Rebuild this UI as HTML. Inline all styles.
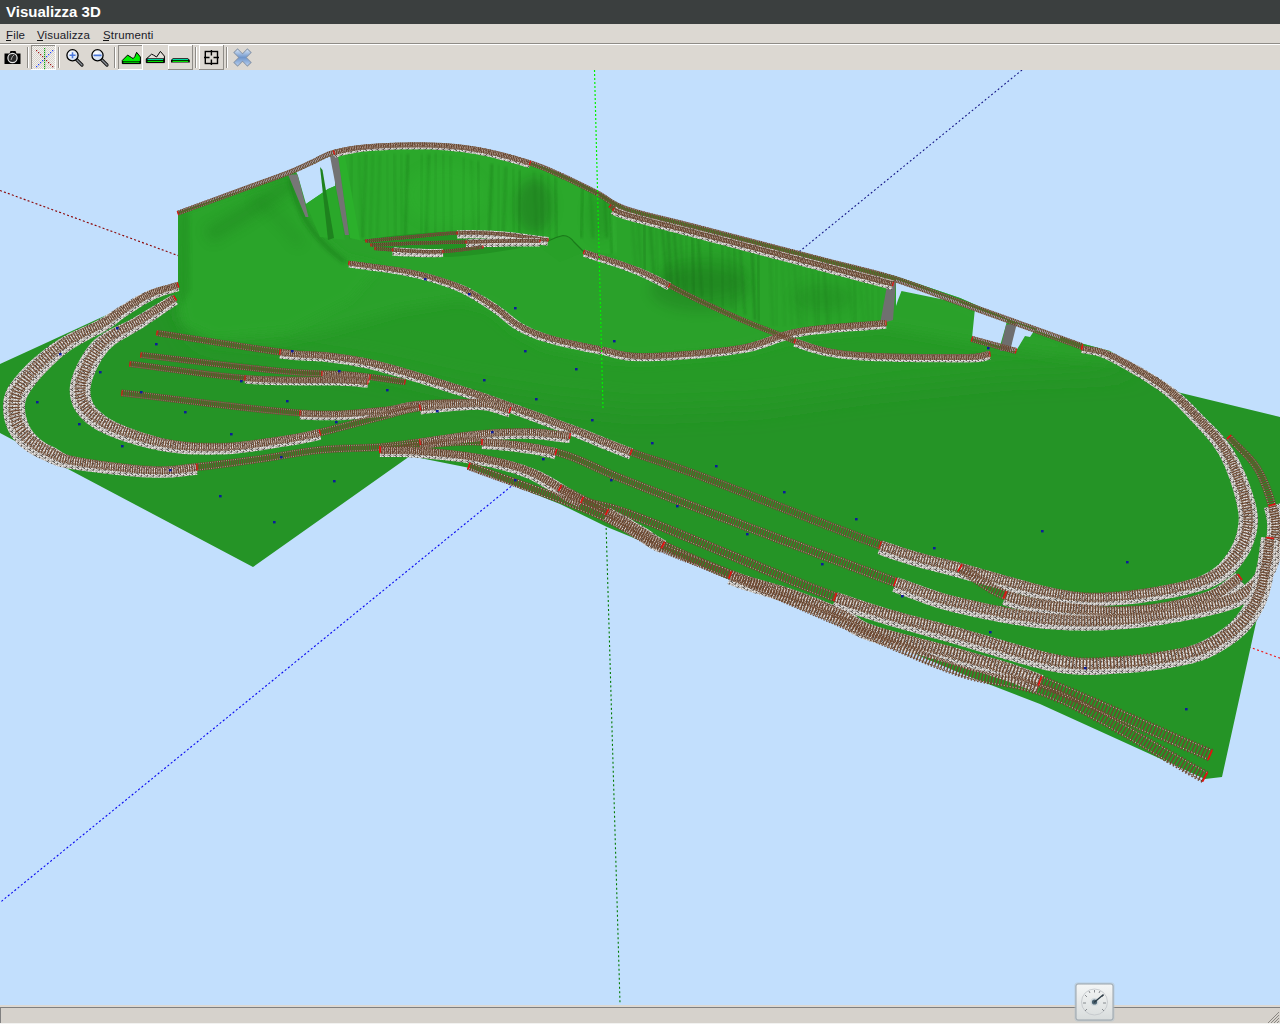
<!DOCTYPE html>
<html><head><meta charset="utf-8">
<style>
html,body{margin:0;padding:0;width:1280px;height:1024px;overflow:hidden;background:#c2dffd;font-family:"Liberation Sans",sans-serif}
#title{position:absolute;left:0;top:0;width:1280px;height:24px;background:#3b3f3f}
#title span{position:absolute;left:6px;top:3px;font:bold 15px "Liberation Sans",sans-serif;color:#fff}
#menu{position:absolute;left:0;top:24px;width:1280px;height:19px;background:#dcd8d2}
#menu span{position:absolute;top:3px;font-size:12px;color:#1a1a1a;line-height:14px}
#menu span u{text-decoration:none;border-bottom:1px solid #1a1a1a}
#scene{position:absolute;left:0;top:70px}
</style></head><body>
<div id="title"><span>Visualizza 3D</span></div>
<div id="menu"><svg width="200" height="19" style="position:absolute;left:0;top:0"><g font-family="Liberation Sans" font-size="11.5" fill="#1a1a28" letter-spacing="0.15"><text x="6" y="15">File</text><text x="37" y="15">Visualizza</text><text x="103" y="15">Strumenti</text></g><g fill="#111"><rect x="6" y="16" width="5" height="1"/><rect x="37" y="16" width="6" height="1"/><rect x="103" y="16" width="6" height="1"/></g></svg></div>
<svg width="1280" height="27" viewBox="0 43 1280 27" style="position:absolute;left:0;top:43px">
<defs>
<pattern id="chk" width="2" height="2" patternUnits="userSpaceOnUse"><rect width="2" height="2" fill="#f4f2ee"/><rect width="1" height="1" fill="#d6d2cc"/><rect x="1" y="1" width="1" height="1" fill="#d6d2cc"/></pattern>
<linearGradient id="xg" x1="0" y1="0" x2="0" y2="1"><stop offset="0" stop-color="#d8e6f8"/><stop offset="0.5" stop-color="#7fa2d0"/><stop offset="1" stop-color="#a9c2e6"/></linearGradient>
<linearGradient id="xg2" gradientUnits="userSpaceOnUse" x1="0" y1="49" x2="0" y2="66"><stop offset="0" stop-color="#dbe8f8"/><stop offset="0.5" stop-color="#6f96cc"/><stop offset="1" stop-color="#b8cfee"/></linearGradient>
<radialGradient id="lens" cx="0.4" cy="0.35" r="0.7"><stop offset="0" stop-color="#ffffff"/><stop offset="1" stop-color="#c8d8f0"/></radialGradient>
</defs>
<rect x="0" y="43" width="1280" height="1" fill="#8f8c87"/>
<rect x="0" y="44" width="1280" height="1" fill="#ffffff"/>
<rect x="0" y="45" width="1280" height="25" fill="#dcd8d2"/>
<!-- camera -->
<path d="M4.5 53.5 H9.5 L10.5 51 H15.5 L16.5 53.5 H20.5 V64 H4.5 Z" fill="#000"/>
<circle cx="12.5" cy="58" r="4.6" fill="#2a2a2a" stroke="#e8e8e8" stroke-width="1.2"/>
<path d="M11 60 Q12 56 14 55" stroke="#aaa" stroke-width="1" fill="none"/>
<!-- separators -->
<g fill="#8f8c87"><rect x="27" y="47" width="1" height="21"/><rect x="58" y="47" width="1" height="21"/><rect x="114" y="47" width="1" height="21"/><rect x="195" y="47" width="1" height="21"/><rect x="226" y="47" width="1" height="21"/></g>
<g fill="#ffffff"><rect x="28" y="47" width="1" height="21"/><rect x="59" y="47" width="1" height="21"/><rect x="115" y="47" width="1" height="21"/><rect x="196" y="47" width="1" height="21"/><rect x="227" y="47" width="1" height="21"/></g>
<!-- toggle axis button -->
<rect x="31" y="45" width="25" height="25" fill="#ffffff"/>
<rect x="31" y="45" width="24" height="24" fill="#8f8c87"/>
<rect x="32" y="46" width="23" height="23" fill="url(#chk)"/>
<g fill="#a01818"><rect x="36" y="50" width="1.2" height="1.2"/><rect x="38" y="52" width="1.2" height="1.2"/><rect x="40" y="54" width="1.2" height="1.2"/><rect x="42" y="56" width="1.2" height="1.2"/><rect x="46" y="60" width="1.2" height="1.2"/><rect x="48" y="62" width="1.2" height="1.2"/><rect x="50" y="64" width="1.2" height="1.2"/><rect x="52" y="66" width="1.2" height="1.2"/></g>
<g fill="#2040ff"><rect x="52" y="50" width="1.2" height="1.2"/><rect x="50" y="52" width="1.2" height="1.2"/><rect x="48" y="54" width="1.2" height="1.2"/><rect x="46" y="56" width="1.2" height="1.2"/><rect x="42" y="60" width="1.2" height="1.2"/><rect x="40" y="62" width="1.2" height="1.2"/><rect x="38" y="64" width="1.2" height="1.2"/><rect x="36" y="66" width="1.2" height="1.2"/></g>
<g fill="#10a010"><rect x="44" y="48" width="1.2" height="1.2"/><rect x="44" y="50" width="1.2" height="1.2"/><rect x="44" y="52" width="1.2" height="1.2"/><rect x="44" y="54" width="1.2" height="1.2"/><rect x="44" y="56" width="1.2" height="1.2"/><rect x="44" y="60" width="1.2" height="1.2"/><rect x="44" y="62" width="1.2" height="1.2"/><rect x="44" y="64" width="1.2" height="1.2"/><rect x="44" y="66" width="1.2" height="1.2"/><rect x="44" y="68" width="1.2" height="1.2"/></g>
<rect x="44" y="58" width="1.2" height="1.2" fill="#111"/>
<!-- zoom icons -->
<g>
<path d="M76.5 59.5 L82 65" stroke="#111" stroke-width="3.2" stroke-linecap="round"/>
<path d="M76.5 59.5 L82 65" stroke="#8a9098" stroke-width="1.4" stroke-linecap="round"/>
<circle cx="72.5" cy="55.3" r="5.6" fill="url(#lens)" stroke="#000" stroke-width="1.3"/>
<path d="M69.5 55.3 H75.5 M72.5 52.3 V58.3" stroke="#4a78dc" stroke-width="1.6"/>
<path d="M101.5 59.5 L107 65" stroke="#111" stroke-width="3.2" stroke-linecap="round"/>
<path d="M101.5 59.5 L107 65" stroke="#8a9098" stroke-width="1.4" stroke-linecap="round"/>
<circle cx="97.5" cy="55.3" r="5.6" fill="url(#lens)" stroke="#000" stroke-width="1.3"/>
<path d="M94.3 55.3 H100.7" stroke="#4a78dc" stroke-width="1.8" stroke-linecap="round"/>
</g>
<!-- terrain buttons -->
<rect x="118" y="45" width="25" height="25" fill="#ffffff"/>
<rect x="118" y="45" width="24" height="24" fill="#8f8c87"/>
<rect x="119" y="46" width="23" height="23" fill="#dcd8d2"/>
<path d="M122.3 60.4 L127.6 55.1 L131.6 57.6 L133.2 58.6 L134.8 56.7 L136.6 52.3 L140.4 57 V63.6 H122.3 Z" fill="#00f000" stroke="#000" stroke-width="1"/>
<rect x="122.3" y="61" width="18.1" height="2.6" fill="#000"/><rect x="123.3" y="61.6" width="16.1" height="1.2" fill="#00e000"/>
<path d="M146.3 58.9 L151.6 54.2 L153.5 55.1 L156.6 57 L160.4 51.4 L164.4 56.1 V62.6 H146.3 Z" fill="#e4e0da" stroke="#000" stroke-width="1"/>
<rect x="146.3" y="58.3" width="18.1" height="4.3" fill="#000"/><rect x="147.5" y="59" width="15.7" height="1" fill="#00d8a0"/><rect x="147.5" y="60.8" width="15.7" height="1.2" fill="#00e000"/>
<rect x="168" y="45" width="25" height="25" fill="#8f8c87"/>
<rect x="168" y="45" width="24" height="24" fill="#ffffff"/>
<rect x="169" y="46" width="23" height="23" fill="#dcd8d2"/>
<path d="M171 60.1 L172.9 58.3 H187.9 L189.8 60.1 V62.6 H171 Z" fill="#000"/>
<rect x="172.5" y="59" width="15.7" height="1" fill="#00d8a0"/><rect x="172.5" y="60.8" width="15.7" height="1.2" fill="#00e000"/>
<!-- crosshair button -->
<rect x="199" y="45" width="25" height="25" fill="#8f8c87"/>
<rect x="199" y="45" width="24" height="24" fill="#ffffff"/>
<rect x="200" y="46" width="23" height="23" fill="#dcd8d2"/>
<rect x="205.3" y="51.5" width="12.2" height="12" fill="none" stroke="#000" stroke-width="1.4"/>
<path d="M211.4 50 V55.5 M211.4 59.5 V65 M204 57.5 H209.5 M213.5 57.5 H219" stroke="#000" stroke-width="1.4"/>
<!-- blue X -->
<path d="M237.6 52.6 L247.4 62.4 M247.4 52.6 L237.6 62.4" stroke="#8896aa" stroke-width="6.2" stroke-linecap="square"/>
<path d="M237.6 52.6 L247.4 62.4 M247.4 52.6 L237.6 62.4" stroke="url(#xg2)" stroke-width="4.4" stroke-linecap="square"/>
</svg>
<svg id="scene" width="1280" height="935" viewBox="0 70 1280 935">
<defs>
<filter id="blur1" x="-50%" y="-50%" width="200%" height="200%"><feGaussianBlur stdDeviation="1"/></filter>
<filter id="blur2" x="-20%" y="-20%" width="140%" height="140%"><feGaussianBlur stdDeviation="2"/></filter>
<filter id="blur4" x="-20%" y="-20%" width="140%" height="140%"><feGaussianBlur stdDeviation="4"/></filter>
<filter id="blur6" x="-50%" y="-50%" width="200%" height="200%"><feGaussianBlur stdDeviation="6"/></filter>
<filter id="blur12" x="-20%" y="-20%" width="140%" height="140%"><feGaussianBlur stdDeviation="12"/></filter>
<pattern id="bal" width="6" height="6" patternUnits="userSpaceOnUse">
<rect x="0" y="0" width="1" height="1" fill="#5a5654"/><rect x="1" y="0" width="1" height="1" fill="#e8e6e4"/><rect x="2" y="0" width="1" height="1" fill="#e8e6e4"/><rect x="3" y="0" width="1" height="1" fill="#b4b0ac"/><rect x="4" y="0" width="1" height="1" fill="#e8e6e4"/><rect x="5" y="0" width="1" height="1" fill="#b4b0ac"/><rect x="0" y="1" width="1" height="1" fill="#d8d4d0"/><rect x="1" y="1" width="1" height="1" fill="#a8a4a0"/><rect x="2" y="1" width="1" height="1" fill="#b4b0ac"/><rect x="3" y="1" width="1" height="1" fill="#5a5654"/><rect x="4" y="1" width="1" height="1" fill="#b4b0ac"/><rect x="5" y="1" width="1" height="1" fill="#d8d4d0"/><rect x="0" y="2" width="1" height="1" fill="#a8a4a0"/><rect x="1" y="2" width="1" height="1" fill="#c4c0bc"/><rect x="2" y="2" width="1" height="1" fill="#8c8884"/><rect x="3" y="2" width="1" height="1" fill="#8c8884"/><rect x="4" y="2" width="1" height="1" fill="#d8d4d0"/><rect x="5" y="2" width="1" height="1" fill="#c4c0bc"/><rect x="0" y="3" width="1" height="1" fill="#c4c0bc"/><rect x="1" y="3" width="1" height="1" fill="#b4b0ac"/><rect x="2" y="3" width="1" height="1" fill="#e8e6e4"/><rect x="3" y="3" width="1" height="1" fill="#c4c0bc"/><rect x="4" y="3" width="1" height="1" fill="#e8e6e4"/><rect x="5" y="3" width="1" height="1" fill="#c4c0bc"/><rect x="0" y="4" width="1" height="1" fill="#5a5654"/><rect x="1" y="4" width="1" height="1" fill="#d8d4d0"/><rect x="2" y="4" width="1" height="1" fill="#d8d4d0"/><rect x="3" y="4" width="1" height="1" fill="#b4b0ac"/><rect x="4" y="4" width="1" height="1" fill="#c4c0bc"/><rect x="5" y="4" width="1" height="1" fill="#c4c0bc"/><rect x="0" y="5" width="1" height="1" fill="#b4b0ac"/><rect x="1" y="5" width="1" height="1" fill="#b4b0ac"/><rect x="2" y="5" width="1" height="1" fill="#c4c0bc"/><rect x="3" y="5" width="1" height="1" fill="#b4b0ac"/><rect x="4" y="5" width="1" height="1" fill="#8c8884"/><rect x="5" y="5" width="1" height="1" fill="#5a5654"/>
</pattern>
</defs>
<line x1="0" y1="190.5" x2="640" y2="424.4" stroke="#8c0808" stroke-width="1.15" stroke-dasharray="2 2.2"/><line x1="640" y1="424.4" x2="1280" y2="658.2" stroke="#f01818" stroke-width="1.15" stroke-dasharray="2 2.5"/>
<line x1="1022" y1="70" x2="700" y2="332.6" stroke="#0c0c80" stroke-width="1.05" stroke-dasharray="1.8 2.4"/>
<line x1="700" y1="332.6" x2="0" y2="902.5" stroke="#0808f0" stroke-width="1.1" stroke-dasharray="2 2.2"/>
<line x1="603" y1="420" x2="620" y2="1003" stroke="#007a00" stroke-width="1.1" stroke-dasharray="2 2.5"/>
<polygon points="0,364 48,342 100,318 140,300 178,282 178,212 289,174.5 334,153.5 370,146 430,144 480,149 530,162 560,173 595,190 626,208 895,276 960,298 1010,320 1080,343 1110,351 1177,392 1280,417 1280,514 1222,777 1205,779 1040,704 960,673 860,631 730,580 663,550 607,527 560,504 470,468 410,456 253,567 0,433" fill="#259426"/>
<clipPath id="bclip"><polygon points="0,364 48,342 100,318 140,300 178,282 178,212 289,174.5 334,153.5 370,146 430,144 480,149 530,162 560,173 595,190 626,208 895,276 960,298 1010,320 1080,343 1110,351 1177,392 1280,417 1280,514 1222,777 1205,779 1040,704 960,673 860,631 730,580 663,550 607,527 560,504 470,468 410,456 253,567 0,433"/></clipPath>
<g clip-path="url(#bclip)">
<polygon points="178,212 293,174 335,152 430,144 530,162 626,208 895,276 1080,343 1140,368 1100,372 1000,376 880,388 760,405 640,410 560,402 460,386 380,368 280,352 200,342 178,300" fill="#279a27" filter="url(#blur12)"/>
<polygon points="178,212 293,174 335,152 370,146 430,144 480,149 530,162 560,173 595,190 626,208 895,276 960,298 1010,320 1080,343 1110,351 1130,362 1060,356 972,343 880,327 800,335 740,352 640,360 600,357 545,346 515,330 490,308 460,300 400,310 330,330 270,342 210,340 180,320" fill="#29a129" filter="url(#blur6)"/>
<polygon points="178,212 293,175 305,218 320,237 345,258 380,266 350,300 290,330 215,338 185,325 178,290" fill="#2aa42a" filter="url(#blur4)"/>
<path d="M180 214 L189 212 L190 290 L182 305 L178 290Z" fill="#1d851d" opacity="0.35" filter="url(#blur2)"/>
<path d="M208 236 Q250 212 292 182" stroke="#1a7a1a" stroke-width="16" fill="none" opacity="0.3" filter="url(#blur6)"/>
<path d="M255 200 Q280 215 300 245" stroke="#1a7a1a" stroke-width="8" fill="none" opacity="0.2" filter="url(#blur6)"/>
<path d="M290 178 Q300 230 345 262" stroke="#176f17" stroke-width="4" fill="none" opacity="0.5" filter="url(#blur2)"/>
<polygon points="338,156 370,148 430,146 480,151 530,164 560,176 595,193 612,204 612,254 584,252 574,242 563,235.5 555,237 548,241 482,236 420,240 366,242 350,238" fill="#2ba82b"/>
<line x1="352" y1="154" x2="350" y2="238" stroke="#176f17" stroke-width="2.3" opacity="0.19" filter="url(#blur1)"/>
<line x1="359" y1="154" x2="362" y2="238" stroke="#176f17" stroke-width="2.6" opacity="0.13" filter="url(#blur1)"/>
<line x1="366" y1="154" x2="363" y2="238" stroke="#176f17" stroke-width="3.3" opacity="0.20" filter="url(#blur1)"/>
<line x1="373" y1="154" x2="370" y2="238" stroke="#176f17" stroke-width="2.4" opacity="0.17" filter="url(#blur1)"/>
<line x1="380" y1="154" x2="377" y2="238" stroke="#176f17" stroke-width="2.6" opacity="0.14" filter="url(#blur1)"/>
<line x1="387" y1="154" x2="388" y2="238" stroke="#176f17" stroke-width="1.7" opacity="0.13" filter="url(#blur1)"/>
<line x1="394" y1="154" x2="396" y2="238" stroke="#176f17" stroke-width="2.7" opacity="0.17" filter="url(#blur1)"/>
<line x1="401" y1="154" x2="402" y2="238" stroke="#176f17" stroke-width="2.3" opacity="0.13" filter="url(#blur1)"/>
<line x1="408" y1="154" x2="405" y2="238" stroke="#176f17" stroke-width="2.6" opacity="0.34" filter="url(#blur1)"/>
<line x1="415" y1="154" x2="415" y2="238" stroke="#176f17" stroke-width="1.8" opacity="0.15" filter="url(#blur1)"/>
<line x1="422" y1="154" x2="421" y2="238" stroke="#176f17" stroke-width="2.6" opacity="0.15" filter="url(#blur1)"/>
<line x1="429" y1="154" x2="426" y2="238" stroke="#176f17" stroke-width="2.7" opacity="0.28" filter="url(#blur1)"/>
<line x1="436" y1="153" x2="435" y2="238" stroke="#176f17" stroke-width="1.7" opacity="0.27" filter="url(#blur1)"/>
<line x1="443" y1="154" x2="444" y2="238" stroke="#176f17" stroke-width="1.6" opacity="0.28" filter="url(#blur1)"/>
<line x1="450" y1="156" x2="452" y2="238" stroke="#176f17" stroke-width="2.6" opacity="0.17" filter="url(#blur1)"/>
<line x1="457" y1="157" x2="457" y2="238" stroke="#176f17" stroke-width="2.7" opacity="0.30" filter="url(#blur1)"/>
<line x1="464" y1="158" x2="463" y2="238" stroke="#176f17" stroke-width="2.0" opacity="0.22" filter="url(#blur1)"/>
<line x1="471" y1="160" x2="474" y2="238" stroke="#176f17" stroke-width="2.0" opacity="0.16" filter="url(#blur1)"/>
<line x1="478" y1="161" x2="479" y2="238" stroke="#176f17" stroke-width="2.5" opacity="0.25" filter="url(#blur1)"/>
<line x1="485" y1="163" x2="485" y2="238" stroke="#176f17" stroke-width="2.1" opacity="0.20" filter="url(#blur1)"/>
<line x1="492" y1="164" x2="489" y2="238" stroke="#176f17" stroke-width="2.5" opacity="0.35" filter="url(#blur1)"/>
<line x1="499" y1="165" x2="498" y2="238" stroke="#176f17" stroke-width="1.8" opacity="0.16" filter="url(#blur1)"/>
<line x1="506" y1="167" x2="503" y2="238" stroke="#176f17" stroke-width="3.4" opacity="0.23" filter="url(#blur1)"/>
<line x1="513" y1="168" x2="514" y2="238" stroke="#176f17" stroke-width="2.6" opacity="0.14" filter="url(#blur1)"/>
<line x1="520" y1="170" x2="519" y2="238" stroke="#176f17" stroke-width="2.2" opacity="0.32" filter="url(#blur1)"/>
<line x1="527" y1="171" x2="527" y2="238" stroke="#176f17" stroke-width="2.7" opacity="0.20" filter="url(#blur1)"/>
<line x1="534" y1="172" x2="537" y2="238" stroke="#176f17" stroke-width="1.7" opacity="0.22" filter="url(#blur1)"/>
<line x1="541" y1="174" x2="543" y2="238" stroke="#176f17" stroke-width="2.8" opacity="0.18" filter="url(#blur1)"/>
<line x1="548" y1="175" x2="550" y2="238" stroke="#176f17" stroke-width="2.1" opacity="0.13" filter="url(#blur1)"/>
<line x1="555" y1="177" x2="557" y2="238" stroke="#176f17" stroke-width="3.1" opacity="0.25" filter="url(#blur1)"/>
<line x1="562" y1="178" x2="562" y2="238" stroke="#176f17" stroke-width="3.3" opacity="0.19" filter="url(#blur1)"/>
<line x1="569" y1="179" x2="569" y2="238" stroke="#176f17" stroke-width="2.2" opacity="0.20" filter="url(#blur1)"/>
<line x1="576" y1="181" x2="576" y2="238" stroke="#176f17" stroke-width="1.6" opacity="0.26" filter="url(#blur1)"/>
<line x1="583" y1="182" x2="581" y2="238" stroke="#176f17" stroke-width="3.0" opacity="0.30" filter="url(#blur1)"/>
<line x1="590" y1="184" x2="593" y2="238" stroke="#176f17" stroke-width="2.5" opacity="0.21" filter="url(#blur1)"/>
<line x1="597" y1="185" x2="597" y2="238" stroke="#176f17" stroke-width="2.6" opacity="0.16" filter="url(#blur1)"/>
<line x1="604" y1="186" x2="607" y2="238" stroke="#176f17" stroke-width="2.4" opacity="0.32" filter="url(#blur1)"/>
<ellipse cx="534" cy="206" rx="18" ry="28" fill="#125812" opacity="0.34" filter="url(#blur6)"/>
<ellipse cx="445" cy="195" rx="40" ry="30" fill="#35c035" opacity="0.18" filter="url(#blur6)"/>
<ellipse cx="600" cy="215" rx="12" ry="25" fill="#1a7a1a" opacity="0.25" filter="url(#blur6)"/>
<path d="M362 240 Q460 224 552 238 Q520 252 450 257 Q400 257 362 240 Z" fill="#239223"/>
<path d="M538 246 L548 241 Q556 237 563 235.5 Q570 236 574 242 L584 252 L560 262 Z" fill="#28a028"/>
<path d="M548 241 Q556 237 563 235.5 Q570 236 574 242 L584 252" stroke="#176f17" stroke-width="1.2" fill="none" opacity="0.8"/>
<polygon points="610,208 626,208 895,277 893,322 880,323 788,331 767,329 700,300 640,272 610,254" fill="#2aa42a"/>
<line x1="632" y1="218" x2="636" y2="269" stroke="#145f14" stroke-width="3.2" opacity="0.10" filter="url(#blur1)"/>
<line x1="638" y1="219" x2="641" y2="272" stroke="#145f14" stroke-width="2.5" opacity="0.14" filter="url(#blur1)"/>
<line x1="644" y1="221" x2="645" y2="274" stroke="#145f14" stroke-width="3.1" opacity="0.26" filter="url(#blur1)"/>
<line x1="650" y1="222" x2="654" y2="277" stroke="#145f14" stroke-width="3.1" opacity="0.23" filter="url(#blur1)"/>
<line x1="656" y1="224" x2="658" y2="279" stroke="#145f14" stroke-width="1.8" opacity="0.13" filter="url(#blur1)"/>
<line x1="662" y1="225" x2="667" y2="282" stroke="#145f14" stroke-width="2.8" opacity="0.25" filter="url(#blur1)"/>
<line x1="668" y1="227" x2="671" y2="284" stroke="#145f14" stroke-width="3.4" opacity="0.27" filter="url(#blur1)"/>
<line x1="674" y1="229" x2="678" y2="287" stroke="#145f14" stroke-width="2.8" opacity="0.28" filter="url(#blur1)"/>
<line x1="680" y1="230" x2="684" y2="289" stroke="#145f14" stroke-width="1.6" opacity="0.27" filter="url(#blur1)"/>
<line x1="686" y1="232" x2="687" y2="292" stroke="#145f14" stroke-width="2.7" opacity="0.11" filter="url(#blur1)"/>
<line x1="692" y1="233" x2="694" y2="294" stroke="#145f14" stroke-width="2.4" opacity="0.32" filter="url(#blur1)"/>
<line x1="698" y1="235" x2="702" y2="297" stroke="#145f14" stroke-width="2.0" opacity="0.34" filter="url(#blur1)"/>
<line x1="704" y1="236" x2="704" y2="299" stroke="#145f14" stroke-width="2.8" opacity="0.18" filter="url(#blur1)"/>
<line x1="710" y1="238" x2="712" y2="302" stroke="#145f14" stroke-width="2.3" opacity="0.23" filter="url(#blur1)"/>
<line x1="716" y1="240" x2="716" y2="304" stroke="#145f14" stroke-width="2.9" opacity="0.25" filter="url(#blur1)"/>
<line x1="722" y1="241" x2="723" y2="307" stroke="#145f14" stroke-width="2.5" opacity="0.19" filter="url(#blur1)"/>
<line x1="728" y1="243" x2="732" y2="309" stroke="#145f14" stroke-width="3.0" opacity="0.11" filter="url(#blur1)"/>
<line x1="734" y1="244" x2="736" y2="312" stroke="#145f14" stroke-width="2.3" opacity="0.21" filter="url(#blur1)"/>
<line x1="740" y1="246" x2="745" y2="315" stroke="#145f14" stroke-width="1.5" opacity="0.37" filter="url(#blur1)"/>
<line x1="746" y1="247" x2="746" y2="317" stroke="#145f14" stroke-width="2.4" opacity="0.16" filter="url(#blur1)"/>
<line x1="752" y1="249" x2="755" y2="320" stroke="#145f14" stroke-width="2.3" opacity="0.37" filter="url(#blur1)"/>
<line x1="758" y1="251" x2="759" y2="322" stroke="#145f14" stroke-width="3.1" opacity="0.26" filter="url(#blur1)"/>
<line x1="764" y1="252" x2="764" y2="325" stroke="#145f14" stroke-width="2.1" opacity="0.18" filter="url(#blur1)"/>
<line x1="770" y1="254" x2="773" y2="326" stroke="#145f14" stroke-width="3.0" opacity="0.10" filter="url(#blur1)"/>
<line x1="776" y1="255" x2="777" y2="326" stroke="#145f14" stroke-width="2.9" opacity="0.06" filter="url(#blur1)"/>
<line x1="782" y1="257" x2="785" y2="326" stroke="#145f14" stroke-width="3.1" opacity="0.05" filter="url(#blur1)"/>
<line x1="788" y1="258" x2="792" y2="326" stroke="#145f14" stroke-width="1.9" opacity="0.07" filter="url(#blur1)"/>
<line x1="794" y1="260" x2="799" y2="326" stroke="#145f14" stroke-width="3.0" opacity="0.11" filter="url(#blur1)"/>
<line x1="800" y1="262" x2="803" y2="326" stroke="#145f14" stroke-width="1.7" opacity="0.10" filter="url(#blur1)"/>
<line x1="806" y1="263" x2="807" y2="326" stroke="#145f14" stroke-width="1.5" opacity="0.10" filter="url(#blur1)"/>
<line x1="812" y1="265" x2="816" y2="326" stroke="#145f14" stroke-width="2.1" opacity="0.15" filter="url(#blur1)"/>
<line x1="818" y1="266" x2="819" y2="326" stroke="#145f14" stroke-width="1.9" opacity="0.16" filter="url(#blur1)"/>
<line x1="824" y1="268" x2="828" y2="326" stroke="#145f14" stroke-width="2.8" opacity="0.17" filter="url(#blur1)"/>
<line x1="830" y1="269" x2="831" y2="326" stroke="#145f14" stroke-width="1.9" opacity="0.06" filter="url(#blur1)"/>
<line x1="836" y1="271" x2="840" y2="326" stroke="#145f14" stroke-width="2.2" opacity="0.08" filter="url(#blur1)"/>
<line x1="842" y1="273" x2="842" y2="326" stroke="#145f14" stroke-width="1.6" opacity="0.08" filter="url(#blur1)"/>
<line x1="848" y1="274" x2="853" y2="326" stroke="#145f14" stroke-width="2.0" opacity="0.07" filter="url(#blur1)"/>
<line x1="854" y1="276" x2="856" y2="326" stroke="#145f14" stroke-width="2.7" opacity="0.12" filter="url(#blur1)"/>
<line x1="860" y1="277" x2="864" y2="326" stroke="#145f14" stroke-width="2.5" opacity="0.06" filter="url(#blur1)"/>
<line x1="866" y1="279" x2="869" y2="326" stroke="#145f14" stroke-width="1.9" opacity="0.12" filter="url(#blur1)"/>
<line x1="872" y1="280" x2="873" y2="326" stroke="#145f14" stroke-width="3.1" opacity="0.06" filter="url(#blur1)"/>
<line x1="878" y1="282" x2="879" y2="326" stroke="#145f14" stroke-width="1.8" opacity="0.08" filter="url(#blur1)"/>
<ellipse cx="705" cy="275" rx="45" ry="20" fill="#176f17" opacity="0.25" filter="url(#blur6)"/>
<ellipse cx="700" cy="290" rx="50" ry="22" fill="#145f14" opacity="0.22" filter="url(#blur6)"/>
<ellipse cx="823" cy="298" rx="30" ry="14" fill="#176f17" opacity="0.2" filter="url(#blur6)"/>
<path d="M612 212 L616 254" stroke="#3cc03c" stroke-width="5" opacity="0.3" filter="url(#blur2)"/>
<path d="M610 210 L612 254" stroke="#1a7a1a" stroke-width="2" opacity="0.35" filter="url(#blur1)"/>
</g>
<polygon points="296,171.5 334,154 335,155 335,186 328,189 306,204 298,176" fill="#c2dffd"/>
<polygon points="896,279.5 960,302 960,303 901.5,291 898,300 896,306" fill="#c2dffd"/>
<polygon points="940,295.5 1007,320 1006,325 1000,346 972,338 974.7,311 940,298" fill="#c2dffd"/>
<polygon points="1015,323 1060,339 1060,334 1040,327 1034,331 1030,337 1025,336 1016,351 1010,351" fill="#c2dffd"/>
<polygon points="306,204 328,189 335,186 345,240 320,237" fill="#2aa82a"/>
<polygon points="320,167 322.5,170 334,238 328,240" fill="#1e821e"/>
<polygon points="338,156 345,156 360,240 350,238" fill="#2bb02b"/>
<polygon points="288,174.5 297.5,174.5 308.5,217 305.5,217" fill="#777777"/>
<polygon points="330,156 338,156 349,235 345,235" fill="#737373"/>
<polygon points="888,280 896,280 893,320 880,324" fill="#707070"/>
<polygon points="1006,325 1017,323 1010,351 1000,351" fill="#6e6e6e"/>
<path d="M457.1 238.6 L461.5 238.5 L465.8 238.4 L470 238.3 L474.2 238.4 L478.3 238.5 L482.5 238.6 L486.7 238.8 L490.9 239 L495.2 239.3 L499.7 239.7 L503.4 240 L507.3 240.4 L511.2 240.9 L515.1 241.4 L519.1 241.9 L523.1 242.4 L527.1 243 L531.2 243.6 L535.3 244.1 L539.4 244.7 L543.4 245.2 L547.4 245.7 L548.6 237.1 L544.5 236.6 L540.5 236.1 L536.5 235.5 L532.4 234.9 L528.3 234.4 L524.3 233.8 L520.2 233.3 L516.2 232.8 L512.1 232.3 L508.2 231.9 L504.2 231.5 L500.3 231.2 L495.8 230.9 L491.4 230.6 L487.1 230.4 L482.8 230.3 L478.5 230.2 L474.3 230.1 L470 230.1 L465.7 230.1 L461.3 230.2 L456.9 230.3 Z" fill="url(#bal)"/>
<path d="M366.2 242.7L365.8 239.3M367.8 242.5L367.5 239.2M369.5 242.4L369.2 239M371.2 242.2L370.9 238.9M372.9 242.1L372.6 238.7M374.6 241.9L374.3 238.6M376.3 241.7L376 238.4M378 241.6L377.7 238.2M379.7 241.4L379.4 238.1M381.4 241.3L381.1 237.9M383.1 241.1L382.8 237.8M384.8 241L384.5 237.6M386.5 240.8L386.2 237.5M388.2 240.7L387.9 237.3M389.9 240.5L389.5 237.2M391.5 240.3L391.2 237M393.2 240.2L392.9 236.8M394.9 240L394.6 236.7M396.6 239.9L396.3 236.5M398.3 239.7L398 236.4M400 239.6L399.7 236.2M401.7 239.4L401.4 236.1M403.4 239.3L403.1 235.9M405.1 239.1L404.8 235.8M406.8 239L406.5 235.6M408.5 238.8L408.2 235.5M410.2 238.7L409.9 235.3M411.9 238.5L411.6 235.2M413.6 238.4L413.2 235M415.3 238.2L414.9 234.9M417 238L416.6 234.7M418.6 237.9L418.3 234.5M420.3 237.7L420 234.4M422 237.5L421.7 234.2M423.7 237.4L423.4 234M425.4 237.2L425.1 233.8M427.1 237L426.8 233.7M428.8 236.8L428.5 233.5M430.5 236.7L430.2 233.3M432.2 236.5L431.9 233.2M433.9 236.3L433.5 233M435.6 236.2L435.2 232.8M437.2 236L436.9 232.7M438.9 235.9L438.6 232.5M440.6 235.7L440.3 232.4M442.3 235.6L442 232.2M444 235.4L443.7 232.1M445.7 235.3L445.5 232M447.4 235.2L447.1 231.8M449 235.1L448.9 231.7M450.7 235L450.6 231.6M452.4 234.9L452.3 231.5M454.1 234.8L454 231.4M455.8 234.7L455.7 231.4M457.5 234.7L457.4 231.3M459.2 234.6L459.1 231.3M460.9 234.6L460.8 231.2M462.6 234.5L462.5 231.2M464.3 234.5L464.2 231.1M465.9 234.5L465.9 231.1M467.6 234.5L467.6 231.1M469.3 234.5L469.3 231.1M471 234.5L471.1 231.1M472.7 234.5L472.8 231.1M474.4 234.5L474.5 231.1M476.1 234.5L476.2 231.2M477.8 234.5L477.9 231.2M479.5 234.6L479.6 231.2M481.2 234.6L481.3 231.3M482.9 234.7L483 231.3M484.6 234.8L484.7 231.4M486.3 234.8L486.4 231.5M487.9 234.9L488.1 231.6M489.6 235L489.8 231.6M491.3 235.1L491.5 231.7M493 235.2L493.2 231.8M494.7 235.3L494.9 232M496.4 235.4L496.6 232.1M498.1 235.5L498.3 232.2M499.8 235.7L500 232.3M501.4 235.8L501.8 232.5M503.1 236L503.4 232.6M504.8 236.1L505.2 232.8M506.5 236.3L506.9 232.9M508.2 236.5L508.6 233.1M509.9 236.6L510.3 233.3M511.5 236.8L512 233.5M513.2 237L513.6 233.7M514.9 237.2L515.3 233.9M516.6 237.4L517 234.1M518.3 237.7L518.7 234.3M520 237.9L520.4 234.6M521.6 238.1L522.1 234.8M523.3 238.3L523.8 235M525 238.6L525.5 235.2M526.7 238.8L527.2 235.5M528.4 239L528.8 235.7M530.1 239.3L530.5 235.9M531.7 239.5L532.2 236.2M533.4 239.7L533.9 236.4M535.1 240L535.6 236.6M536.8 240.2L537.2 236.9M538.5 240.4L538.9 237.1M540.2 240.7L540.6 237.3M541.9 240.9L542.3 237.6M543.5 241.1L544 237.8M545.2 241.3L545.7 238M546.9 241.6L547.3 238.2" stroke="#6e4830" stroke-width="1.2" fill="none"/>
<path d="M366.1 242.2 L370.1 241.8 L374.1 241.5 L378 241.1 L382 240.7 L385.9 240.4 L389.9 240 L393.9 239.6 L397.9 239.3 L401.9 238.9 L406 238.6 L410.1 238.2 L414.3 237.8 L418.5 237.4 L422.8 237 L427.2 236.5 L431.5 236.1 L435.8 235.7 L440.2 235.3 L444.5 234.9 L448.7 234.6 L452.9 234.4 L457 234.2 L461.5 234.1 L465.8 234 L470 234 L474.2 234 L478.4 234.1 L482.6 234.2 L486.8 234.4 L491.1 234.6 L495.4 234.9 L499.9 235.2 L503.7 235.5 L507.6 235.9 L511.5 236.3 L515.5 236.8 L519.5 237.3 L523.5 237.9 L527.6 238.4 L531.6 239 L535.7 239.6 L539.8 240.1 L543.8 240.7 L547.8 241.2M365.9 239.8 L369.9 239.4 L373.8 239.1 L377.8 238.7 L381.8 238.4 L385.7 238 L389.7 237.6 L393.7 237.3 L397.7 236.9 L401.7 236.5 L405.8 236.2 L409.9 235.8 L414.1 235.4 L418.3 235 L422.6 234.6 L426.9 234.1 L431.3 233.7 L435.6 233.3 L440 232.9 L444.3 232.5 L448.6 232.2 L452.8 232 L457 231.8 L461.4 231.7 L465.8 231.6 L470 231.6 L474.3 231.6 L478.5 231.7 L482.7 231.8 L486.9 232 L491.2 232.2 L495.6 232.5 L500.1 232.8 L503.9 233.1 L507.8 233.5 L511.8 234 L515.8 234.4 L519.8 235 L523.8 235.5 L527.9 236.1 L532 236.6 L536 237.2 L540.1 237.8 L544.1 238.3 L548.2 238.8" stroke="#5e3e28" stroke-width="0.9" fill="none"/>
<path d="M366.1 242.2 L370.1 241.8 L374.1 241.5 L378 241.1 L382 240.7 L385.9 240.4 L389.9 240 L393.9 239.6 L397.9 239.3 L401.9 238.9 L406 238.6 L410.1 238.2 L414.3 237.8 L418.5 237.4 L422.8 237 L427.2 236.5 L431.5 236.1 L435.8 235.7 L440.2 235.3 L444.5 234.9 L448.7 234.6 L452.9 234.4 L457 234.2 L461.5 234.1 L465.8 234 L470 234 L474.2 234 L478.4 234.1 L482.6 234.2 L486.8 234.4 L491.1 234.6 L495.4 234.9 L499.9 235.2 L503.7 235.5 L507.6 235.9 L511.5 236.3 L515.5 236.8 L519.5 237.3 L523.5 237.9 L527.6 238.4 L531.6 239 L535.7 239.6 L539.8 240.1 L543.8 240.7 L547.8 241.2" stroke="#f2ece6" stroke-width="0.7" fill="none" stroke-dasharray="0.8 1.2" opacity="0.35"/>
<path d="M365.9 239.8 L369.9 239.4 L373.8 239.1 L377.8 238.7 L381.8 238.4 L385.7 238 L389.7 237.6 L393.7 237.3 L397.7 236.9 L401.7 236.5 L405.8 236.2 L409.9 235.8 L414.1 235.4 L418.3 235 L422.6 234.6 L426.9 234.1 L431.3 233.7 L435.6 233.3 L440 232.9 L444.3 232.5 L448.6 232.2 L452.8 232 L457 231.8 L461.4 231.7 L465.8 231.6 L470 231.6 L474.3 231.6 L478.5 231.7 L482.7 231.8 L486.9 232 L491.2 232.2 L495.6 232.5 L500.1 232.8 L503.9 233.1 L507.8 233.5 L511.8 234 L515.8 234.4 L519.8 235 L523.8 235.5 L527.9 236.1 L532 236.6 L536 237.2 L540.1 237.8 L544.1 238.3 L548.2 238.8" stroke="#f2ece6" stroke-width="0.7" fill="none" stroke-dasharray="0.8 1.2" opacity="0.35"/>
<path d="M466.1 247.6 L470.2 247.5 L474.4 247.4 L478.6 247.3 L482.8 247.2 L487 247.1 L491.2 247 L495.2 246.9 L499.2 246.8 L503 246.7 L506.6 246.6 L510.1 246.6 L515.1 246.5 L519.6 246.5 L523.8 246.5 L527.9 246.5 L531.8 246.5 L535.8 246.5 L540 246.5 L540 238.3 L535.9 238.3 L531.9 238.3 L527.9 238.3 L523.8 238.3 L519.6 238.3 L515 238.3 L509.9 238.3 L506.5 238.4 L502.8 238.4 L499 238.5 L495 238.6 L491 238.7 L486.8 238.8 L482.6 238.9 L478.4 239 L474.2 239.1 L470 239.2 L465.9 239.3 Z" fill="url(#bal)"/>
<path d="M371.1 246.7L370.9 243.3M372.8 246.6L372.6 243.3M374.5 246.5L374.3 243.2M376.2 246.5L376 243.1M377.9 246.4L377.7 243M379.6 246.3L379.4 243M381.3 246.2L381.1 242.9M383 246.2L382.8 242.8M384.7 246.1L384.5 242.7M386.4 246L386.2 242.7M388.1 246L387.9 242.6M389.8 245.9L389.6 242.5M391.5 245.8L391.3 242.4M393.2 245.7L393 242.4M394.9 245.7L394.7 242.3M396.5 245.6L396.4 242.2M398.2 245.5L398.1 242.2M399.9 245.4L399.8 242.1M401.6 245.4L401.5 242M403.3 245.3L403.2 241.9M405 245.2L404.9 241.9M406.7 245.2L406.6 241.8M408.4 245.1L408.3 241.7M410.1 245L410 241.7M411.8 245L411.7 241.6M413.5 244.9L413.4 241.5M415.2 244.8L415.1 241.5M416.9 244.8L416.8 241.4M418.6 244.7L418.5 241.4M420.3 244.7L420.2 241.3M422 244.6L421.9 241.3M423.7 244.6L423.6 241.2M425.4 244.5L425.3 241.2M427.1 244.5L427 241.1M428.8 244.4L428.7 241.1M430.5 244.4L430.4 241M432.2 244.4L432.1 241M433.9 244.3L433.8 241M435.6 244.3L435.5 240.9M437.3 244.2L437.2 240.9M439 244.2L438.9 240.8M440.7 244.2L440.6 240.8M442.4 244.1L442.3 240.8M444.1 244.1L444 240.7M445.8 244.1L445.7 240.7M447.5 244L447.4 240.7M449.2 244L449.1 240.6M450.9 244L450.8 240.6M452.6 243.9L452.5 240.6M454.3 243.9L454.2 240.6M456 243.9L455.9 240.5M457.7 243.9L457.6 240.5M459.4 243.8L459.3 240.5M461.1 243.8L461 240.4M462.8 243.7L462.7 240.4M464.5 243.7L464.4 240.4M466.2 243.7L466.1 240.3M467.9 243.6L467.8 240.3M469.6 243.6L469.5 240.2M471.3 243.6L471.2 240.2M473 243.5L472.9 240.2M474.7 243.5L474.6 240.1M476.4 243.4L476.3 240.1M478.1 243.4L478 240M479.8 243.3L479.7 240M481.5 243.3L481.4 239.9M483.2 243.3L483.1 239.9M484.9 243.2L484.8 239.9M486.6 243.2L486.5 239.8M488.3 243.1L488.2 239.8M490 243.1L489.9 239.7M491.7 243.1L491.6 239.7M493.4 243L493.3 239.7M495.1 243L495 239.6M496.8 242.9L496.7 239.6M498.5 242.9L498.4 239.5M500.2 242.9L500.1 239.5M501.9 242.8L501.8 239.5M503.6 242.8L503.5 239.4M505.3 242.8L505.2 239.4M507 242.7L506.9 239.4M508.7 242.7L508.6 239.3M510.3 242.7L510.3 239.3M512 242.7L512 239.3M513.7 242.6L513.7 239.3M515.4 242.6L515.4 239.3M517.1 242.6L517.1 239.3M518.8 242.6L518.8 239.3M520.5 242.6L520.5 239.2M522.2 242.6L522.2 239.2M523.9 242.6L523.9 239.3M525.6 242.6L525.6 239.3M527.3 242.6L527.3 239.3M529 242.6L529 239.3M530.7 242.6L530.7 239.3M532.4 242.7L532.4 239.3M534.1 242.7L534.1 239.3M535.8 242.7L535.8 239.3M537.5 242.7L537.5 239.3M539.2 242.7L539.2 239.3" stroke="#6e4830" stroke-width="1.2" fill="none"/>
<path d="M371 246.2 L375.1 246 L379.3 245.9 L383.4 245.7 L387.5 245.5 L391.6 245.3 L395.7 245.1 L399.8 245 L403.9 244.8 L408 244.6 L412.1 244.5 L416.1 244.3 L420 244.2 L424.3 244.1 L428.6 244 L432.8 243.9 L437.1 243.8 L441.2 243.7 L445.4 243.6 L449.6 243.5 L453.7 243.4 L457.8 243.4 L461.9 243.3 L466 243.2 L470.2 243.1 L474.3 243 L478.6 242.9 L482.8 242.8 L487 242.7 L491.1 242.6 L495.1 242.5 L499.1 242.4 L502.9 242.3 L506.6 242.3 L510 242.2 L515 242.1 L519.6 242.1 L523.8 242.1 L527.9 242.1 L531.8 242.2 L535.8 242.2 L540 242.2M371 243.8 L375 243.6 L379.1 243.5 L383.3 243.3 L387.4 243.1 L391.5 242.9 L395.6 242.7 L399.7 242.6 L403.8 242.4 L407.9 242.2 L412 242.1 L416 241.9 L420 241.8 L424.3 241.7 L428.5 241.6 L432.8 241.5 L437 241.4 L441.2 241.3 L445.4 241.2 L449.5 241.1 L453.7 241 L457.8 241 L461.9 240.9 L466 240.8 L470.1 240.7 L474.3 240.6 L478.5 240.5 L482.7 240.4 L486.9 240.3 L491 240.2 L495.1 240.1 L499 240 L502.9 239.9 L506.5 239.9 L510 239.8 L515 239.7 L519.6 239.7 L523.8 239.7 L527.9 239.7 L531.8 239.8 L535.8 239.8 L540 239.8" stroke="#5e3e28" stroke-width="0.9" fill="none"/>
<path d="M371 246.2 L375.1 246 L379.3 245.9 L383.4 245.7 L387.5 245.5 L391.6 245.3 L395.7 245.1 L399.8 245 L403.9 244.8 L408 244.6 L412.1 244.5 L416.1 244.3 L420 244.2 L424.3 244.1 L428.6 244 L432.8 243.9 L437.1 243.8 L441.2 243.7 L445.4 243.6 L449.6 243.5 L453.7 243.4 L457.8 243.4 L461.9 243.3 L466 243.2 L470.2 243.1 L474.3 243 L478.6 242.9 L482.8 242.8 L487 242.7 L491.1 242.6 L495.1 242.5 L499.1 242.4 L502.9 242.3 L506.6 242.3 L510 242.2 L515 242.1 L519.6 242.1 L523.8 242.1 L527.9 242.1 L531.8 242.2 L535.8 242.2 L540 242.2" stroke="#f2ece6" stroke-width="0.7" fill="none" stroke-dasharray="0.8 1.2" opacity="0.35"/>
<path d="M371 243.8 L375 243.6 L379.1 243.5 L383.3 243.3 L387.4 243.1 L391.5 242.9 L395.6 242.7 L399.7 242.6 L403.8 242.4 L407.9 242.2 L412 242.1 L416 241.9 L420 241.8 L424.3 241.7 L428.5 241.6 L432.8 241.5 L437 241.4 L441.2 241.3 L445.4 241.2 L449.5 241.1 L453.7 241 L457.8 241 L461.9 240.9 L466 240.8 L470.1 240.7 L474.3 240.6 L478.5 240.5 L482.7 240.4 L486.9 240.3 L491 240.2 L495.1 240.1 L499 240 L502.9 239.9 L506.5 239.9 L510 239.8 L515 239.7 L519.6 239.7 L523.8 239.7 L527.9 239.7 L531.8 239.8 L535.8 239.8 L540 239.8" stroke="#f2ece6" stroke-width="0.7" fill="none" stroke-dasharray="0.8 1.2" opacity="0.35"/>
<path d="M392.3 255.5 L396.7 255.9 L401.1 256.2 L405.5 256.4 L409.8 256.6 L414 256.8 L418 257 L422.1 257.2 L426.1 257.3 L430.2 257.3 L434.3 257.3 L438.7 257.3 L443.2 257.1 L442.8 248.7 L438.4 249 L434.3 249.1 L430.2 249.1 L426.3 249 L422.4 248.8 L418.4 248.6 L414.4 248.4 L410.2 248.3 L406 248 L401.7 247.7 L397.3 247.4 L393 247.1 Z" fill="url(#bal)"/>
<path d="M374.9 250.2L375.1 246.8M376.6 250.3L376.8 247M378.3 250.4L378.5 247.1M380 250.6L380.2 247.2M381.6 250.7L381.9 247.3M383.3 250.8L383.6 247.5M385 251L385.3 247.6M386.7 251.1L387 247.7M388.4 251.2L388.7 247.9M390.1 251.4L390.4 248M391.8 251.5L392.1 248.1M393.5 251.6L393.8 248.3M395.2 251.8L395.5 248.4M396.9 251.9L397.1 248.5M398.6 252L398.8 248.7M400.3 252.1L400.5 248.8M402 252.2L402.2 248.9M403.7 252.3L403.9 249M405.4 252.4L405.6 249.1M407.1 252.5L407.3 249.2M408.8 252.6L409 249.3M410.5 252.7L410.7 249.3M412.2 252.8L412.4 249.4M413.9 252.9L414.1 249.5M415.6 252.9L415.8 249.6M417.3 253L417.5 249.7M419 253.1L419.2 249.7M420.7 253.2L420.9 249.8M422.5 253.2L422.5 249.9M424.2 253.3L424.2 249.9M425.8 253.4L425.9 250M427.6 253.4L427.6 250M429.3 253.4L429.3 250.1M431 253.4L431 250.1M432.7 253.5L432.7 250.1M434.4 253.5L434.3 250.1M436.1 253.4L436 250.1M437.8 253.4L437.7 250M439.6 253.3L439.4 250M441.3 253.3L441.1 249.9M443 253.2L442.8 249.8M444.7 253.1L444.5 249.7M446.4 253L446.2 249.6M448.1 252.8L447.8 249.5M449.8 252.7L449.5 249.3M451.5 252.5L451.2 249.2M453.2 252.3L452.9 249M454.9 252.2L454.5 248.8M456.6 252L456.2 248.6M458.3 251.8L457.9 248.4M460 251.6L459.6 248.2M461.7 251.4L461.3 248M463.4 251.1L463 247.8M465.1 250.9L464.7 247.6M466.8 250.7L466.3 247.4M468.5 250.5L468 247.2M470.1 250.3L469.7 247M471.8 250.1L471.4 246.7M473.5 249.9L473.1 246.5M475.2 249.6L474.8 246.3M476.9 249.4L476.5 246.1M478.6 249.2L478.2 245.9M480.2 249L479.9 245.7M481.9 248.8L481.5 245.5" stroke="#6e4830" stroke-width="1.2" fill="none"/>
<path d="M374.9 249.7 L379.3 250 L383.7 250.4 L388.1 250.7 L392.5 251.1 L396.9 251.4 L401.3 251.7 L405.7 252 L409.9 252.2 L414.1 252.4 L418.2 252.6 L422.2 252.8 L426.2 252.9 L430.2 253 L434.3 253 L438.6 252.9 L443.1 252.7 L446.8 252.4 L450.7 252.1 L454.6 251.7 L458.6 251.3 L462.7 250.8 L466.8 250.2 L470.9 249.7 L475 249.2 L479.1 248.7 L483.1 248.2M375.1 247.3 L379.5 247.6 L383.9 248 L388.3 248.3 L392.7 248.7 L397.1 249 L401.5 249.3 L405.8 249.6 L410.1 249.8 L414.2 250 L418.3 250.2 L422.3 250.4 L426.2 250.5 L430.2 250.6 L434.3 250.6 L438.5 250.5 L442.9 250.3 L446.6 250.1 L450.4 249.7 L454.4 249.3 L458.4 248.9 L462.4 248.4 L466.5 247.8 L470.6 247.3 L474.7 246.8 L478.8 246.3 L482.9 245.8" stroke="#5e3e28" stroke-width="0.9" fill="none"/>
<path d="M374.9 249.7 L379.3 250 L383.7 250.4 L388.1 250.7 L392.5 251.1 L396.9 251.4 L401.3 251.7 L405.7 252 L409.9 252.2 L414.1 252.4 L418.2 252.6 L422.2 252.8 L426.2 252.9 L430.2 253 L434.3 253 L438.6 252.9 L443.1 252.7 L446.8 252.4 L450.7 252.1 L454.6 251.7 L458.6 251.3 L462.7 250.8 L466.8 250.2 L470.9 249.7 L475 249.2 L479.1 248.7 L483.1 248.2" stroke="#f2ece6" stroke-width="0.7" fill="none" stroke-dasharray="0.8 1.2" opacity="0.35"/>
<path d="M375.1 247.3 L379.5 247.6 L383.9 248 L388.3 248.3 L392.7 248.7 L397.1 249 L401.5 249.3 L405.8 249.6 L410.1 249.8 L414.2 250 L418.3 250.2 L422.3 250.4 L426.2 250.5 L430.2 250.6 L434.3 250.6 L438.5 250.5 L442.9 250.3 L446.6 250.1 L450.4 249.7 L454.4 249.3 L458.4 248.9 L462.4 248.4 L466.5 247.8 L470.6 247.3 L474.7 246.8 L478.8 246.3 L482.9 245.8" stroke="#f2ece6" stroke-width="0.7" fill="none" stroke-dasharray="0.8 1.2" opacity="0.35"/>
<path d="M335.1 157.6 L338.2 156.7 L341.5 155.8 L344.9 155 L348.4 154.2 L352.2 153.4 L356.2 152.8 L360.5 152.1 L365.2 151.6 L370.3 151.1 L373.6 150.8 L377.1 150.6 L380.8 150.4 L384.7 150.2 L388.7 150 L392.9 149.8 L397.1 149.7 L401.3 149.6 L405.6 149.5 L409.9 149.4 L414.1 149.4 L418.2 149.4 L422.3 149.4 L426.2 149.5 L429.9 149.6 L434.4 149.8 L438.7 150 L443 150.3 L447.2 150.6 L451.2 151 L455.3 151.4 L459.3 151.8 L463.3 152.3 L467.2 152.9 L471.2 153.5 L475.3 154.1 L479.3 154.9 L483.5 155.7 L487.8 156.6 L492.1 157.6 L496.5 158.7 L500.9 159.9 L505.3 161 L509.6 162.2 L513.8 163.4 L517.8 164.6 L521.7 165.8 L525.4 167 L528.8 168 L531.2 160.5 L527.7 159.5 L523.9 158.4 L520 157.2 L515.9 156 L511.6 154.8 L507.2 153.7 L502.8 152.5 L498.3 151.4 L493.8 150.4 L489.4 149.4 L485 148.5 L480.7 147.7 L476.5 147 L472.3 146.4 L468.2 145.8 L464.1 145.3 L460.1 144.8 L456 144.4 L451.8 144.1 L447.7 143.8 L443.4 143.5 L439.1 143.3 L434.7 143.1 L430.1 142.9 L426.3 142.9 L422.4 142.8 L418.3 142.8 L414.1 142.8 L409.8 142.8 L405.5 142.9 L401.2 143 L396.9 143.1 L392.6 143.2 L388.5 143.4 L384.4 143.6 L380.4 143.8 L376.7 144 L373.1 144.2 L369.7 144.4 L364.5 144.8 L359.7 145.3 L355.2 145.8 L351 146.4 L347.1 147 L343.3 147.7 L339.8 148.4 L336.3 149.2 L332.9 150 Z" fill="url(#bal)"/>
<path d="M178.8 215.2L177.2 210.8M180.4 214.7L178.8 210.2M182 214.1L180.4 209.6M183.6 213.5L182 209M185.2 212.9L183.6 208.4M186.8 212.3L185.2 207.8M188.4 211.8L186.8 207.3M190 211.2L188.4 206.7M191.6 210.6L190 206.1M193.2 210L191.5 205.5M194.8 209.4L193.1 204.9M196.4 208.9L194.7 204.3M198 208.3L196.3 203.7M199.6 207.7L197.9 203.2M201.2 207.1L199.5 202.6M202.8 206.5L201.1 202M204.4 206L202.7 201.4M206 205.4L204.3 200.8M207.6 204.8L205.9 200.2M209.2 204.2L207.5 199.6M210.8 203.6L209.1 199.1M212.4 203.1L210.7 198.5M214 202.5L212.3 197.9M215.6 201.9L213.9 197.3M217.2 201.3L215.5 196.7M218.8 200.7L217.1 196.1M220.4 200.2L218.7 195.5M222 199.6L220.3 195M223.6 199L221.9 194.4M225.2 198.4L223.5 193.8M226.8 197.8L225.1 193.2M228.4 197.3L226.7 192.6M230 196.7L228.3 192M231.5 196.1L229.9 191.4M233.1 195.5L231.4 190.9M234.7 194.9L233 190.3M236.3 194.4L234.6 189.7M237.9 193.8L236.2 189.1M239.5 193.2L237.8 188.5M241.1 192.6L239.4 187.9M242.7 192L241 187.3M244.3 191.5L242.6 186.8M245.9 190.9L244.2 186.2M247.5 190.3L245.8 185.6M249.1 189.7L247.4 185M250.7 189.1L249 184.4M252.3 188.6L250.6 183.8M253.9 188L252.2 183.3M255.5 187.4L253.8 182.7M257.1 186.8L255.4 182.1M258.7 186.3L257 181.5M260.3 185.7L258.6 180.9M261.9 185.1L260.2 180.4M263.5 184.5L261.8 179.8M265.1 184L263.4 179.2M266.7 183.4L265 178.6M268.3 182.8L266.6 178.1M269.9 182.3L268.2 177.5M271.5 181.7L269.8 176.9M273.1 181.1L271.4 176.3M274.7 180.5L273 175.8M276.3 180L274.6 175.2M277.9 179.4L276.2 174.6M279.5 178.8L277.8 174M281.1 178.2L279.4 173.4M282.8 177.6L280.9 172.8M284.4 177L282.5 172.2M285.9 176.4L284.1 171.6M287.6 175.8L285.7 171M289.2 175.2L287.2 170.4M290.8 174.6L288.8 169.8M292.4 173.9L290.4 169.2M293.9 173.3L291.9 168.5M295.5 172.6L293.4 167.9M297.1 171.9L295 167.2M298.7 171.3L296.5 166.5M300.3 170.6L298.1 165.8M301.8 169.9L299.6 165.1M303.4 169.1L301.1 164.4M304.9 168.4L302.7 163.7M306.4 167.7L304.2 162.9M308 167L305.8 162.2M309.5 166.3L307.3 161.5M311.1 165.6L308.9 160.8M312.7 164.9L310.3 160.1M314.2 164.1L311.9 159.4M315.8 163.4L313.4 158.7M317.3 162.6L314.9 157.9M318.8 161.8L316.4 157.1M320.3 161.1L317.9 156.3M321.8 160.3L319.4 155.5M323.2 159.6L321.1 154.7M324.8 158.9L322.6 153.9M326.3 158.1L324.1 153.2M327.7 157.6L325.9 152.5M329.3 156.9L327.4 151.8M330.7 156.4L329.2 151.2M332.3 155.9L330.8 150.7M333.9 155.4L332.4 150.2M335.5 154.9L334.1 149.7M337.1 154.5L335.8 149.2M338.7 154L337.5 148.8M340.4 153.6L339.2 148.4M342 153.2L340.9 148M343.6 152.9L342.5 147.7M345.2 152.5L344.3 147.3M346.9 152.2L345.9 147M348.5 151.8L347.7 146.7M350.2 151.5L349.3 146.4M351.8 151.2L351 146.1M353.5 151L352.7 145.9M355.1 150.7L354.4 145.6M356.8 150.5L356.2 145.4M358.4 150.2L357.9 145.2M360.1 150L359.5 145M361.8 149.8L361.3 144.8M363.5 149.6L363 144.6M365.1 149.5L364.7 144.4M366.8 149.3L366.4 144.3M368.5 149.1L368.1 144.2M370.2 149L369.8 144M371.9 148.9L371.5 143.9M373.5 148.7L373.2 143.8M375.2 148.6L374.9 143.6M376.9 148.5L376.6 143.5M378.6 148.4L378.3 143.4M380.3 148.3L380 143.3M382 148.3L381.7 143.2M383.7 148.2L383.4 143.1M385.4 148.1L385.2 143.1M387.1 148L386.9 143M388.7 147.9L388.6 142.9M390.4 147.9L390.3 142.8M392.1 147.8L392 142.8M393.8 147.8L393.7 142.7M395.5 147.7L395.4 142.6M397.2 147.6L397.1 142.6M398.9 147.6L398.8 142.5M400.6 147.6L400.5 142.5M402.3 147.5L402.2 142.5M404 147.5L403.9 142.4M405.7 147.5L405.6 142.4M407.4 147.4L407.3 142.4M409.1 147.4L409 142.3M410.8 147.4L410.7 142.3M412.5 147.4L412.4 142.3M414.1 147.4L414.2 142.3M415.8 147.4L415.9 142.3M417.5 147.4L417.6 142.3M419.2 147.4L419.3 142.3M420.9 147.4L421 142.3M422.6 147.4L422.7 142.3M424.3 147.4L424.4 142.3M426 147.5L426.1 142.3M427.7 147.5L427.8 142.4M429.4 147.5L429.5 142.4M431 147.6L431.2 142.5M432.7 147.7L432.9 142.5M434.4 147.7L434.7 142.6M436.1 147.8L436.4 142.7M437.8 147.9L438.1 142.7M439.5 148L439.8 142.8M441.2 148.1L441.5 142.9M442.9 148.2L443.2 143M444.5 148.3L444.9 143.1M446.2 148.4L446.6 143.2M447.9 148.5L448.3 143.4M449.6 148.7L450 143.5M451.3 148.8L451.7 143.6M452.9 149L453.5 143.8M454.6 149.1L455.1 143.9M456.3 149.3L456.9 144.1M458 149.5L458.6 144.3M459.6 149.6L460.3 144.5M461.3 149.8L462 144.7M463 150L463.7 144.9M464.7 150.3L465.4 145.1M466.4 150.5L467.1 145.3M468 150.7L468.8 145.5M469.7 151L470.5 145.8M471.4 151.2L472.2 146M473 151.5L473.9 146.3M474.7 151.8L475.6 146.6M476.3 152L477.3 146.9M478 152.3L478.9 147.1M479.6 152.6L480.7 147.4M481.3 152.9L482.3 147.8M483 153.2L484 148.1M484.6 153.6L485.7 148.4M486.3 153.9L487.4 148.8M487.9 154.3L489 149.1M489.5 154.6L490.7 149.5M491.2 155L492.4 149.9M492.8 155.4L494.1 150.3M494.5 155.8L495.7 150.7M496.1 156.2L497.4 151M497.7 156.6L499.1 151.5M499.4 157L500.7 151.9M501 157.4L502.4 152.3M502.7 157.9L504 152.7M504.3 158.3L505.7 153.2M505.9 158.7L507.3 153.6M507.6 159.2L509 154M509.2 159.6L510.6 154.5M510.8 160.1L512.3 155M512.5 160.6L513.9 155.4M514.1 161L515.6 155.9M515.7 161.5L517.2 156.4M517.3 162L518.8 156.8M518.9 162.4L520.5 157.3M520.6 162.9L522.1 157.8M522.2 163.4L523.8 158.3M523.8 163.9L525.4 158.8M525.4 164.4L527 159.3M527 164.9L528.7 159.8M528.7 165.4L530.3 160.3M530.2 165.9L532 160.8M531.9 166.4L533.6 161.3M533.5 167L535.2 161.8M535 167.5L536.9 162.4M536.6 168.1L538.5 163M538.2 168.6L540.1 163.6M539.8 169.2L541.7 164.1M541.3 169.8L543.3 164.7M542.9 170.4L545 165.4M544.4 171.1L546.5 166M546 171.7L548.1 166.7M547.5 172.4L549.7 167.4M549 173.1L551.3 168.1M550.6 173.8L552.8 168.8M552.1 174.5L554.4 169.5M553.7 175.2L556 170.2M555.2 175.9L557.5 170.9M556.8 176.6L559.1 171.5M558.3 177.3L560.6 172.2M559.9 178L562.2 172.9M561.4 178.7L563.7 173.6M562.9 179.4L565.3 174.4M564.5 180.1L566.8 175.1M566 180.8L568.4 175.8M567.5 181.5L569.9 176.5M569.1 182.3L571.5 177.2M570.6 183L573 178M572.1 183.7L574.5 178.7M573.6 184.5L576.1 179.4M575.2 185.2L577.6 180.2M576.7 186L579.2 180.9M578.2 186.7L580.7 181.7M579.7 187.4L582.2 182.4M581.3 188.2L583.8 183.2M582.8 189L585.3 183.9M584.3 189.7L586.8 184.7M585.8 190.5L588.3 185.5M587.3 191.2L589.9 186.2M588.8 192L591.4 187M590.3 192.8L592.9 187.7M591.9 193.5L594.4 188.5M593.3 194.3L596 189.3M594.8 195.1L597.5 190.1M596.2 195.8L599.1 190.9M597.7 196.6L600.6 191.8M599.2 197.5L602.1 192.6M600.5 198.3L603.6 193.6M601.9 199.2L605.1 194.5M603.3 200.1L606.5 195.4M604.7 201.1L607.9 196.4M606.1 202.1L609.3 197.3M607.5 203.1L610.7 198.3M609.1 204.1L612 199.1M610.5 205L613.4 200.1M612.2 206L614.7 200.8M613.6 206.8L616.2 201.6M615.3 207.7L617.5 202.4M616.9 208.4L619.1 203.1M618.4 209.1L620.6 203.8M620.1 209.8L622.1 204.4M621.7 210.4L623.7 205M623.3 211.1L625.2 205.6M624.8 211.7L626.8 206.2M626.6 212.2L628.3 206.7M628.2 212.8L629.9 207.2M629.8 213.3L631.5 207.8M631.5 213.8L633.1 208.2M633.1 214.3L634.7 208.7M634.8 214.8L636.3 209.2M636.4 215.3L638 209.7M638.1 215.7L639.6 210.1M639.7 216.2L641.2 210.5M641.4 216.6L642.9 211M643 217.1L644.5 211.4M644.7 217.5L646.1 211.8M646.3 217.9L647.8 212.3M648 218.4L649.4 212.7M649.6 218.8L651.1 213.1M651.3 219.2L652.7 213.5M652.9 219.6L654.4 213.9M654.6 220L656 214.3M656.3 220.4L657.6 214.7M657.9 220.8L659.3 215.1M659.6 221.2L660.9 215.5M661.2 221.6L662.6 215.9M662.9 222L664.2 216.3M664.5 222.4L665.9 216.7M666.2 222.8L667.6 217.1M667.8 223.2L669.2 217.5M669.5 223.6L670.9 217.9M671.1 224L672.5 218.3M672.8 224.4L674.2 218.7M674.4 224.8L675.8 219.1M676.1 225.2L677.5 219.5M677.7 225.7L679.1 219.9M679.4 226.1L680.8 220.3M681 226.5L682.4 220.7M682.7 226.9L684.1 221.1M684.3 227.3L685.8 221.6M686 227.7L687.4 222M687.6 228.1L689.1 222.4M689.2 228.5L690.7 222.8M690.9 229L692.4 223.2M692.5 229.4L694 223.6M694.2 229.8L695.7 224.1M695.8 230.2L697.3 224.5M697.5 230.7L699 224.9M699.1 231.1L700.6 225.3M700.7 231.5L702.2 225.8M702.4 232L703.9 226.2M704 232.4L705.5 226.6M705.7 232.8L707.2 227.1M707.3 233.2L708.8 227.5M709 233.7L710.5 227.9M710.6 234.1L712.1 228.3M712.3 234.5L713.8 228.8M713.9 235L715.4 229.2M715.5 235.4L717.1 229.6M717.2 235.8L718.7 230M718.8 236.3L720.3 230.5M720.5 236.7L722 230.9M722.1 237.1L723.6 231.3M723.8 237.5L725.3 231.7M725.4 238L726.9 232.2M727.1 238.4L728.6 232.6M728.7 238.8L730.2 233M730.4 239.3L731.9 233.5M732 239.7L733.5 233.9M733.6 240.1L735.2 234.3M735.3 240.6L736.8 234.7M736.9 241L738.4 235.2M738.6 241.4L740.1 235.6M740.2 241.8L741.7 236M741.9 242.3L743.4 236.4M743.5 242.7L745 236.9M745.2 243.1L746.7 237.3M746.8 243.6L748.3 237.7M748.4 244L750 238.1M750.1 244.4L751.6 238.6M751.7 244.9L753.3 239M753.4 245.3L754.9 239.4M755 245.7L756.5 239.9M756.7 246.1L758.2 240.3M758.3 246.6L759.8 240.7M760 247L761.5 241.1M761.6 247.4L763.1 241.6M763.2 247.9L764.8 242M764.9 248.3L766.4 242.4M766.5 248.7L768.1 242.8M768.2 249.1L769.7 243.3M769.8 249.6L771.4 243.7M771.5 250L773 244.1M773.1 250.4L774.6 244.5M774.8 250.9L776.3 245M776.4 251.3L777.9 245.4M778 251.7L779.6 245.8M779.7 252.2L781.2 246.3M781.3 252.6L782.9 246.7M783 253L784.5 247.1M784.6 253.4L786.2 247.5M786.3 253.9L787.8 248M787.9 254.3L789.5 248.4M789.6 254.7L791.1 248.8M791.2 255.2L792.7 249.2M792.9 255.6L794.4 249.7M794.5 256L796 250.1M796.1 256.5L797.7 250.5M797.8 256.9L799.3 250.9M799.4 257.3L801 251.4M801.1 257.7L802.6 251.8M802.7 258.2L804.3 252.2M804.4 258.6L805.9 252.7M806 259L807.6 253.1M807.7 259.5L809.2 253.5M809.3 259.9L810.9 253.9M810.9 260.3L812.5 254.4M812.6 260.8L814.1 254.8M814.2 261.2L815.8 255.2M815.9 261.6L817.4 255.6M817.5 262L819.1 256.1M819.2 262.5L820.7 256.5M820.8 262.9L822.4 256.9M822.5 263.3L824 257.3M824.1 263.8L825.7 257.8M825.8 264.2L827.3 258.2M827.4 264.6L828.9 258.6M829.1 265L830.6 259M830.7 265.5L832.2 259.5M832.4 265.9L833.9 259.9M834 266.3L835.5 260.3M835.7 266.7L837.2 260.7M837.3 267.1L838.8 261.1M839 267.5L840.5 261.5M840.6 268L842.1 261.9M842.3 268.4L843.8 262.3M843.9 268.8L845.4 262.7M845.6 269.2L847.1 263.1M847.2 269.6L848.7 263.5M848.9 270L850.4 263.9M850.5 270.4L852 264.3M852.2 270.8L853.7 264.7M853.8 271.2L855.3 265.1M855.5 271.6L857 265.5M857.1 272L858.6 266M858.8 272.4L860.3 266.4M860.4 272.8L861.9 266.8M862.1 273.3L863.6 267.2M863.7 273.7L865.2 267.6M865.3 274.1L866.9 268M867 274.5L868.6 268.4M868.6 274.9L870.2 268.9M870.3 275.4L871.9 269.3M871.9 275.8L873.5 269.7M873.5 276.2L875.2 270.2M875.2 276.7L876.8 270.6M876.8 277.1L878.5 271M878.5 277.6L880.1 271.5M880.1 278L881.8 271.9M881.7 278.5L883.5 272.4M883.4 278.9L885.1 272.9M885 279.4L886.8 273.4M886.6 279.9L888.4 273.8M888.2 280.4L890.1 274.3M889.9 280.9L891.7 274.8M891.5 281.4L893.4 275.3M893.1 281.9L895.1 275.8M894.8 282.4L896.7 276.3M896.4 282.9L898.4 276.9M898 283.4L900 277.4M899.6 284L901.6 277.9M901.2 284.5L903.3 278.5M902.9 285L904.9 279M904.5 285.6L906.6 279.6M906.1 286.2L908.2 280.2M907.7 286.7L909.8 280.7M909.3 287.3L911.5 281.3M911 287.9L913.1 281.9M912.6 288.4L914.8 282.5M914.2 289L916.4 283M915.8 289.6L918 283.6M917.4 290.2L919.6 284.2M919.1 290.8L921.3 284.8M920.7 291.4L922.9 285.4M922.3 292L924.5 286M923.9 292.6L926.2 286.6M925.5 293.2L927.8 287.2M927.2 293.8L929.4 287.8M928.8 294.4L931 288.5M930.4 295.1L932.7 289.1M932 295.7L934.3 289.7M933.7 296.3L935.9 290.3M935.3 296.9L937.6 290.9M936.9 297.5L939.2 291.5M938.6 298.1L940.8 292.1M940.2 298.8L942.4 292.7M941.8 299.4L944.1 293.3M943.5 300L945.7 294M945.1 300.6L947.3 294.6M946.7 301.2L949 295.2M948.4 301.8L950.6 295.8M950 302.4L952.2 296.4M951.7 303L953.9 297M953.3 303.6L955.5 297.6M955 304.2L957.2 298.2M956.6 304.8L958.8 298.7M958.3 305.4L960.5 299.3M959.9 306L962.1 299.9M961.6 306.6L963.8 300.5M963.2 307.2L965.4 301.1M964.9 307.8L967.1 301.7M966.5 308.4L968.7 302.3M968.2 309L970.4 302.9M969.8 309.6L972 303.5M971.5 310.2L973.7 304.1M973.1 310.8L975.3 304.7M974.8 311.4L977 305.3M976.5 312L978.7 305.9M978.1 312.6L980.3 306.5M979.8 313.2L982 307.1M981.4 313.8L983.7 307.7M983.1 314.4L985.3 308.3M984.8 315L987 308.8M986.4 315.6L988.6 309.4M988.1 316.2L990.3 310M989.8 316.8L992 310.6M991.4 317.4L993.6 311.2M993.1 318L995.3 311.8M994.8 318.6L997 312.4M996.4 319.2L998.7 313M998.1 319.8L1000.3 313.6M999.8 320.4L1002 314.2M1001.5 321L1003.7 314.8M1003.1 321.6L1005.3 315.4M1004.8 322.2L1007 316M1006.5 322.8L1008.7 316.6M1008.1 323.4L1010.4 317.2M1009.8 324L1012.1 317.8M1011.5 324.6L1013.7 318.4M1013.2 325.2L1015.4 319M1014.9 325.8L1017.1 319.6M1016.5 326.4L1018.8 320.3M1018.2 327.1L1020.5 320.9M1019.9 327.7L1022.1 321.5M1021.6 328.3L1023.8 322.1M1023.3 328.9L1025.5 322.7M1025 329.5L1027.2 323.3M1026.6 330.1L1028.9 323.9M1028.3 330.7L1030.6 324.5M1030 331.3L1032.3 325.1M1031.7 331.9L1033.9 325.7M1033.4 332.5L1035.6 326.3M1035.1 333.1L1037.3 326.9M1036.8 333.7L1039 327.5M1038.5 334.4L1040.7 328.1M1040.2 335L1042.4 328.7M1041.9 335.6L1044.1 329.3M1043.5 336.2L1045.8 329.9M1045.2 336.8L1047.5 330.6M1046.9 337.4L1049.2 331.2M1048.6 338L1050.9 331.8M1050.3 338.6L1052.6 332.4M1052 339.3L1054.3 333M1053.7 339.9L1056 333.6M1055.4 340.5L1057.7 334.2M1057.1 341.1L1059.4 334.8M1058.8 341.7L1061.1 335.4M1060.5 342.3L1062.8 336M1062.2 342.9L1064.5 336.7M1064 343.6L1066.2 337.3M1065.7 344.2L1067.9 337.9M1067.4 344.8L1069.6 338.5M1069.1 345.4L1071.3 339.1M1070.8 346L1073.1 339.7M1072.5 346.6L1074.8 340.3M1074.2 347.3L1076.5 341M1075.9 347.9L1078.2 341.6M1077.6 348.5L1079.9 342.2M1079.3 349.1L1081.6 342.8" stroke="#6e4830" stroke-width="1.2" fill="none"/>
<path d="M178.6 214.6 L182.7 213.1 L186.8 211.6 L190.9 210.1 L195 208.6 L199.1 207.1 L203.3 205.6 L207.4 204.1 L211.5 202.6 L215.6 201.1 L219.7 199.6 L223.8 198.2 L227.9 196.7 L232.1 195.2 L236.2 193.7 L240.3 192.2 L244.4 190.7 L248.5 189.2 L252.6 187.7 L256.8 186.2 L261.1 184.6 L265.5 183.1 L269.9 181.5 L274.2 180 L278.4 178.5 L282.4 177 L286.2 175.6 L289.7 174.2 L294.3 172.3 L298.3 170.6 L301.9 169 L305.3 167.4 L308.7 165.8 L312.3 164.2 L315.9 162.5 L319.4 160.7 L322.8 159 L326.3 157.3 L330.1 155.8 L334.5 154.4 L337.7 153.5 L341.1 152.7 L344.5 151.9 L348.1 151.1 L351.9 150.5 L356 149.8 L360.3 149.3 L365 148.7 L370.1 148.3 L373.4 148 L377 147.8 L380.7 147.6 L384.6 147.4 L388.7 147.2 L392.8 147.1 L397 146.9 L401.3 146.8 L405.6 146.7 L409.9 146.7 L414.1 146.6 L418.3 146.6 L422.3 146.7 L426.2 146.7 L429.9 146.8 L434.4 147 L438.8 147.2 L443.1 147.4 L447.3 147.7 L451.4 148.1 L455.4 148.4 L459.5 148.9 L463.5 149.3 L467.5 149.9 L471.5 150.5 L475.6 151.1 L479.7 151.8 L483.9 152.7 L488.2 153.6 L492.5 154.6 L497 155.6 L501.4 156.7 L505.8 157.9 L510.1 159.1 L514.3 160.3 L518.4 161.5 L522.3 162.6 L526 163.8 L529.4 164.8 L534 166.3 L538.1 167.8 L541.7 169.1 L545.1 170.5 L548.3 171.9 L551.7 173.4 L555.2 175 L559.2 176.8 L562.6 178.4 L566.2 180 L570 181.8 L573.8 183.7 L577.7 185.5 L581.6 187.5 L585.4 189.4 L589.1 191.2 L592.7 193.1 L596 194.8 L599.7 196.8 L602.8 198.8 L605.6 200.8 L608.5 202.7 L611.7 204.8 L615.4 206.8 L619.8 208.9 L625.3 210.9 L628.3 212 L631.5 213 L634.9 214 L638.6 215 L642.3 216 L646.2 217 L650.3 218.1 L654.4 219.1 L658.6 220.2 L662.9 221.2 L667.2 222.2 L671.5 223.3 L675.7 224.3 L680 225.3 L684.2 226.4 L688.2 227.4 L692.2 228.4 L696.1 229.4 L700.1 230.5 L704 231.5 L707.9 232.5 L711.8 233.5 L715.8 234.6 L719.7 235.6 L723.6 236.6 L727.5 237.6 L731.5 238.7 L735.4 239.7 L739.3 240.7 L743.3 241.7 L747.2 242.8 L751.1 243.8 L755 244.8 L759 245.8 L762.9 246.9 L766.8 247.9 L770.7 248.9 L774.7 249.9 L778.6 251 L782.5 252 L786.4 253 L790.4 254 L794.3 255.1 L798.2 256.1 L802.1 257.1 L806.1 258.1 L810 259.2 L813.9 260.2 L817.8 261.2 L821.8 262.2 L825.7 263.3 L829.6 264.3 L833.6 265.3 L837.5 266.3 L841.5 267.3 L845.5 268.2 L849.4 269.2 L853.4 270.2 L857.3 271.2 L861.3 272.1 L865.2 273.1 L869.2 274.1 L873.1 275.2 L877 276.2 L880.8 277.3 L884.7 278.4 L888.5 279.5 L892.3 280.7 L896.4 281.9 L900.3 283.2 L904.3 284.6 L908.3 285.9 L912.2 287.3 L916.1 288.8 L920 290.2 L923.9 291.6 L927.8 293.1 L931.7 294.6 L935.6 296 L939.5 297.5 L943.4 299 L947.4 300.5 L951.3 301.9 L955.2 303.3 L959.2 304.8 L963.1 306.2 L967 307.6 L971 309 L974.9 310.4 L978.8 311.9 L982.8 313.3 L986.7 314.7 L990.6 316.1 L994.6 317.5 L998.5 318.9 L1002.5 320.4 L1006.4 321.8 L1010.3 323.2 L1014.3 324.6 L1018.2 326 L1022.1 327.5 L1026.1 328.9 L1030 330.3 L1033.9 331.7 L1037.9 333.1 L1041.8 334.6 L1045.8 336 L1049.7 337.4 L1053.6 338.8 L1057.6 340.2 L1061.5 341.7 L1065.4 343.1 L1069.4 344.5 L1073.3 345.9 L1077.3 347.3 L1081.2 348.8M177.4 211.4 L181.5 209.9 L185.6 208.4 L189.7 206.9 L193.9 205.4 L198 203.9 L202.1 202.4 L206.2 200.9 L210.3 199.4 L214.4 197.9 L218.5 196.4 L222.6 194.8 L226.7 193.3 L230.8 191.8 L234.9 190.3 L239.1 188.8 L243.2 187.3 L247.3 185.8 L251.4 184.3 L255.6 182.8 L259.9 181.2 L264.3 179.7 L268.6 178.1 L272.9 176.5 L277.1 175 L281.1 173.5 L284.9 172.1 L288.3 170.8 L292.9 168.9 L296.8 167.2 L300.4 165.6 L303.7 164 L307.1 162.4 L310.7 160.8 L314.2 159.1 L317.6 157.3 L321.1 155.5 L324.7 153.8 L328.8 152.1 L333.5 150.6 L336.8 149.8 L340.2 149 L343.7 148.2 L347.4 147.5 L351.3 146.8 L355.5 146.2 L359.9 145.6 L364.7 145.2 L369.9 144.7 L373.2 144.5 L376.8 144.2 L380.5 144 L384.5 143.8 L388.5 143.6 L392.7 143.5 L396.9 143.3 L401.2 143.2 L405.5 143.1 L409.8 143 L414.1 143 L418.3 143 L422.3 143 L426.3 143.1 L430.1 143.2 L434.6 143.3 L439 143.5 L443.3 143.8 L447.5 144 L451.7 144.4 L455.8 144.7 L459.9 145.2 L463.9 145.7 L468 146.2 L472.1 146.8 L476.2 147.4 L480.3 148.2 L484.6 149 L489 149.9 L493.4 150.9 L497.9 151.9 L502.3 153.1 L506.7 154.2 L511.1 155.4 L515.3 156.6 L519.4 157.8 L523.4 159 L527.1 160.1 L530.6 161.2 L535.3 162.7 L539.4 164.1 L543.1 165.5 L546.6 166.9 L549.9 168.3 L553.3 169.8 L556.9 171.4 L560.8 173.2 L564.3 174.8 L567.9 176.5 L571.7 178.2 L575.5 180.1 L579.4 182 L583.3 183.9 L587.2 185.8 L590.9 187.6 L594.5 189.5 L598 191.2 L601.8 193.3 L605 195.4 L608 197.4 L610.8 199.3 L613.8 201.2 L617.2 203.1 L621.4 205 L626.7 207.1 L629.6 208 L632.7 209 L636.1 210 L639.7 211 L643.4 212 L647.3 213 L651.3 214 L655.4 215.1 L659.6 216.1 L663.9 217.1 L668.2 218.1 L672.5 219.2 L676.7 220.2 L681 221.2 L685.2 222.3 L689.3 223.3 L693.3 224.3 L697.2 225.3 L701.1 226.4 L705.1 227.4 L709 228.4 L712.9 229.4 L716.8 230.4 L720.8 231.5 L724.7 232.5 L728.6 233.5 L732.6 234.5 L736.5 235.5 L740.4 236.6 L744.3 237.6 L748.3 238.6 L752.2 239.6 L756.1 240.6 L760 241.7 L764 242.7 L767.9 243.7 L771.8 244.7 L775.8 245.7 L779.7 246.8 L783.6 247.8 L787.5 248.8 L791.5 249.8 L795.4 250.8 L799.3 251.9 L803.2 252.9 L807.2 253.9 L811.1 254.9 L815 255.9 L819 256.9 L822.9 258 L826.8 259 L830.7 260 L834.7 261 L838.6 262 L842.6 262.9 L846.5 263.9 L850.5 264.9 L854.5 265.8 L858.4 266.8 L862.4 267.8 L866.3 268.8 L870.3 269.8 L874.2 270.8 L878.1 271.9 L882 273 L885.9 274 L889.8 275.2 L893.7 276.3 L897.7 277.6 L901.8 278.9 L905.8 280.3 L909.8 281.7 L913.7 283.1 L917.7 284.5 L921.6 285.9 L925.5 287.4 L929.4 288.8 L933.3 290.3 L937.2 291.8 L941.1 293.2 L945 294.7 L948.9 296.1 L952.9 297.6 L956.8 299 L960.7 300.4 L964.7 301.8 L968.6 303.2 L972.5 304.7 L976.5 306.1 L980.4 307.5 L984.3 308.9 L988.3 310.3 L992.2 311.7 L996.2 313.1 L1000.1 314.6 L1004 316 L1008 317.4 L1011.9 318.8 L1015.9 320.2 L1019.8 321.6 L1023.7 323 L1027.7 324.4 L1031.6 325.9 L1035.6 327.3 L1039.5 328.7 L1043.4 330.1 L1047.4 331.5 L1051.3 332.9 L1055.2 334.3 L1059.2 335.8 L1063.1 337.2 L1067.1 338.6 L1071 340 L1074.9 341.4 L1078.9 342.8 L1082.8 344.2" stroke="#5e3e28" stroke-width="0.9" fill="none"/>
<path d="M178.6 214.6 L182.7 213.1 L186.8 211.6 L190.9 210.1 L195 208.6 L199.1 207.1 L203.3 205.6 L207.4 204.1 L211.5 202.6 L215.6 201.1 L219.7 199.6 L223.8 198.2 L227.9 196.7 L232.1 195.2 L236.2 193.7 L240.3 192.2 L244.4 190.7 L248.5 189.2 L252.6 187.7 L256.8 186.2 L261.1 184.6 L265.5 183.1 L269.9 181.5 L274.2 180 L278.4 178.5 L282.4 177 L286.2 175.6 L289.7 174.2 L294.3 172.3 L298.3 170.6 L301.9 169 L305.3 167.4 L308.7 165.8 L312.3 164.2 L315.9 162.5 L319.4 160.7 L322.8 159 L326.3 157.3 L330.1 155.8 L334.5 154.4 L337.7 153.5 L341.1 152.7 L344.5 151.9 L348.1 151.1 L351.9 150.5 L356 149.8 L360.3 149.3 L365 148.7 L370.1 148.3 L373.4 148 L377 147.8 L380.7 147.6 L384.6 147.4 L388.7 147.2 L392.8 147.1 L397 146.9 L401.3 146.8 L405.6 146.7 L409.9 146.7 L414.1 146.6 L418.3 146.6 L422.3 146.7 L426.2 146.7 L429.9 146.8 L434.4 147 L438.8 147.2 L443.1 147.4 L447.3 147.7 L451.4 148.1 L455.4 148.4 L459.5 148.9 L463.5 149.3 L467.5 149.9 L471.5 150.5 L475.6 151.1 L479.7 151.8 L483.9 152.7 L488.2 153.6 L492.5 154.6 L497 155.6 L501.4 156.7 L505.8 157.9 L510.1 159.1 L514.3 160.3 L518.4 161.5 L522.3 162.6 L526 163.8 L529.4 164.8 L534 166.3 L538.1 167.8 L541.7 169.1 L545.1 170.5 L548.3 171.9 L551.7 173.4 L555.2 175 L559.2 176.8 L562.6 178.4 L566.2 180 L570 181.8 L573.8 183.7 L577.7 185.5 L581.6 187.5 L585.4 189.4 L589.1 191.2 L592.7 193.1 L596 194.8 L599.7 196.8 L602.8 198.8 L605.6 200.8 L608.5 202.7 L611.7 204.8 L615.4 206.8 L619.8 208.9 L625.3 210.9 L628.3 212 L631.5 213 L634.9 214 L638.6 215 L642.3 216 L646.2 217 L650.3 218.1 L654.4 219.1 L658.6 220.2 L662.9 221.2 L667.2 222.2 L671.5 223.3 L675.7 224.3 L680 225.3 L684.2 226.4 L688.2 227.4 L692.2 228.4 L696.1 229.4 L700.1 230.5 L704 231.5 L707.9 232.5 L711.8 233.5 L715.8 234.6 L719.7 235.6 L723.6 236.6 L727.5 237.6 L731.5 238.7 L735.4 239.7 L739.3 240.7 L743.3 241.7 L747.2 242.8 L751.1 243.8 L755 244.8 L759 245.8 L762.9 246.9 L766.8 247.9 L770.7 248.9 L774.7 249.9 L778.6 251 L782.5 252 L786.4 253 L790.4 254 L794.3 255.1 L798.2 256.1 L802.1 257.1 L806.1 258.1 L810 259.2 L813.9 260.2 L817.8 261.2 L821.8 262.2 L825.7 263.3 L829.6 264.3 L833.6 265.3 L837.5 266.3 L841.5 267.3 L845.5 268.2 L849.4 269.2 L853.4 270.2 L857.3 271.2 L861.3 272.1 L865.2 273.1 L869.2 274.1 L873.1 275.2 L877 276.2 L880.8 277.3 L884.7 278.4 L888.5 279.5 L892.3 280.7 L896.4 281.9 L900.3 283.2 L904.3 284.6 L908.3 285.9 L912.2 287.3 L916.1 288.8 L920 290.2 L923.9 291.6 L927.8 293.1 L931.7 294.6 L935.6 296 L939.5 297.5 L943.4 299 L947.4 300.5 L951.3 301.9 L955.2 303.3 L959.2 304.8 L963.1 306.2 L967 307.6 L971 309 L974.9 310.4 L978.8 311.9 L982.8 313.3 L986.7 314.7 L990.6 316.1 L994.6 317.5 L998.5 318.9 L1002.5 320.4 L1006.4 321.8 L1010.3 323.2 L1014.3 324.6 L1018.2 326 L1022.1 327.5 L1026.1 328.9 L1030 330.3 L1033.9 331.7 L1037.9 333.1 L1041.8 334.6 L1045.8 336 L1049.7 337.4 L1053.6 338.8 L1057.6 340.2 L1061.5 341.7 L1065.4 343.1 L1069.4 344.5 L1073.3 345.9 L1077.3 347.3 L1081.2 348.8" stroke="#f2ece6" stroke-width="0.7" fill="none" stroke-dasharray="0.8 1.2" opacity="0.7"/>
<path d="M177.4 211.4 L181.5 209.9 L185.6 208.4 L189.7 206.9 L193.9 205.4 L198 203.9 L202.1 202.4 L206.2 200.9 L210.3 199.4 L214.4 197.9 L218.5 196.4 L222.6 194.8 L226.7 193.3 L230.8 191.8 L234.9 190.3 L239.1 188.8 L243.2 187.3 L247.3 185.8 L251.4 184.3 L255.6 182.8 L259.9 181.2 L264.3 179.7 L268.6 178.1 L272.9 176.5 L277.1 175 L281.1 173.5 L284.9 172.1 L288.3 170.8 L292.9 168.9 L296.8 167.2 L300.4 165.6 L303.7 164 L307.1 162.4 L310.7 160.8 L314.2 159.1 L317.6 157.3 L321.1 155.5 L324.7 153.8 L328.8 152.1 L333.5 150.6 L336.8 149.8 L340.2 149 L343.7 148.2 L347.4 147.5 L351.3 146.8 L355.5 146.2 L359.9 145.6 L364.7 145.2 L369.9 144.7 L373.2 144.5 L376.8 144.2 L380.5 144 L384.5 143.8 L388.5 143.6 L392.7 143.5 L396.9 143.3 L401.2 143.2 L405.5 143.1 L409.8 143 L414.1 143 L418.3 143 L422.3 143 L426.3 143.1 L430.1 143.2 L434.6 143.3 L439 143.5 L443.3 143.8 L447.5 144 L451.7 144.4 L455.8 144.7 L459.9 145.2 L463.9 145.7 L468 146.2 L472.1 146.8 L476.2 147.4 L480.3 148.2 L484.6 149 L489 149.9 L493.4 150.9 L497.9 151.9 L502.3 153.1 L506.7 154.2 L511.1 155.4 L515.3 156.6 L519.4 157.8 L523.4 159 L527.1 160.1 L530.6 161.2 L535.3 162.7 L539.4 164.1 L543.1 165.5 L546.6 166.9 L549.9 168.3 L553.3 169.8 L556.9 171.4 L560.8 173.2 L564.3 174.8 L567.9 176.5 L571.7 178.2 L575.5 180.1 L579.4 182 L583.3 183.9 L587.2 185.8 L590.9 187.6 L594.5 189.5 L598 191.2 L601.8 193.3 L605 195.4 L608 197.4 L610.8 199.3 L613.8 201.2 L617.2 203.1 L621.4 205 L626.7 207.1 L629.6 208 L632.7 209 L636.1 210 L639.7 211 L643.4 212 L647.3 213 L651.3 214 L655.4 215.1 L659.6 216.1 L663.9 217.1 L668.2 218.1 L672.5 219.2 L676.7 220.2 L681 221.2 L685.2 222.3 L689.3 223.3 L693.3 224.3 L697.2 225.3 L701.1 226.4 L705.1 227.4 L709 228.4 L712.9 229.4 L716.8 230.4 L720.8 231.5 L724.7 232.5 L728.6 233.5 L732.6 234.5 L736.5 235.5 L740.4 236.6 L744.3 237.6 L748.3 238.6 L752.2 239.6 L756.1 240.6 L760 241.7 L764 242.7 L767.9 243.7 L771.8 244.7 L775.8 245.7 L779.7 246.8 L783.6 247.8 L787.5 248.8 L791.5 249.8 L795.4 250.8 L799.3 251.9 L803.2 252.9 L807.2 253.9 L811.1 254.9 L815 255.9 L819 256.9 L822.9 258 L826.8 259 L830.7 260 L834.7 261 L838.6 262 L842.6 262.9 L846.5 263.9 L850.5 264.9 L854.5 265.8 L858.4 266.8 L862.4 267.8 L866.3 268.8 L870.3 269.8 L874.2 270.8 L878.1 271.9 L882 273 L885.9 274 L889.8 275.2 L893.7 276.3 L897.7 277.6 L901.8 278.9 L905.8 280.3 L909.8 281.7 L913.7 283.1 L917.7 284.5 L921.6 285.9 L925.5 287.4 L929.4 288.8 L933.3 290.3 L937.2 291.8 L941.1 293.2 L945 294.7 L948.9 296.1 L952.9 297.6 L956.8 299 L960.7 300.4 L964.7 301.8 L968.6 303.2 L972.5 304.7 L976.5 306.1 L980.4 307.5 L984.3 308.9 L988.3 310.3 L992.2 311.7 L996.2 313.1 L1000.1 314.6 L1004 316 L1008 317.4 L1011.9 318.8 L1015.9 320.2 L1019.8 321.6 L1023.7 323 L1027.7 324.4 L1031.6 325.9 L1035.6 327.3 L1039.5 328.7 L1043.4 330.1 L1047.4 331.5 L1051.3 332.9 L1055.2 334.3 L1059.2 335.8 L1063.1 337.2 L1067.1 338.6 L1071 340 L1074.9 341.4 L1078.9 342.8 L1082.8 344.2" stroke="#f2ece6" stroke-width="0.7" fill="none" stroke-dasharray="0.8 1.2" opacity="0.7"/>
<path d="M610.7 213.7 L615.3 216.2 L624.7 219.5 L627.4 220.2 L630.2 221 L633.3 221.9 L636.7 222.8 L640.2 223.8 L644 224.8 L647.9 225.8 L652 226.9 L656.2 228 L660.5 229.1 L664.9 230.3 L669.4 231.4 L674 232.6 L678.5 233.8 L683.1 235 L687.7 236.1 L692.3 237.3 L696.8 238.5 L701.2 239.6 L705.6 240.7 L709.8 241.9 L713.9 242.9 L718 244 L722 245.1 L726.1 246.1 L730.1 247.2 L734.1 248.3 L738.2 249.3 L742.2 250.4 L746.3 251.5 L750.3 252.5 L754.4 253.6 L758.4 254.7 L762.4 255.7 L766.5 256.8 L770.5 257.9 L774.6 258.9 L778.6 260 L782.7 261.1 L786.7 262.1 L790.7 263.2 L794.8 264.3 L798.8 265.3 L802.9 266.4 L806.9 267.5 L811 268.5 L815 269.6 L819 270.7 L823.1 271.7 L827.1 272.8 L831.2 273.9 L835.2 274.9 L839.2 276 L843.3 277.1 L847.3 278.1 L851.4 279.2 L855.4 280.3 L859.5 281.4 L863.5 282.4 L867.5 283.5 L871.6 284.6 L875.6 285.6 L879.7 286.7 L883.7 287.8 L887.8 288.8 L891.8 289.9 L894.2 280.7 L890.1 279.6 L886.1 278.6 L882.1 277.6 L878 276.5 L874 275.5 L869.9 274.4 L865.9 273.4 L861.8 272.3 L857.8 271.3 L853.7 270.2 L849.7 269.2 L845.6 268.1 L841.6 267.1 L837.5 266.1 L833.5 265 L829.4 264 L825.4 262.9 L821.3 261.9 L817.3 260.8 L813.2 259.8 L809.2 258.7 L805.1 257.7 L801.1 256.6 L797 255.6 L793 254.6 L788.9 253.5 L784.9 252.5 L780.8 251.4 L776.8 250.4 L772.7 249.3 L768.7 248.3 L764.7 247.2 L760.6 246.2 L756.6 245.2 L752.5 244.1 L748.5 243.1 L744.4 242 L740.4 241 L736.3 239.9 L732.3 238.9 L728.2 237.8 L724.2 236.8 L720.1 235.7 L716.1 234.7 L711.9 233.6 L707.7 232.6 L703.3 231.5 L698.9 230.3 L694.3 229.2 L689.8 228 L685.2 226.9 L680.6 225.7 L676 224.6 L671.4 223.4 L667 222.3 L662.5 221.2 L658.2 220.1 L654 219 L650 217.9 L646 216.9 L642.3 215.9 L638.8 215 L635.5 214.1 L632.5 213.2 L629.7 212.4 L627.3 211.7 L618.4 208.5 L616.2 206.7 Z" fill="url(#bal)"/>
<path d="M608.5 207.5L611.5 204.5M609.9 208.6L612.8 205.5M611.3 209.9L613.9 206.5M612.8 211.5L614.5 207.5M614.3 212.4L616 208.3M615.8 213.2L617.4 209.2M617.5 213.9L618.9 209.7M619.1 214.5L620.5 210.3M620.7 215L622.1 210.8M622.3 215.6L623.7 211.4M623.9 216.1L625.3 211.9M625.6 216.7L626.8 212.4M627.2 217.2L628.5 212.9M628.9 217.7L630.1 213.4M630.5 218.2L631.7 213.8M632.2 218.6L633.4 214.3M633.8 219.1L635 214.7M635.4 219.5L636.6 215.2M637.1 220L638.3 215.6M638.7 220.4L639.9 216.1M640.4 220.9L641.5 216.5M642 221.3L643.2 216.9M643.7 221.8L644.8 217.4M645.3 222.2L646.5 217.8M647 222.6L648.1 218.2M648.6 223.1L649.7 218.6M650.2 223.5L651.4 219.1M651.9 223.9L653 219.5M653.5 224.4L654.7 219.9M655.2 224.8L656.3 220.3M656.8 225.2L658 220.8M658.5 225.6L659.6 221.2M660.1 226.1L661.3 221.6M661.8 226.5L662.9 222M663.4 226.9L664.6 222.4M665.1 227.3L666.2 222.9M666.7 227.8L667.9 223.3M668.4 228.2L669.5 223.7M670 228.6L671.1 224.1M671.7 229L672.8 224.5M673.3 229.4L674.4 224.9M675 229.9L676.1 225.3M676.6 230.3L677.7 225.8M678.2 230.7L679.4 226.2M679.9 231.1L681 226.6M681.5 231.5L682.7 227M683.2 232L684.3 227.4M684.8 232.4L686 227.8M686.5 232.8L687.6 228.3M688.1 233.2L689.3 228.7M689.8 233.6L690.9 229.1M691.4 234.1L692.6 229.5M693.1 234.5L694.2 229.9M694.7 234.9L695.9 230.3M696.4 235.3L697.5 230.8M698 235.7L699.2 231.2M699.7 236.2L700.8 231.6M701.3 236.6L702.5 232M702.9 237L704.1 232.4M704.6 237.4L705.8 232.8M706.2 237.8L707.4 233.3M707.9 238.3L709.1 233.7M709.5 238.7L710.7 234.1M711.2 239.1L712.4 234.5M712.8 239.6L714 235M714.5 240L715.7 235.4M716.1 240.4L717.3 235.8M717.7 240.8L718.9 236.2M719.4 241.3L720.6 236.7M721 241.7L722.2 237.1M722.7 242.1L723.9 237.5M724.3 242.6L725.5 237.9M726 243L727.2 238.4M727.6 243.4L728.8 238.8M729.3 243.9L730.5 239.2M730.9 244.3L732.1 239.6M732.5 244.7L733.8 240.1M734.2 245.2L735.4 240.5M735.8 245.6L737.1 240.9M737.5 246L738.7 241.3M739.1 246.4L740.3 241.8M740.8 246.9L742 242.2M742.4 247.3L743.6 242.6M744.1 247.7L745.3 243M745.7 248.2L746.9 243.5M747.3 248.6L748.6 243.9M749 249L750.2 244.3M750.6 249.5L751.9 244.7M752.3 249.9L753.5 245.2M753.9 250.3L755.2 245.6M755.6 250.8L756.8 246M757.2 251.2L758.4 246.4M758.9 251.6L760.1 246.9M760.5 252L761.7 247.3M762.2 252.5L763.4 247.7M763.8 252.9L765 248.2M765.4 253.3L766.7 248.6M767.1 253.8L768.3 249M768.7 254.2L770 249.4M770.4 254.6L771.6 249.9M772 255.1L773.3 250.3M773.7 255.5L774.9 250.7M775.3 255.9L776.6 251.1M777 256.4L778.2 251.6M778.6 256.8L779.8 252M780.2 257.2L781.5 252.4M781.9 257.6L783.1 252.8M783.5 258.1L784.8 253.3M785.2 258.5L786.4 253.7M786.8 258.9L788.1 254.1M788.5 259.4L789.7 254.5M790.1 259.8L791.4 255M791.8 260.2L793 255.4M793.4 260.7L794.7 255.8M795 261.1L796.3 256.2M796.7 261.5L797.9 256.7M798.3 262L799.6 257.1M800 262.4L801.2 257.5M801.6 262.8L802.9 257.9M803.3 263.2L804.5 258.4M804.9 263.7L806.2 258.8M806.6 264.1L807.8 259.2M808.2 264.5L809.5 259.6M809.8 265L811.1 260.1M811.5 265.4L812.8 260.5M813.1 265.8L814.4 260.9M814.8 266.3L816.1 261.3M816.4 266.7L817.7 261.8M818.1 267.1L819.3 262.2M819.7 267.6L821 262.6M821.4 268L822.6 263.1M823 268.4L824.3 263.5M824.6 268.8L825.9 263.9M826.3 269.3L827.6 264.3M827.9 269.7L829.2 264.8M829.6 270.1L830.9 265.2M831.2 270.6L832.5 265.6M832.9 271L834.2 266M834.5 271.4L835.8 266.5M836.2 271.9L837.4 266.9M837.8 272.3L839.1 267.3M839.4 272.7L840.7 267.7M841.1 273.2L842.4 268.2M842.7 273.6L844 268.6M844.4 274L845.7 269M846 274.4L847.3 269.4M847.7 274.9L849 269.9M849.3 275.3L850.6 270.3M851 275.7L852.3 270.7M852.6 276.2L853.9 271.1M854.2 276.6L855.6 271.6M855.9 277L857.2 272M857.5 277.5L858.8 272.4M859.2 277.9L860.5 272.8M860.8 278.3L862.1 273.3M862.5 278.8L863.8 273.7M864.1 279.2L865.4 274.1M865.8 279.6L867.1 274.5M867.4 280L868.7 275M869 280.5L870.4 275.4M870.7 280.9L872 275.8M872.3 281.3L873.7 276.2M874 281.8L875.3 276.7M875.6 282.2L876.9 277.1M877.3 282.6L878.6 277.5M878.9 283.1L880.2 278M880.6 283.5L881.9 278.4M882.2 283.9L883.5 278.8M883.8 284.4L885.2 279.2M885.5 284.8L886.8 279.7M887.1 285.2L888.5 280.1M888.8 285.6L890.1 280.5M890.4 286.1L891.8 280.9M892.1 286.5L893.4 281.4" stroke="#6e4830" stroke-width="1.2" fill="none"/>
<path d="M609.1 207.2 L611.2 208.9 L612.5 210.6 L616.3 212.8 L625.5 216 L628.1 216.8 L630.9 217.6 L634 218.5 L637.3 219.4 L640.9 220.3 L644.6 221.3 L648.5 222.4 L652.6 223.4 L656.8 224.5 L661.1 225.6 L665.5 226.8 L670 227.9 L674.6 229.1 L679.2 230.2 L683.8 231.4 L688.3 232.6 L692.9 233.7 L697.4 234.9 L701.9 236 L706.2 237.1 L710.5 238.2 L714.6 239.3 L718.6 240.4 L722.7 241.4 L726.7 242.5 L730.7 243.5 L734.8 244.6 L738.8 245.7 L742.9 246.7 L746.9 247.8 L751 248.8 L755 249.9 L759.1 250.9 L763.1 252 L767.1 253.1 L771.2 254.1 L775.2 255.2 L779.3 256.2 L783.3 257.3 L787.4 258.3 L791.4 259.4 L795.5 260.5 L799.5 261.5 L803.5 262.6 L807.6 263.6 L811.6 264.7 L815.7 265.7 L819.7 266.8 L823.8 267.9 L827.8 268.9 L831.9 270 L835.9 271 L839.9 272.1 L844 273.1 L848 274.2 L852.1 275.3 L856.1 276.3 L860.2 277.4 L864.2 278.4 L868.3 279.5 L872.3 280.6 L876.3 281.6 L880.4 282.7 L884.4 283.7 L888.5 284.8 L892.5 285.8M610.9 204.8 L613.4 206.7 L614.4 208.1 L617.5 209.9 L626.5 213 L629 213.7 L631.8 214.5 L634.9 215.4 L638.2 216.3 L641.7 217.2 L645.4 218.2 L649.3 219.2 L653.4 220.3 L657.6 221.3 L661.9 222.4 L666.3 223.6 L670.8 224.7 L675.4 225.9 L680 227 L684.6 228.2 L689.2 229.3 L693.7 230.5 L698.2 231.6 L702.7 232.8 L707.1 233.9 L711.3 235 L715.4 236 L719.5 237.1 L723.5 238.1 L727.6 239.2 L731.6 240.2 L735.7 241.3 L739.7 242.3 L743.8 243.4 L747.8 244.4 L751.8 245.5 L755.9 246.5 L759.9 247.6 L764 248.6 L768 249.7 L772.1 250.7 L776.1 251.8 L780.2 252.8 L784.2 253.8 L788.3 254.9 L792.3 255.9 L796.4 257 L800.4 258 L804.5 259.1 L808.5 260.1 L812.5 261.2 L816.6 262.2 L820.6 263.3 L824.7 264.3 L828.7 265.4 L832.8 266.4 L836.8 267.5 L840.9 268.5 L844.9 269.6 L849 270.6 L853 271.7 L857.1 272.7 L861.1 273.8 L865.2 274.8 L869.2 275.9 L873.2 276.9 L877.3 278 L881.3 279 L885.4 280.1 L889.4 281.1 L893.5 282.2" stroke="#5e3e28" stroke-width="0.9" fill="none"/>
<path d="M609.1 207.2 L611.2 208.9 L612.5 210.6 L616.3 212.8 L625.5 216 L628.1 216.8 L630.9 217.6 L634 218.5 L637.3 219.4 L640.9 220.3 L644.6 221.3 L648.5 222.4 L652.6 223.4 L656.8 224.5 L661.1 225.6 L665.5 226.8 L670 227.9 L674.6 229.1 L679.2 230.2 L683.8 231.4 L688.3 232.6 L692.9 233.7 L697.4 234.9 L701.9 236 L706.2 237.1 L710.5 238.2 L714.6 239.3 L718.6 240.4 L722.7 241.4 L726.7 242.5 L730.7 243.5 L734.8 244.6 L738.8 245.7 L742.9 246.7 L746.9 247.8 L751 248.8 L755 249.9 L759.1 250.9 L763.1 252 L767.1 253.1 L771.2 254.1 L775.2 255.2 L779.3 256.2 L783.3 257.3 L787.4 258.3 L791.4 259.4 L795.5 260.5 L799.5 261.5 L803.5 262.6 L807.6 263.6 L811.6 264.7 L815.7 265.7 L819.7 266.8 L823.8 267.9 L827.8 268.9 L831.9 270 L835.9 271 L839.9 272.1 L844 273.1 L848 274.2 L852.1 275.3 L856.1 276.3 L860.2 277.4 L864.2 278.4 L868.3 279.5 L872.3 280.6 L876.3 281.6 L880.4 282.7 L884.4 283.7 L888.5 284.8 L892.5 285.8" stroke="#f2ece6" stroke-width="0.7" fill="none" stroke-dasharray="0.8 1.2" opacity="0.35"/>
<path d="M610.9 204.8 L613.4 206.7 L614.4 208.1 L617.5 209.9 L626.5 213 L629 213.7 L631.8 214.5 L634.9 215.4 L638.2 216.3 L641.7 217.2 L645.4 218.2 L649.3 219.2 L653.4 220.3 L657.6 221.3 L661.9 222.4 L666.3 223.6 L670.8 224.7 L675.4 225.9 L680 227 L684.6 228.2 L689.2 229.3 L693.7 230.5 L698.2 231.6 L702.7 232.8 L707.1 233.9 L711.3 235 L715.4 236 L719.5 237.1 L723.5 238.1 L727.6 239.2 L731.6 240.2 L735.7 241.3 L739.7 242.3 L743.8 243.4 L747.8 244.4 L751.8 245.5 L755.9 246.5 L759.9 247.6 L764 248.6 L768 249.7 L772.1 250.7 L776.1 251.8 L780.2 252.8 L784.2 253.8 L788.3 254.9 L792.3 255.9 L796.4 257 L800.4 258 L804.5 259.1 L808.5 260.1 L812.5 261.2 L816.6 262.2 L820.6 263.3 L824.7 264.3 L828.7 265.4 L832.8 266.4 L836.8 267.5 L840.9 268.5 L844.9 269.6 L849 270.6 L853 271.7 L857.1 272.7 L861.1 273.8 L865.2 274.8 L869.2 275.9 L873.2 276.9 L877.3 278 L881.3 279 L885.4 280.1 L889.4 281.1 L893.5 282.2" stroke="#f2ece6" stroke-width="0.7" fill="none" stroke-dasharray="0.8 1.2" opacity="0.35"/>
<path d="M1081.2 353 L1085.1 353.8 L1088.7 354.3 L1092 354.8 L1095.3 355.5 L1098.9 356.5 L1103 358.1 L1108.2 360.4 L1110.9 361.8 L1114 363.5 L1117.4 365.3 L1121 367.2 L1124.8 369.3 L1128.6 371.6 L1132.6 373.9 L1136.6 376.2 L1140.6 378.6 L1144.5 381.1 L1148.3 383.5 L1152 385.9 L1155.5 388.3 L1158.8 390.6 L1161.8 392.8 L1165.3 395.5 L1168.6 398.2 L1171.7 400.9 L1174.7 403.7 L1177.6 406.5 L1180.4 409.4 L1183.1 412.2 L1185.7 414.9 L1188.2 417.7 L1190.7 420.4 L1193.2 423 L1195.6 425.6 L1198.9 429.2 L1202 432.5 L1204.8 435.6 L1207.4 438.6 L1209.8 441.5 L1212 444.3 L1214.1 447.2 L1216.1 450.2 L1218.3 453.7 L1220.2 457.2 L1222 460.8 L1223.7 464.4 L1225.3 468.1 L1226.8 472 L1228.4 476 L1229.7 479.6 L1231 483.4 L1232.2 487.3 L1233.4 491.2 L1234.5 495.1 L1235.5 498.9 L1236.3 502.4 L1236.9 505.6 L1237.9 510.3 L1238.5 514.1 L1238.7 517.2 L1238.7 520.4 L1238.3 524.2 L1237.8 527.6 L1237.1 531.2 L1236.2 534.9 L1235 538.5 L1233.6 542.1 L1231.9 545.7 L1230.2 548.8 L1228.3 552 L1226.3 555.1 L1224.1 558.1 L1221.7 561 L1219.2 563.8 L1216.2 566.4 L1213.5 568.5 L1210.6 570.5 L1207.7 572.3 L1204.5 574.1 L1201 575.7 L1196.8 577.4 L1192 579 L1186.3 580.6 L1183.3 581.4 L1180 582.2 L1176.6 583 L1172.9 583.7 L1169 584.5 L1165 585.3 L1160.9 586.1 L1156.7 586.9 L1152.4 587.6 L1148.2 588.3 L1143.9 589 L1139.6 589.6 L1135.4 590.2 L1131.2 590.7 L1127.2 591.2 L1123.3 591.6 L1119.5 592 L1115.4 592.3 L1111.5 592.5 L1107.7 592.8 L1104.1 593 L1100.7 593.2 L1097.2 593.4 L1093.8 593.5 L1090.3 593.4 L1086.8 593.2 L1083.1 592.9 L1079.3 592.5 L1075.2 592 L1070.9 591.4 L1066.2 590.6 L1061.2 589.7 L1058 589.1 L1054.7 588.4 L1051.2 587.6 L1047.6 586.8 L1043.8 585.9 L1040 584.9 L1036.1 583.9 L1032 582.9 L1027.9 581.8 L1023.8 580.6 L1019.6 579.5 L1015.3 578.3 L1011 577.1 L1006.7 575.9 L1002.5 574.7 L998.2 573.5 L993.9 572.3 L989.7 571.1 L985.5 569.9 L981.4 568.7 L977.3 567.5 L973.3 566.4 L969.5 565.3 L965.7 564.3 L962 563.3 L957.6 562.1 L953.5 561.1 L949.7 560.2 L946.1 559.3 L942.7 558.5 L939.4 557.7 L936.2 557 L933.1 556.2 L930 555.4 L926.8 554.6 L923.6 553.8 L920.2 552.8 L916.6 551.8 L912.8 550.6 L908.7 549.4 L904.3 548 L899.5 546.4 L894.3 544.6 L888.6 542.7 L882.4 540.5 L877.6 554.1 L883.9 556.4 L889.6 558.4 L894.9 560.2 L899.9 561.8 L904.4 563.2 L908.6 564.5 L912.6 565.7 L916.3 566.8 L919.8 567.8 L923.2 568.7 L926.4 569.5 L929.6 570.3 L932.8 571.1 L936 571.9 L939.2 572.8 L942.6 573.6 L946.1 574.5 L949.8 575.5 L953.7 576.6 L958 577.8 L961.7 578.8 L965.4 579.8 L969.3 580.9 L973.3 582 L977.3 583.1 L981.5 584.2 L985.7 585.4 L989.9 586.5 L994.2 587.7 L998.5 588.9 L1002.8 590.1 L1007.2 591.2 L1011.5 592.4 L1015.8 593.5 L1020.1 594.6 L1024.3 595.7 L1028.5 596.7 L1032.6 597.7 L1036.7 598.7 L1040.6 599.6 L1044.5 600.4 L1048.3 601.2 L1051.9 601.9 L1055.4 602.5 L1058.8 603.1 L1064.1 603.9 L1069 604.6 L1073.7 605.2 L1078 605.6 L1082.2 605.9 L1086.2 606 L1090 606.1 L1093.8 606.1 L1097.5 606.1 L1101.1 606 L1104.8 605.9 L1108.5 605.7 L1112.3 605.5 L1116.3 605.2 L1120.5 604.9 L1124.4 604.7 L1128.5 604.3 L1132.7 603.9 L1137 603.4 L1141.4 602.9 L1145.8 602.3 L1150.2 601.6 L1154.6 600.9 L1159 600.2 L1163.3 599.5 L1167.5 598.7 L1171.6 598 L1175.6 597.2 L1179.4 596.4 L1183.1 595.6 L1186.5 594.9 L1189.7 594.1 L1195.8 592.6 L1201.3 591.1 L1206.2 589.5 L1210.6 587.9 L1214.7 586.1 L1218.5 584.1 L1222.1 582 L1225.8 579.7 L1229.9 576.7 L1233.8 573.3 L1237.3 569.7 L1240.5 566.1 L1243.3 562.3 L1245.8 558.7 L1248.1 554.9 L1250.6 550.4 L1252.7 545.6 L1254.5 540.8 L1255.8 536 L1256.9 531.2 L1257.7 526.5 L1258 521.1 L1257.9 516.1 L1257.2 511.4 L1256.3 506.6 L1255.1 501.5 L1254 497.9 L1252.8 494 L1251.5 490 L1250.1 485.9 L1248.6 481.7 L1247 477.6 L1245.3 473.6 L1243.6 469.7 L1241.7 465.6 L1239.8 461.6 L1237.7 457.6 L1235.5 453.7 L1233.2 449.8 L1230.6 445.9 L1227.9 442.1 L1225.3 438.9 L1222.7 435.7 L1220 432.7 L1217.2 429.8 L1214.3 426.8 L1211.2 423.7 L1207.9 420.4 L1204.4 417 L1202 414.5 L1199.6 412 L1197 409.3 L1194.4 406.6 L1191.6 403.8 L1188.7 401 L1185.7 398.1 L1182.5 395.2 L1179.2 392.4 L1175.7 389.5 L1172 386.7 L1168.2 384 L1164.9 381.7 L1161.4 379.5 L1157.7 377.1 L1153.8 374.7 L1149.8 372.4 L1145.7 370 L1141.6 367.6 L1137.5 365.3 L1133.4 363.1 L1129.4 360.9 L1125.5 358.9 L1121.8 357 L1118.2 355.2 L1114.9 353.6 L1111.8 352.3 L1106.1 350 L1101.2 348.6 L1096.9 347.8 L1093.1 347.3 L1089.7 346.9 L1086.4 346.4 L1082.8 345.7 Z" fill="url(#bal)"/>
<path d="M633 448.4 L629 447 L625 445.5 L621.2 444 L617.3 442.5 L613.5 441 L609.7 439.5 L606 438 L602.2 436.5 L598.5 435 L594.8 433.5 L591 432 L587.3 430.5 L583.5 429 L579.7 427.6 L575.8 426.1 L571.9 424.6 L568 423.2 L564 421.7 L560 420.2 L555.9 418.7 L551.8 417.2 L547.7 415.7 L543.5 414.2 L539.4 412.7 L535.4 411.2 L531.3 409.8 L527.3 408.4 L523.4 407 L519.6 405.6 L515.9 404.3 L512.2 403 L508.7 401.8 L504.4 400.2 L500.4 398.8 L496.6 397.5 L493.1 396.2 L489.7 395 L486.2 393.8 L482.8 392.7 L479.1 391.5 L475.3 390.2 L471.1 388.8 L466.6 387.4 L461.5 385.8 L458.2 384.8 L454.7 383.7 L451 382.5 L447.2 381.3 L443.1 380 L439 378.7 L434.8 377.4 L430.4 376.1 L426.1 374.7 L421.7 373.4 L417.3 372 L412.9 370.7 L408.5 369.4 L404.3 368.2 L400.1 367 L396 365.8 L392 364.7 L388.3 363.7 L384.6 362.7 L381.2 361.9 L375.9 360.6 L371 359.5 L366.4 358.5 L362.1 357.6 L357.9 356.9 L353.9 356.2 L350.1 355.6 L346.2 355.1 L342.4 354.6 L338.6 354.1 L334.7 353.5 L330.6 353 L326.6 352.6 L322.9 352.3 L319.5 352.1 L316.2 352 L313 351.9 L309.7 351.8 L306.2 351.6 L302.4 351.4 L298 351 L293 350.5 L287.3 349.9 L280.6 349 L279.4 358.5 L286.2 359.3 L292.1 359.9 L297.3 360.3 L301.8 360.6 L305.8 360.8 L309.4 360.9 L312.7 361.1 L315.8 361.2 L319 361.4 L322.1 361.6 L325.6 362 L329.4 362.4 L333.5 363 L337.4 363.5 L341.1 364 L344.9 364.5 L348.6 365.1 L352.3 365.7 L356.2 366.4 L360.2 367.2 L364.4 368.1 L368.8 369.1 L373.6 370.2 L378.8 371.5 L382.1 372.4 L385.6 373.4 L389.3 374.4 L393.2 375.5 L397.3 376.7 L401.4 377.9 L405.7 379.1 L410 380.4 L414.3 381.8 L418.7 383.1 L423.1 384.4 L427.4 385.8 L431.7 387.1 L436 388.5 L440.1 389.7 L444.1 391 L448 392.2 L451.7 393.4 L455.2 394.5 L458.5 395.5 L463.5 397.1 L468 398.6 L472.1 399.9 L475.9 401.2 L479.5 402.4 L482.9 403.6 L486.2 404.8 L489.6 406 L493.2 407.2 L496.9 408.5 L500.9 410 L505.3 411.5 L508.8 412.8 L512.4 414.1 L516.1 415.4 L519.9 416.8 L523.8 418.2 L527.8 419.7 L531.8 421.2 L535.8 422.6 L539.9 424.2 L544 425.7 L548.1 427.2 L552.2 428.7 L556.2 430.2 L560.2 431.8 L564.2 433.3 L568.1 434.8 L571.9 436.3 L575.7 437.8 L579.4 439.3 L583.2 440.8 L586.9 442.3 L590.6 443.8 L594.3 445.4 L598 446.9 L601.8 448.4 L605.5 450 L609.3 451.5 L613.2 453 L617 454.6 L621 456.1 L625 457.6 L629 459.2 Z" fill="url(#bal)"/>
<path d="M1081.5 350.6L1082.5 345.4M1083.2 351L1084.1 345.7M1084.9 351.3L1085.8 346M1086.6 351.6L1087.4 346.3M1088.3 351.9L1089.1 346.5M1090 352.1L1090.8 346.7M1091.7 352.4L1092.5 346.9M1093.2 352.6L1094.3 347.1M1094.9 352.9L1096 347.4M1096.3 353.2L1097.9 347.8M1098 353.6L1099.5 348.1M1099.4 354L1101.4 348.6M1101 354.5L1103 349.1M1102.6 355.1L1104.6 349.7M1104 355.6L1106.4 350.3M1105.6 356.3L1108 351M1107.1 357L1109.5 351.6M1108.7 357.6L1111.1 352.3M1110.1 358.3L1112.7 353M1111.6 359.1L1114.3 353.8M1113.1 359.8L1115.8 354.5M1114.7 360.6L1117.4 355.3M1116.1 361.4L1118.9 356.1M1117.6 362.2L1120.4 356.8M1119.1 363L1122 357.6M1120.6 363.8L1123.5 358.4M1122.1 364.6L1125 359.2M1123.6 365.4L1126.5 360M1125.1 366.2L1128 360.8M1126.5 367L1129.5 361.6M1128 367.8L1131 362.4M1129.5 368.7L1132.5 363.2M1130.9 369.5L1134 364.1M1132.4 370.3L1135.5 364.9M1133.9 371.2L1137 365.7M1135.3 372L1138.5 366.6M1136.8 372.9L1140 367.4M1138.3 373.7L1141.5 368.3M1139.7 374.6L1143 369.2M1141.2 375.5L1144.5 370M1142.7 376.4L1146 370.9M1144.2 377.3L1147.5 371.8M1145.6 378.2L1149 372.7M1147.1 379.1L1150.5 373.6M1148.6 380L1152 374.5M1150 381L1153.6 375.5M1151.5 381.9L1155.1 376.4M1153 382.9L1156.6 377.3M1154.5 383.8L1158.1 378.3M1156 384.8L1159.6 379.3M1157.4 385.8L1161.2 380.3M1158.9 386.8L1162.6 381.3M1160.3 387.8L1164.2 382.4M1161.8 388.8L1165.7 383.4M1163.2 389.8L1167.3 384.5M1164.6 390.9L1168.7 385.6M1166.1 392L1170.2 386.7M1167.4 393.1L1171.7 387.9M1168.9 394.3L1173.2 389M1170.2 395.4L1174.7 390.2M1171.6 396.6L1176.1 391.4M1173 397.8L1177.5 392.6M1174.3 399L1179 393.9M1175.7 400.2L1180.4 395.2M1177 401.5L1181.8 396.5M1178.4 402.8L1183.2 397.8M1179.7 404L1184.6 399.1M1181 405.4L1186 400.4M1182.3 406.7L1187.3 401.8M1183.7 408L1188.7 403.1M1185 409.4L1190.1 404.5M1186.3 410.8L1191.4 405.9M1187.6 412.1L1192.7 407.3M1188.9 413.5L1194.1 408.6M1190.2 414.9L1195.4 410M1191.6 416.4L1196.8 411.4M1192.9 417.8L1198.1 412.8M1194.2 419.2L1199.4 414.2M1195.6 420.7L1200.8 415.6M1197 422.1L1202.2 417M1198.3 423.5L1203.6 418.4M1199.7 424.9L1205 419.8M1201.1 426.4L1206.4 421.2M1202.4 427.8L1207.8 422.7M1203.8 429.3L1209.2 424.1M1205.2 430.7L1210.7 425.6M1206.6 432.2L1212.1 427.1M1207.9 433.7L1213.6 428.6M1209.3 435.3L1215 430.1M1210.6 436.8L1216.5 431.7M1211.9 438.3L1218 433.4M1213.2 439.9L1219.3 435M1214.4 441.5L1220.8 436.7M1215.7 443.2L1222.1 438.4M1216.9 444.8L1223.5 440.3M1218.2 446.6L1224.8 442M1219.3 448.3L1226.2 444M1220.5 450.2L1227.5 445.8M1221.6 451.9L1228.8 447.8M1222.7 453.9L1229.9 449.7M1223.7 455.8L1231.2 451.8M1224.8 457.8L1232.3 453.8M1225.7 459.7L1233.5 456M1226.7 461.8L1234.5 458M1227.7 463.9L1235.6 460.3M1228.6 466L1236.7 462.5M1229.5 468.2L1237.7 464.7M1230.4 470.3L1238.7 466.9M1231.3 472.6L1239.7 469.2M1232.2 474.8L1240.7 471.5M1233.1 477.1L1241.7 473.8M1233.9 479.4L1242.6 476.2M1234.7 481.7L1243.6 478.7M1235.5 484.1L1244.4 481M1236.3 486.4L1245.3 483.5M1237.1 488.9L1246.2 486M1237.8 491.3L1247 488.5M1238.5 493.7L1247.9 491.1M1239.2 496.3L1248.6 493.6M1239.8 498.7L1249.4 496.3M1240.4 501.2L1250.2 499M1241 503.9L1250.8 501.6M1241.6 506.4L1251.5 504.4M1242.1 508.8L1252.1 507.4M1242.5 511.6L1252.6 510.1M1242.9 513.9L1253.1 513.2M1243.1 516.7L1253.4 516M1243.2 519L1253.5 519.3M1243.1 521.3L1253.4 522.6M1242.8 524.2L1253.2 525.4M1242.4 526.6L1252.7 528.6M1242 529.1L1252.1 531.7M1241.4 531.6L1251.4 534.8M1240.6 534.3L1250.6 537.5M1239.9 536.7L1249.6 540.6M1239 539L1248.5 543.6M1237.9 541.6L1247.3 546.2M1236.8 543.9L1245.9 549M1235.4 546.4L1244.6 551.6M1234.1 548.6L1243 554.2M1232.7 550.8L1241.3 556.8M1231.3 553L1239.5 559.3M1229.7 555.3L1237.9 561.6M1228.2 557.2L1235.9 564M1226.6 559.1L1233.8 566.4M1224.7 561.1L1231.9 568.4M1223.1 562.8L1229.6 570.6M1221.3 564.4L1227.2 572.6M1219.1 566.1L1225 574.3M1217.1 567.5L1222.6 576M1215 568.9L1220.1 577.6M1212.7 570.4L1217.7 579M1210.6 571.6L1215.1 580.5M1208.5 572.7L1212.5 581.9M1206 573.9L1210 583M1203.8 574.9L1207.3 584.2M1201.5 575.8L1204.6 585.2M1199 576.7L1202 586.1M1196.6 577.5L1199.3 587M1194.1 578.3L1196.7 587.7M1191.6 579L1194 588.5M1189 579.7L1191.5 589.2M1186.5 580.3L1188.8 589.9M1184 580.9L1186.2 590.5M1181.4 581.5L1183.5 591.1M1178.9 582.1L1180.9 591.7M1176.3 582.6L1178.3 592.2M1173.7 583.2L1175.7 592.8M1171.1 583.7L1173 593.3M1168.6 584.2L1170.4 593.8M1165.9 584.7L1167.7 594.3M1163.4 585.2L1165.1 594.8M1160.8 585.6L1162.4 595.3M1158.2 586.1L1159.8 595.8M1155.6 586.5L1157.2 596.2M1153 587L1154.5 596.7M1150.4 587.4L1151.9 597.1M1147.8 587.8L1149.2 597.5M1145.2 588.2L1146.6 597.9M1142.6 588.6L1143.9 598.3M1139.9 588.9L1141.3 598.6M1137.4 589.3L1138.6 599M1134.8 589.6L1135.9 599.3M1132.1 589.9L1133.2 599.7M1129.5 590.2L1130.5 600M1127 590.5L1127.8 600.2M1124.3 590.7L1125.2 600.5M1121.7 590.9L1122.5 600.7M1119.1 591.2L1119.8 600.9M1116.4 591.3L1117.1 601.1M1113.8 591.5L1114.5 601.3M1111.2 591.7L1111.8 601.5M1108.5 591.9L1109.1 601.7M1105.9 592L1106.4 601.8M1103.3 592.2L1103.7 602M1100.8 592.3L1101 602.1M1098.1 592.4L1098.3 602.2M1095.5 592.4L1095.5 602.2M1093 592.4L1092.8 602.2M1090.3 592.4L1090.1 602.2M1087.8 592.3L1087.3 602.1M1085.3 592.2L1084.6 601.9M1082.7 592L1081.8 601.8M1080.1 591.8L1079.1 601.5M1077.5 591.5L1076.4 601.3M1075 591.3L1073.6 601M1072.3 590.9L1071 600.6M1069.8 590.6L1068.3 600.3M1067.2 590.2L1065.6 599.9M1064.6 589.8L1062.9 599.5M1062 589.4L1060.3 599M1059.4 588.9L1057.6 598.6M1056.9 588.4L1054.9 598.1M1054.3 587.9L1052.3 597.5M1051.7 587.3L1049.6 597M1049.1 586.8L1047 596.4M1046.6 586.2L1044.3 595.8M1043.9 585.6L1041.7 595.3M1041.4 585L1039 594.6M1038.8 584.3L1036.4 594M1036.1 583.7L1033.7 593.4M1033.5 583L1031.1 592.7M1030.9 582.3L1028.4 592M1028.3 581.7L1025.8 591.4M1025.7 581L1023.1 590.7M1023.1 580.3L1020.4 590M1020.4 579.6L1017.8 589.3M1017.8 578.8L1015.1 588.6M1015.1 578.1L1012.5 587.9M1012.5 577.4L1009.8 587.2M1009.8 576.7L1007.1 586.5M1007.2 575.9L1004.5 585.7M1004.5 575.2L1001.8 585M1001.9 574.4L999.1 584.3M999.2 573.7L996.4 583.5M996.5 572.9L993.8 582.8M993.9 572.1L991.1 582M991.2 571.4L988.4 581.3M988.5 570.6L985.7 580.5M985.8 569.8L983 579.8M983.1 569.1L980.3 579M980.4 568.3L977.6 578.3M977.7 567.5L974.9 577.5M975 566.8L972.2 576.8M972.3 566L969.5 576M969.5 565.2L966.7 575.3M966.8 564.4L964 574.5M964.1 563.7L961.3 573.8M961.3 562.9L958.6 573.1M958.5 562.2L955.8 572.3M955.7 561.5L953.1 571.6M953 560.7L950.4 570.8M950.2 560.1L947.7 570.1M947.4 559.4L945 569.5M944.7 558.7L942.2 568.8M942 558.1L939.5 568.1M939.2 557.4L936.8 567.4M936.5 556.8L934.1 566.7M933.8 556.1L931.4 566.1M931.1 555.5L928.7 565.4M928.5 554.8L925.9 564.7M925.9 554.2L923.2 564M923.2 553.5L920.6 563.2M920.6 552.8L917.9 562.5M918 552.1L915.2 561.7M915.4 551.3L912.5 561M912.8 550.6L909.9 560.2M910.2 549.8L907.3 559.4M907.7 549L904.6 558.5M905.1 548.2L902.1 557.7M902.6 547.4L899.4 556.9M900 546.6L896.9 556M897.5 545.8L894.3 555.2M894.9 544.9L891.8 554.3M892.4 544.1L889.2 553.4M889.9 543.2L886.7 552.5M887.4 542.4L884.1 551.6M884.9 541.5L881.6 550.8M882.3 540.6L879.1 549.9M879.8 539.8L876.6 549M877.4 538.9L874 548.1M874.9 538L871.5 547.1M872.4 537.1L869.1 546.2M869.9 536.2L866.6 545.3M867.5 535.3L864.1 544.4M865 534.4L861.6 543.5M862.6 533.5L859.2 542.5M860.1 532.6L856.7 541.6M857.7 531.7L854.3 540.7M855.2 530.8L851.9 539.8M852.8 529.9L849.4 538.8M850.4 529L847 537.9M848 528.1L844.6 537M845.6 527.2L842.2 536.1M843.2 526.3L839.8 535.1M840.8 525.4L837.4 534.2M838.4 524.5L835 533.3M836 523.6L832.6 532.4M833.6 522.7L830.2 531.4M831.2 521.8L827.8 530.5M828.8 520.9L825.5 529.6M826.5 519.9L823.1 528.7M824.1 519L820.7 527.7M821.7 518.1L818.4 526.8M819.4 517.2L816 525.9M817 516.3L813.7 525M814.7 515.4L811.3 524.1M812.3 514.5L809 523.2M810 513.6L806.6 522.2M807.6 512.7L804.3 521.3M805.3 511.8L802 520.4M803 510.9L799.6 519.5M800.6 510.1L797.3 518.6M798.3 509.2L795 517.7M796 508.3L792.7 516.8M793.7 507.4L790.4 515.9M791.4 506.5L788.1 515M789.1 505.6L785.8 514.1M786.8 504.7L783.5 513.2M784.5 503.8L781.2 512.3M782.2 502.9L778.9 511.4M779.9 502.1L776.6 510.5M777.6 501.2L774.3 509.6M775.3 500.3L772.1 508.7M773.1 499.4L769.8 507.8M770.8 498.5L767.5 506.9M768.5 497.7L765.3 506M766.3 496.8L763 505.1M764 495.9L760.8 504.2M761.7 495L758.5 503.3M759.5 494.2L756.3 502.4M757.2 493.3L754 501.6M755 492.4L751.8 500.7M752.7 491.6L749.5 499.8M750.5 490.7L747.3 498.9M748.3 489.8L745.1 498M746 489L742.9 497.2M743.8 488.1L740.6 496.3M741.6 487.3L738.4 495.4M739.4 486.4L736.2 494.6M737.2 485.6L734 493.7M734.9 484.7L731.8 492.8M732.7 483.9L729.6 492M730.5 483L727.4 491.1M728.3 482.2L725.2 490.3M726.1 481.3L723 489.4M723.9 480.5L720.9 488.5M721.8 479.7L718.7 487.7M719.6 478.8L716.5 486.9M717.4 478L714.3 486M715.2 477.2L712.2 485.2M713.1 476.4L710 484.3M710.9 475.6L707.9 483.5M708.7 474.8L705.7 482.7M706.6 473.9L703.6 481.9M704.4 473.1L701.4 481M702.2 472.4L699.3 480.2M700.1 471.6L697.2 479.4M698 470.8L695.1 478.6M695.8 470L692.9 477.8M693.7 469.2L690.8 477M691.5 468.4L688.7 476.3M689.4 467.7L686.6 475.5M687.3 466.9L684.5 474.7M685.1 466.1L682.3 473.9M683 465.4L680.2 473.2M680.9 464.6L678.1 472.4M678.8 463.9L676 471.6M676.6 463.1L673.9 470.9M674.5 462.4L671.8 470.2M672.4 461.7L669.7 469.4M670.3 461L667.6 468.7M668.2 460.3L665.6 468M666.1 459.6L663.5 467.3M663.9 458.9L661.4 466.6M661.8 458.2L659.3 465.9M659.8 457.5L657.2 465.2M657.7 456.8L655.2 464.5M655.6 456.2L653.1 463.8M653.5 455.5L651.1 463.1M651.5 454.9L649 462.4M649.4 454.2L646.9 461.7M647.4 453.6L644.9 461M645.4 452.9L642.8 460.3M643.4 452.2L640.8 459.6M641.4 451.6L638.8 458.9M639.4 450.9L636.8 458.2M637.4 450.2L634.8 457.5M635.4 449.5L632.8 456.8M633.5 448.8L630.8 456M631.5 448.1L628.8 455.3M629.6 447.4L626.8 454.6M627.6 446.6L624.9 453.8M625.7 445.9L622.9 453.1M623.7 445.2L621 452.3M621.8 444.4L619 451.6M619.9 443.7L617.1 450.8M618 443L615.2 450M616 442.2L613.2 449.3M614.1 441.5L611.3 448.5M612.2 440.7L609.4 447.7M610.3 440L607.5 447M608.4 439.2L605.6 446.2M606.5 438.5L603.7 445.4M604.6 437.7L601.8 444.7M602.7 436.9L599.9 443.9M600.8 436.2L598 443.1M599 435.4L596.2 442.4M597.1 434.7L594.3 441.6M595.2 433.9L592.4 440.8M593.3 433.2L590.5 440.1M591.4 432.4L588.7 439.3M589.6 431.7L586.8 438.6M587.7 430.9L584.9 437.8M585.8 430.2L583.1 437.1M583.9 429.5L581.2 436.3M582.1 428.7L579.4 435.6M580.2 428L577.5 434.8M578.3 427.3L575.7 434.1M576.5 426.6L573.8 433.4M574.6 425.9L572 432.7M572.8 425.2L570.2 432M570.9 424.4L568.3 431.3M569 423.8L566.5 430.6M567.2 423.1L564.6 429.9M565.3 422.4L562.8 429.2M563.5 421.7L561 428.5M561.6 421L559.1 427.8M559.8 420.3L557.3 427.1M558 419.6L555.5 426.4M556.1 418.9L553.6 425.7M554.3 418.3L551.8 425M552.4 417.6L550 424.4M550.6 416.9L548.1 423.7M548.8 416.3L546.3 423M546.9 415.6L544.5 422.3M545.1 414.9L542.6 421.6M543.3 414.3L540.8 421M541.4 413.6L539 420.3M539.6 412.9L537.2 419.6M537.8 412.3L535.4 419M536 411.6L533.5 418.3M534.1 410.9L531.7 417.6M532.3 410.3L529.9 417M530.5 409.6L528.1 416.3M528.7 409L526.3 415.7M526.9 408.3L524.5 415M525.1 407.7L522.7 414.4M523.3 407L520.9 413.7M521.4 406.4L519.1 413.1M519.6 405.8L517.3 412.4M517.8 405.1L515.5 411.8M516 404.5L513.7 411.1M514.2 403.8L511.9 410.5M512.4 403.2L510.1 409.8M510.6 402.6L508.3 409.2M508.8 401.9L506.5 408.5M507 401.3L504.7 407.9M505.2 400.7L502.9 407.3M503.5 400L501.1 406.6M501.7 399.4L499.3 406M499.9 398.8L497.5 405.3M498.1 398.1L495.7 404.7M496.3 397.5L494 404.1M494.5 396.8L492.2 403.4M492.7 396.2L490.4 402.8M490.9 395.6L488.6 402.2M489.1 394.9L486.8 401.5M487.3 394.3L485 400.9M485.5 393.7L483.2 400.3M483.7 393.1L481.4 399.7M481.9 392.4L479.7 399.1M480.1 391.8L477.9 398.5M478.3 391.2L476.1 397.9M476.5 390.6L474.3 397.3M474.6 390L472.5 396.7M472.8 389.4L470.7 396.1M471 388.8L468.9 395.5M469.2 388.3L467.1 394.9M467.4 387.7L465.3 394.3M465.6 387.1L463.5 393.8M463.8 386.5L461.7 393.2M462 385.9L459.9 392.6M460.1 385.4L458 392.1M458.3 384.8L456.2 391.5M456.5 384.2L454.4 390.9M454.7 383.7L452.6 390.3M452.9 383.1L450.8 389.8M451.1 382.5L449 389.2M449.3 381.9L447.2 388.6M447.5 381.4L445.4 388.1M445.6 380.8L443.5 387.5M443.8 380.2L441.7 386.9M442 379.7L439.9 386.3M440.2 379.1L438.1 385.8M438.4 378.5L436.3 385.2M436.6 378L434.5 384.6M434.8 377.4L432.7 384.1M432.9 376.8L430.9 383.5M431.1 376.3L429.1 383M429.3 375.7L427.2 382.4M427.5 375.1L425.4 381.8M425.7 374.6L423.6 381.3M423.9 374L421.8 380.7M422 373.5L420 380.2M420.2 372.9L418.2 379.6M418.4 372.4L416.4 379.1M416.6 371.8L414.6 378.5M414.7 371.3L412.7 378M412.9 370.7L410.9 377.4M411.1 370.2L409.1 376.9M409.3 369.6L407.3 376.3M407.4 369.1L405.5 375.8M405.6 368.5L403.7 375.2M403.8 368L401.8 374.7M402 367.4L400 374.2M400.1 366.9L398.2 373.6M398.3 366.4L396.4 373.1M396.5 365.9L394.6 372.6M394.6 365.3L392.7 372.1M392.8 364.8L390.9 371.6M390.9 364.3L389.1 371.1M389.1 363.8L387.3 370.6M387.3 363.3L385.5 370.1M385.4 362.8L383.6 369.6M383.5 362.3L381.8 369.1M381.7 361.8L380 368.6M379.8 361.4L378.2 368.2M378 360.9L376.3 367.7M376.1 360.4L374.5 367.2M374.2 360L372.7 366.8M372.4 359.6L370.9 366.4M370.5 359.1L369 366M368.6 358.7L367.2 365.6M366.8 358.3L365.3 365.1M364.9 357.9L363.5 364.8M363 357.5L361.7 364.4M361.1 357.1L359.9 364M359.2 356.8L358 363.7M357.3 356.4L356.2 363.3M355.5 356.1L354.3 363M353.5 355.8L352.5 362.7M351.7 355.5L350.6 362.4M349.7 355.2L348.7 362.1M347.9 354.9L346.9 361.8M346 354.6L345 361.5M344.1 354.3L343.1 361.3M342.2 354.1L341.3 361M340.3 353.8L339.4 360.8M338.4 353.6L337.5 360.5M336.5 353.3L335.6 360.3M334.6 353.1L333.7 360M332.7 352.8L331.9 359.8M330.9 352.6L330 359.5M328.9 352.3L328.2 359.3M327 352.1L326.3 359.1M325 351.9L324.5 358.9M323.1 351.8L322.6 358.7M321.2 351.6L320.8 358.6M319.2 351.5L318.9 358.5M317.3 351.4L317 358.4M315.4 351.3L315.2 358.3M313.5 351.3L313.3 358.3M311.6 351.2L311.3 358.2M309.7 351.1L309.4 358.1M307.9 351.1L307.5 358M306 351L305.6 358M304.1 350.9L303.7 357.9M302.3 350.8L301.7 357.7M300.4 350.6L299.8 357.6M298.5 350.5L297.9 357.5M296.7 350.3L296 357.3M294.8 350.2L294.1 357.1M292.9 350L292.1 356.9M291 349.8L290.2 356.7M289.2 349.6L288.3 356.5M287.3 349.4L286.4 356.3M285.4 349.2L284.5 356.1M283.5 348.9L282.6 355.9M281.6 348.7L280.8 355.6M279.8 348.4L278.8 355.4M277.9 348.2L277 355.1M276 347.9L275.1 354.8M274.2 347.7L273.2 354.6M272.3 347.4L271.3 354.3M270.5 347.2L269.5 354M268.6 346.9L267.6 353.8M266.7 346.7L265.7 353.5M264.9 346.4L263.9 353.2M263 346.1L262 352.9M261.2 345.9L260.2 352.6M259.4 345.6L258.3 352.4M257.5 345.3L256.5 352.1M255.7 345L254.7 351.8M253.9 344.8L252.8 351.5M252 344.5L251 351.2M250.2 344.2L249.2 350.9M248.4 344L247.3 350.7M246.6 343.7L245.5 350.4M244.7 343.4L243.7 350.1M242.9 343.1L241.9 349.8M241.1 342.9L240.1 349.5M239.3 342.6L238.3 349.2M237.5 342.3L236.5 348.9M235.7 342L234.7 348.7M233.9 341.7L232.9 348.4M232.1 341.5L231.1 348.1M230.3 341.2L229.3 347.8M228.5 340.9L227.5 347.5M226.7 340.6L225.7 347.2M224.9 340.4L223.9 346.9M223.1 340.1L222.1 346.7M221.4 339.8L220.3 346.4M219.6 339.5L218.5 346.1M217.8 339.3L216.8 345.8M216 339L215 345.5M214.3 338.7L213.2 345.2M212.5 338.4L211.5 344.9M210.7 338.1L209.7 344.6M209 337.9L207.9 344.4M207.2 337.6L206.2 344.1M205.4 337.3L204.4 343.8M203.7 337L202.6 343.5M201.9 336.8L200.9 343.2M200.2 336.5L199.1 342.9M198.4 336.2L197.4 342.7M196.7 336L195.6 342.4M194.9 335.7L193.9 342.1M193.2 335.4L192.2 341.8M191.4 335.1L190.4 341.5M189.7 334.9L188.7 341.3M188 334.6L186.9 341M186.2 334.3L185.2 340.7M184.5 334.1L183.5 340.4M182.8 333.8L181.8 340.1M181 333.5L180 339.9M179.3 333.2L178.3 339.6M177.6 333L176.6 339.3M175.9 332.7L174.9 339M174.2 332.4L173.2 338.8M172.4 332.2L171.4 338.5M170.7 331.9L169.7 338.2M169 331.7L168 337.9M167.3 331.4L166.3 337.7M165.6 331.1L164.6 337.4M163.9 330.9L162.9 337.1M162.2 330.6L161.2 336.9M160.5 330.3L159.5 336.6M158.8 330.1L157.8 336.3" stroke="#6e4830" stroke-width="1.2" fill="none"/>
<path d="M1081.6 349.9 L1085.4 350.7 L1089 351.2 L1092.3 351.7 L1095.7 352.2 L1099.5 353.1 L1103.8 354.6 L1109.1 356.9 L1112 358.3 L1115.2 359.9 L1118.6 361.7 L1122.2 363.6 L1126 365.7 L1129.9 367.9 L1133.9 370.2 L1138 372.5 L1142 374.9 L1146 377.3 L1149.8 379.7 L1153.6 382.1 L1157.2 384.5 L1160.5 386.7 L1163.6 388.9 L1167.2 391.7 L1170.6 394.4 L1173.8 397.2 L1177 400 L1179.9 402.9 L1182.8 405.7 L1185.5 408.5 L1188.2 411.3 L1190.8 414 L1193.3 416.7 L1195.7 419.3 L1198.1 421.8 L1201.5 425.3 L1204.7 428.6 L1207.6 431.7 L1210.3 434.7 L1212.8 437.6 L1215.2 440.6 L1217.4 443.5 L1219.6 446.6 L1222 450.3 L1224.1 453.9 L1226.1 457.6 L1227.9 461.4 L1229.7 465.2 L1231.3 469.2 L1233 473.2 L1234.4 476.9 L1235.8 480.8 L1237.2 484.8 L1238.5 488.9 L1239.7 492.9 L1240.8 496.7 L1241.7 500.4 L1242.5 503.8 L1243.5 508.7 L1244.2 512.9 L1244.6 516.7 L1244.7 520.5 L1244.3 524.6 L1243.7 528.2 L1242.8 532 L1241.7 535.8 L1240.4 539.7 L1238.7 543.5 L1236.7 547.1 L1234.8 550.3 L1232.7 553.6 L1230.4 556.7 L1227.9 559.8 L1225.2 562.8 L1222.2 565.5 L1218.9 568.1 L1215.8 570.1 L1212.8 572 L1209.6 573.8 L1206.1 575.4 L1202.3 577 L1198 578.5 L1192.9 580.1 L1187.1 581.6 L1184.1 582.3 L1180.8 583.1 L1177.3 583.9 L1173.5 584.6 L1169.6 585.4 L1165.6 586.2 L1161.5 586.9 L1157.2 587.7 L1153 588.4 L1148.6 589.1 L1144.3 589.7 L1140 590.3 L1135.8 590.9 L1131.6 591.4 L1127.5 591.8 L1123.5 592.2 L1119.7 592.5 L1115.6 592.8 L1111.7 593.1 L1107.9 593.3 L1104.3 593.5 L1100.8 593.7 L1097.3 593.8 L1093.8 593.8 L1090.3 593.8 L1086.7 593.7 L1082.9 593.4 L1079 593.1 L1074.8 592.7 L1070.4 592.1 L1065.7 591.4 L1060.6 590.6 L1057.4 590 L1054 589.3 L1050.5 588.5 L1046.8 587.7 L1043 586.8 L1039.2 585.9 L1035.2 584.9 L1031.1 583.9 L1027 582.8 L1022.8 581.7 L1018.6 580.6 L1014.3 579.4 L1010.1 578.2 L1005.8 577 L1001.5 575.8 L997.2 574.6 L992.9 573.4 L988.7 572.2 L984.5 571 L980.4 569.8 L976.3 568.7 L972.3 567.6 L968.4 566.5 L964.7 565.4 L961 564.4 L956.6 563.2 L952.6 562.2 L948.8 561.2 L945.2 560.4 L941.8 559.5 L938.5 558.8 L935.4 558 L932.2 557.2 L929.1 556.5 L925.9 555.7 L922.6 554.8 L919.2 553.9 L915.6 552.9 L911.8 551.8 L907.6 550.5 L903.2 549.1 L898.3 547.6 L893.1 545.8 L887.4 543.9 L881.2 541.7 L878.4 540.7 L875.5 539.7 L872.5 538.6 L869.3 537.5 L866.1 536.3 L862.7 535 L859.3 533.8 L855.7 532.4 L852.1 531.1 L848.3 529.7 L844.5 528.2 L840.6 526.8 L836.7 525.3 L832.7 523.8 L828.6 522.2 L824.5 520.6 L820.3 519 L816.1 517.4 L811.9 515.8 L807.7 514.2 L803.4 512.5 L799.1 510.9 L794.8 509.2 L790.5 507.5 L786.2 505.9 L781.9 504.2 L777.6 502.6 L773.4 500.9 L769.1 499.3 L764.9 497.6 L760.8 496 L756.6 494.4 L752.6 492.8 L748.5 491.3 L744.6 489.8 L740.7 488.3 L736.8 486.8 L733.1 485.3 L729.4 483.9 L725.8 482.6 L722.4 481.2 L719 479.9 L715.7 478.7 L712.5 477.5 L709.5 476.3 L706.5 475.2 L703.7 474.2 L701 473.2 L694.4 470.8 L688.4 468.6 L683 466.6 L678 464.9 L673.5 463.3 L669.4 461.9 L665.7 460.6 L662.2 459.5 L659 458.5 L655.9 457.5 L653 456.5 L650.2 455.6 L647.4 454.7 L644.6 453.8 L641.7 452.8 L638.6 451.8 L635.4 450.7 L632 449.4 L627.9 447.9 L624 446.4 L620.1 444.9 L616.2 443.5 L612.4 442 L608.6 440.5 L604.9 439 L601.1 437.5 L597.4 436 L593.7 434.5 L589.9 433 L586.2 431.5 L582.4 430 L578.6 428.5 L574.8 427 L570.9 425.6 L567 424.1 L563 422.6 L559 421.1 L554.9 419.6 L550.8 418.1 L546.7 416.6 L542.6 415.1 L538.5 413.6 L534.4 412.1 L530.4 410.7 L526.4 409.3 L522.5 407.9 L518.7 406.5 L515 405.2 L511.3 403.9 L507.8 402.6 L503.5 401.1 L499.5 399.7 L495.7 398.3 L492.2 397.1 L488.8 395.9 L485.4 394.7 L481.9 393.5 L478.3 392.3 L474.5 391 L470.3 389.7 L465.8 388.2 L460.8 386.6 L457.5 385.6 L454 384.5 L450.3 383.3 L446.4 382.1 L442.4 380.8 L438.2 379.5 L434 378.2 L429.7 376.9 L425.3 375.5 L420.9 374.2 L416.5 372.8 L412.1 371.5 L407.8 370.2 L403.5 369 L399.4 367.7 L395.3 366.6 L391.4 365.5 L387.6 364.4 L384 363.5 L380.6 362.6 L375.4 361.3 L370.5 360.1 L365.9 359.1 L361.6 358.3 L357.5 357.5 L353.5 356.8 L349.7 356.2 L345.9 355.6 L342.1 355.1 L338.3 354.6 L334.4 354 L330.3 353.5 L326.3 353.1 L322.7 352.7 L319.4 352.5 L316.1 352.4 L313 352.2 L309.7 352.1 L306.1 352 L302.2 351.8 L297.8 351.4 L292.8 351 L287 350.4 L280.3 349.5 L277.5 349.1 L274.5 348.7 L271.3 348.3 L268.1 347.8 L264.7 347.4 L261.1 346.8 L257.5 346.3 L253.8 345.8 L250 345.2 L246.1 344.6 L242.1 344 L238.1 343.4 L234 342.7 L229.8 342.1 L225.6 341.4 L221.3 340.8 L217 340.1 L212.7 339.4 L208.3 338.7 L204 338 L199.6 337.4 L195.3 336.7 L190.9 336 L186.6 335.3 L182.3 334.6 L178 334 L173.8 333.3 L169.6 332.7 L165.4 332 L161.4 331.4 L157.3 330.8M1082.4 346.1 L1086.1 346.9 L1089.5 347.3 L1092.9 347.7 L1096.5 348.3 L1100.6 349.2 L1105.3 350.8 L1110.9 353.1 L1113.9 354.5 L1117.1 356.1 L1120.6 357.9 L1124.3 359.8 L1128.1 361.8 L1132.1 364 L1136.1 366.3 L1140.2 368.6 L1144.3 371 L1148.3 373.4 L1152.3 375.8 L1156.1 378.2 L1159.8 380.5 L1163.2 382.8 L1166.4 385.1 L1170.1 387.8 L1173.7 390.7 L1177.1 393.5 L1180.3 396.4 L1183.4 399.3 L1186.3 402.2 L1189.2 405 L1191.9 407.8 L1194.5 410.5 L1197 413.2 L1199.5 415.7 L1201.9 418.2 L1205.3 421.7 L1208.5 424.9 L1211.5 428 L1214.4 431 L1217 434 L1219.6 437 L1222 440.1 L1224.4 443.4 L1227 447.1 L1229.3 451 L1231.5 454.8 L1233.5 458.7 L1235.4 462.6 L1237.2 466.6 L1239 470.8 L1240.6 474.6 L1242.1 478.5 L1243.6 482.6 L1245 486.8 L1246.3 490.9 L1247.5 494.8 L1248.6 498.6 L1249.5 502.2 L1250.6 507.2 L1251.5 511.8 L1252 516.3 L1252.1 520.7 L1251.7 525.4 L1251.1 529.6 L1250.1 533.9 L1248.9 538.2 L1247.3 542.5 L1245.5 546.7 L1243.3 550.9 L1241.1 554.3 L1238.8 557.8 L1236.3 561.2 L1233.5 564.7 L1230.3 568 L1226.9 571.1 L1223.1 573.9 L1219.7 576.2 L1216.3 578.2 L1212.8 580.1 L1209 581.9 L1204.8 583.6 L1200.1 585.3 L1194.8 586.8 L1188.9 588.4 L1185.7 589.2 L1182.3 589.9 L1178.7 590.7 L1174.9 591.5 L1171 592.3 L1166.9 593.1 L1162.7 593.8 L1158.4 594.6 L1154.1 595.3 L1149.7 596 L1145.3 596.7 L1141 597.3 L1136.6 597.8 L1132.4 598.4 L1128.2 598.8 L1124.2 599.2 L1120.3 599.5 L1116.1 599.8 L1112.1 600.1 L1108.3 600.3 L1104.6 600.5 L1101 600.7 L1097.4 600.8 L1093.8 600.8 L1090.1 600.8 L1086.3 600.6 L1082.4 600.4 L1078.3 600.1 L1074 599.6 L1069.5 599 L1064.6 598.3 L1059.4 597.4 L1056.1 596.8 L1052.6 596.2 L1049 595.4 L1045.3 594.6 L1041.4 593.7 L1037.5 592.8 L1033.5 591.8 L1029.4 590.8 L1025.2 589.8 L1021 588.7 L1016.7 587.5 L1012.4 586.4 L1008.1 585.2 L1003.8 584 L999.5 582.9 L995.2 581.7 L990.9 580.5 L986.7 579.3 L982.5 578.1 L978.4 577 L974.3 575.8 L970.3 574.7 L966.4 573.6 L962.7 572.6 L959 571.6 L954.7 570.4 L950.7 569.4 L947 568.4 L943.4 567.5 L940.1 566.7 L936.8 565.9 L933.6 565.1 L930.5 564.3 L927.3 563.5 L924.1 562.7 L920.8 561.8 L917.3 560.8 L913.6 559.8 L909.7 558.6 L905.5 557.3 L901 555.9 L896.1 554.3 L890.8 552.5 L885.1 550.5 L878.8 548.3 L876 547.3 L873.1 546.2 L870.1 545.1 L867 544 L863.7 542.8 L860.3 541.5 L856.9 540.2 L853.3 538.8 L849.7 537.5 L845.9 536 L842.1 534.6 L838.2 533.1 L834.3 531.6 L830.3 530 L826.2 528.4 L822.1 526.9 L817.9 525.2 L813.8 523.6 L809.5 522 L805.3 520.3 L801 518.6 L796.7 517 L792.4 515.3 L788.1 513.6 L783.8 511.9 L779.6 510.2 L775.3 508.5 L771 506.9 L766.8 505.2 L762.6 503.6 L758.4 501.9 L754.3 500.3 L750.3 498.7 L746.2 497.1 L742.3 495.6 L738.4 494.1 L734.6 492.6 L730.8 491.1 L727.2 489.7 L723.6 488.3 L720.1 487 L716.8 485.6 L713.5 484.4 L710.3 483.2 L707.3 482 L704.4 480.9 L701.6 479.8 L699 478.8 L692.4 476.4 L686.4 474.2 L681 472.2 L676.1 470.4 L671.6 468.8 L667.5 467.4 L663.8 466.2 L660.4 465 L657.2 463.9 L654.1 462.9 L651.2 462 L648.4 461 L645.6 460.1 L642.8 459.1 L639.8 458.1 L636.8 457 L633.5 455.9 L630 454.6 L626 453.1 L622 451.5 L618.1 450 L614.2 448.5 L610.4 447 L606.6 445.5 L602.9 443.9 L599.1 442.4 L595.4 440.9 L591.7 439.4 L588 437.9 L584.2 436.4 L580.5 434.9 L576.7 433.4 L572.9 431.9 L569.1 430.4 L565.2 428.9 L561.2 427.5 L557.2 425.9 L553.1 424.4 L549 422.9 L544.9 421.4 L540.8 419.9 L536.8 418.4 L532.7 416.9 L528.7 415.5 L524.7 414 L520.8 412.6 L517 411.2 L513.3 409.9 L509.7 408.6 L506.2 407.4 L501.8 405.8 L497.8 404.4 L494.1 403.1 L490.5 401.8 L487.1 400.6 L483.7 399.4 L480.3 398.2 L476.7 397 L472.9 395.8 L468.8 394.4 L464.3 393 L459.2 391.4 L456 390.3 L452.4 389.2 L448.8 388.1 L444.9 386.9 L440.9 385.6 L436.7 384.3 L432.5 383 L428.2 381.6 L423.8 380.3 L419.5 379 L415.1 377.6 L410.7 376.3 L406.4 375 L402.1 373.7 L398 372.5 L393.9 371.4 L390 370.3 L386.3 369.2 L382.7 368.3 L379.4 367.4 L374.2 366.1 L369.4 365 L364.9 364 L360.6 363.2 L356.6 362.4 L352.7 361.7 L348.9 361.1 L345.2 360.5 L341.5 360 L337.7 359.5 L333.7 359 L329.7 358.5 L325.8 358 L322.3 357.7 L319.1 357.5 L315.9 357.3 L312.8 357.2 L309.5 357.1 L305.9 357 L301.9 356.8 L297.4 356.4 L292.3 356 L286.4 355.3 L279.7 354.5 L276.8 354.1 L273.8 353.7 L270.6 353.2 L267.3 352.7 L263.9 352.2 L260.4 351.7 L256.8 351.1 L253.1 350.6 L249.3 350 L245.4 349.4 L241.4 348.7 L237.3 348.1 L233.2 347.5 L229 346.8 L224.8 346.1 L220.6 345.4 L216.3 344.8 L211.9 344.1 L207.6 343.4 L203.2 342.7 L198.9 342 L194.5 341.3 L190.2 340.6 L185.9 339.9 L181.5 339.2 L177.3 338.5 L173 337.8 L168.9 337.1 L164.7 336.5 L160.7 335.9 L156.7 335.2" stroke="#5e3e28" stroke-width="0.9" fill="none"/>
<path d="M1081.6 349.9 L1085.4 350.7 L1089 351.2 L1092.3 351.7 L1095.7 352.2 L1099.5 353.1 L1103.8 354.6 L1109.1 356.9 L1112 358.3 L1115.2 359.9 L1118.6 361.7 L1122.2 363.6 L1126 365.7 L1129.9 367.9 L1133.9 370.2 L1138 372.5 L1142 374.9 L1146 377.3 L1149.8 379.7 L1153.6 382.1 L1157.2 384.5 L1160.5 386.7 L1163.6 388.9 L1167.2 391.7 L1170.6 394.4 L1173.8 397.2 L1177 400 L1179.9 402.9 L1182.8 405.7 L1185.5 408.5 L1188.2 411.3 L1190.8 414 L1193.3 416.7 L1195.7 419.3 L1198.1 421.8 L1201.5 425.3 L1204.7 428.6 L1207.6 431.7 L1210.3 434.7 L1212.8 437.6 L1215.2 440.6 L1217.4 443.5 L1219.6 446.6 L1222 450.3 L1224.1 453.9 L1226.1 457.6 L1227.9 461.4 L1229.7 465.2 L1231.3 469.2 L1233 473.2 L1234.4 476.9 L1235.8 480.8 L1237.2 484.8 L1238.5 488.9 L1239.7 492.9 L1240.8 496.7 L1241.7 500.4 L1242.5 503.8 L1243.5 508.7 L1244.2 512.9 L1244.6 516.7 L1244.7 520.5 L1244.3 524.6 L1243.7 528.2 L1242.8 532 L1241.7 535.8 L1240.4 539.7 L1238.7 543.5 L1236.7 547.1 L1234.8 550.3 L1232.7 553.6 L1230.4 556.7 L1227.9 559.8 L1225.2 562.8 L1222.2 565.5 L1218.9 568.1 L1215.8 570.1 L1212.8 572 L1209.6 573.8 L1206.1 575.4 L1202.3 577 L1198 578.5 L1192.9 580.1 L1187.1 581.6 L1184.1 582.3 L1180.8 583.1 L1177.3 583.9 L1173.5 584.6 L1169.6 585.4 L1165.6 586.2 L1161.5 586.9 L1157.2 587.7 L1153 588.4 L1148.6 589.1 L1144.3 589.7 L1140 590.3 L1135.8 590.9 L1131.6 591.4 L1127.5 591.8 L1123.5 592.2 L1119.7 592.5 L1115.6 592.8 L1111.7 593.1 L1107.9 593.3 L1104.3 593.5 L1100.8 593.7 L1097.3 593.8 L1093.8 593.8 L1090.3 593.8 L1086.7 593.7 L1082.9 593.4 L1079 593.1 L1074.8 592.7 L1070.4 592.1 L1065.7 591.4 L1060.6 590.6 L1057.4 590 L1054 589.3 L1050.5 588.5 L1046.8 587.7 L1043 586.8 L1039.2 585.9 L1035.2 584.9 L1031.1 583.9 L1027 582.8 L1022.8 581.7 L1018.6 580.6 L1014.3 579.4 L1010.1 578.2 L1005.8 577 L1001.5 575.8 L997.2 574.6 L992.9 573.4 L988.7 572.2 L984.5 571 L980.4 569.8 L976.3 568.7 L972.3 567.6 L968.4 566.5 L964.7 565.4 L961 564.4 L956.6 563.2 L952.6 562.2 L948.8 561.2 L945.2 560.4 L941.8 559.5 L938.5 558.8 L935.4 558 L932.2 557.2 L929.1 556.5 L925.9 555.7 L922.6 554.8 L919.2 553.9 L915.6 552.9 L911.8 551.8 L907.6 550.5 L903.2 549.1 L898.3 547.6 L893.1 545.8 L887.4 543.9 L881.2 541.7 L878.4 540.7 L875.5 539.7 L872.5 538.6 L869.3 537.5 L866.1 536.3 L862.7 535 L859.3 533.8 L855.7 532.4 L852.1 531.1 L848.3 529.7 L844.5 528.2 L840.6 526.8 L836.7 525.3 L832.7 523.8 L828.6 522.2 L824.5 520.6 L820.3 519 L816.1 517.4 L811.9 515.8 L807.7 514.2 L803.4 512.5 L799.1 510.9 L794.8 509.2 L790.5 507.5 L786.2 505.9 L781.9 504.2 L777.6 502.6 L773.4 500.9 L769.1 499.3 L764.9 497.6 L760.8 496 L756.6 494.4 L752.6 492.8 L748.5 491.3 L744.6 489.8 L740.7 488.3 L736.8 486.8 L733.1 485.3 L729.4 483.9 L725.8 482.6 L722.4 481.2 L719 479.9 L715.7 478.7 L712.5 477.5 L709.5 476.3 L706.5 475.2 L703.7 474.2 L701 473.2 L694.4 470.8 L688.4 468.6 L683 466.6 L678 464.9 L673.5 463.3 L669.4 461.9 L665.7 460.6 L662.2 459.5 L659 458.5 L655.9 457.5 L653 456.5 L650.2 455.6 L647.4 454.7 L644.6 453.8 L641.7 452.8 L638.6 451.8 L635.4 450.7 L632 449.4 L627.9 447.9 L624 446.4 L620.1 444.9 L616.2 443.5 L612.4 442 L608.6 440.5 L604.9 439 L601.1 437.5 L597.4 436 L593.7 434.5 L589.9 433 L586.2 431.5 L582.4 430 L578.6 428.5 L574.8 427 L570.9 425.6 L567 424.1 L563 422.6 L559 421.1 L554.9 419.6 L550.8 418.1 L546.7 416.6 L542.6 415.1 L538.5 413.6 L534.4 412.1 L530.4 410.7 L526.4 409.3 L522.5 407.9 L518.7 406.5 L515 405.2 L511.3 403.9 L507.8 402.6 L503.5 401.1 L499.5 399.7 L495.7 398.3 L492.2 397.1 L488.8 395.9 L485.4 394.7 L481.9 393.5 L478.3 392.3 L474.5 391 L470.3 389.7 L465.8 388.2 L460.8 386.6 L457.5 385.6 L454 384.5 L450.3 383.3 L446.4 382.1 L442.4 380.8 L438.2 379.5 L434 378.2 L429.7 376.9 L425.3 375.5 L420.9 374.2 L416.5 372.8 L412.1 371.5 L407.8 370.2 L403.5 369 L399.4 367.7 L395.3 366.6 L391.4 365.5 L387.6 364.4 L384 363.5 L380.6 362.6 L375.4 361.3 L370.5 360.1 L365.9 359.1 L361.6 358.3 L357.5 357.5 L353.5 356.8 L349.7 356.2 L345.9 355.6 L342.1 355.1 L338.3 354.6 L334.4 354 L330.3 353.5 L326.3 353.1 L322.7 352.7 L319.4 352.5 L316.1 352.4 L313 352.2 L309.7 352.1 L306.1 352 L302.2 351.8 L297.8 351.4 L292.8 351 L287 350.4 L280.3 349.5 L277.5 349.1 L274.5 348.7 L271.3 348.3 L268.1 347.8 L264.7 347.4 L261.1 346.8 L257.5 346.3 L253.8 345.8 L250 345.2 L246.1 344.6 L242.1 344 L238.1 343.4 L234 342.7 L229.8 342.1 L225.6 341.4 L221.3 340.8 L217 340.1 L212.7 339.4 L208.3 338.7 L204 338 L199.6 337.4 L195.3 336.7 L190.9 336 L186.6 335.3 L182.3 334.6 L178 334 L173.8 333.3 L169.6 332.7 L165.4 332 L161.4 331.4 L157.3 330.8" stroke="#f2ece6" stroke-width="0.7" fill="none" stroke-dasharray="0.9 1.4" opacity="0.7"/>
<path d="M1082.4 346.1 L1086.1 346.9 L1089.5 347.3 L1092.9 347.7 L1096.5 348.3 L1100.6 349.2 L1105.3 350.8 L1110.9 353.1 L1113.9 354.5 L1117.1 356.1 L1120.6 357.9 L1124.3 359.8 L1128.1 361.8 L1132.1 364 L1136.1 366.3 L1140.2 368.6 L1144.3 371 L1148.3 373.4 L1152.3 375.8 L1156.1 378.2 L1159.8 380.5 L1163.2 382.8 L1166.4 385.1 L1170.1 387.8 L1173.7 390.7 L1177.1 393.5 L1180.3 396.4 L1183.4 399.3 L1186.3 402.2 L1189.2 405 L1191.9 407.8 L1194.5 410.5 L1197 413.2 L1199.5 415.7 L1201.9 418.2 L1205.3 421.7 L1208.5 424.9 L1211.5 428 L1214.4 431 L1217 434 L1219.6 437 L1222 440.1 L1224.4 443.4 L1227 447.1 L1229.3 451 L1231.5 454.8 L1233.5 458.7 L1235.4 462.6 L1237.2 466.6 L1239 470.8 L1240.6 474.6 L1242.1 478.5 L1243.6 482.6 L1245 486.8 L1246.3 490.9 L1247.5 494.8 L1248.6 498.6 L1249.5 502.2 L1250.6 507.2 L1251.5 511.8 L1252 516.3 L1252.1 520.7 L1251.7 525.4 L1251.1 529.6 L1250.1 533.9 L1248.9 538.2 L1247.3 542.5 L1245.5 546.7 L1243.3 550.9 L1241.1 554.3 L1238.8 557.8 L1236.3 561.2 L1233.5 564.7 L1230.3 568 L1226.9 571.1 L1223.1 573.9 L1219.7 576.2 L1216.3 578.2 L1212.8 580.1 L1209 581.9 L1204.8 583.6 L1200.1 585.3 L1194.8 586.8 L1188.9 588.4 L1185.7 589.2 L1182.3 589.9 L1178.7 590.7 L1174.9 591.5 L1171 592.3 L1166.9 593.1 L1162.7 593.8 L1158.4 594.6 L1154.1 595.3 L1149.7 596 L1145.3 596.7 L1141 597.3 L1136.6 597.8 L1132.4 598.4 L1128.2 598.8 L1124.2 599.2 L1120.3 599.5 L1116.1 599.8 L1112.1 600.1 L1108.3 600.3 L1104.6 600.5 L1101 600.7 L1097.4 600.8 L1093.8 600.8 L1090.1 600.8 L1086.3 600.6 L1082.4 600.4 L1078.3 600.1 L1074 599.6 L1069.5 599 L1064.6 598.3 L1059.4 597.4 L1056.1 596.8 L1052.6 596.2 L1049 595.4 L1045.3 594.6 L1041.4 593.7 L1037.5 592.8 L1033.5 591.8 L1029.4 590.8 L1025.2 589.8 L1021 588.7 L1016.7 587.5 L1012.4 586.4 L1008.1 585.2 L1003.8 584 L999.5 582.9 L995.2 581.7 L990.9 580.5 L986.7 579.3 L982.5 578.1 L978.4 577 L974.3 575.8 L970.3 574.7 L966.4 573.6 L962.7 572.6 L959 571.6 L954.7 570.4 L950.7 569.4 L947 568.4 L943.4 567.5 L940.1 566.7 L936.8 565.9 L933.6 565.1 L930.5 564.3 L927.3 563.5 L924.1 562.7 L920.8 561.8 L917.3 560.8 L913.6 559.8 L909.7 558.6 L905.5 557.3 L901 555.9 L896.1 554.3 L890.8 552.5 L885.1 550.5 L878.8 548.3 L876 547.3 L873.1 546.2 L870.1 545.1 L867 544 L863.7 542.8 L860.3 541.5 L856.9 540.2 L853.3 538.8 L849.7 537.5 L845.9 536 L842.1 534.6 L838.2 533.1 L834.3 531.6 L830.3 530 L826.2 528.4 L822.1 526.9 L817.9 525.2 L813.8 523.6 L809.5 522 L805.3 520.3 L801 518.6 L796.7 517 L792.4 515.3 L788.1 513.6 L783.8 511.9 L779.6 510.2 L775.3 508.5 L771 506.9 L766.8 505.2 L762.6 503.6 L758.4 501.9 L754.3 500.3 L750.3 498.7 L746.2 497.1 L742.3 495.6 L738.4 494.1 L734.6 492.6 L730.8 491.1 L727.2 489.7 L723.6 488.3 L720.1 487 L716.8 485.6 L713.5 484.4 L710.3 483.2 L707.3 482 L704.4 480.9 L701.6 479.8 L699 478.8 L692.4 476.4 L686.4 474.2 L681 472.2 L676.1 470.4 L671.6 468.8 L667.5 467.4 L663.8 466.2 L660.4 465 L657.2 463.9 L654.1 462.9 L651.2 462 L648.4 461 L645.6 460.1 L642.8 459.1 L639.8 458.1 L636.8 457 L633.5 455.9 L630 454.6 L626 453.1 L622 451.5 L618.1 450 L614.2 448.5 L610.4 447 L606.6 445.5 L602.9 443.9 L599.1 442.4 L595.4 440.9 L591.7 439.4 L588 437.9 L584.2 436.4 L580.5 434.9 L576.7 433.4 L572.9 431.9 L569.1 430.4 L565.2 428.9 L561.2 427.5 L557.2 425.9 L553.1 424.4 L549 422.9 L544.9 421.4 L540.8 419.9 L536.8 418.4 L532.7 416.9 L528.7 415.5 L524.7 414 L520.8 412.6 L517 411.2 L513.3 409.9 L509.7 408.6 L506.2 407.4 L501.8 405.8 L497.8 404.4 L494.1 403.1 L490.5 401.8 L487.1 400.6 L483.7 399.4 L480.3 398.2 L476.7 397 L472.9 395.8 L468.8 394.4 L464.3 393 L459.2 391.4 L456 390.3 L452.4 389.2 L448.8 388.1 L444.9 386.9 L440.9 385.6 L436.7 384.3 L432.5 383 L428.2 381.6 L423.8 380.3 L419.5 379 L415.1 377.6 L410.7 376.3 L406.4 375 L402.1 373.7 L398 372.5 L393.9 371.4 L390 370.3 L386.3 369.2 L382.7 368.3 L379.4 367.4 L374.2 366.1 L369.4 365 L364.9 364 L360.6 363.2 L356.6 362.4 L352.7 361.7 L348.9 361.1 L345.2 360.5 L341.5 360 L337.7 359.5 L333.7 359 L329.7 358.5 L325.8 358 L322.3 357.7 L319.1 357.5 L315.9 357.3 L312.8 357.2 L309.5 357.1 L305.9 357 L301.9 356.8 L297.4 356.4 L292.3 356 L286.4 355.3 L279.7 354.5 L276.8 354.1 L273.8 353.7 L270.6 353.2 L267.3 352.7 L263.9 352.2 L260.4 351.7 L256.8 351.1 L253.1 350.6 L249.3 350 L245.4 349.4 L241.4 348.7 L237.3 348.1 L233.2 347.5 L229 346.8 L224.8 346.1 L220.6 345.4 L216.3 344.8 L211.9 344.1 L207.6 343.4 L203.2 342.7 L198.9 342 L194.5 341.3 L190.2 340.6 L185.9 339.9 L181.5 339.2 L177.3 338.5 L173 337.8 L168.9 337.1 L164.7 336.5 L160.7 335.9 L156.7 335.2" stroke="#f2ece6" stroke-width="0.7" fill="none" stroke-dasharray="0.9 1.4" opacity="0.7"/>
<path d="M1002.1 604.7 L1006 606.1 L1010 607.4 L1013.9 608.5 L1017.9 609.6 L1022 610.5 L1026 611.4 L1030.1 612.2 L1034.2 613 L1038.3 613.7 L1042.5 614.3 L1046.6 614.9 L1050.8 615.5 L1054.9 616.1 L1059 616.7 L1063 617.2 L1067 617.6 L1071.1 618 L1075.2 618.3 L1079.4 618.6 L1083.6 618.9 L1087.8 619.2 L1092 619.4 L1096.1 619.6 L1100.3 619.7 L1104.4 619.8 L1108.4 619.8 L1112.4 619.9 L1116.3 619.8 L1120.1 619.8 L1124.7 619.7 L1129.2 619.6 L1133.7 619.4 L1138.1 619.2 L1142.4 618.9 L1146.6 618.5 L1150.8 618.1 L1155 617.6 L1159.1 617 L1163.1 616.4 L1167.2 615.8 L1171.2 615.1 L1175.6 614.3 L1180.1 613.4 L1184.7 612.5 L1189.2 611.5 L1193.6 610.4 L1198 609.3 L1202.3 608.2 L1206.4 607 L1210.4 605.7 L1214.2 604.4 L1218 603 L1223.1 600.6 L1227.7 598 L1231.7 595.2 L1235.2 592.4 L1238.3 589.8 L1241.2 587.3 L1244.3 584.8 L1235.7 572.9 L1232.1 575.3 L1228.6 577.9 L1225.5 580.4 L1222.5 582.8 L1219.5 585.1 L1216.1 587.3 L1212 589.4 L1209.1 590.8 L1205.8 592.1 L1202.2 593.3 L1198.3 594.6 L1194.3 595.8 L1190.2 596.9 L1186 598 L1181.7 599 L1177.4 600 L1173.1 600.9 L1168.8 601.7 L1164.9 602.4 L1161 603.1 L1157.1 603.7 L1153.2 604.3 L1149.2 604.9 L1145.2 605.4 L1141.2 605.8 L1137.1 606.2 L1132.9 606.5 L1128.7 606.8 L1124.4 607 L1119.9 607.1 L1116.3 607.1 L1112.6 607.1 L1108.7 606.9 L1104.8 606.8 L1100.8 606.6 L1096.8 606.3 L1092.8 606 L1088.7 605.7 L1084.7 605.4 L1080.6 605 L1076.6 604.6 L1072.6 604.1 L1068.7 603.6 L1064.8 603.1 L1061 602.5 L1056.9 601.9 L1052.8 601.3 L1048.8 600.7 L1044.8 600 L1040.8 599.4 L1036.9 598.6 L1033 597.8 L1029.2 597 L1025.4 596 L1021.7 595 L1018.1 593.9 L1014.6 592.8 L1011.2 591.5 L1007.9 590.1 Z" fill="url(#bal)"/>
<path d="M957.2 572.4L962.8 563.6M959.6 573.9L965.2 565.1M962 575.4L967.7 566.6M964.3 576.9L970.2 568.2M966.7 578.5L972.5 569.8M969 580.1L974.9 571.4M971.4 581.7L977.3 573M973.7 583.3L979.6 574.6M976.1 584.9L982 576.2M978.6 586.5L984.3 577.7M981 588.1L986.6 579.2M983.4 589.7L989 580.8M986 591.2L991.3 582.2M988.6 592.8L993.6 583.6M991 594.2L996.1 585M993.7 595.6L998.4 586.2M996.5 597L1000.7 587.4M999.1 598.2L1003.3 588.6M1001.9 599.4L1005.7 589.6M1004.7 600.5L1008.2 590.6M1007.6 601.5L1010.7 591.5M1010.3 602.4L1013.4 592.4M1013.1 603.3L1016 593.2M1016 604.1L1018.6 594M1018.8 604.9L1021.3 594.7M1021.6 605.6L1024 595.4M1024.5 606.3L1026.7 596M1027.4 606.9L1029.4 596.6M1030.1 607.5L1032.2 597.2M1033 608.1L1034.9 597.7M1035.9 608.6L1037.7 598.2M1038.7 609.1L1040.4 598.7M1041.6 609.6L1043.2 599.2M1044.4 610L1046 599.6M1047.3 610.5L1048.8 600.1M1050.1 610.9L1051.6 600.5M1052.9 611.3L1054.4 600.9M1055.8 611.7L1057.2 601.3M1058.6 612.1L1060 601.7M1061.5 612.5L1062.8 602.1M1064.3 612.8L1065.6 602.5M1067.2 613.2L1068.4 602.8M1070 613.5L1071.1 603.2M1072.9 613.8L1073.9 603.5M1075.7 614L1076.6 603.8M1078.5 614.3L1079.4 604M1081.3 614.5L1082.1 604.3M1084.1 614.7L1084.9 604.5M1086.9 614.9L1087.6 604.8M1089.7 615.1L1090.3 605M1092.5 615.3L1093 605.2M1095.2 615.4L1095.8 605.3M1098 615.5L1098.5 605.5M1100.8 615.7L1101.1 605.6M1103.5 615.7L1103.9 605.8M1106.3 615.8L1106.5 605.9M1109 615.9L1109.2 605.9M1111.7 615.9L1111.9 606M1114.5 615.9L1114.5 606.1M1117.2 615.9L1117.1 606.1M1119.9 615.9L1119.8 606.1M1122.6 615.9L1122.4 606.1M1125.4 615.8L1125 606M1128 615.7L1127.6 605.9M1130.8 615.6L1130.2 605.8M1133.4 615.4L1132.8 605.7M1136.2 615.3L1135.4 605.5M1138.9 615.1L1138 605.3M1141.5 614.8L1140.6 605.1M1144.3 614.6L1143.2 604.8M1147 614.3L1145.8 604.6M1149.6 614L1148.4 604.3M1152.3 613.7L1151 604M1155 613.3L1153.6 603.6M1157.7 613L1156.2 603.3M1160.3 612.6L1158.8 602.9M1163 612.2L1161.4 602.5M1165.6 611.7L1164 602.1M1168.3 611.3L1166.6 601.6M1171 610.8L1169.1 601.2M1173.6 610.3L1171.8 600.7M1176.3 609.8L1174.3 600.2M1178.9 609.3L1176.9 599.7M1181.6 608.7L1179.5 599.2M1184.2 608.2L1182.1 598.6M1186.8 607.6L1184.6 598M1189.5 606.9L1187.1 597.4M1192.1 606.3L1189.7 596.8M1194.7 605.6L1192.2 596.2M1197.3 605L1194.7 595.5M1200 604.2L1197.2 594.8M1202.6 603.5L1199.7 594.1M1205.2 602.7L1202.2 593.3M1207.8 601.8L1204.6 592.6M1210.5 600.9L1207 591.8M1213 600L1209.5 590.9M1215.7 599L1211.8 590M1218.4 597.8L1213.9 589.1M1220.8 596.6L1216.3 588M1223.5 595.2L1218.3 587M1225.8 593.8L1220.6 585.7M1228.2 592.1L1222.5 584.5M1230.4 590.5L1224.5 583.1M1232.4 588.9L1226.5 581.5M1234.4 587.3L1228.5 580M1236.3 585.7L1230.6 578.3M1238.2 584.1L1232.6 576.8M1240.1 582.6L1234.7 575.2M1242.1 581.1L1236.7 573.7" stroke="#6e4830" stroke-width="1.4" fill="none"/>
<path d="M958 571.2 L961.4 573.3 L964.8 575.4 L968.1 577.7 L971.4 579.9 L974.7 582.2 L978.1 584.4 L981.5 586.7 L985 588.9 L988.5 591 L992.1 593.1 L995.9 595 L999.7 596.8 L1003.6 598.5 L1007.4 599.9 L1011.1 601.1 L1015 602.3 L1018.9 603.4 L1022.8 604.4 L1026.8 605.3 L1030.8 606.1 L1034.9 606.9 L1038.9 607.6 L1043 608.3 L1047.1 608.9 L1051.3 609.5 L1055.4 610.1 L1059.5 610.7 L1063.4 611.2 L1067.4 611.7 L1071.4 612.1 L1075.5 612.5 L1079.7 612.9 L1083.8 613.2 L1088 613.5 L1092.1 613.8 L1096.3 614 L1100.4 614.2 L1104.5 614.4 L1108.5 614.5 L1112.4 614.5 L1116.3 614.5 L1120 614.5 L1124.6 614.4 L1129.1 614.3 L1133.5 614 L1137.9 613.7 L1142.1 613.4 L1146.3 613 L1150.4 612.5 L1154.5 612 L1158.6 611.4 L1162.6 610.8 L1166.6 610.1 L1170.6 609.4 L1175 608.6 L1179.5 607.7 L1183.9 606.8 L1188.4 605.8 L1192.8 604.7 L1197.1 603.6 L1201.3 602.4 L1205.4 601.2 L1209.2 599.9 L1212.9 598.6 L1216.4 597.2 L1221.2 594.9 L1225.4 592.4 L1229.1 589.8 L1232.4 587.2 L1235.5 584.6 L1238.6 582.1 L1241.9 579.6M962 564.8 L965.4 566.9 L968.9 569.2 L972.3 571.4 L975.6 573.7 L979 576 L982.3 578.2 L985.6 580.4 L988.9 582.5 L992.3 584.6 L995.7 586.5 L999.2 588.3 L1002.7 590 L1006.4 591.5 L1009.9 592.8 L1013.4 594 L1017.1 595.1 L1020.8 596.1 L1024.6 597.1 L1028.4 597.9 L1032.3 598.8 L1036.2 599.5 L1040.2 600.2 L1044.2 600.9 L1048.3 601.5 L1052.3 602.1 L1056.4 602.7 L1060.5 603.3 L1064.4 603.8 L1068.3 604.3 L1072.2 604.8 L1076.3 605.2 L1080.3 605.6 L1084.4 606 L1088.5 606.3 L1092.6 606.6 L1096.7 606.8 L1100.7 607 L1104.7 607.2 L1108.6 607.4 L1112.5 607.4 L1116.3 607.5 L1120 607.5 L1124.4 607.4 L1128.8 607.3 L1133.1 607.1 L1137.3 606.8 L1141.5 606.4 L1145.6 606 L1149.6 605.6 L1153.6 605 L1157.6 604.5 L1161.5 603.9 L1165.5 603.2 L1169.4 602.6 L1173.7 601.8 L1178 600.9 L1182.4 599.9 L1186.8 599 L1191.1 597.9 L1195.3 596.8 L1199.3 595.7 L1203.3 594.5 L1207 593.3 L1210.5 592 L1213.6 590.8 L1218 588.8 L1221.8 586.6 L1225.1 584.3 L1228.2 581.9 L1231.4 579.4 L1234.6 576.9 L1238.1 574.4" stroke="#5e3e28" stroke-width="0.9" fill="none"/>
<path d="M958 571.2 L961.4 573.3 L964.8 575.4 L968.1 577.7 L971.4 579.9 L974.7 582.2 L978.1 584.4 L981.5 586.7 L985 588.9 L988.5 591 L992.1 593.1 L995.9 595 L999.7 596.8 L1003.6 598.5 L1007.4 599.9 L1011.1 601.1 L1015 602.3 L1018.9 603.4 L1022.8 604.4 L1026.8 605.3 L1030.8 606.1 L1034.9 606.9 L1038.9 607.6 L1043 608.3 L1047.1 608.9 L1051.3 609.5 L1055.4 610.1 L1059.5 610.7 L1063.4 611.2 L1067.4 611.7 L1071.4 612.1 L1075.5 612.5 L1079.7 612.9 L1083.8 613.2 L1088 613.5 L1092.1 613.8 L1096.3 614 L1100.4 614.2 L1104.5 614.4 L1108.5 614.5 L1112.4 614.5 L1116.3 614.5 L1120 614.5 L1124.6 614.4 L1129.1 614.3 L1133.5 614 L1137.9 613.7 L1142.1 613.4 L1146.3 613 L1150.4 612.5 L1154.5 612 L1158.6 611.4 L1162.6 610.8 L1166.6 610.1 L1170.6 609.4 L1175 608.6 L1179.5 607.7 L1183.9 606.8 L1188.4 605.8 L1192.8 604.7 L1197.1 603.6 L1201.3 602.4 L1205.4 601.2 L1209.2 599.9 L1212.9 598.6 L1216.4 597.2 L1221.2 594.9 L1225.4 592.4 L1229.1 589.8 L1232.4 587.2 L1235.5 584.6 L1238.6 582.1 L1241.9 579.6" stroke="#f2ece6" stroke-width="0.7" fill="none" stroke-dasharray="1.1 1.6" opacity="0.9"/>
<path d="M962 564.8 L965.4 566.9 L968.9 569.2 L972.3 571.4 L975.6 573.7 L979 576 L982.3 578.2 L985.6 580.4 L988.9 582.5 L992.3 584.6 L995.7 586.5 L999.2 588.3 L1002.7 590 L1006.4 591.5 L1009.9 592.8 L1013.4 594 L1017.1 595.1 L1020.8 596.1 L1024.6 597.1 L1028.4 597.9 L1032.3 598.8 L1036.2 599.5 L1040.2 600.2 L1044.2 600.9 L1048.3 601.5 L1052.3 602.1 L1056.4 602.7 L1060.5 603.3 L1064.4 603.8 L1068.3 604.3 L1072.2 604.8 L1076.3 605.2 L1080.3 605.6 L1084.4 606 L1088.5 606.3 L1092.6 606.6 L1096.7 606.8 L1100.7 607 L1104.7 607.2 L1108.6 607.4 L1112.5 607.4 L1116.3 607.5 L1120 607.5 L1124.4 607.4 L1128.8 607.3 L1133.1 607.1 L1137.3 606.8 L1141.5 606.4 L1145.6 606 L1149.6 605.6 L1153.6 605 L1157.6 604.5 L1161.5 603.9 L1165.5 603.2 L1169.4 602.6 L1173.7 601.8 L1178 600.9 L1182.4 599.9 L1186.8 599 L1191.1 597.9 L1195.3 596.8 L1199.3 595.7 L1203.3 594.5 L1207 593.3 L1210.5 592 L1213.6 590.8 L1218 588.8 L1221.8 586.6 L1225.1 584.3 L1228.2 581.9 L1231.4 579.4 L1234.6 576.9 L1238.1 574.4" stroke="#f2ece6" stroke-width="0.7" fill="none" stroke-dasharray="1.1 1.6" opacity="0.9"/>
<path d="M321.9 379.1 L325.1 379.1 L328.1 379.2 L331.1 379.3 L334 379.4 L336.8 379.5 L339.7 379.7 L345.5 380.2 L350.2 380.6 L354.3 381 L357.9 381.4 L361.4 381.8 L365.2 382.3 L369.5 382.8 L370.5 374.3 L366.2 373.8 L362.5 373.3 L358.8 372.9 L355.1 372.5 L351 372.2 L346.1 371.8 L340.3 371.4 L337.2 371.3 L334.3 371.2 L331.3 371.1 L328.3 371 L325.2 371 L322 370.9 Z" fill="url(#bal)"/>
<path d="M140.6 358.1L141.4 351.9M142.3 358.3L143.1 352.1M144 358.5L144.8 352.3M145.7 358.7L146.5 352.5M147.4 358.9L148.2 352.7M149.1 359.1L149.9 352.9M150.8 359.3L151.6 353.1M152.5 359.5L153.3 353.3M154.2 359.7L155 353.5M155.9 359.9L156.7 353.7M157.6 360.1L158.4 353.9M159.3 360.3L160.1 354.1M161 360.5L161.8 354.3M162.7 360.7L163.5 354.5M164.4 360.9L165.1 354.7M166.1 361.1L166.8 354.9M167.8 361.3L168.5 355.1M169.5 361.5L170.2 355.3M171.2 361.7L171.9 355.5M172.9 361.9L173.6 355.7M174.6 362.1L175.3 355.9M176.3 362.3L177 356.1M178 362.5L178.7 356.3M179.7 362.7L180.4 356.5M181.4 362.9L182.1 356.7M183.1 363.1L183.8 356.9M184.8 363.3L185.5 357.1M186.5 363.5L187.2 357.3M188.2 363.7L188.9 357.5M189.9 363.9L190.6 357.7M191.6 364.1L192.3 357.9M193.3 364.3L194 358.1M195 364.5L195.7 358.3M196.7 364.8L197.4 358.5M198.4 365L199.1 358.7M200.1 365.2L200.8 358.9M201.8 365.4L202.5 359.1M203.5 365.6L204.2 359.3M205.2 365.8L205.9 359.5M206.9 366L207.6 359.7M208.6 366.2L209.3 359.9M210.3 366.4L211 360.1M212 366.6L212.7 360.3M213.6 366.8L214.4 360.5M215.3 367L216.1 360.7M217 367.2L217.8 360.9M218.7 367.4L219.5 361.1M220.4 367.6L221.2 361.3M222.1 367.8L222.9 361.5M223.8 368L224.6 361.7M225.5 368.2L226.3 361.9M227.2 368.4L228 362.1M228.9 368.6L229.7 362.3M230.6 368.8L231.4 362.5M232.3 369L233.1 362.7M234 369.2L234.8 362.9M235.7 369.4L236.5 363.1M237.4 369.6L238.2 363.3M239.1 369.8L239.9 363.5M240.8 370L241.6 363.7M242.5 370.1L243.3 363.9M244.2 370.3L244.9 364.1M245.9 370.5L246.6 364.3M247.6 370.7L248.3 364.5M249.3 370.9L250 364.7M251 371.1L251.7 364.8M252.7 371.3L253.4 365M254.4 371.5L255.1 365.2M256.1 371.7L256.8 365.4M257.8 371.9L258.5 365.6M259.5 372.1L260.2 365.8M261.3 372.2L261.9 366M263 372.4L263.6 366.2M264.7 372.6L265.3 366.3M266.4 372.8L267 366.5M268.1 373L268.7 366.7M269.8 373.1L270.4 366.9M271.5 373.3L272.1 367M273.2 373.5L273.8 367.2M274.9 373.7L275.5 367.4M276.6 373.8L277.2 367.6M278.3 374L278.9 367.7M280 374.2L280.6 367.9M281.7 374.3L282.3 368M283.4 374.5L284 368.2M285.1 374.6L285.7 368.4M286.9 374.8L287.4 368.5M288.6 374.9L289.1 368.6M290.3 375.1L290.8 368.8M292 375.2L292.4 368.9M293.7 375.3L294.1 369M295.4 375.4L295.8 369.2M297.1 375.6L297.6 369.3M298.9 375.7L299.2 369.4M300.6 375.8L300.9 369.5M302.3 375.9L302.6 369.6M304 376L304.3 369.7M305.7 376.1L306 369.8M307.5 376.1L307.7 369.8M309.2 376.2L309.4 369.9M310.9 376.3L311.1 370M312.6 376.3L312.8 370M314.3 376.4L314.5 370.1M316.1 376.4L316.2 370.1M317.8 376.5L317.9 370.2M319.5 376.5L319.6 370.2M321.2 376.6L321.3 370.3M322.9 376.6L323 370.3M324.6 376.6L324.7 370.3M326.3 376.7L326.5 370.4M328 376.7L328.2 370.4M329.7 376.7L329.9 370.4M331.4 376.8L331.6 370.5M333.1 376.8L333.3 370.5M334.8 376.9L335.1 370.6M336.5 377L336.8 370.7M338.1 377L338.6 370.8M339.8 377.1L340.3 370.9M341.5 377.3L342 371M343.2 377.4L343.7 371.1M344.9 377.5L345.4 371.2M346.6 377.6L347.2 371.4M348.3 377.8L348.9 371.5M350 377.9L350.6 371.6M351.7 378.1L352.3 371.8M353.4 378.2L354 372M355 378.4L355.7 372.1M356.7 378.6L357.4 372.3M358.4 378.8L359.2 372.5M360.1 379L360.9 372.7M361.8 379.2L362.6 372.9M363.5 379.4L364.3 373.1M365.2 379.6L366 373.3M366.9 379.8L367.7 373.5M368.6 380L369.4 373.7M370.3 380.2L371.1 374M372 380.4L372.8 374.2M373.7 380.6L374.5 374.4M375.3 380.9L376.2 374.6M377 381.1L377.9 374.9M378.7 381.3L379.6 375.1M380.4 381.6L381.3 375.3M382.1 381.8L383 375.6M383.8 382.1L384.7 375.8M385.5 382.3L386.4 376.1M387.2 382.6L388.1 376.3M388.8 382.8L389.8 376.6M390.5 383.1L391.5 376.8M392.2 383.3L393.1 377.1M393.9 383.6L394.8 377.3M395.6 383.8L396.5 377.6M397.3 384.1L398.2 377.8M399 384.3L399.9 378.1M400.7 384.6L401.6 378.3M402.4 384.8L403.3 378.6M404.1 385L405 378.8" stroke="#6e4830" stroke-width="1.2" fill="none"/>
<path d="M140.7 357.2 L144.9 357.7 L149 358.2 L153.3 358.7 L157.6 359.2 L161.9 359.7 L166.3 360.2 L170.7 360.7 L175.1 361.3 L179.6 361.8 L184 362.3 L188.5 362.9 L193 363.4 L197.4 363.9 L201.9 364.5 L206.4 365 L210.8 365.5 L215.2 366 L219.5 366.6 L223.9 367.1 L228.1 367.6 L232.4 368.1 L236.5 368.5 L240.6 369 L244.7 369.5 L248.6 369.9 L252.5 370.4 L256.3 370.8 L260 371.2 L263.5 371.6 L267 372 L270.4 372.3 L273.7 372.6 L276.8 372.9 L279.8 373.2 L286.2 373.8 L292 374.3 L297.4 374.7 L302.3 375 L306.9 375.2 L311 375.4 L314.9 375.5 L318.5 375.6 L321.9 375.7 L325.1 375.7 L328.2 375.8 L331.1 375.9 L334 375.9 L336.9 376.1 L339.9 376.2 L345.6 376.7 L350.4 377 L354.5 377.4 L358.1 377.8 L361.7 378.2 L365.4 378.7 L369.7 379.2 L373.8 379.8 L378.1 380.3 L382.4 381 L386.9 381.6 L391.3 382.3 L395.8 382.9 L400.3 383.6 L404.7 384.2M141.3 352.8 L145.4 353.2 L149.6 353.7 L153.8 354.2 L158.1 354.7 L162.4 355.2 L166.8 355.8 L171.2 356.3 L175.6 356.8 L180.1 357.3 L184.6 357.9 L189 358.4 L193.5 358.9 L198 359.5 L202.4 360 L206.9 360.5 L211.3 361.1 L215.7 361.6 L220.1 362.1 L224.4 362.6 L228.7 363.1 L232.9 363.6 L237 364.1 L241.1 364.6 L245.2 365 L249.1 365.5 L253 365.9 L256.8 366.3 L260.4 366.7 L264 367.1 L267.5 367.5 L270.9 367.8 L274.1 368.2 L277.2 368.5 L280.2 368.8 L286.5 369.3 L292.4 369.8 L297.7 370.2 L302.6 370.5 L307.1 370.7 L311.2 370.9 L315.1 371 L318.6 371.1 L322 371.2 L325.2 371.2 L328.3 371.3 L331.2 371.4 L334.2 371.5 L337.1 371.6 L340.1 371.8 L346 372.2 L350.8 372.6 L354.9 372.9 L358.6 373.3 L362.2 373.8 L366 374.2 L370.3 374.8 L374.4 375.3 L378.7 375.9 L383.1 376.5 L387.5 377.1 L392 377.8 L396.5 378.5 L400.9 379.1 L405.3 379.8" stroke="#5e3e28" stroke-width="0.9" fill="none"/>
<path d="M140.7 357.2 L144.9 357.7 L149 358.2 L153.3 358.7 L157.6 359.2 L161.9 359.7 L166.3 360.2 L170.7 360.7 L175.1 361.3 L179.6 361.8 L184 362.3 L188.5 362.9 L193 363.4 L197.4 363.9 L201.9 364.5 L206.4 365 L210.8 365.5 L215.2 366 L219.5 366.6 L223.9 367.1 L228.1 367.6 L232.4 368.1 L236.5 368.5 L240.6 369 L244.7 369.5 L248.6 369.9 L252.5 370.4 L256.3 370.8 L260 371.2 L263.5 371.6 L267 372 L270.4 372.3 L273.7 372.6 L276.8 372.9 L279.8 373.2 L286.2 373.8 L292 374.3 L297.4 374.7 L302.3 375 L306.9 375.2 L311 375.4 L314.9 375.5 L318.5 375.6 L321.9 375.7 L325.1 375.7 L328.2 375.8 L331.1 375.9 L334 375.9 L336.9 376.1 L339.9 376.2 L345.6 376.7 L350.4 377 L354.5 377.4 L358.1 377.8 L361.7 378.2 L365.4 378.7 L369.7 379.2 L373.8 379.8 L378.1 380.3 L382.4 381 L386.9 381.6 L391.3 382.3 L395.8 382.9 L400.3 383.6 L404.7 384.2" stroke="#f2ece6" stroke-width="0.7" fill="none" stroke-dasharray="0.8 1.2" opacity="0.7"/>
<path d="M141.3 352.8 L145.4 353.2 L149.6 353.7 L153.8 354.2 L158.1 354.7 L162.4 355.2 L166.8 355.8 L171.2 356.3 L175.6 356.8 L180.1 357.3 L184.6 357.9 L189 358.4 L193.5 358.9 L198 359.5 L202.4 360 L206.9 360.5 L211.3 361.1 L215.7 361.6 L220.1 362.1 L224.4 362.6 L228.7 363.1 L232.9 363.6 L237 364.1 L241.1 364.6 L245.2 365 L249.1 365.5 L253 365.9 L256.8 366.3 L260.4 366.7 L264 367.1 L267.5 367.5 L270.9 367.8 L274.1 368.2 L277.2 368.5 L280.2 368.8 L286.5 369.3 L292.4 369.8 L297.7 370.2 L302.6 370.5 L307.1 370.7 L311.2 370.9 L315.1 371 L318.6 371.1 L322 371.2 L325.2 371.2 L328.3 371.3 L331.2 371.4 L334.2 371.5 L337.1 371.6 L340.1 371.8 L346 372.2 L350.8 372.6 L354.9 372.9 L358.6 373.3 L362.2 373.8 L366 374.2 L370.3 374.8 L374.4 375.3 L378.7 375.9 L383.1 376.5 L387.5 377.1 L392 377.8 L396.5 378.5 L400.9 379.1 L405.3 379.8" stroke="#f2ece6" stroke-width="0.7" fill="none" stroke-dasharray="0.8 1.2" opacity="0.7"/>
<path d="M244.7 383.7 L249.3 384.1 L254 384.3 L258.7 384.6 L263.4 384.8 L268.1 384.9 L272.8 385 L277.5 385.2 L282.1 385.2 L286.7 385.3 L291.2 385.3 L295.7 385.4 L300.1 385.4 L304.4 385.4 L308.6 385.4 L312.7 385.4 L316.7 385.4 L320.5 385.4 L324.2 385.4 L327.7 385.4 L331 385.5 L334.2 385.5 L337.1 385.6 L339.9 385.7 L347.3 386 L352.6 386.3 L356.3 386.6 L359.1 386.9 L361.5 387.2 L364.2 387.5 L367.6 387.8 L368.4 379.4 L365 379.1 L362.4 378.8 L360 378.5 L357 378.2 L353.1 378 L347.7 377.7 L340.1 377.5 L337.3 377.4 L334.3 377.4 L331.1 377.3 L327.7 377.3 L324.2 377.3 L320.5 377.3 L316.7 377.3 L312.7 377.3 L308.6 377.3 L304.4 377.3 L300.1 377.3 L295.8 377.3 L291.3 377.2 L286.8 377.2 L282.2 377.1 L277.6 377 L273 376.9 L268.4 376.7 L263.7 376.5 L259.1 376.3 L254.5 376 L249.9 375.7 L245.3 375.4 Z" fill="url(#bal)"/>
<path d="M129.6 367.1L130.4 360.9M131.3 367.3L132.1 361.1M133 367.5L133.8 361.3M134.7 367.8L135.5 361.5M136.4 368L137.2 361.7M138.1 368.2L138.9 361.9M139.8 368.4L140.6 362.2M141.5 368.6L142.3 362.4M143.2 368.8L144 362.6M144.9 369.1L145.7 362.8M146.6 369.3L147.4 363M148.2 369.5L149.1 363.3M149.9 369.7L150.8 363.5M151.6 369.9L152.5 363.7M153.3 370.2L154.2 363.9M155 370.4L155.9 364.2M156.7 370.6L157.6 364.4M158.4 370.9L159.2 364.6M160.1 371.1L160.9 364.8M161.8 371.3L162.6 365.1M163.5 371.5L164.3 365.3M165.2 371.8L166 365.5M166.9 372L167.7 365.8M168.6 372.2L169.4 366M170.3 372.5L171.1 366.2M172 372.7L172.8 366.4M173.7 372.9L174.5 366.7M175.4 373.1L176.2 366.9M177.1 373.4L177.9 367.1M178.7 373.6L179.6 367.4M180.4 373.8L181.3 367.6M182.1 374L183 367.8M183.8 374.3L184.7 368M185.5 374.5L186.4 368.3M187.2 374.7L188.1 368.5M188.9 375L189.7 368.7M190.6 375.2L191.4 368.9M192.3 375.4L193.1 369.1M194 375.6L194.8 369.4M195.7 375.8L196.5 369.6M197.4 376.1L198.2 369.8M199.1 376.3L199.9 370M200.8 376.5L201.6 370.2M202.5 376.7L203.3 370.4M204.2 376.9L205 370.7M205.9 377.1L206.7 370.9M207.6 377.3L208.4 371.1M209.3 377.5L210.1 371.3M211 377.7L211.8 371.5M212.7 377.9L213.5 371.7M214.4 378.1L215.1 371.9M216.1 378.3L216.8 372.1M217.8 378.5L218.5 372.3M219.5 378.7L220.2 372.5M221.2 378.9L221.9 372.7M223 379.1L223.6 372.8M224.7 379.3L225.3 373M226.4 379.5L227 373.2M228.1 379.6L228.7 373.4M229.8 379.8L230.4 373.5M231.5 380L232.1 373.7M233.2 380.1L233.8 373.9M234.9 380.3L235.5 374M236.6 380.5L237.2 374.2M238.3 380.6L238.9 374.3M240 380.8L240.6 374.5M241.8 380.9L242.2 374.6M243.5 381L243.9 374.8M245.2 381.2L245.6 374.9M246.9 381.3L247.3 375M248.6 381.4L249 375.1M250.4 381.5L250.7 375.2M252.1 381.6L252.4 375.3M253.8 381.7L254.1 375.4M255.5 381.8L255.8 375.5M257.2 381.9L257.5 375.6M258.9 382L259.2 375.7M260.7 382.1L260.9 375.8M262.4 382.2L262.6 375.9M264.1 382.2L264.3 375.9M265.8 382.3L266 376M267.5 382.4L267.7 376.1M269.2 382.4L269.4 376.1M270.9 382.5L271.1 376.2M272.7 382.5L272.8 376.2M274.4 382.6L274.5 376.3M276.1 382.6L276.2 376.3M277.8 382.6L277.9 376.3M279.5 382.7L279.6 376.4M281.2 382.7L281.3 376.4M283 382.7L283 376.4M284.7 382.8L284.7 376.5M286.4 382.8L286.5 376.5M288.1 382.8L288.2 376.5M289.8 382.8L289.9 376.5M291.5 382.9L291.6 376.6M293.2 382.9L293.3 376.6M294.9 382.9L295 376.6M296.7 382.9L296.7 376.6M298.4 382.9L298.4 376.6M300.1 382.9L300.1 376.6M301.8 382.9L301.8 376.6M303.5 382.9L303.5 376.6M305.2 382.9L305.2 376.6M306.9 382.9L306.9 376.6M308.6 382.9L308.6 376.6M310.4 382.9L310.4 376.6M312.1 382.9L312.1 376.6M313.8 382.9L313.8 376.6M315.5 382.9L315.5 376.6M317.2 382.9L317.2 376.6M318.9 382.9L318.9 376.6M320.6 382.9L320.6 376.6M322.3 382.9L322.3 376.6M324 382.9L324 376.6M325.7 382.9L325.8 376.6M327.4 383L327.5 376.7M329.1 383L329.2 376.7M330.8 383L330.9 376.7M332.5 383L332.6 376.7M334.2 383L334.4 376.7M335.9 383.1L336.1 376.8M337.6 383.1L337.8 376.8M339.3 383.1L339.5 376.8M341 383.2L341.3 376.9M342.7 383.3L343 377M344.4 383.3L344.7 377M346.1 383.4L346.4 377.1M347.8 383.5L348.2 377.2M349.5 383.5L349.9 377.3M351.2 383.6L351.6 377.3M352.8 383.7L353.4 377.4M354.5 383.9L355.1 377.6M356.2 384L356.8 377.7M357.9 384.1L358.5 377.9M359.6 384.3L360.3 378.1M361.3 384.5L362 378.3M363 384.7L363.6 378.4M364.7 384.9L365.3 378.6M366.4 385L367 378.8" stroke="#6e4830" stroke-width="1.2" fill="none"/>
<path d="M129.7 366.2 L133.8 366.7 L138 367.3 L142.1 367.8 L146.3 368.3 L150.5 368.9 L154.7 369.4 L158.9 370 L163.1 370.6 L167.4 371.2 L171.6 371.7 L175.8 372.3 L180 372.9 L184.3 373.4 L188.5 374 L192.6 374.5 L196.8 375.1 L201 375.6 L205.1 376.1 L209.2 376.6 L213.3 377.1 L217.4 377.6 L221.4 378 L225.4 378.5 L229.4 378.9 L233.3 379.3 L237.2 379.6 L241 379.9 L244.8 380.2 L249.4 380.6 L254.1 380.9 L258.8 381.1 L263.5 381.3 L268.1 381.5 L272.8 381.6 L277.5 381.7 L282.1 381.8 L286.7 381.9 L291.3 382 L295.7 382 L300.1 382 L304.4 382 L308.6 382 L312.7 382 L316.7 382 L320.5 382 L324.2 382 L327.7 382.1 L331 382.1 L334.2 382.1 L337.2 382.2 L339.9 382.2 L347.4 382.5 L352.7 382.8 L356.5 383.1 L359.3 383.4 L361.7 383.7 L364.4 384 L367.8 384.2M130.3 361.8 L134.4 362.3 L138.5 362.8 L142.7 363.3 L146.9 363.9 L151.1 364.4 L155.3 365 L159.5 365.6 L163.7 366.1 L168 366.7 L172.2 367.3 L176.4 367.8 L180.6 368.4 L184.8 369 L189 369.5 L193.2 370.1 L197.4 370.6 L201.6 371.1 L205.7 371.7 L209.8 372.2 L213.9 372.6 L217.9 373.1 L221.9 373.6 L225.9 374 L229.8 374.4 L233.7 374.8 L237.6 375.1 L241.4 375.5 L245.2 375.8 L249.7 376.1 L254.3 376.4 L259 376.6 L263.6 376.8 L268.3 377 L273 377.1 L277.6 377.2 L282.2 377.3 L286.8 377.4 L291.3 377.5 L295.7 377.5 L300.1 377.5 L304.4 377.5 L308.6 377.5 L312.7 377.5 L316.7 377.5 L320.5 377.5 L324.2 377.5 L327.7 377.6 L331.1 377.6 L334.3 377.6 L337.3 377.7 L340.1 377.8 L347.6 378 L353 378.3 L356.9 378.6 L359.8 378.9 L362.2 379.2 L364.8 379.5 L368.2 379.8" stroke="#5e3e28" stroke-width="0.9" fill="none"/>
<path d="M129.7 366.2 L133.8 366.7 L138 367.3 L142.1 367.8 L146.3 368.3 L150.5 368.9 L154.7 369.4 L158.9 370 L163.1 370.6 L167.4 371.2 L171.6 371.7 L175.8 372.3 L180 372.9 L184.3 373.4 L188.5 374 L192.6 374.5 L196.8 375.1 L201 375.6 L205.1 376.1 L209.2 376.6 L213.3 377.1 L217.4 377.6 L221.4 378 L225.4 378.5 L229.4 378.9 L233.3 379.3 L237.2 379.6 L241 379.9 L244.8 380.2 L249.4 380.6 L254.1 380.9 L258.8 381.1 L263.5 381.3 L268.1 381.5 L272.8 381.6 L277.5 381.7 L282.1 381.8 L286.7 381.9 L291.3 382 L295.7 382 L300.1 382 L304.4 382 L308.6 382 L312.7 382 L316.7 382 L320.5 382 L324.2 382 L327.7 382.1 L331 382.1 L334.2 382.1 L337.2 382.2 L339.9 382.2 L347.4 382.5 L352.7 382.8 L356.5 383.1 L359.3 383.4 L361.7 383.7 L364.4 384 L367.8 384.2" stroke="#f2ece6" stroke-width="0.7" fill="none" stroke-dasharray="0.8 1.2" opacity="0.7"/>
<path d="M130.3 361.8 L134.4 362.3 L138.5 362.8 L142.7 363.3 L146.9 363.9 L151.1 364.4 L155.3 365 L159.5 365.6 L163.7 366.1 L168 366.7 L172.2 367.3 L176.4 367.8 L180.6 368.4 L184.8 369 L189 369.5 L193.2 370.1 L197.4 370.6 L201.6 371.1 L205.7 371.7 L209.8 372.2 L213.9 372.6 L217.9 373.1 L221.9 373.6 L225.9 374 L229.8 374.4 L233.7 374.8 L237.6 375.1 L241.4 375.5 L245.2 375.8 L249.7 376.1 L254.3 376.4 L259 376.6 L263.6 376.8 L268.3 377 L273 377.1 L277.6 377.2 L282.2 377.3 L286.8 377.4 L291.3 377.5 L295.7 377.5 L300.1 377.5 L304.4 377.5 L308.6 377.5 L312.7 377.5 L316.7 377.5 L320.5 377.5 L324.2 377.5 L327.7 377.6 L331.1 377.6 L334.3 377.6 L337.3 377.7 L340.1 377.8 L347.6 378 L353 378.3 L356.9 378.6 L359.8 378.9 L362.2 379.2 L364.8 379.5 L368.2 379.8" stroke="#f2ece6" stroke-width="0.7" fill="none" stroke-dasharray="0.8 1.2" opacity="0.7"/>
<path d="M299.7 419.4 L306 419.7 L311.9 420 L317.6 420.2 L322.8 420.3 L327.8 420.3 L332.5 420.3 L336.9 420.3 L341.1 420.2 L345.1 420 L348.9 419.8 L352.5 419.6 L356 419.3 L359.3 419.1 L362.5 418.8 L365.6 418.4 L368.6 418.1 L371.6 417.8 L374.5 417.5 L377.4 417.2 L380.4 417 L386.1 416.5 L391 415.9 L395.2 415.3 L399 414.5 L402.4 413.7 L405.6 413 L408.8 412.2 L412.1 411.5 L415.9 410.9 L420.4 410.4 L423.8 410.1 L427.5 409.9 L431.4 409.7 L435.5 409.5 L439.8 409.3 L444.1 409.1 L448.5 409 L452.9 408.9 L457.2 408.8 L461.5 408.8 L465.6 408.8 L469.5 408.9 L473.2 409 L476.6 409.2 L479.6 409.4 L485.2 410 L489.8 410.9 L493.6 412 L497.2 413.1 L500.7 414.3 L504.6 415.5 L508.7 416.5 L511.3 406.8 L507.4 405.8 L503.9 404.6 L500.3 403.4 L496.3 402.3 L491.7 401.3 L486.5 400.6 L480.4 400.1 L477 400 L473.5 399.9 L469.7 399.8 L465.7 399.8 L461.5 399.8 L457.2 399.8 L452.8 399.8 L448.3 399.9 L443.9 400 L439.5 400.1 L435.2 400.3 L431 400.5 L427 400.7 L423.2 400.9 L419.6 401.1 L414.8 401.5 L410.6 402 L406.8 402.6 L403.4 403.3 L400.1 404.1 L396.9 404.9 L393.4 405.7 L389.5 406.4 L385 407.1 L379.6 407.7 L376.6 407.9 L373.6 408.2 L370.6 408.5 L367.6 408.8 L364.6 409.1 L361.6 409.4 L358.4 409.7 L355.2 410 L351.8 410.3 L348.3 410.6 L344.7 410.8 L340.8 411 L336.7 411.2 L332.4 411.3 L327.8 411.3 L323 411.2 L317.8 411.1 L312.4 410.9 L306.5 410.5 L300.3 410.1 Z" fill="url(#bal)"/>
<path d="M121.6 396.5L122.4 389.5M123.5 396.7L124.3 389.7M125.4 396.9L126.2 389.9M127.3 397.1L128.1 390.2M129.2 397.3L130 390.4M131 397.6L131.8 390.6M132.9 397.8L133.7 390.8M134.8 398L135.6 391M136.7 398.2L137.5 391.3M138.6 398.4L139.4 391.5M140.5 398.7L141.3 391.7M142.4 398.9L143.2 391.9M144.2 399.1L145.1 392.1M146.1 399.3L146.9 392.4M148 399.5L148.8 392.6M149.9 399.8L150.7 392.8M151.8 400L152.6 393M153.7 400.2L154.5 393.3M155.5 400.4L156.4 393.5M157.4 400.7L158.3 393.7M159.3 400.9L160.2 394M161.2 401.1L162 394.2M163.1 401.4L163.9 394.4M165 401.6L165.8 394.6M166.9 401.8L167.7 394.9M168.7 402L169.6 395.1M170.6 402.3L171.5 395.3M172.5 402.5L173.4 395.6M174.4 402.7L175.3 395.8M176.3 403L177.1 396M178.2 403.2L179 396.2M180.1 403.4L180.9 396.5M182 403.7L182.8 396.7M183.8 403.9L184.7 396.9M185.7 404.1L186.6 397.2M187.6 404.3L188.5 397.4M189.5 404.6L190.3 397.6M191.4 404.8L192.2 397.9M193.3 405L194.1 398.1M195.2 405.3L196 398.3M197 405.5L197.9 398.5M198.9 405.7L199.8 398.8M200.8 406L201.7 399M202.7 406.2L203.5 399.2M204.6 406.4L205.4 399.5M206.5 406.6L207.3 399.7M208.4 406.9L209.2 399.9M210.2 407.1L211.1 400.1M212.1 407.3L213 400.4M214 407.6L214.9 400.6M215.9 407.8L216.7 400.8M217.8 408L218.6 401.1M219.7 408.2L220.5 401.3M221.6 408.5L222.4 401.5M223.5 408.7L224.3 401.7M225.3 408.9L226.2 402M227.2 409.1L228.1 402.2M229.1 409.3L229.9 402.4M231 409.6L231.8 402.6M232.9 409.8L233.7 402.8M234.8 410L235.6 403.1M236.7 410.2L237.5 403.3M238.6 410.4L239.4 403.5M240.5 410.7L241.3 403.7M242.4 410.9L243.1 403.9M244.2 411.1L245 404.1M246.1 411.3L246.9 404.4M248 411.5L248.8 404.6M249.9 411.7L250.7 404.8M251.8 411.9L252.6 405M253.7 412.2L254.5 405.2M255.6 412.4L256.3 405.4M257.5 412.6L258.2 405.6M259.4 412.8L260.1 405.8M261.3 413L262 406M263.2 413.2L263.9 406.2M265 413.4L265.8 406.4M266.9 413.6L267.7 406.6M268.8 413.8L269.5 406.8M270.7 414L271.4 407M272.6 414.1L273.3 407.2M274.5 414.3L275.2 407.4M276.4 414.5L277.1 407.6M278.3 414.7L279 407.7M280.2 414.9L280.9 407.9M282.1 415.1L282.7 408.1M284 415.2L284.6 408.3M285.9 415.4L286.5 408.4M287.8 415.6L288.4 408.6M289.7 415.7L290.3 408.7M291.6 415.9L292.2 408.9M293.5 416L294.1 409.1M295.4 416.2L295.9 409.2M297.3 416.3L297.8 409.3M299.2 416.5L299.7 409.5M301.2 416.6L301.6 409.6M303.1 416.7L303.5 409.7M305 416.8L305.4 409.8M306.9 416.9L307.2 409.9M308.8 417L309.1 410M310.7 417.1L311 410.1M312.6 417.2L312.9 410.2M314.5 417.3L314.8 410.3M316.4 417.3L316.7 410.4M318.4 417.4L318.5 410.4M320.3 417.5L320.4 410.5M322.2 417.5L322.3 410.5M324.1 417.5L324.2 410.5M326 417.6L326.1 410.6M328 417.6L327.9 410.6M329.9 417.6L329.8 410.6M331.8 417.6L331.7 410.6M333.7 417.5L333.6 410.5M335.6 417.5L335.5 410.5M337.6 417.5L337.3 410.5M339.5 417.4L339.2 410.4M341.4 417.3L341.1 410.3M343.3 417.3L343 410.3M345.3 417.2L344.8 410.2M347.2 417.1L346.7 410.1M349.1 416.9L348.6 410M351 416.8L350.5 409.8M352.9 416.7L352.3 409.7M354.8 416.5L354.2 409.5M356.7 416.3L356.1 409.4M358.6 416.2L358 409.2M360.5 416L359.8 409M362.4 415.8L361.7 408.8M364.3 415.6L363.6 408.7M366.2 415.4L365.5 408.5M368.1 415.2L367.4 408.3M370 415L369.3 408.1M371.9 414.8L371.2 407.9M373.8 414.7L373.1 407.7M375.6 414.5L375 407.5M377.5 414.3L376.9 407.3M379.4 414.2L378.8 407.2M381.4 414L380.6 407M383.3 413.8L382.5 406.9M385.2 413.6L384.4 406.7M387.2 413.4L386.1 406.5M389.1 413.1L388 406.2M391.1 412.9L389.8 406M393 412.5L391.6 405.7M394.8 412.2L393.5 405.3M396.8 411.8L395.3 405M398.6 411.4L397.1 404.6M400.5 411L398.9 404.2M402.4 410.5L400.8 403.7M404.2 410.1L402.7 403.3M406 409.7L404.6 402.8M407.8 409.3L406.4 402.4M409.6 408.9L408.4 402M411.4 408.6L410.3 401.7M413.2 408.3L412.3 401.4M415 408L414.2 401.1M416.8 407.8L416.2 400.9M418.7 407.6L418.1 400.7M420.5 407.5L420.1 400.5M422.4 407.3L422 400.4M424.3 407.2L423.9 400.2M426.2 407.1L425.8 400.1M428.1 407L427.7 400M430 406.9L429.6 399.9M431.8 406.8L431.5 399.8M433.7 406.7L433.4 399.7M435.6 406.6L435.4 399.6M437.5 406.5L437.2 399.5M439.4 406.5L439.1 399.5M441.3 406.4L441.1 399.4M443.2 406.3L443 399.3M445.1 406.3L444.9 399.3M446.9 406.2L446.8 399.2M448.8 406.2L448.7 399.2M450.7 406.2L450.6 399.2M452.6 406.1L452.5 399.1M454.5 406.1L454.4 399.1M456.4 406.1L456.3 399.1M458.3 406L458.3 399M460.2 406L460.2 399M462 406L462.1 399M463.9 406L464 399M465.8 406L465.9 399.1M467.7 406.1L467.8 399.1M469.6 406.1L469.8 399.1M471.5 406.1L471.7 399.1M473.3 406.2L473.6 399.2M475.2 406.3L475.5 399.3M477 406.3L477.6 399.4M478.9 406.4L479.5 399.5M480.6 406.6L481.5 399.6M482.5 406.8L483.4 399.8M484.4 406.9L485.3 400M486 407.2L487.4 400.3M487.9 407.5L489.3 400.6M489.8 407.8L491.2 400.9M491.4 408.2L493.2 401.4M493.2 408.6L495.1 401.9M494.9 409.1L497 402.4M496.8 409.6L498.9 403M498.5 410.2L500.7 403.5M500.3 410.8L502.5 404.1M502.3 411.4L504.2 404.7M504.1 412L506 405.3M506 412.5L507.8 405.8M507.8 413L509.6 406.3" stroke="#6e4830" stroke-width="1.2" fill="none"/>
<path d="M121.7 395.5 L125.8 395.9 L129.9 396.4 L134.1 396.9 L138.3 397.4 L142.5 397.9 L146.8 398.4 L151.1 398.9 L155.4 399.4 L159.7 399.9 L164.1 400.5 L168.5 401 L172.9 401.5 L177.3 402.1 L181.7 402.6 L186.1 403.2 L190.5 403.7 L195 404.2 L199.4 404.8 L203.8 405.3 L208.1 405.8 L212.5 406.4 L216.8 406.9 L221.1 407.4 L225.4 407.9 L229.7 408.4 L233.9 408.9 L238.1 409.4 L242.2 409.9 L246.3 410.3 L250.3 410.8 L254.3 411.2 L258.3 411.6 L262.1 412.1 L265.9 412.5 L269.7 412.8 L273.4 413.2 L277 413.6 L280.5 413.9 L283.9 414.2 L287.3 414.5 L290.6 414.8 L293.7 415 L296.8 415.3 L299.8 415.5 L306.1 415.9 L312 416.2 L317.6 416.4 L322.9 416.5 L327.8 416.6 L332.5 416.6 L336.9 416.5 L341.1 416.4 L345 416.2 L348.8 416 L352.4 415.7 L355.8 415.4 L359.1 415.1 L362.3 414.8 L365.4 414.5 L368.4 414.2 L371.4 413.9 L374.3 413.6 L377.2 413.3 L380.2 413.1 L385.8 412.6 L390.6 411.9 L394.8 411.2 L398.5 410.4 L401.8 409.6 L405 408.9 L408.3 408.1 L411.8 407.5 L415.7 406.9 L420.2 406.5 L423.6 406.2 L427.4 406 L431.3 405.8 L435.5 405.6 L439.7 405.5 L444.1 405.3 L448.5 405.2 L452.9 405.1 L457.2 405.1 L461.5 405 L465.6 405 L469.6 405.1 L473.3 405.2 L476.7 405.3 L479.8 405.5 L485.5 406.1 L490.3 406.9 L494.3 407.9 L498 409 L501.5 410.1 L505.3 411.3 L509.4 412.4M122.3 390.5 L126.4 391 L130.5 391.4 L134.6 391.9 L138.8 392.4 L143.1 392.9 L147.4 393.4 L151.7 393.9 L156 394.5 L160.3 395 L164.7 395.5 L169.1 396 L173.5 396.6 L177.9 397.1 L182.3 397.7 L186.7 398.2 L191.2 398.7 L195.6 399.3 L200 399.8 L204.4 400.3 L208.7 400.9 L213.1 401.4 L217.4 401.9 L221.7 402.4 L226 402.9 L230.3 403.4 L234.5 403.9 L238.6 404.4 L242.8 404.9 L246.9 405.4 L250.9 405.8 L254.9 406.2 L258.8 406.7 L262.7 407.1 L266.5 407.5 L270.2 407.9 L273.8 408.2 L277.4 408.6 L280.9 408.9 L284.4 409.2 L287.7 409.5 L291 409.8 L294.1 410.1 L297.2 410.3 L300.2 410.5 L306.4 410.9 L312.3 411.2 L317.8 411.4 L323 411.5 L327.8 411.6 L332.4 411.6 L336.8 411.5 L340.9 411.4 L344.8 411.2 L348.5 411 L352 410.7 L355.4 410.4 L358.6 410.2 L361.8 409.8 L364.9 409.5 L367.9 409.2 L370.9 408.9 L373.8 408.6 L376.8 408.4 L379.8 408.1 L385.3 407.6 L389.9 407 L393.8 406.3 L397.4 405.6 L400.7 404.8 L403.9 404 L407.3 403.3 L411 402.6 L415.1 402 L419.8 401.5 L423.3 401.3 L427.1 401 L431.1 400.8 L435.2 400.6 L439.5 400.5 L443.9 400.3 L448.4 400.2 L452.8 400.1 L457.2 400.1 L461.5 400 L465.6 400 L469.6 400.1 L473.4 400.2 L476.9 400.3 L480.2 400.5 L486.2 401.1 L491.3 402 L495.6 403 L499.5 404.2 L503.1 405.4 L506.7 406.5 L510.6 407.6" stroke="#5e3e28" stroke-width="0.9" fill="none"/>
<path d="M121.7 395.5 L125.8 395.9 L129.9 396.4 L134.1 396.9 L138.3 397.4 L142.5 397.9 L146.8 398.4 L151.1 398.9 L155.4 399.4 L159.7 399.9 L164.1 400.5 L168.5 401 L172.9 401.5 L177.3 402.1 L181.7 402.6 L186.1 403.2 L190.5 403.7 L195 404.2 L199.4 404.8 L203.8 405.3 L208.1 405.8 L212.5 406.4 L216.8 406.9 L221.1 407.4 L225.4 407.9 L229.7 408.4 L233.9 408.9 L238.1 409.4 L242.2 409.9 L246.3 410.3 L250.3 410.8 L254.3 411.2 L258.3 411.6 L262.1 412.1 L265.9 412.5 L269.7 412.8 L273.4 413.2 L277 413.6 L280.5 413.9 L283.9 414.2 L287.3 414.5 L290.6 414.8 L293.7 415 L296.8 415.3 L299.8 415.5 L306.1 415.9 L312 416.2 L317.6 416.4 L322.9 416.5 L327.8 416.6 L332.5 416.6 L336.9 416.5 L341.1 416.4 L345 416.2 L348.8 416 L352.4 415.7 L355.8 415.4 L359.1 415.1 L362.3 414.8 L365.4 414.5 L368.4 414.2 L371.4 413.9 L374.3 413.6 L377.2 413.3 L380.2 413.1 L385.8 412.6 L390.6 411.9 L394.8 411.2 L398.5 410.4 L401.8 409.6 L405 408.9 L408.3 408.1 L411.8 407.5 L415.7 406.9 L420.2 406.5 L423.6 406.2 L427.4 406 L431.3 405.8 L435.5 405.6 L439.7 405.5 L444.1 405.3 L448.5 405.2 L452.9 405.1 L457.2 405.1 L461.5 405 L465.6 405 L469.6 405.1 L473.3 405.2 L476.7 405.3 L479.8 405.5 L485.5 406.1 L490.3 406.9 L494.3 407.9 L498 409 L501.5 410.1 L505.3 411.3 L509.4 412.4" stroke="#f2ece6" stroke-width="0.7" fill="none" stroke-dasharray="0.8 1.2" opacity="0.7"/>
<path d="M122.3 390.5 L126.4 391 L130.5 391.4 L134.6 391.9 L138.8 392.4 L143.1 392.9 L147.4 393.4 L151.7 393.9 L156 394.5 L160.3 395 L164.7 395.5 L169.1 396 L173.5 396.6 L177.9 397.1 L182.3 397.7 L186.7 398.2 L191.2 398.7 L195.6 399.3 L200 399.8 L204.4 400.3 L208.7 400.9 L213.1 401.4 L217.4 401.9 L221.7 402.4 L226 402.9 L230.3 403.4 L234.5 403.9 L238.6 404.4 L242.8 404.9 L246.9 405.4 L250.9 405.8 L254.9 406.2 L258.8 406.7 L262.7 407.1 L266.5 407.5 L270.2 407.9 L273.8 408.2 L277.4 408.6 L280.9 408.9 L284.4 409.2 L287.7 409.5 L291 409.8 L294.1 410.1 L297.2 410.3 L300.2 410.5 L306.4 410.9 L312.3 411.2 L317.8 411.4 L323 411.5 L327.8 411.6 L332.4 411.6 L336.8 411.5 L340.9 411.4 L344.8 411.2 L348.5 411 L352 410.7 L355.4 410.4 L358.6 410.2 L361.8 409.8 L364.9 409.5 L367.9 409.2 L370.9 408.9 L373.8 408.6 L376.8 408.4 L379.8 408.1 L385.3 407.6 L389.9 407 L393.8 406.3 L397.4 405.6 L400.7 404.8 L403.9 404 L407.3 403.3 L411 402.6 L415.1 402 L419.8 401.5 L423.3 401.3 L427.1 401 L431.1 400.8 L435.2 400.6 L439.5 400.5 L443.9 400.3 L448.4 400.2 L452.8 400.1 L457.2 400.1 L461.5 400 L465.6 400 L469.6 400.1 L473.4 400.2 L476.9 400.3 L480.2 400.5 L486.2 401.1 L491.3 402 L495.6 403 L499.5 404.2 L503.1 405.4 L506.7 406.5 L510.6 407.6" stroke="#f2ece6" stroke-width="0.7" fill="none" stroke-dasharray="0.8 1.2" opacity="0.7"/>
<path d="M348.5 267.5 L352.6 268.1 L356.8 268.7 L361 269.3 L365.2 269.8 L369.5 270.4 L373.7 271 L377.9 271.5 L382.1 272.1 L386.3 272.7 L390.4 273.3 L394.4 273.9 L398.3 274.6 L402.1 275.3 L405.7 275.9 L409.3 276.7 L414 277.7 L418.6 278.8 L423 280 L427.3 281.1 L431.5 282.3 L435.6 283.6 L439.5 284.8 L443.3 286.1 L446.9 287.3 L450.4 288.6 L453.6 289.8 L458.3 291.7 L462.6 293.7 L466.4 295.8 L470 297.8 L473.4 299.8 L476.7 301.8 L479.9 303.7 L483.9 306.2 L487.4 308.5 L490.6 310.7 L493.9 313.1 L497.4 315.6 L500.3 317.9 L503.3 320.4 L506.4 323 L509.8 325.8 L513.7 328.5 L517.9 331 L521.2 332.7 L524.5 334.3 L527.9 335.9 L531.5 337.4 L535.4 338.9 L539.5 340.4 L544 341.8 L548.9 343.3 L552.4 344.3 L556.2 345.2 L560.3 346.2 L564.5 347.2 L568.8 348.2 L573.2 349.1 L577.7 350.1 L582.2 351 L586.6 351.9 L591 352.8 L595.2 353.6 L599.2 354.4 L603.2 355.3 L606.8 356.1 L610.2 357 L613.6 357.9 L617 358.8 L620.6 359.5 L624.5 360.2 L628.8 360.7 L633.6 361.1 L638.9 361.3 L645 361.3 L648.2 361.3 L651.7 361.2 L655.3 361.1 L659.2 361 L663.2 360.8 L667.3 360.6 L671.6 360.4 L676 360.1 L680.5 359.8 L685 359.5 L689.6 359.1 L694.2 358.8 L698.8 358.4 L703.4 358 L708 357.5 L712.5 357.1 L716.9 356.6 L721.2 356.2 L725.4 355.7 L729.5 355.2 L733.4 354.6 L737.1 354.1 L740.7 353.6 L745.8 352.7 L750.5 351.8 L755 350.7 L759.1 349.6 L763 348.3 L766.8 347.1 L770.4 345.8 L773.9 344.5 L777.3 343.3 L780.8 342 L784.4 340.9 L788.1 339.7 L792 338.6 L796.2 337.6 L800.8 336.7 L804.2 336.1 L807.8 335.6 L811.5 335.1 L815.2 334.6 L819.1 334.2 L823.1 333.8 L827.1 333.4 L831.2 333 L835.4 332.6 L839.6 332.3 L843.8 332 L848.1 331.6 L852.4 331.3 L856.7 331 L861 330.7 L865.3 330.4 L869.6 330.1 L873.8 329.8 L878 329.5 L882.2 329.1 L886.4 328.8 L885.6 320.4 L881.5 320.8 L877.4 321.1 L873.2 321.5 L868.9 321.8 L864.7 322.1 L860.4 322.4 L856.1 322.8 L851.8 323.1 L847.5 323.4 L843.2 323.7 L838.9 324 L834.7 324.4 L830.5 324.7 L826.4 325.1 L822.3 325.5 L818.2 325.9 L814.3 326.3 L810.4 326.7 L806.6 327.2 L802.9 327.8 L799.2 328.3 L794.4 329.2 L789.9 330.1 L785.7 331.2 L781.7 332.3 L777.9 333.5 L774.3 334.8 L770.8 336 L767.3 337.3 L763.8 338.6 L760.2 339.9 L756.6 341.1 L752.7 342.3 L748.6 343.4 L744.1 344.4 L739.3 345.4 L735.9 345.9 L732.3 346.5 L728.4 347 L724.4 347.6 L720.3 348.1 L716 348.6 L711.6 349.1 L707.2 349.5 L702.7 350 L698.1 350.4 L693.5 350.8 L688.9 351.2 L684.4 351.6 L679.9 351.9 L675.5 352.2 L671.1 352.5 L666.9 352.8 L662.8 353 L658.8 353.2 L655 353.4 L651.5 353.5 L648.1 353.6 L645 353.7 L639.2 353.6 L634.1 353.3 L629.7 352.8 L625.8 352.2 L622.2 351.5 L618.9 350.7 L615.6 349.9 L612.3 349 L608.8 348.1 L605 347.3 L600.8 346.5 L596.7 345.7 L592.5 344.9 L588.2 344 L583.8 343.1 L579.3 342.2 L574.9 341.3 L570.5 340.3 L566.3 339.3 L562.2 338.4 L558.2 337.4 L554.5 336.4 L551.1 335.4 L546.5 334 L542.2 332.6 L538.3 331.1 L534.7 329.7 L531.4 328.2 L528.2 326.6 L525.1 325.1 L522.1 323.4 L518.5 321.1 L515.2 318.6 L512.1 316.1 L509 313.5 L505.9 310.9 L502.6 308.6 L498.9 306 L495.6 303.6 L492.1 301.4 L488.4 299 L484.1 296.6 L480.9 294.7 L477.6 292.7 L474 290.7 L470.2 288.6 L466 286.6 L461.4 284.6 L456.4 282.6 L452.9 281.4 L449.4 280.2 L445.6 278.9 L441.8 277.7 L437.7 276.5 L433.6 275.3 L429.3 274.1 L424.8 273 L420.2 271.8 L415.5 270.8 L410.7 269.8 L407.1 269.1 L403.3 268.4 L399.4 267.8 L395.4 267.2 L391.4 266.6 L387.2 266 L383.1 265.4 L378.8 264.9 L374.6 264.3 L370.4 263.7 L366.1 263.2 L361.9 262.6 L357.7 262.1 L353.6 261.5 L349.5 260.9 Z" fill="url(#bal)"/>
<path d="M348.7 265.4L349.3 260.6M350.3 265.7L351 260.8M352 265.9L352.7 261.1M353.7 266.2L354.4 261.3M355.4 266.4L356.1 261.5M357.1 266.6L357.7 261.8M358.8 266.9L359.4 262M360.5 267.1L361.1 262.2M362.1 267.3L362.8 262.4M363.8 267.5L364.5 262.6M365.5 267.8L366.2 262.9M367.2 268L367.8 263.1M368.9 268.2L369.5 263.3M370.6 268.4L371.2 263.5M372.3 268.7L372.9 263.7M373.9 268.9L374.6 264M375.6 269.1L376.3 264.2M377.3 269.3L378 264.4M379 269.6L379.7 264.6M380.7 269.8L381.3 264.9M382.3 270L383 265.1M384 270.2L384.7 265.3M385.7 270.5L386.4 265.6M387.4 270.7L388.1 265.8M389.1 271L389.8 266M390.7 271.2L391.5 266.3M392.4 271.5L393.2 266.5M394.1 271.7L394.9 266.8M395.7 272L396.6 267.1M397.4 272.3L398.2 267.3M399.1 272.5L399.9 267.6M400.7 272.8L401.6 267.9M402.4 273.1L403.3 268.2M404.1 273.4L405 268.5M405.7 273.7L406.7 268.8M407.4 274L408.4 269.1M409 274.4L410.1 269.4M410.7 274.7L411.8 269.8M412.3 275.1L413.4 270.2M414 275.4L415.1 270.5M415.6 275.8L416.8 270.9M417.2 276.2L418.4 271.3M418.9 276.6L420.1 271.7M420.5 277L421.8 272.1M422.2 277.4L423.4 272.5M423.8 277.8L425.1 272.9M425.4 278.2L426.7 273.4M427.1 278.7L428.4 273.8M428.7 279.1L430.1 274.3M430.3 279.6L431.7 274.7M431.9 280L433.4 275.2M433.5 280.5L435 275.7M435.2 281L436.6 276.1M436.8 281.5L438.3 276.6M438.4 282L439.9 277.1M440 282.5L441.6 277.7M441.6 283L443.2 278.2M443.2 283.6L444.8 278.7M444.8 284.1L446.5 279.2M446.4 284.6L448.1 279.8M448 285.2L449.7 280.4M449.6 285.8L451.3 280.9M451.1 286.3L453 281.5M452.7 286.9L454.6 282.1M454.2 287.5L456.2 282.7M455.8 288.1L457.8 283.4M457.4 288.7L459.4 284M458.8 289.3L461.1 284.7M460.4 290L462.6 285.4M461.9 290.8L464.2 286.1M463.4 291.4L465.8 286.8M464.9 292.2L467.3 287.6M466.4 293L468.8 288.4M467.8 293.7L470.4 289.2M469.3 294.6L471.9 290M470.8 295.4L473.4 290.9M472.2 296.2L474.9 291.7M473.7 297.1L476.4 292.6M475.1 298L477.8 293.5M476.6 298.9L479.3 294.3M478.1 299.7L480.7 295.2M479.5 300.6L482.2 296.1M480.9 301.4L483.7 296.9M482.4 302.3L485.2 297.8M483.8 303.2L486.6 298.7M485.2 304L488.2 299.6M486.7 305L489.6 300.5M488.1 305.9L491 301.4M489.4 306.8L492.5 302.4M490.8 307.8L493.9 303.4M492.2 308.7L495.3 304.4M493.6 309.7L496.7 305.3M494.9 310.7L498.1 306.4M496.3 311.7L499.5 307.3M497.7 312.7L500.9 308.3M499 313.6L502.3 309.4M500.3 314.7L503.7 310.4M501.6 315.7L505.1 311.5M502.9 316.7L506.4 312.6M504.2 317.8L507.7 313.7M505.5 319L509 314.7M506.8 320.1L510.3 315.8M508.2 321.2L511.5 316.8M509.6 322.3L512.9 317.9M511 323.4L514.1 318.8M512.4 324.4L515.4 319.8M513.8 325.4L516.8 320.8M515.4 326.4L518.1 321.6M516.8 327.3L519.6 322.5M518.3 328.2L521 323.4M519.9 329.1L522.4 324.1M521.4 329.9L523.9 324.9M523 330.7L525.4 325.7M524.5 331.4L526.9 326.4M526.1 332.2L528.4 327.1M527.6 332.9L529.9 327.8M529.3 333.6L531.4 328.5M530.8 334.3L532.9 329.1M532.5 335L534.4 329.8M534.1 335.6L536 330.4M535.6 336.2L537.6 331M537.3 336.9L539.1 331.5M538.9 337.4L540.7 332.1M540.6 338L542.3 332.6M542.2 338.5L543.9 333.2M543.8 339.1L545.5 333.7M545.5 339.6L547.1 334.2M547.1 340.1L548.7 334.7M548.7 340.6L550.3 335.1M550.4 341.1L551.9 335.6M552.1 341.5L553.5 336M553.8 342L555.1 336.5M555.4 342.4L556.8 336.9M557.1 342.8L558.4 337.3M558.7 343.2L560.1 337.7M560.4 343.6L561.7 338.1M562.1 344L563.3 338.5M563.7 344.4L565 338.9M565.4 344.8L566.6 339.2M567.1 345.2L568.3 339.6M568.7 345.6L569.9 340M570.4 345.9L571.6 340.3M572.1 346.3L573.3 340.7M573.7 346.7L574.9 341.1M575.4 347L576.6 341.4M577.1 347.4L578.2 341.8M578.7 347.7L579.9 342.1M580.4 348.1L581.5 342.4M582.1 348.4L583.2 342.8M583.7 348.8L584.9 343.1M585.4 349.1L586.5 343.4M587.1 349.4L588.2 343.8M588.8 349.8L589.9 344.1M590.4 350.1L591.5 344.4M592.1 350.4L593.2 344.8M593.8 350.7L594.9 345.1M595.4 351.1L596.5 345.4M597.1 351.4L598.2 345.7M598.8 351.7L599.9 346M600.4 352L601.6 346.4M602 352.4L603.3 346.7M603.6 352.7L605 347.1M605.3 353.1L606.7 347.5M606.9 353.5L608.3 347.9M608.5 353.9L610 348.3M610.2 354.3L611.6 348.7M611.8 354.8L613.3 349.1M613.5 355.2L614.9 349.5M615.2 355.6L616.5 349.9M616.8 356L618.2 350.3M618.6 356.4L619.7 350.7M620.3 356.8L621.4 351M622 357.1L623 351.4M623.7 357.4L624.6 351.6M625.5 357.7L626.2 351.9M627.2 358L627.9 352.1M628.9 358.2L629.5 352.4M630.7 358.4L631.1 352.5M632.4 358.5L632.8 352.6M634.2 358.7L634.4 352.8M635.9 358.7L636.1 352.8M637.6 358.8L637.8 352.9M639.4 358.9L639.4 353M641.1 358.9L641.1 353M642.8 358.9L642.8 353M644.5 359L644.5 353M646.2 358.9L646.1 353M647.9 358.9L647.8 353M649.7 358.9L649.5 353M651.4 358.8L651.2 352.9M653.1 358.8L652.9 352.9M654.8 358.7L654.6 352.8M656.5 358.7L656.3 352.7M658.2 358.6L658 352.7M659.9 358.5L659.6 352.6M661.6 358.5L661.3 352.5M663.3 358.4L663 352.4M665 358.3L664.7 352.4M666.7 358.2L666.4 352.3M668.5 358.1L668.1 352.2M670.2 358L669.8 352.1M671.9 357.9L671.5 352M673.6 357.8L673.2 351.9M675.3 357.7L674.9 351.7M677 357.6L676.5 351.6M678.7 357.5L678.2 351.5M680.4 357.4L679.9 351.4M682.1 357.2L681.6 351.3M683.8 357.1L683.3 351.2M685.5 357L685 351M687.2 356.8L686.7 350.9M688.9 356.7L688.4 350.8M690.6 356.6L690.1 350.6M692.3 356.4L691.8 350.5M694 356.3L693.5 350.3M695.7 356.2L695.1 350.2M697.4 356L696.8 350M699.1 355.9L698.5 349.9M700.8 355.7L700.2 349.7M702.5 355.5L701.9 349.6M704.2 355.4L703.6 349.4M705.9 355.2L705.3 349.3M707.5 355.1L707 349.1M709.3 354.9L708.6 348.9M710.9 354.7L710.3 348.7M712.7 354.5L712 348.6M714.3 354.4L713.7 348.4M716 354.2L715.4 348.2M717.7 354L717 348M719.4 353.8L718.7 347.8M721.1 353.6L720.4 347.6M722.8 353.4L722.1 347.4M724.5 353.2L723.8 347.2M726.2 353L725.4 347M727.9 352.8L727.1 346.8M729.6 352.6L728.8 346.6M731.3 352.3L730.5 346.4M733 352.1L732.2 346.1M734.7 351.9L733.8 345.9M736.4 351.6L735.5 345.6M738.1 351.3L737.1 345.4M739.8 351.1L738.8 345.1M741.6 350.8L740.4 344.9M743.2 350.5L742.1 344.6M744.9 350.2L743.7 344.3M746.7 349.8L745.3 343.9M748.3 349.5L747 343.6M750 349.1L748.6 343.2M751.8 348.7L750.2 342.8M753.4 348.3L751.8 342.4M755.1 347.8L753.4 342M756.8 347.3L755 341.5M758.4 346.9L756.6 341.1M760.1 346.3L758.2 340.6M761.7 345.8L759.8 340.1M763.4 345.3L761.4 339.5M765 344.7L763 339M766.6 344.2L764.6 338.4M768.2 343.6L766.2 337.9M769.8 343L767.7 337.3M771.4 342.4L769.3 336.7M773 341.8L770.9 336.1M774.6 341.3L772.6 335.5M776.2 340.7L774.1 334.9M777.8 340.1L775.8 334.3M779.4 339.6L777.4 333.8M780.9 339.1L779.1 333.2M782.5 338.5L780.7 332.7M784.1 338L782.4 332.1M785.7 337.5L784 331.6M787.3 337.1L785.6 331.1M788.9 336.6L787.4 330.7M790.5 336.2L789 330.2M792 335.8L790.8 329.8M793.7 335.4L792.4 329.4M795.4 335L794.1 329M796.9 334.7L795.8 328.7M798.6 334.4L797.5 328.3M800.3 334.1L799.2 328M801.9 333.8L800.9 327.7M803.6 333.6L802.6 327.4M805.2 333.3L804.3 327.2M806.9 333.1L806 326.9M808.5 332.8L807.7 326.7M810.2 332.6L809.4 326.5M811.9 332.4L811.1 326.2M813.5 332.2L812.8 326M815.2 332L814.5 325.8M816.9 331.8L816.2 325.6M818.6 331.6L817.9 325.4M820.3 331.4L819.6 325.3M821.9 331.3L821.3 325.1M823.6 331.1L823 324.9M825.3 330.9L824.7 324.7M827 330.8L826.4 324.6M828.7 330.6L828.1 324.4M830.4 330.5L829.8 324.3M832 330.3L831.5 324.1M833.7 330.2L833.2 324M835.4 330L834.9 323.8M837.1 329.9L836.6 323.7M838.8 329.8L838.3 323.6M840.5 329.6L840 323.4M842.2 329.5L841.7 323.3M843.9 329.4L843.4 323.2M845.6 329.3L845.1 323M847.3 329.1L846.8 322.9M849 329L848.5 322.8M850.7 328.9L850.2 322.6M852.4 328.8L851.9 322.5M854 328.6L853.6 322.4M855.7 328.5L855.3 322.3M857.4 328.4L857 322.2M859.1 328.3L858.7 322M860.8 328.2L860.4 321.9M862.5 328L862.1 321.8M864.2 327.9L863.8 321.7M865.9 327.8L865.5 321.5M867.6 327.7L867.2 321.4M869.3 327.5L868.9 321.3M871 327.4L870.5 321.1M872.7 327.3L872.2 321M874.4 327.1L873.9 320.9M876.1 327L875.6 320.7M877.8 326.9L877.3 320.6M879.6 326.7L879 320.5M881.3 326.6L880.7 320.3M883 326.4L882.4 320.2M884.7 326.3L884.1 320" stroke="#6e4830" stroke-width="1.2" fill="none"/>
<path d="M348.8 264.7 L352.9 265.3 L357 265.9 L361.2 266.5 L365.5 267 L369.7 267.6 L373.9 268.2 L378.2 268.7 L382.4 269.3 L386.5 269.9 L390.6 270.5 L394.6 271.1 L398.5 271.7 L402.4 272.4 L406.1 273 L409.6 273.8 L414.4 274.8 L419 275.9 L423.5 277 L427.8 278.1 L432 279.3 L436.1 280.5 L440.1 281.8 L443.9 283 L447.5 284.3 L451 285.5 L454.3 286.7 L459.2 288.7 L463.5 290.7 L467.4 292.7 L471.1 294.7 L474.5 296.7 L477.8 298.7 L481 300.6 L485.1 303.1 L488.7 305.4 L492 307.7 L495.3 310 L498.9 312.6 L501.9 314.9 L504.9 317.4 L508 320 L511.3 322.7 L515 325.3 L519 327.7 L522.2 329.4 L525.5 331 L528.8 332.6 L532.4 334.1 L536.1 335.6 L540.2 337 L544.6 338.5 L549.4 339.9 L553 340.9 L556.7 341.9 L560.7 342.9 L564.9 343.9 L569.2 344.9 L573.6 345.8 L578.1 346.8 L582.6 347.7 L587 348.6 L591.3 349.4 L595.6 350.3 L599.6 351 L603.6 351.9 L607.3 352.7 L610.8 353.6 L614.1 354.5 L617.5 355.3 L621 356.1 L624.8 356.8 L629 357.4 L633.7 357.8 L639 358.1 L645 358.1 L648.2 358.1 L651.6 358 L655.3 357.9 L659.1 357.7 L663.1 357.5 L667.2 357.3 L671.5 357.1 L675.9 356.8 L680.3 356.5 L684.9 356.2 L689.4 355.8 L694 355.4 L698.6 355 L703.2 354.6 L707.8 354.2 L712.3 353.7 L716.7 353.2 L721 352.8 L725.2 352.2 L729.2 351.7 L733.1 351.2 L736.8 350.7 L740.4 350.1 L745.4 349.2 L750 348.2 L754.4 347.1 L758.5 346 L762.3 344.7 L766 343.5 L769.6 342.2 L773.1 340.9 L776.5 339.6 L780.1 338.4 L783.7 337.2 L787.5 336.1 L791.5 335 L795.8 334 L800.4 333.2 L803.9 332.6 L807.5 332.1 L811.2 331.6 L815 331.1 L818.9 330.7 L822.9 330.3 L826.9 329.9 L831.1 329.5 L835.2 329.2 L839.4 328.8 L843.7 328.5 L847.9 328.2 L852.2 327.9 L856.5 327.6 L860.8 327.3 L865.1 326.9 L869.4 326.6 L873.7 326.3 L877.9 326 L882.1 325.6 L886.2 325.2M349.2 261.3 L353.3 261.9 L357.5 262.4 L361.7 263 L365.9 263.5 L370.2 264.1 L374.4 264.7 L378.6 265.2 L382.8 265.8 L387 266.4 L391.1 266.9 L395.2 267.6 L399.1 268.2 L403 268.8 L406.7 269.5 L410.4 270.2 L415.2 271.3 L419.8 272.4 L424.4 273.5 L428.8 274.6 L433.1 275.8 L437.2 277.1 L441.2 278.3 L445 279.5 L448.7 280.8 L452.3 282 L455.7 283.3 L460.6 285.3 L465.1 287.3 L469.2 289.4 L472.9 291.5 L476.4 293.5 L479.7 295.5 L483 297.4 L487.1 299.9 L490.8 302.2 L494.2 304.5 L497.5 306.9 L501.1 309.4 L504.3 311.8 L507.4 314.4 L510.5 317 L513.7 319.5 L517.1 322 L521 324.3 L524 325.9 L527.2 327.4 L530.4 328.9 L533.9 330.4 L537.5 331.8 L541.5 333.2 L545.8 334.6 L550.6 336.1 L554 337 L557.7 338 L561.7 338.9 L565.8 339.9 L570.1 340.9 L574.5 341.8 L578.9 342.7 L583.4 343.7 L587.8 344.5 L592.1 345.4 L596.3 346.2 L600.4 347 L604.5 347.8 L608.3 348.7 L611.8 349.6 L615.1 350.5 L618.4 351.3 L621.9 352 L625.5 352.7 L629.5 353.2 L634 353.6 L639.1 353.8 L645 353.9 L648.1 353.8 L651.5 353.8 L655.1 353.6 L658.9 353.5 L662.9 353.3 L667 353.1 L671.2 352.8 L675.6 352.6 L680 352.3 L684.5 351.9 L689.1 351.6 L693.7 351.2 L698.3 350.8 L702.8 350.4 L707.4 349.9 L711.8 349.4 L716.2 349 L720.5 348.5 L724.7 348 L728.7 347.5 L732.5 346.9 L736.2 346.4 L739.6 345.9 L744.5 345 L749.1 344 L753.3 342.9 L757.2 341.8 L760.9 340.6 L764.5 339.4 L768.1 338.1 L771.6 336.8 L775.1 335.5 L778.7 334.3 L782.4 333 L786.3 331.9 L790.4 330.8 L794.9 329.7 L799.6 328.8 L803.2 328.2 L806.9 327.7 L810.6 327.2 L814.5 326.7 L818.4 326.3 L822.5 325.9 L826.5 325.5 L830.7 325.1 L834.9 324.7 L839.1 324.4 L843.3 324.1 L847.6 323.7 L851.9 323.4 L856.2 323.1 L860.5 322.8 L864.8 322.5 L869.1 322.2 L873.3 321.8 L877.5 321.5 L881.7 321.1 L885.8 320.8" stroke="#5e3e28" stroke-width="0.9" fill="none"/>
<path d="M348.8 264.7 L352.9 265.3 L357 265.9 L361.2 266.5 L365.5 267 L369.7 267.6 L373.9 268.2 L378.2 268.7 L382.4 269.3 L386.5 269.9 L390.6 270.5 L394.6 271.1 L398.5 271.7 L402.4 272.4 L406.1 273 L409.6 273.8 L414.4 274.8 L419 275.9 L423.5 277 L427.8 278.1 L432 279.3 L436.1 280.5 L440.1 281.8 L443.9 283 L447.5 284.3 L451 285.5 L454.3 286.7 L459.2 288.7 L463.5 290.7 L467.4 292.7 L471.1 294.7 L474.5 296.7 L477.8 298.7 L481 300.6 L485.1 303.1 L488.7 305.4 L492 307.7 L495.3 310 L498.9 312.6 L501.9 314.9 L504.9 317.4 L508 320 L511.3 322.7 L515 325.3 L519 327.7 L522.2 329.4 L525.5 331 L528.8 332.6 L532.4 334.1 L536.1 335.6 L540.2 337 L544.6 338.5 L549.4 339.9 L553 340.9 L556.7 341.9 L560.7 342.9 L564.9 343.9 L569.2 344.9 L573.6 345.8 L578.1 346.8 L582.6 347.7 L587 348.6 L591.3 349.4 L595.6 350.3 L599.6 351 L603.6 351.9 L607.3 352.7 L610.8 353.6 L614.1 354.5 L617.5 355.3 L621 356.1 L624.8 356.8 L629 357.4 L633.7 357.8 L639 358.1 L645 358.1 L648.2 358.1 L651.6 358 L655.3 357.9 L659.1 357.7 L663.1 357.5 L667.2 357.3 L671.5 357.1 L675.9 356.8 L680.3 356.5 L684.9 356.2 L689.4 355.8 L694 355.4 L698.6 355 L703.2 354.6 L707.8 354.2 L712.3 353.7 L716.7 353.2 L721 352.8 L725.2 352.2 L729.2 351.7 L733.1 351.2 L736.8 350.7 L740.4 350.1 L745.4 349.2 L750 348.2 L754.4 347.1 L758.5 346 L762.3 344.7 L766 343.5 L769.6 342.2 L773.1 340.9 L776.5 339.6 L780.1 338.4 L783.7 337.2 L787.5 336.1 L791.5 335 L795.8 334 L800.4 333.2 L803.9 332.6 L807.5 332.1 L811.2 331.6 L815 331.1 L818.9 330.7 L822.9 330.3 L826.9 329.9 L831.1 329.5 L835.2 329.2 L839.4 328.8 L843.7 328.5 L847.9 328.2 L852.2 327.9 L856.5 327.6 L860.8 327.3 L865.1 326.9 L869.4 326.6 L873.7 326.3 L877.9 326 L882.1 325.6 L886.2 325.2" stroke="#f2ece6" stroke-width="0.7" fill="none" stroke-dasharray="0.8 1.2" opacity="0.7"/>
<path d="M349.2 261.3 L353.3 261.9 L357.5 262.4 L361.7 263 L365.9 263.5 L370.2 264.1 L374.4 264.7 L378.6 265.2 L382.8 265.8 L387 266.4 L391.1 266.9 L395.2 267.6 L399.1 268.2 L403 268.8 L406.7 269.5 L410.4 270.2 L415.2 271.3 L419.8 272.4 L424.4 273.5 L428.8 274.6 L433.1 275.8 L437.2 277.1 L441.2 278.3 L445 279.5 L448.7 280.8 L452.3 282 L455.7 283.3 L460.6 285.3 L465.1 287.3 L469.2 289.4 L472.9 291.5 L476.4 293.5 L479.7 295.5 L483 297.4 L487.1 299.9 L490.8 302.2 L494.2 304.5 L497.5 306.9 L501.1 309.4 L504.3 311.8 L507.4 314.4 L510.5 317 L513.7 319.5 L517.1 322 L521 324.3 L524 325.9 L527.2 327.4 L530.4 328.9 L533.9 330.4 L537.5 331.8 L541.5 333.2 L545.8 334.6 L550.6 336.1 L554 337 L557.7 338 L561.7 338.9 L565.8 339.9 L570.1 340.9 L574.5 341.8 L578.9 342.7 L583.4 343.7 L587.8 344.5 L592.1 345.4 L596.3 346.2 L600.4 347 L604.5 347.8 L608.3 348.7 L611.8 349.6 L615.1 350.5 L618.4 351.3 L621.9 352 L625.5 352.7 L629.5 353.2 L634 353.6 L639.1 353.8 L645 353.9 L648.1 353.8 L651.5 353.8 L655.1 353.6 L658.9 353.5 L662.9 353.3 L667 353.1 L671.2 352.8 L675.6 352.6 L680 352.3 L684.5 351.9 L689.1 351.6 L693.7 351.2 L698.3 350.8 L702.8 350.4 L707.4 349.9 L711.8 349.4 L716.2 349 L720.5 348.5 L724.7 348 L728.7 347.5 L732.5 346.9 L736.2 346.4 L739.6 345.9 L744.5 345 L749.1 344 L753.3 342.9 L757.2 341.8 L760.9 340.6 L764.5 339.4 L768.1 338.1 L771.6 336.8 L775.1 335.5 L778.7 334.3 L782.4 333 L786.3 331.9 L790.4 330.8 L794.9 329.7 L799.6 328.8 L803.2 328.2 L806.9 327.7 L810.6 327.2 L814.5 326.7 L818.4 326.3 L822.5 325.9 L826.5 325.5 L830.7 325.1 L834.9 324.7 L839.1 324.4 L843.3 324.1 L847.6 323.7 L851.9 323.4 L856.2 323.1 L860.5 322.8 L864.8 322.5 L869.1 322.2 L873.3 321.8 L877.5 321.5 L881.7 321.1 L885.8 320.8" stroke="#f2ece6" stroke-width="0.7" fill="none" stroke-dasharray="0.8 1.2" opacity="0.7"/>
<path d="M971.2 342L972.8 336M972.8 342.5L974.5 336.4M974.5 342.9L976.1 336.9M976.1 343.4L977.8 337.3M977.8 343.8L979.4 337.8M979.4 344.3L981.1 338.2M981.1 344.7L982.7 338.7M982.7 345.2L984.4 339.1M984.4 345.6L986 339.6M986 346.1L987.7 340M987.7 346.5L989.3 340.5M989.3 347L991 340.9M991 347.4L992.6 341.4M992.6 347.9L994.3 341.8M994.3 348.3L995.9 342.3M995.9 348.8L997.6 342.7M997.6 349.2L999.2 343.2M999.2 349.7L1000.9 343.6M1000.9 350.1L1002.5 344.1M1002.5 350.6L1004.2 344.5M1004.2 351L1005.8 345M1005.8 351.5L1007.5 345.4M1007.5 351.9L1009.1 345.9M1009.1 352.4L1010.8 346.3M1010.8 352.8L1012.4 346.8M1012.4 353.3L1014.1 347.2M1014.1 353.7L1015.7 347.7" stroke="#6e4830" stroke-width="1.2" fill="none"/>
<path d="M971.4 341.2 L975.1 342.2 L978.7 343.2 L982.4 344.2 L986.1 345.2 L989.7 346.2 L993.4 347.2 L997.1 348.2 L1000.7 349.2 L1004.4 350.2 L1008.1 351.2 L1011.7 352.2 L1015.4 353.2M972.6 336.8 L976.3 337.8 L979.9 338.8 L983.6 339.8 L987.3 340.8 L990.9 341.8 L994.6 342.8 L998.3 343.8 L1001.9 344.8 L1005.6 345.8 L1009.3 346.8 L1012.9 347.8 L1016.6 348.8" stroke="#5e3e28" stroke-width="0.9" fill="none"/>
<path d="M971.4 341.2 L975.1 342.2 L978.7 343.2 L982.4 344.2 L986.1 345.2 L989.7 346.2 L993.4 347.2 L997.1 348.2 L1000.7 349.2 L1004.4 350.2 L1008.1 351.2 L1011.7 352.2 L1015.4 353.2" stroke="#f2ece6" stroke-width="0.7" fill="none" stroke-dasharray="0.8 1.2" opacity="0.7"/>
<path d="M972.6 336.8 L976.3 337.8 L979.9 338.8 L983.6 339.8 L987.3 340.8 L990.9 341.8 L994.6 342.8 L998.3 343.8 L1001.9 344.8 L1005.6 345.8 L1009.3 346.8 L1012.9 347.8 L1016.6 348.8" stroke="#f2ece6" stroke-width="0.7" fill="none" stroke-dasharray="0.8 1.2" opacity="0.7"/>
<path d="M582.9 256.6 L586.9 257.9 L590.9 259.2 L594.8 260.5 L598.8 261.7 L602.8 263 L606.7 264.2 L610.6 265.5 L614.6 266.8 L618.5 268.1 L622.5 269.5 L626.4 270.9 L630.4 272.4 L634.5 274 L638.5 275.7 L642 277.3 L645.6 279 L649.2 280.7 L652.8 282.5 L656.4 284.3 L660 286.2 L663.7 288.2 L667.4 290.1 L671.2 282.9 L667.5 281 L663.8 279.1 L660 277.2 L656.3 275.3 L652.6 273.5 L648.9 271.8 L645.2 270.2 L641.5 268.6 L637.3 266.9 L633.1 265.4 L629 263.9 L624.9 262.4 L620.9 261.1 L616.9 259.8 L612.9 258.5 L608.9 257.3 L604.9 256.1 L601 254.8 L597 253.6 L593.1 252.4 L589.1 251.1 L585.1 249.8 Z" fill="url(#bal)"/>
<path d="M793.4 346.4 L796.9 347.7 L800.6 349 L804.3 350.3 L808.1 351.5 L812.1 352.7 L816.2 353.8 L820.5 354.9 L824.9 355.9 L829.6 356.8 L834.4 357.6 L839.4 358.4 L842.8 358.8 L846.4 359.2 L850.1 359.6 L854 359.9 L858 360.2 L862.2 360.5 L866.4 360.7 L870.8 361 L875.2 361.2 L879.7 361.3 L884.2 361.5 L888.8 361.6 L893.4 361.8 L898 361.9 L902.6 362 L907.2 362 L911.7 362.1 L916.2 362.2 L920.6 362.2 L924.9 362.2 L929.1 362.3 L933.2 362.3 L937.2 362.3 L941 362.3 L944.7 362.3 L948.1 362.4 L951.4 362.4 L954.5 362.4 L957.4 362.4 L960 362.4 L969.1 362.4 L975.4 362.2 L979.8 361.9 L982.9 361.4 L985.1 360.9 L987.3 360.3 L990.6 359.8 L989.4 351.3 L985.7 351.8 L983 352.3 L980.9 352.9 L978.5 353.6 L974.8 354.1 L968.9 354.5 L960 354.6 L957.4 354.6 L954.5 354.6 L951.4 354.6 L948.2 354.6 L944.7 354.6 L941 354.6 L937.2 354.6 L933.2 354.6 L929.2 354.5 L925 354.5 L920.6 354.5 L916.3 354.5 L911.8 354.4 L907.3 354.3 L902.8 354.3 L898.2 354.2 L893.6 354.1 L889 353.9 L884.5 353.8 L880 353.6 L875.5 353.4 L871.2 353.2 L866.9 353 L862.7 352.7 L858.6 352.4 L854.7 352.1 L850.9 351.8 L847.2 351.4 L843.8 351 L840.6 350.5 L835.7 349.7 L831.1 348.9 L826.6 347.9 L822.4 346.9 L818.3 345.9 L814.4 344.7 L810.6 343.6 L807 342.3 L803.4 341.1 L799.9 339.8 L796.4 338.4 Z" fill="url(#bal)"/>
<path d="M583.2 254.3L584.8 249.7M584.8 254.9L586.4 250.2M586.5 255.4L588 250.7M588.1 255.9L589.6 251.3M589.7 256.5L591.2 251.8M591.3 257L592.8 252.3M593 257.5L594.4 252.8M594.6 258L596.1 253.3M596.2 258.6L597.7 253.8M597.8 259.1L599.3 254.3M599.4 259.6L600.9 254.8M601.1 260.1L602.5 255.3M602.7 260.6L604.2 255.8M604.3 261.1L605.8 256.3M605.9 261.6L607.4 256.8M607.5 262.1L609.1 257.3M609.2 262.6L610.7 257.9M610.8 263.1L612.3 258.4M612.4 263.7L613.9 258.9M614 264.2L615.6 259.4M615.6 264.7L617.2 259.9M617.2 265.2L618.8 260.5M618.8 265.8L620.4 261M620.4 266.3L622.1 261.5M622 266.9L623.7 262.1M623.6 267.4L625.3 262.7M625.2 268L626.9 263.2M626.8 268.6L628.5 263.8M628.3 269.1L630.2 264.4M629.9 269.7L631.7 265M631.5 270.3L633.4 265.6M633.1 270.9L635 266.2M634.6 271.6L636.5 266.8M636.2 272.2L638.2 267.5M637.7 272.8L639.7 268.1M639.3 273.5L641.4 268.8M640.8 274.2L642.9 269.5M642.4 274.8L644.5 270.1M643.9 275.5L646.1 270.9M645.4 276.2L647.6 271.6M646.9 276.9L649.2 272.3M648.5 277.7L650.7 273M650 278.4L652.3 273.8M651.5 279.1L653.8 274.5M653 279.9L655.3 275.2M654.5 280.6L656.9 276M656.1 281.4L658.4 276.8M657.5 282.2L659.9 277.6M659.1 283L661.5 278.3M660.6 283.7L663 279.1M662.1 284.5L664.5 279.9M663.6 285.3L666 280.7M665.1 286.1L667.5 281.5M666.6 286.9L669 282.3M668.1 287.7L670.5 283M669.6 288.5L672 283.8M671.1 289.3L673.5 284.6M672.6 290.1L675 285.4M674.1 290.9L676.5 286.2M675.6 291.7L678 287M677.1 292.5L679.5 287.8M678.6 293.3L681 288.6M680.1 294.1L682.5 289.4M681.6 294.8L684.1 290.1M683.1 295.6L685.6 290.9M684.7 296.4L687.1 291.7M686.2 297.2L688.6 292.5M687.7 298L690.1 293.2M689.2 298.7L691.6 294M690.7 299.5L693.1 294.7M692.3 300.3L694.6 295.5M693.8 301L696.1 296.2M695.4 301.8L697.7 296.9M696.9 302.5L699.2 297.7M698.4 303.2L700.7 298.4M700 304L702.3 299.1M701.5 304.7L703.8 299.8M703.1 305.4L705.3 300.5M704.6 306.1L706.9 301.2M706.2 306.8L708.4 301.9M707.7 307.6L710 302.7M709.2 308.3L711.5 303.4M710.8 309L713.1 304.1M712.3 309.7L714.6 304.8M713.9 310.4L716.1 305.5M715.4 311.1L717.7 306.2M717 311.8L719.2 306.9M718.5 312.6L720.8 307.6M720.1 313.3L722.3 308.3M721.6 314L723.9 309M723.2 314.7L725.4 309.7M724.7 315.4L727 310.4M726.3 316.1L728.5 311.1M727.8 316.8L730.1 311.8M729.4 317.5L731.6 312.5M730.9 318.2L733.2 313.1M732.5 318.9L734.7 313.8M734.1 319.5L736.3 314.5M735.6 320.2L737.8 315.2M737.2 320.9L739.4 315.9M738.8 321.6L740.9 316.5M740.3 322.3L742.5 317.2M741.9 322.9L744 317.8M743.5 323.6L745.6 318.5M745 324.3L747.2 319.2M746.6 324.9L748.7 319.8M748.2 325.6L750.3 320.5M749.8 326.2L751.9 321.1M751.4 326.9L753.4 321.7M752.9 327.5L755 322.4M754.5 328.2L756.6 323M756.1 328.8L758.1 323.6M757.7 329.4L759.7 324.2M759.3 330.1L761.3 324.8M760.9 330.7L762.9 325.4M762.5 331.3L764.4 326.1M764.1 331.9L766 326.6M765.7 332.5L767.6 327.2M767.2 333.1L769.2 327.9M768.8 333.7L770.8 328.4M770.4 334.3L772.4 329.1M772 334.9L774 329.7M773.5 335.5L775.6 330.3M775.1 336.2L777.2 330.9M776.7 336.8L778.8 331.6M778.2 337.4L780.4 332.2M779.8 338.1L781.9 332.8M781.4 338.7L783.5 333.5M783 339.4L785.1 334.1M784.5 340L786.7 334.8M786.1 340.6L788.2 335.4M787.7 341.3L789.8 336M789.3 341.9L791.4 336.6M790.9 342.6L792.9 337.3M792.5 343.2L794.5 337.9M794.1 343.8L796.1 338.5M795.7 344.4L797.7 339.1M797.3 345L799.3 339.7M798.9 345.6L800.8 340.2M800.5 346.2L802.4 340.8M802.2 346.8L804 341.4M803.8 347.3L805.6 341.9M805.4 347.9L807.1 342.4M807 348.4L808.8 343M808.7 349L810.3 343.5M810.3 349.5L811.9 343.9M812 350L813.6 344.4M813.7 350.4L815.1 344.9M815.3 350.9L816.8 345.3M817 351.4L818.4 345.8M818.7 351.8L820 346.2M820.3 352.2L821.7 346.6M822 352.6L823.2 347M823.7 353L824.9 347.3M825.4 353.4L826.5 347.7M827.1 353.7L828.2 348M828.7 354.1L829.8 348.4M830.5 354.4L831.4 348.7M832.2 354.7L833.1 349M833.8 355L834.8 349.2M835.6 355.3L836.4 349.5M837.2 355.5L838.1 349.8M838.9 355.8L839.8 350M840.7 356L841.4 350.2M842.4 356.3L843.1 350.5M844.1 356.5L844.7 350.7M845.8 356.7L846.4 350.8M847.5 356.8L848.1 351M849.2 357L849.7 351.2M850.9 357.2L851.4 351.3M852.6 357.3L853.1 351.5M854.3 357.5L854.8 351.6M856 357.6L856.5 351.8M857.7 357.7L858.2 351.9M859.4 357.9L859.8 352M861.1 358L861.5 352.1M862.9 358.1L863.2 352.2M864.6 358.2L864.9 352.3M866.3 358.3L866.6 352.4M868 358.4L868.3 352.5M869.7 358.5L870 352.6M871.4 358.6L871.6 352.7M873.1 358.7L873.3 352.8M874.8 358.7L875 352.8M876.5 358.8L876.7 352.9M878.2 358.9L878.4 353M879.9 359L880.1 353.1M881.6 359L881.8 353.1M883.3 359.1L883.5 353.2M885 359.1L885.2 353.2M886.7 359.2L886.9 353.3M888.4 359.3L888.6 353.3M890.1 359.3L890.3 353.4M891.8 359.3L892 353.4M893.5 359.4L893.7 353.5M895.2 359.4L895.4 353.5M896.9 359.5L897.1 353.5M898.6 359.5L898.8 353.6M900.3 359.6L900.5 353.6M902 359.6L902.2 353.6M903.8 359.6L903.8 353.7M905.5 359.6L905.5 353.7M907.2 359.7L907.2 353.7M908.9 359.7L908.9 353.7M910.6 359.7L910.6 353.8M912.3 359.8L912.3 353.8M914 359.8L914 353.8M915.7 359.8L915.7 353.8M917.4 359.8L917.4 353.8M919.1 359.8L919.1 353.9M920.8 359.8L920.8 353.9M922.5 359.9L922.5 353.9M924.2 359.9L924.2 353.9M925.9 359.9L925.9 353.9M927.6 359.9L927.6 353.9M929.3 359.9L929.3 353.9M931 359.9L931 353.9M932.7 359.9L932.7 353.9M934.4 359.9L934.4 353.9M936.1 359.9L936.1 353.9M937.8 360L937.8 353.9M939.5 360L939.5 353.9M941.2 360L941.2 353.9M942.9 360L942.9 353.9M944.6 360L944.6 353.9M946.3 360L946.3 353.9M948 360L948 353.9M949.7 360L949.7 353.9M951.4 360L951.4 353.9M953.1 360L953.1 353.9M954.8 360L954.8 354M956.5 360L956.5 354M958.2 360L958.2 354M959.9 360L959.9 354M961.7 360L961.5 354M963.4 360L963.2 353.9M965.1 360L964.9 353.9M966.8 360L966.6 353.9M968.5 360L968.3 353.9M970.3 359.9L969.9 353.8M972 359.9L971.6 353.8M973.7 359.8L973.3 353.7M975.6 359.7L974.7 353.6M977.3 359.5L976.4 353.4M979 359.3L978.1 353.2M980.9 359L979.5 353M982.7 358.6L981.2 352.6M984.3 358.2L982.8 352.2M985.7 357.9L984.7 351.7M987.3 357.5L986.4 351.3M989 357.3L988.1 351.1" stroke="#6e4830" stroke-width="1.2" fill="none"/>
<path d="M583.4 253.7 L587.4 255 L591.4 256.3 L595.4 257.6 L599.4 258.8 L603.3 260 L607.3 261.3 L611.2 262.5 L615.2 263.8 L619.1 265.1 L623.1 266.5 L627.1 267.9 L631.1 269.4 L635.2 271 L639.3 272.7 L642.9 274.3 L646.5 275.9 L650.1 277.6 L653.7 279.4 L657.4 281.3 L661 283.1 L664.7 285.1 L668.4 287 L672.2 289 L675.9 291 L679.7 293 L683.5 295 L687.4 297 L691.3 298.9 L695.2 300.9 L699.2 302.7 L702.7 304.4 L706.3 306 L709.9 307.7 L713.5 309.4 L717.1 311.1 L720.8 312.7 L724.5 314.4 L728.2 316.1 L731.9 317.7 L735.6 319.4 L739.4 321 L743.2 322.6 L747 324.2 L750.8 325.8 L754.7 327.4 L758.5 328.9 L762.4 330.4 L766.3 331.9 L769.9 333.2 L773.5 334.6 L776.9 336 L780.4 337.4 L783.8 338.8 L787.2 340.2 L790.7 341.6 L794.2 343 L797.7 344.3 L801.3 345.6 L805 346.9 L808.8 348.1 L812.7 349.3 L816.8 350.5 L821 351.5 L825.3 352.5 L829.9 353.4 L834.7 354.3 L839.7 355.1 L843.1 355.5 L846.6 355.9 L850.3 356.3 L854.2 356.6 L858.2 356.9 L862.3 357.2 L866.5 357.5 L870.9 357.7 L875.3 357.9 L879.8 358.1 L884.3 358.3 L888.9 358.4 L893.5 358.5 L898.1 358.7 L902.6 358.7 L907.2 358.8 L911.7 358.9 L916.2 358.9 L920.6 359 L924.9 359 L929.1 359.1 L933.2 359.1 L937.2 359.1 L941 359.1 L944.7 359.1 L948.1 359.1 L951.4 359.1 L954.5 359.1 L957.4 359.1 L960 359.2 L969.1 359.1 L975.3 358.8 L979.5 358.4 L982.4 357.8 L984.6 357.2 L986.9 356.7 L990.3 356.2M584.6 250.3 L588.5 251.7 L592.5 252.9 L596.5 254.2 L600.4 255.4 L604.4 256.6 L608.3 257.9 L612.3 259.1 L616.3 260.4 L620.3 261.7 L624.3 263.1 L628.4 264.5 L632.4 266 L636.6 267.6 L640.7 269.3 L644.4 270.9 L648 272.6 L651.7 274.3 L655.4 276.1 L659.1 277.9 L662.8 279.8 L666.5 281.8 L670.2 283.7 L673.9 285.7 L677.7 287.7 L681.5 289.7 L685.3 291.6 L689.1 293.6 L693 295.5 L696.9 297.4 L700.8 299.3 L704.3 300.9 L707.9 302.6 L711.5 304.2 L715.1 305.9 L718.7 307.5 L722.4 309.2 L726.1 310.9 L729.8 312.5 L733.5 314.1 L737.2 315.8 L741 317.4 L744.7 319 L748.5 320.6 L752.3 322.1 L756.1 323.7 L760 325.2 L763.8 326.7 L767.7 328.1 L771.4 329.5 L774.9 330.9 L778.4 332.3 L781.9 333.7 L785.3 335.1 L788.8 336.5 L792.2 337.8 L795.6 339.2 L799.1 340.5 L802.7 341.8 L806.3 343 L810 344.2 L813.8 345.4 L817.8 346.5 L821.9 347.5 L826.2 348.5 L830.7 349.4 L835.4 350.2 L840.3 350.9 L843.6 351.4 L847 351.8 L850.7 352.1 L854.5 352.5 L858.5 352.8 L862.6 353 L866.8 353.3 L871.1 353.5 L875.5 353.7 L879.9 353.9 L884.4 354 L889 354.2 L893.6 354.3 L898.2 354.4 L902.7 354.5 L907.3 354.6 L911.8 354.6 L916.2 354.7 L920.6 354.7 L924.9 354.8 L929.1 354.8 L933.2 354.8 L937.2 354.8 L941 354.8 L944.7 354.8 L948.1 354.8 L951.4 354.8 L954.5 354.8 L957.4 354.8 L960 354.8 L969 354.8 L975 354.5 L978.8 354 L981.4 353.5 L983.5 352.9 L986.1 352.3 L989.7 351.8" stroke="#5e3e28" stroke-width="0.9" fill="none"/>
<path d="M583.4 253.7 L587.4 255 L591.4 256.3 L595.4 257.6 L599.4 258.8 L603.3 260 L607.3 261.3 L611.2 262.5 L615.2 263.8 L619.1 265.1 L623.1 266.5 L627.1 267.9 L631.1 269.4 L635.2 271 L639.3 272.7 L642.9 274.3 L646.5 275.9 L650.1 277.6 L653.7 279.4 L657.4 281.3 L661 283.1 L664.7 285.1 L668.4 287 L672.2 289 L675.9 291 L679.7 293 L683.5 295 L687.4 297 L691.3 298.9 L695.2 300.9 L699.2 302.7 L702.7 304.4 L706.3 306 L709.9 307.7 L713.5 309.4 L717.1 311.1 L720.8 312.7 L724.5 314.4 L728.2 316.1 L731.9 317.7 L735.6 319.4 L739.4 321 L743.2 322.6 L747 324.2 L750.8 325.8 L754.7 327.4 L758.5 328.9 L762.4 330.4 L766.3 331.9 L769.9 333.2 L773.5 334.6 L776.9 336 L780.4 337.4 L783.8 338.8 L787.2 340.2 L790.7 341.6 L794.2 343 L797.7 344.3 L801.3 345.6 L805 346.9 L808.8 348.1 L812.7 349.3 L816.8 350.5 L821 351.5 L825.3 352.5 L829.9 353.4 L834.7 354.3 L839.7 355.1 L843.1 355.5 L846.6 355.9 L850.3 356.3 L854.2 356.6 L858.2 356.9 L862.3 357.2 L866.5 357.5 L870.9 357.7 L875.3 357.9 L879.8 358.1 L884.3 358.3 L888.9 358.4 L893.5 358.5 L898.1 358.7 L902.6 358.7 L907.2 358.8 L911.7 358.9 L916.2 358.9 L920.6 359 L924.9 359 L929.1 359.1 L933.2 359.1 L937.2 359.1 L941 359.1 L944.7 359.1 L948.1 359.1 L951.4 359.1 L954.5 359.1 L957.4 359.1 L960 359.2 L969.1 359.1 L975.3 358.8 L979.5 358.4 L982.4 357.8 L984.6 357.2 L986.9 356.7 L990.3 356.2" stroke="#f2ece6" stroke-width="0.7" fill="none" stroke-dasharray="0.8 1.2" opacity="0.7"/>
<path d="M584.6 250.3 L588.5 251.7 L592.5 252.9 L596.5 254.2 L600.4 255.4 L604.4 256.6 L608.3 257.9 L612.3 259.1 L616.3 260.4 L620.3 261.7 L624.3 263.1 L628.4 264.5 L632.4 266 L636.6 267.6 L640.7 269.3 L644.4 270.9 L648 272.6 L651.7 274.3 L655.4 276.1 L659.1 277.9 L662.8 279.8 L666.5 281.8 L670.2 283.7 L673.9 285.7 L677.7 287.7 L681.5 289.7 L685.3 291.6 L689.1 293.6 L693 295.5 L696.9 297.4 L700.8 299.3 L704.3 300.9 L707.9 302.6 L711.5 304.2 L715.1 305.9 L718.7 307.5 L722.4 309.2 L726.1 310.9 L729.8 312.5 L733.5 314.1 L737.2 315.8 L741 317.4 L744.7 319 L748.5 320.6 L752.3 322.1 L756.1 323.7 L760 325.2 L763.8 326.7 L767.7 328.1 L771.4 329.5 L774.9 330.9 L778.4 332.3 L781.9 333.7 L785.3 335.1 L788.8 336.5 L792.2 337.8 L795.6 339.2 L799.1 340.5 L802.7 341.8 L806.3 343 L810 344.2 L813.8 345.4 L817.8 346.5 L821.9 347.5 L826.2 348.5 L830.7 349.4 L835.4 350.2 L840.3 350.9 L843.6 351.4 L847 351.8 L850.7 352.1 L854.5 352.5 L858.5 352.8 L862.6 353 L866.8 353.3 L871.1 353.5 L875.5 353.7 L879.9 353.9 L884.4 354 L889 354.2 L893.6 354.3 L898.2 354.4 L902.7 354.5 L907.3 354.6 L911.8 354.6 L916.2 354.7 L920.6 354.7 L924.9 354.8 L929.1 354.8 L933.2 354.8 L937.2 354.8 L941 354.8 L944.7 354.8 L948.1 354.8 L951.4 354.8 L954.5 354.8 L957.4 354.8 L960 354.8 L969 354.8 L975 354.5 L978.8 354 L981.4 353.5 L983.5 352.9 L986.1 352.3 L989.7 351.8" stroke="#f2ece6" stroke-width="0.7" fill="none" stroke-dasharray="0.8 1.2" opacity="0.7"/>
<path d="M176.7 282.1 L172.7 283.3 L168.8 284.4 L164.8 285.4 L160.7 286.5 L156.5 287.7 L152.2 289.1 L147.8 290.7 L143.9 292.5 L139.8 294.5 L135.8 296.6 L131.8 298.9 L128 301.2 L124.3 303.4 L120.9 305.5 L117.7 307.5 L113.5 310 L110.1 312.2 L107.3 314.2 L104.1 316.4 L99.7 319.1 L97 320.6 L93.7 322.2 L90.1 323.9 L86.2 325.7 L82.2 327.5 L78 329.4 L73.8 331.3 L69.7 333.3 L65.6 335.4 L61.8 337.5 L57.8 339.9 L53.9 342.4 L50.2 345 L46.6 347.7 L43 350.4 L39.7 353.2 L36.4 355.9 L33.3 358.6 L30.3 361.3 L26.6 364.8 L23.1 368.4 L19.7 372.1 L16.6 375.7 L13.6 379.3 L11 382.9 L8.4 386.6 L5.5 392.5 L3.7 398.4 L3 404 L3 409.7 L3.6 415.9 L5 422.1 L7 428 L9.6 433.4 L12.9 438.4 L16.6 442.8 L20.7 446.8 L25.2 450.3 L29.2 453 L33.3 455.4 L37.6 457.6 L42.1 459.7 L46.5 461.6 L49.6 462.9 L52.4 464.3 L56 465.7 L60.6 467 L66.3 468.2 L73.8 469.5 L76.9 469.9 L80.3 470.4 L84 471 L87.9 471.5 L92.1 472.1 L96.5 472.6 L101 473.2 L105.7 473.8 L110.4 474.3 L115.1 474.8 L119.9 475.3 L124.6 475.8 L129.2 476.3 L133.7 476.6 L138.1 477 L142.2 477.3 L146.1 477.5 L149.8 477.6 L155.1 477.8 L160 477.8 L164.6 477.8 L168.8 477.6 L172.8 477.4 L176.7 477.1 L180.6 476.7 L184.5 476.2 L188.5 475.7 L192.9 475.2 L197.6 474.7 L196.4 463.5 L191.6 464 L187.2 464.5 L183.1 464.9 L179.3 465.4 L175.6 465.9 L171.9 466.2 L168.2 466.6 L164.2 466.8 L160 466.9 L155.4 466.8 L150.2 466.6 L146.8 466.3 L143 466 L139 465.7 L134.8 465.2 L130.4 464.8 L125.8 464.3 L121.2 463.7 L116.5 463.1 L111.9 462.5 L107.2 461.9 L102.6 461.3 L98.2 460.7 L93.9 460 L89.7 459.4 L85.9 458.8 L82.3 458.2 L79 457.6 L76.2 457 L69.4 455.4 L64.9 453.7 L62 452.1 L59.6 450.5 L56.9 448.8 L53.5 447.1 L49.3 445 L45.6 442.9 L42.3 440.7 L39.3 438.4 L36.8 436 L33.9 432.9 L31.6 429.8 L29.8 426.7 L28.4 423.4 L27.1 419.9 L26 416.1 L25.3 412.4 L25 408.6 L25 405.2 L25.3 402.4 L26 399.7 L27.6 396.1 L28.7 393.9 L30.5 391.1 L32.6 388 L35 384.7 L37.7 381.4 L40.6 378 L43.7 374.6 L46.2 372 L48.8 369.2 L51.6 366.5 L54.5 363.7 L57.5 361 L60.5 358.3 L63.7 355.6 L67 353.1 L70.2 350.6 L73.3 348.5 L76.7 346.4 L80.4 344.3 L84.3 342.2 L88.2 340.1 L92.1 338.1 L96 336.1 L99.6 334.2 L103.1 332.4 L106.3 330.5 L111.1 327.5 L114.8 325 L117.7 322.7 L120.5 320.4 L124.3 317.8 L127.3 315.8 L130.7 313.6 L134.2 311.2 L137.9 308.8 L141.6 306.5 L145.3 304.3 L148.8 302.2 L152.2 300.4 L155.9 298.7 L159.7 297.2 L163.5 295.8 L167.3 294.6 L171.3 293.4 L175.3 292.2 L179.3 290.9 Z" fill="url(#bal)"/>
<path d="M420.7 449.1 L424.1 448.6 L427.8 448.1 L431.6 447.6 L435.6 447 L439.6 446.5 L443.8 445.8 L448 445.2 L452.2 444.6 L456.5 444 L460.7 443.4 L464.9 442.9 L469 442.4 L472.9 441.9 L476.8 441.4 L480.5 441 L485 440.6 L489.4 440.3 L493.8 439.9 L498.1 439.7 L502.3 439.4 L506.5 439.2 L510.5 439 L514.5 438.9 L518.5 438.8 L522.4 438.8 L526.2 438.8 L529.9 438.9 L534.2 439.1 L538.3 439.4 L542.3 439.8 L546.2 440.2 L550 440.7 L553.8 441.2 L557.6 441.7 L561.5 442.2 L565.5 442.7 L569.4 443.1 L570.6 432.8 L566.6 432.3 L562.8 431.8 L559 431.3 L555.1 430.8 L551.3 430.4 L547.3 429.9 L543.2 429.5 L539 429.2 L534.6 429 L530.1 428.9 L526.3 428.9 L522.4 428.9 L518.4 428.9 L514.3 428.9 L510.2 429 L506 429.1 L501.8 429.3 L497.5 429.5 L493.1 429.8 L488.6 430.1 L484.1 430.4 L479.5 430.8 L475.7 431.1 L471.8 431.5 L467.7 432 L463.5 432.5 L459.3 433 L455 433.6 L450.8 434.2 L446.5 434.8 L442.3 435.4 L438.1 436 L434.1 436.6 L430.1 437.2 L426.3 437.7 L422.7 438.3 L419.3 438.7 Z" fill="url(#bal)"/>
<path d="M177.1 282L178.9 288M175.5 282.5L177.3 288.5M173.8 282.9L175.6 289.1M172.2 283.4L173.9 289.6M170.5 283.8L172.2 290.1M168.8 284.3L170.6 290.6M167.1 284.8L168.9 291.1M165.4 285.2L167.2 291.6M163.6 285.7L165.5 292M161.9 286.2L163.8 292.6M160 286.7L162.2 293.1M158.3 287.2L160.4 293.7M156.4 287.8L158.8 294.2M154.6 288.5L157.1 294.8M152.9 289.1L155.4 295.5M151 289.8L153.8 296.2M149.2 290.5L152.1 296.9M147.3 291.4L150.5 297.7M145.6 292.2L148.8 298.5M143.8 293.1L147.2 299.3M142.1 294L145.5 300.3M140.3 295L143.9 301.2M138.6 295.9L142.2 302.2M136.8 296.9L140.6 303.1M135.1 297.9L138.9 304.1M133.4 298.9L137.2 305.2M131.7 300L135.6 306.2M129.9 301L133.9 307.3M128.2 302.1L132.2 308.4M126.5 303.1L130.5 309.5M124.8 304.2L128.8 310.6M123 305.3L127.1 311.7M121.2 306.4L125.4 312.8M119.5 307.4L123.6 313.9M117.6 308.6L122 315M115.8 309.7L120.2 316.2M114 310.9L118.6 317.3M112.2 312.2L116.9 318.6M110.5 313.4L115.1 319.9M108.9 314.5L113.2 321.4M107 315.7L111.4 322.6M105.3 316.8L109.4 324M103.4 317.9L107.5 325.2M101.4 319.1L105.6 326.3M99.5 320L103.4 327.6M97.6 321L101.3 328.7M95.5 322L99.3 329.8M93.4 323L97.2 330.9M91.2 324L95 332M89.1 325L92.9 333M86.9 326L90.7 334.1M84.6 327L88.5 335.2M82.4 328L86.4 336.2M80.1 329.1L84.2 337.4M77.8 330.2L82 338.5M75.5 331.3L79.8 339.6M73.1 332.5L77.6 340.8M70.7 333.7L75.5 341.9M68.4 334.9L73.3 343.2M66 336.3L71.2 344.5M63.7 337.7L69 345.9M61.3 339.2L67 347.3M59 340.7L64.9 348.8M56.8 342.3L62.7 350.4M54.4 344L60.7 352M52.1 345.7L58.6 353.6M49.9 347.4L56.5 355.4M47.6 349.2L54.4 357.1M45.4 351L52.3 359M43.1 352.9L50.2 360.9M40.8 354.9L48.2 362.8M38.6 356.9L46.2 364.7M36.4 358.9L44.1 366.8M34.1 361L42 368.9M31.9 363.2L40 370.9M29.7 365.4L37.9 373.1M27.5 367.8L36 375.3M25.3 370.2L34.1 377.5M23.3 372.5L32.1 379.8M21.1 375.1L30.3 382.1M19 377.8L28.6 384.4M17 380.5L26.9 386.7M15.2 383.2L25.2 389.4M13.2 386.4L23.9 391.7M11.5 389.9L22.8 393.9M10.2 392.9L21.5 396.9M9.1 396.9L20.8 399.1M8.4 400.8L20.3 401.5M8.1 404L20 404.7M8.1 407.9L19.9 407.3M8.3 411.8L20.1 409.9M8.8 415.6L20.3 412.4M9.5 418.8L21 415.5M10.7 422.5L21.7 418M12 426.1L22.5 420.5M13.4 429L23.9 423.4M15.4 432.4L25.1 425.7M17.6 435.5L26.4 427.9M19.6 438L28.3 430.4M22.1 440.6L30 432.4M24.7 443L31.9 434.3M27.1 445L34.2 436.3M29.9 447.1L36.2 438M32.7 449L38.4 439.5M35.5 450.6L40.6 441M38 452.1L43.2 442.6M40.8 453.5L45.6 443.9M43.5 454.8L48.1 445.2M46.1 456L50.7 446.5M48.6 457.1L53.4 447.9M51.1 458.3L55.9 449.2M53.6 459.6L58.3 450.7M56.4 460.8L60.4 451.8M59.4 461.9L62.4 452.7M62.2 462.9L64.4 453.6M64.7 463.5L66.9 454.4M67.4 464.2L69.2 455M69.9 464.7L71.7 455.6M72.3 465.1L74.1 456.1M74.9 465.6L76.4 456.6M77.4 466L78.8 457.1M79.8 466.4L81.2 457.5M82.3 466.8L83.6 457.9M84.7 467.1L86 458.3M87.1 467.5L88.4 458.6M89.5 467.8L90.8 459M91.9 468.2L93.2 459.4M94.4 468.5L95.6 459.7M96.8 468.8L97.9 460.1M99.2 469.2L100.3 460.4M101.6 469.5L102.7 460.7M103.9 469.8L105.1 461M106.3 470.1L107.4 461.4M108.7 470.4L109.8 461.7M111.1 470.6L112.1 462M113.4 470.9L114.5 462.3M115.8 471.2L116.8 462.6M118.2 471.5L119.1 462.8M120.5 471.7L121.5 463.1M122.9 472L123.8 463.4M125.2 472.2L126.1 463.6M127.6 472.5L128.4 463.9M129.9 472.7L130.7 464.1M132.2 472.9L133 464.4M134.6 473.1L135.3 464.6M136.9 473.3L137.6 464.8M139.2 473.5L139.9 465M141.5 473.7L142.2 465.2M143.9 473.9L144.4 465.4M146.3 474L146.6 465.6M148.6 474.1L148.9 465.7M150.9 474.2L151.1 465.8M153.2 474.3L153.4 465.9M155.6 474.4L155.6 466M157.9 474.4L157.9 466M160.3 474.4L160 466.1M162.5 474.4L162.3 466M164.9 474.4L164.5 466M167.2 474.3L166.7 465.9M169.6 474.1L168.9 465.8M171.9 474L171.2 465.6M174.2 473.8L173.4 465.4M176.5 473.6L175.6 465.2M178.8 473.3L177.9 465M181.1 473.1L180.1 464.7M183.4 472.8L182.4 464.4M185.6 472.5L184.6 464.2M187.9 472.2L186.9 463.9M190.1 472L189.2 463.6M192.4 471.7L191.5 463.4M194.6 471.5L193.8 463.1M196.9 471.2L196 462.9M199.2 471L198.3 462.7M201.5 470.7L200.5 462.4M203.7 470.5L202.8 462.2M206 470.2L205 462M208.2 469.9L207.2 461.7M210.4 469.7L209.5 461.5M212.7 469.4L211.7 461.2M214.9 469.1L213.9 461M217.1 468.8L216.1 460.7M219.3 468.5L218.3 460.5M221.5 468.3L220.5 460.2M223.7 468L222.7 459.9M225.9 467.7L224.8 459.7M228.1 467.4L227 459.4M230.2 467.1L229.2 459.1M232.4 466.8L231.3 458.9M234.5 466.5L233.5 458.6M236.7 466.2L235.6 458.3M238.8 465.9L237.8 458M241 465.6L239.9 457.8M243.1 465.3L242 457.5M245.2 465L244.2 457.2M247.3 464.7L246.3 456.9M249.5 464.4L248.4 456.7M251.6 464.1L250.5 456.4M253.7 463.8L252.6 456.1M255.7 463.5L254.7 455.8M257.8 463.2L256.8 455.5M259.9 462.9L258.8 455.3M262 462.6L260.9 455M264.1 462.3L263 454.7M266.2 462L265 454.4M268.2 461.7L267.1 454.1M270.3 461.4L269.1 453.8M272.4 461L271.2 453.4M274.5 460.7L273.2 453.1M276.5 460.4L275.3 452.8M278.6 460L277.3 452.4M280.7 459.7L279.4 452.1M282.7 459.3L281.5 451.7M284.8 459L283.5 451.4M286.8 458.6L285.6 451.1M288.9 458.3L287.7 450.7M291 458L289.7 450.4M293 457.6L291.8 450M295.1 457.3L293.9 449.7M297.1 457L295.9 449.4M299.2 456.6L298 449M301.2 456.3L300.1 448.7M303.3 456L302.2 448.4M305.3 455.7L304.3 448.1M307.4 455.4L306.3 447.8M309.4 455.1L308.4 447.5M311.5 454.9L310.5 447.2M313.5 454.6L312.6 447M315.6 454.4L314.7 446.7M317.6 454.1L316.8 446.5M319.7 453.9L318.9 446.2M321.7 453.7L321.1 446M323.8 453.5L323.1 445.8M325.8 453.4L325.3 445.7M327.9 453.2L327.4 445.5M329.9 453.1L329.5 445.4M332 452.9L331.6 445.2M334.1 452.8L333.7 445.1M336.2 452.7L335.8 445M338.2 452.6L337.9 444.9M340.3 452.5L340 444.8M342.4 452.4L342.1 444.7M344.5 452.3L344.2 444.6M346.5 452.3L346.3 444.6M348.6 452.2L348.4 444.5M350.7 452.1L350.5 444.4M352.8 452.1L352.6 444.4M354.9 452L354.7 444.3M357 451.9L356.7 444.2M359.1 451.9L358.8 444.2M361.2 451.8L360.9 444.1M363.3 451.7L363 444M365.4 451.6L365.1 443.9M367.5 451.6L367.1 443.9M369.6 451.5L369.2 443.8M371.7 451.4L371.3 443.7M373.8 451.3L373.3 443.6M375.9 451.1L375.4 443.5M378 451L377.4 443.3M380.1 450.9L379.5 443.2M382.3 450.7L381.6 443M384.3 450.5L383.6 442.8M386.5 450.3L385.7 442.6M388.6 450.1L387.7 442.4M390.7 449.9L389.8 442.2M392.8 449.6L391.9 442M394.9 449.4L393.9 441.7M396.9 449.1L396 441.5M399.1 448.8L398 441.2M401.1 448.5L400 440.9M403.2 448.2L402.1 440.6M405.3 447.9L404.2 440.3M407.4 447.6L406.3 440M409.4 447.3L408.3 439.7M411.5 447.1L410.4 439.4M413.5 446.8L412.5 439.1M415.6 446.5L414.6 438.8M417.7 446.2L416.6 438.6M419.7 445.9L418.7 438.3M421.8 445.6L420.8 438M423.9 445.4L422.8 437.7M426 445.1L424.9 437.5M428.1 444.8L427 437.2M430.1 444.5L429 436.9M432.2 444.2L431.1 436.6M434.3 443.9L433.2 436.3M436.3 443.6L435.2 436M438.4 443.3L437.3 435.7M440.5 443L439.4 435.4M442.5 442.7L441.4 435.1M444.6 442.4L443.5 434.8M446.7 442.1L445.6 434.5M448.7 441.8L447.6 434.2M450.8 441.5L449.7 433.9M452.9 441.2L451.8 433.6M454.9 440.9L453.9 433.3M457 440.6L456 433M459.1 440.3L458 432.7M461.1 440.1L460.1 432.4M463.2 439.8L462.2 432.2M465.2 439.5L464.3 431.9M467.3 439.3L466.4 431.6M469.3 439L468.5 431.4M471.4 438.8L470.5 431.1M473.4 438.5L472.7 430.9M475.5 438.3L474.7 430.7M477.6 438.1L476.9 430.4M479.6 437.9L478.9 430.2M481.7 437.7L481.1 430M483.8 437.5L483.1 429.9M485.8 437.4L485.3 429.7M487.9 437.2L487.3 429.5M490 437L489.4 429.4M492 436.9L491.5 429.2M494.1 436.8L493.7 429.1M496.2 436.6L495.7 428.9M498.2 436.5L497.9 428.8M500.3 436.4L499.9 428.7M502.4 436.3L502.1 428.6M504.5 436.2L504.2 428.5M506.5 436.1L506.3 428.4M508.6 436L508.4 428.3M510.7 435.9L510.5 428.3M512.7 435.9L512.6 428.2M514.8 435.8L514.7 428.1M516.9 435.8L516.8 428.1M518.9 435.8L518.9 428.1M521 435.8L521 428.1M523.1 435.8L523.2 428.1M525.2 435.8L525.2 428.1M527.2 435.8L527.4 428.1M529.3 435.8L529.5 428.1M531.3 435.9L531.7 428.2M533.4 436L533.7 428.3M535.4 436.1L535.9 428.4M537.5 436.2L538 428.5M539.5 436.3L540.2 428.7M541.5 436.5L542.3 428.9M543.6 436.7L544.4 429.1M545.6 436.9L546.5 429.3M547.7 437.2L548.6 429.5M549.7 437.4L550.7 429.8M551.8 437.7L552.8 430M553.9 437.9L554.8 430.3M555.9 438.2L556.9 430.5M558 438.5L559 430.8M560.1 438.7L561.1 431.1M562.2 439L563.1 431.3M564.3 439.2L565.2 431.6M566.4 439.5L567.2 431.8M568.5 439.7L569.3 432.1" stroke="#6e4830" stroke-width="1.2" fill="none"/>
<path d="M177.3 282.8 L173.4 284 L169.4 285.1 L165.4 286.2 L161.4 287.3 L157.3 288.5 L153.2 290 L149 291.7 L145.2 293.5 L141.3 295.6 L137.4 297.8 L133.5 300.1 L129.7 302.4 L126.1 304.6 L122.7 306.8 L119.5 308.7 L115.4 311.3 L112.2 313.5 L109.4 315.6 L106.1 317.7 L101.5 320.4 L98.6 321.9 L95.3 323.5 L91.7 325.2 L87.8 327 L83.8 328.8 L79.7 330.7 L75.6 332.7 L71.6 334.8 L67.7 336.9 L64.1 339.1 L60.3 341.5 L56.7 344.1 L53.1 346.7 L49.7 349.4 L46.3 352.2 L43.1 355 L40 357.7 L37 360.5 L34.2 363.2 L30.7 366.7 L27.4 370.3 L24.2 373.9 L21.3 377.5 L18.6 381.1 L16.3 384.6 L14.2 388.1 L11.7 393.7 L10.3 399.1 L9.8 404.2 L9.8 409.2 L10.3 414.3 L11.4 419.5 L13.1 424.4 L15.3 429 L17.9 433.2 L21 437.1 L24.5 440.7 L28.5 444.1 L32 446.7 L35.8 449 L39.8 451.3 L44 453.4 L48.4 455.4 L51.5 456.9 L54.4 458.3 L57.6 459.8 L61.7 461.3 L67.1 462.8 L74.4 464.2 L77.4 464.7 L80.8 465.2 L84.4 465.8 L88.4 466.4 L92.5 467 L96.9 467.6 L101.4 468.2 L106 468.8 L110.7 469.4 L115.5 469.9 L120.2 470.4 L124.9 471 L129.5 471.4 L134 471.8 L138.3 472.2 L142.4 472.5 L146.3 472.8 L149.9 473 L155.2 473.2 L160 473.3 L164.5 473.2 L168.7 473 L172.6 472.7 L176.4 472.4 L180.2 471.9 L184.1 471.5 L188.2 471 L192.6 470.5 L197.3 470 L201.1 469.6 L205 469.1 L209 468.7 L213.1 468.2 L217.3 467.6 L221.6 467.1 L225.9 466.5 L230.2 465.9 L234.6 465.3 L239 464.7 L243.4 464.1 L247.7 463.5 L252 462.9 L256.2 462.3 L260.4 461.7 L264.5 461.1 L268.6 460.5 L272.6 459.9 L276.7 459.2 L280.7 458.6 L284.7 457.9 L288.7 457.2 L292.6 456.6 L296.6 455.9 L300.5 455.3 L304.5 454.7 L308.4 454.2 L312.4 453.6 L316.3 453.2 L320.3 452.7 L324.3 452.4 L328.3 452.1 L332.5 451.8 L336.7 451.6 L340.9 451.4 L345.1 451.2 L349.3 451.1 L353.4 450.9 L357.5 450.8 L361.6 450.7 L365.5 450.5 L369.4 450.4 L373.1 450.2 L376.8 450 L380.2 449.7 L385 449.3 L389.2 448.9 L393.2 448.5 L396.8 448 L400.4 447.5 L403.9 447 L407.6 446.5 L411.4 445.9 L415.7 445.4 L420.4 444.7 L423.8 444.3 L427.5 443.8 L431.3 443.2 L435.2 442.6 L439.3 442.1 L443.4 441.4 L447.6 440.8 L451.9 440.2 L456.1 439.6 L460.4 439.1 L464.5 438.5 L468.7 438 L472.7 437.5 L476.5 437.1 L480.3 436.7 L484.8 436.3 L489.2 436 L493.6 435.7 L497.9 435.4 L502.2 435.2 L506.4 435 L510.5 434.9 L514.5 434.7 L518.5 434.7 L522.4 434.7 L526.2 434.7 L529.9 434.7 L534.3 434.9 L538.4 435.2 L542.5 435.5 L546.4 435.9 L550.3 436.4 L554.1 436.8 L558 437.3 L561.8 437.8 L565.7 438.3 L569.7 438.7M178.7 287.2 L174.7 288.4 L170.7 289.6 L166.7 290.7 L162.8 291.9 L158.9 293.1 L154.9 294.6 L151 296.3 L147.5 298 L143.8 300 L140 302.2 L136.2 304.6 L132.5 306.9 L128.9 309.2 L125.6 311.4 L122.5 313.3 L118.6 315.9 L115.6 318.1 L112.7 320.3 L109.2 322.7 L104.5 325.6 L101.4 327.3 L98.1 329.1 L94.4 330.9 L90.6 332.7 L86.6 334.7 L82.6 336.7 L78.6 338.7 L74.8 340.8 L71.2 342.8 L67.9 344.9 L64.4 347.4 L61 349.9 L57.6 352.5 L54.4 355.2 L51.2 357.9 L48.2 360.7 L45.3 363.4 L42.5 366.1 L39.8 368.8 L36.6 372.2 L33.5 375.7 L30.5 379.2 L27.9 382.6 L25.5 385.9 L23.4 389.1 L21.8 391.9 L19.7 396.5 L18.7 400.6 L18.3 404.7 L18.2 408.8 L18.6 413 L19.6 417.2 L21 421.2 L22.7 425 L24.8 428.5 L27.2 431.7 L30.1 434.9 L33.5 437.9 L36.5 440.2 L39.8 442.4 L43.5 444.5 L47.4 446.6 L51.6 448.6 L54.9 450.4 L57.7 452 L60.4 453.4 L63.8 454.8 L68.6 456.3 L75.6 457.8 L78.5 458.3 L81.8 458.9 L85.4 459.5 L89.3 460.1 L93.4 460.7 L97.8 461.3 L102.2 461.9 L106.8 462.5 L111.5 463.1 L116.2 463.7 L120.9 464.3 L125.6 464.8 L130.1 465.3 L134.5 465.8 L138.8 466.2 L142.9 466.5 L146.6 466.8 L150.1 467 L155.3 467.2 L160 467.3 L164.3 467.2 L168.3 467 L172.1 466.7 L175.8 466.4 L179.6 466 L183.4 465.5 L187.5 465 L191.9 464.5 L196.7 464 L200.4 463.6 L204.3 463.2 L208.3 462.8 L212.4 462.3 L216.6 461.8 L220.8 461.3 L225.1 460.8 L229.5 460.2 L233.9 459.7 L238.3 459.1 L242.6 458.5 L247 458 L251.2 457.4 L255.5 456.8 L259.6 456.3 L263.7 455.7 L267.7 455.1 L271.8 454.5 L275.8 453.8 L279.8 453.1 L283.8 452.5 L287.7 451.8 L291.7 451.1 L295.7 450.5 L299.7 449.9 L303.7 449.3 L307.7 448.7 L311.7 448.2 L315.7 447.7 L319.7 447.3 L323.8 446.9 L328 446.6 L332.2 446.3 L336.4 446.1 L340.6 445.9 L344.9 445.7 L349.1 445.6 L353.2 445.4 L357.4 445.3 L361.4 445.2 L365.3 445 L369.2 444.9 L372.9 444.7 L376.4 444.5 L379.8 444.3 L384.5 443.9 L388.7 443.4 L392.5 443 L396.1 442.6 L399.6 442.1 L403.1 441.6 L406.8 441.1 L410.7 440.5 L414.9 439.9 L419.6 439.3 L423.1 438.8 L426.7 438.3 L430.5 437.8 L434.4 437.2 L438.5 436.6 L442.6 436 L446.9 435.4 L451.1 434.8 L455.4 434.2 L459.6 433.6 L463.8 433.1 L468 432.5 L472 432.1 L476 431.6 L479.7 431.3 L484.3 430.9 L488.8 430.5 L493.3 430.2 L497.6 429.9 L501.9 429.7 L506.1 429.5 L510.3 429.4 L514.4 429.3 L518.4 429.2 L522.4 429.2 L526.2 429.2 L530.1 429.3 L534.5 429.4 L538.8 429.7 L543 430 L547 430.4 L551 430.9 L554.8 431.4 L558.7 431.9 L562.5 432.4 L566.4 432.8 L570.3 433.3" stroke="#5e3e28" stroke-width="0.9" fill="none"/>
<path d="M177.3 282.8 L173.4 284 L169.4 285.1 L165.4 286.2 L161.4 287.3 L157.3 288.5 L153.2 290 L149 291.7 L145.2 293.5 L141.3 295.6 L137.4 297.8 L133.5 300.1 L129.7 302.4 L126.1 304.6 L122.7 306.8 L119.5 308.7 L115.4 311.3 L112.2 313.5 L109.4 315.6 L106.1 317.7 L101.5 320.4 L98.6 321.9 L95.3 323.5 L91.7 325.2 L87.8 327 L83.8 328.8 L79.7 330.7 L75.6 332.7 L71.6 334.8 L67.7 336.9 L64.1 339.1 L60.3 341.5 L56.7 344.1 L53.1 346.7 L49.7 349.4 L46.3 352.2 L43.1 355 L40 357.7 L37 360.5 L34.2 363.2 L30.7 366.7 L27.4 370.3 L24.2 373.9 L21.3 377.5 L18.6 381.1 L16.3 384.6 L14.2 388.1 L11.7 393.7 L10.3 399.1 L9.8 404.2 L9.8 409.2 L10.3 414.3 L11.4 419.5 L13.1 424.4 L15.3 429 L17.9 433.2 L21 437.1 L24.5 440.7 L28.5 444.1 L32 446.7 L35.8 449 L39.8 451.3 L44 453.4 L48.4 455.4 L51.5 456.9 L54.4 458.3 L57.6 459.8 L61.7 461.3 L67.1 462.8 L74.4 464.2 L77.4 464.7 L80.8 465.2 L84.4 465.8 L88.4 466.4 L92.5 467 L96.9 467.6 L101.4 468.2 L106 468.8 L110.7 469.4 L115.5 469.9 L120.2 470.4 L124.9 471 L129.5 471.4 L134 471.8 L138.3 472.2 L142.4 472.5 L146.3 472.8 L149.9 473 L155.2 473.2 L160 473.3 L164.5 473.2 L168.7 473 L172.6 472.7 L176.4 472.4 L180.2 471.9 L184.1 471.5 L188.2 471 L192.6 470.5 L197.3 470 L201.1 469.6 L205 469.1 L209 468.7 L213.1 468.2 L217.3 467.6 L221.6 467.1 L225.9 466.5 L230.2 465.9 L234.6 465.3 L239 464.7 L243.4 464.1 L247.7 463.5 L252 462.9 L256.2 462.3 L260.4 461.7 L264.5 461.1 L268.6 460.5 L272.6 459.9 L276.7 459.2 L280.7 458.6 L284.7 457.9 L288.7 457.2 L292.6 456.6 L296.6 455.9 L300.5 455.3 L304.5 454.7 L308.4 454.2 L312.4 453.6 L316.3 453.2 L320.3 452.7 L324.3 452.4 L328.3 452.1 L332.5 451.8 L336.7 451.6 L340.9 451.4 L345.1 451.2 L349.3 451.1 L353.4 450.9 L357.5 450.8 L361.6 450.7 L365.5 450.5 L369.4 450.4 L373.1 450.2 L376.8 450 L380.2 449.7 L385 449.3 L389.2 448.9 L393.2 448.5 L396.8 448 L400.4 447.5 L403.9 447 L407.6 446.5 L411.4 445.9 L415.7 445.4 L420.4 444.7 L423.8 444.3 L427.5 443.8 L431.3 443.2 L435.2 442.6 L439.3 442.1 L443.4 441.4 L447.6 440.8 L451.9 440.2 L456.1 439.6 L460.4 439.1 L464.5 438.5 L468.7 438 L472.7 437.5 L476.5 437.1 L480.3 436.7 L484.8 436.3 L489.2 436 L493.6 435.7 L497.9 435.4 L502.2 435.2 L506.4 435 L510.5 434.9 L514.5 434.7 L518.5 434.7 L522.4 434.7 L526.2 434.7 L529.9 434.7 L534.3 434.9 L538.4 435.2 L542.5 435.5 L546.4 435.9 L550.3 436.4 L554.1 436.8 L558 437.3 L561.8 437.8 L565.7 438.3 L569.7 438.7" stroke="#f2ece6" stroke-width="0.7" fill="none" stroke-dasharray="0.9 1.4" opacity="0.9"/>
<path d="M178.7 287.2 L174.7 288.4 L170.7 289.6 L166.7 290.7 L162.8 291.9 L158.9 293.1 L154.9 294.6 L151 296.3 L147.5 298 L143.8 300 L140 302.2 L136.2 304.6 L132.5 306.9 L128.9 309.2 L125.6 311.4 L122.5 313.3 L118.6 315.9 L115.6 318.1 L112.7 320.3 L109.2 322.7 L104.5 325.6 L101.4 327.3 L98.1 329.1 L94.4 330.9 L90.6 332.7 L86.6 334.7 L82.6 336.7 L78.6 338.7 L74.8 340.8 L71.2 342.8 L67.9 344.9 L64.4 347.4 L61 349.9 L57.6 352.5 L54.4 355.2 L51.2 357.9 L48.2 360.7 L45.3 363.4 L42.5 366.1 L39.8 368.8 L36.6 372.2 L33.5 375.7 L30.5 379.2 L27.9 382.6 L25.5 385.9 L23.4 389.1 L21.8 391.9 L19.7 396.5 L18.7 400.6 L18.3 404.7 L18.2 408.8 L18.6 413 L19.6 417.2 L21 421.2 L22.7 425 L24.8 428.5 L27.2 431.7 L30.1 434.9 L33.5 437.9 L36.5 440.2 L39.8 442.4 L43.5 444.5 L47.4 446.6 L51.6 448.6 L54.9 450.4 L57.7 452 L60.4 453.4 L63.8 454.8 L68.6 456.3 L75.6 457.8 L78.5 458.3 L81.8 458.9 L85.4 459.5 L89.3 460.1 L93.4 460.7 L97.8 461.3 L102.2 461.9 L106.8 462.5 L111.5 463.1 L116.2 463.7 L120.9 464.3 L125.6 464.8 L130.1 465.3 L134.5 465.8 L138.8 466.2 L142.9 466.5 L146.6 466.8 L150.1 467 L155.3 467.2 L160 467.3 L164.3 467.2 L168.3 467 L172.1 466.7 L175.8 466.4 L179.6 466 L183.4 465.5 L187.5 465 L191.9 464.5 L196.7 464 L200.4 463.6 L204.3 463.2 L208.3 462.8 L212.4 462.3 L216.6 461.8 L220.8 461.3 L225.1 460.8 L229.5 460.2 L233.9 459.7 L238.3 459.1 L242.6 458.5 L247 458 L251.2 457.4 L255.5 456.8 L259.6 456.3 L263.7 455.7 L267.7 455.1 L271.8 454.5 L275.8 453.8 L279.8 453.1 L283.8 452.5 L287.7 451.8 L291.7 451.1 L295.7 450.5 L299.7 449.9 L303.7 449.3 L307.7 448.7 L311.7 448.2 L315.7 447.7 L319.7 447.3 L323.8 446.9 L328 446.6 L332.2 446.3 L336.4 446.1 L340.6 445.9 L344.9 445.7 L349.1 445.6 L353.2 445.4 L357.4 445.3 L361.4 445.2 L365.3 445 L369.2 444.9 L372.9 444.7 L376.4 444.5 L379.8 444.3 L384.5 443.9 L388.7 443.4 L392.5 443 L396.1 442.6 L399.6 442.1 L403.1 441.6 L406.8 441.1 L410.7 440.5 L414.9 439.9 L419.6 439.3 L423.1 438.8 L426.7 438.3 L430.5 437.8 L434.4 437.2 L438.5 436.6 L442.6 436 L446.9 435.4 L451.1 434.8 L455.4 434.2 L459.6 433.6 L463.8 433.1 L468 432.5 L472 432.1 L476 431.6 L479.7 431.3 L484.3 430.9 L488.8 430.5 L493.3 430.2 L497.6 429.9 L501.9 429.7 L506.1 429.5 L510.3 429.4 L514.4 429.3 L518.4 429.2 L522.4 429.2 L526.2 429.2 L530.1 429.3 L534.5 429.4 L538.8 429.7 L543 430 L547 430.4 L551 430.9 L554.8 431.4 L558.7 431.9 L562.5 432.4 L566.4 432.8 L570.3 433.3" stroke="#f2ece6" stroke-width="0.7" fill="none" stroke-dasharray="0.9 1.4" opacity="0.9"/>
<path d="M172 294.8 L168.5 296.9 L165 299 L161.5 301.1 L158 303.2 L154.6 305.3 L151 307.4 L147.5 309.5 L143.9 311.7 L140.2 313.9 L136.5 316.1 L133.2 318.1 L129.6 320 L125.8 321.9 L121.8 323.8 L117.7 325.7 L113.5 327.7 L109.3 329.8 L105.1 332.1 L101 334.7 L97 337.6 L93.2 340.8 L90.2 344.1 L87.3 347.8 L84.6 351.6 L82 355.7 L79.6 359.9 L77.3 364.3 L75.3 368.6 L73.5 373 L72 377.3 L70.8 381.6 L69.9 385.9 L69.6 390.1 L70 395.7 L71.2 401.2 L73.1 406.4 L75.6 411.1 L78.8 415.5 L82.3 419.3 L86.3 422.9 L90.7 426.1 L95.4 429.2 L98.7 431.1 L102.3 432.8 L106.1 434.6 L110 436.2 L114.1 437.8 L118.4 439.4 L122.8 440.9 L127.3 442.4 L131.9 443.8 L136.5 445.2 L141 446.4 L145.6 447.6 L150 448.7 L154.4 449.6 L158.6 450.5 L162.8 451.3 L166.9 452 L171 452.6 L175.2 453.1 L179.3 453.5 L183.4 453.9 L187.5 454.2 L191.6 454.4 L195.7 454.5 L199.8 454.6 L203.9 454.7 L207.9 454.7 L212 454.7 L216 454.6 L220.1 454.5 L224.3 454.4 L228.5 454.2 L232.8 453.9 L237 453.5 L241.3 453.1 L245.6 452.6 L249.9 452 L254.1 451.4 L258.2 450.8 L262.3 450.2 L266.3 449.5 L270.1 448.9 L273.8 448.3 L277.4 447.7 L280.8 447.1 L285.5 446.4 L289.8 445.8 L293.7 445.2 L297.4 444.6 L301 443.9 L304.6 443.3 L308.3 442.5 L312.2 441.7 L316.5 440.8 L321.2 439.7 L318.8 429.1 L314.1 430.2 L309.9 431.1 L306 432 L302.5 432.7 L299 433.4 L295.6 434.1 L292 434.7 L288.1 435.3 L283.9 436 L279.2 436.7 L275.8 437.2 L272.2 437.7 L268.5 438.2 L264.6 438.8 L260.7 439.4 L256.7 440 L252.6 440.6 L248.5 441.1 L244.3 441.6 L240.1 442.1 L236 442.6 L231.9 443 L227.8 443.3 L223.8 443.5 L219.9 443.7 L216 443.7 L212 443.7 L208.1 443.7 L204.1 443.5 L200.2 443.4 L196.3 443.2 L192.4 442.9 L188.5 442.5 L184.6 442.1 L180.7 441.6 L176.8 441.1 L173 440.4 L169.1 439.7 L165.2 438.9 L161.4 438 L157.5 436.9 L153.4 435.8 L149.2 434.6 L144.9 433.3 L140.6 431.9 L136.3 430.4 L132 428.8 L127.9 427.2 L123.8 425.6 L119.9 423.9 L116.2 422.2 L112.8 420.4 L109.7 418.7 L106.9 416.9 L104.6 415.2 L100.9 412.3 L97.9 409.5 L95.4 406.7 L93.6 403.9 L92.3 401.2 L91.4 398.6 L90.8 395.9 L90.5 393.1 L90.4 390 L90.5 388.2 L90.8 385.8 L91.5 382.8 L92.4 379.5 L93.7 376 L95.2 372.4 L96.9 368.7 L98.7 365.1 L100.7 361.6 L102.7 358.3 L104.8 355.3 L106.8 352.7 L108.9 350.1 L111.3 347.7 L114.1 345.3 L117.3 343 L120.7 340.7 L124.4 338.5 L128.2 336.4 L132 334.2 L135.9 332.1 L139.8 329.8 L143.5 327.5 L147.2 325 L150.8 322.6 L154.2 320.2 L157.7 317.9 L161.1 315.6 L164.4 313.3 L167.8 311.1 L171.2 308.8 L174.5 306.5 L178 304.2 Z" fill="url(#bal)"/>
<path d="M420.8 414.6 L424.2 414.1 L427.9 413.6 L431.8 413.2 L435.9 412.7 L440.1 412.3 L444.5 411.8 L448.8 411.4 L453.2 411.1 L457.5 410.7 L461.8 410.5 L465.9 410.2 L469.8 410 L473.4 409.9 L476.8 409.8 L479.8 410 L485.3 410.5 L489.7 411.3 L493.5 412.4 L496.9 413.6 L500.5 414.8 L504.4 416.1 L508.5 417.2 L511.5 406.5 L507.6 405.4 L504.2 404.1 L500.5 402.9 L496.5 401.7 L491.8 400.8 L486.4 400.2 L480.2 399.9 L476.8 399.9 L473.3 399.9 L469.4 400 L465.4 400.1 L461.2 400.3 L456.9 400.6 L452.4 400.9 L448 401.2 L443.5 401.6 L439.1 402 L434.8 402.4 L430.6 402.8 L426.6 403.3 L422.8 403.8 L419.2 404.2 Z" fill="url(#bal)"/>
<path d="M173.1 295L176.9 301M171.5 296L175.3 302M169.9 297L173.7 303M168.2 298L172 304.1M166.5 299L170.4 305.2M164.9 300L168.8 306.3M163.2 301.1L167.1 307.3M161.4 302.1L165.4 308.4M159.7 303.2L163.7 309.6M157.9 304.2L162 310.7M156.2 305.3L160.3 311.8M154.4 306.4L158.5 312.9M152.6 307.5L156.8 314.1M150.8 308.6L155 315.3M148.9 309.7L153.2 316.4M147.1 310.8L151.4 317.6M145.2 311.9L149.5 318.8M143.3 313.1L147.7 320M141.5 314.2L145.8 321.2M139.6 315.4L143.9 322.5M137.7 316.4L141.9 323.8M135.8 317.6L139.9 325M133.8 318.6L137.9 326.2M131.8 319.7L135.8 327.4M129.7 320.7L133.7 328.6M127.5 321.7L131.6 329.7M125.4 322.8L129.4 330.9M123.1 323.8L127.3 332M120.8 324.9L125.1 333.2M118.5 326.1L123 334.3M116.2 327.2L120.8 335.5M113.8 328.5L118.7 336.7M111.5 329.8L116.5 338.1M109 331.2L114.5 339.3M106.4 332.8L112.6 340.6M104.2 334.4L110.4 342.3M101.7 336.3L108.7 343.7M99.5 338.1L106.6 345.5M97.2 340.4L105 347.3M95.1 342.7L103.4 349.1M93.1 345.2L101.8 351.1M91.4 347.5L100.2 353.5M89.7 350.1L98.7 355.7M88 352.7L97.3 357.9M86.5 355.2L95.8 360.4M84.9 357.9L94.5 362.7M83.5 360.4L93.1 365.3M82.1 363.3L92 367.8M80.8 366.2L90.9 370.2M79.6 368.9L89.7 372.9M78.4 371.9L88.8 375.4M77.3 375L87.9 377.9M76.4 377.8L87 380.8M75.6 381.1L86.4 383.3M74.9 384.5L86 385.8M74.5 388.2L85.7 388.1M74.5 391.9L85.6 390.5M74.9 395.6L85.6 392.8M75.5 398.6L86.2 395.7M76.7 402.2L86.8 397.9M78.2 405.6L87.6 400M80 408.7L88.6 402M81.7 411.1L90.3 404.5M84 413.8L91.8 406.3M86.4 416.2L93.4 408.1M88.6 418.2L95.5 410.1M91.2 420.2L97.5 411.7M93.7 422.1L99.5 413.3M96.1 423.7L101.9 414.9M98.8 425.4L104 416.3M101.4 426.9L106.2 417.7M104.1 428.3L108.5 419M106.6 429.5L111 420.2M109.2 430.7L113.4 421.4M111.9 431.9L115.8 422.5M114.4 432.9L118.3 423.6M117.1 433.9L120.7 424.6M119.7 435L123.1 425.6M122.2 435.9L125.6 426.6M124.8 436.8L128 427.5M127.4 437.7L130.5 428.5M129.9 438.5L133 429.3M132.5 439.4L135.5 430.2M135 440.2L137.9 431M137.6 440.9L140.3 431.8M140.1 441.7L142.8 432.5M142.6 442.4L145.2 433.3M145.1 443.1L147.6 434M147.7 443.7L150 434.7M150.1 444.4L152.4 435.4M152.6 445L154.8 436M155.2 445.6L157.2 436.6M157.6 446.1L159.6 437.2M160.1 446.7L161.9 437.8M162.5 447.2L164.3 438.3M165 447.6L166.6 438.8M167.5 448.1L168.9 439.2M170 448.5L171.3 439.6M172.5 448.9L173.7 440M174.9 449.2L176.1 440.4M177.3 449.5L178.4 440.7M179.8 449.8L180.7 441M182.2 450.1L183.1 441.3M184.7 450.3L185.4 441.5M187.1 450.5L187.8 441.7M189.5 450.7L190.1 441.9M191.9 450.8L192.4 442.1M194.3 450.9L194.7 442.3M196.7 451L197 442.4M199.1 451.1L199.4 442.5M201.5 451.2L201.7 442.6M203.8 451.3L204 442.7M206.2 451.3L206.3 442.7M208.6 451.3L208.6 442.8M210.9 451.3L210.9 442.8M213.2 451.3L213.2 442.8M215.5 451.3L215.5 442.8M217.9 451.2L217.7 442.8M220.2 451.2L219.9 442.8M222.5 451.1L222.2 442.7M224.9 451L224.4 442.7M227.1 450.9L226.6 442.6M229.5 450.7L228.8 442.5M231.7 450.6L231.1 442.3M234 450.4L233.2 442.2M236.2 450.2L235.5 442M238.5 449.9L237.6 441.8M240.7 449.7L239.8 441.6M243 449.4L242 441.3M245.2 449.2L244.2 441.1M247.4 448.9L246.4 440.8M249.6 448.6L248.5 440.6M251.8 448.3L250.7 440.3M254 448L252.8 440M256.1 447.6L255 439.7M258.3 447.3L257.1 439.4M260.4 447L259.3 439.1M262.6 446.7L261.4 438.8M264.7 446.3L263.5 438.5M266.8 446L265.6 438.2M268.9 445.6L267.7 437.9M271 445.3L269.9 437.6M273.1 445L272 437.3M275.2 444.6L274.1 437M277.3 444.3L276.2 436.7M279.4 444L278.2 436.4M281.4 443.7L280.3 436.1M283.5 443.4L282.4 435.8M285.6 443.1L284.4 435.5M287.7 442.8L286.5 435.1M289.8 442.4L288.5 434.8M291.8 442.1L290.6 434.5M293.9 441.8L292.6 434.2M296 441.4L294.7 433.8M298.1 441L296.7 433.5M300.2 440.7L298.7 433.1M302.3 440.3L300.7 432.7M304.3 439.9L302.8 432.3M306.4 439.4L304.8 431.9M308.5 439L306.8 431.5M310.5 438.6L308.9 431M312.6 438.1L310.9 430.6M314.6 437.7L312.9 430.2M316.7 437.2L314.9 429.7M318.7 436.7L317 429.2M320.8 436.3L319 428.8M322.8 435.8L321 428.3M324.9 435.3L323 427.8M326.9 434.8L325.1 427.3M329 434.3L327.1 426.8M331 433.8L329.1 426.3M333 433.3L331.1 425.8M335.1 432.8L333.1 425.3M337.1 432.2L335.1 424.8M339.1 431.7L337.2 424.3M341.1 431.2L339.2 423.7M343.2 430.7L341.2 423.2M345.2 430.1L343.2 422.7M347.2 429.6L345.2 422.2M349.2 429.1L347.3 421.6M351.3 428.5L349.3 421.1M353.3 428L351.3 420.5M355.3 427.5L353.3 420M357.3 426.9L355.3 419.5M359.3 426.4L357.4 418.9M361.4 425.8L359.4 418.4M363.4 425.3L361.4 417.9M365.4 424.8L363.4 417.3M367.4 424.2L365.4 416.8M369.4 423.7L367.5 416.3M371.4 423.2L369.5 415.7M373.5 422.6L371.5 415.2M375.5 422.1L373.6 414.7M377.5 421.6L375.6 414.1M379.5 421.1L377.6 413.6M381.6 420.6L379.6 413.1M383.6 420L381.6 412.6M385.6 419.5L383.7 412.1M387.7 419L385.6 411.5M389.7 418.4L387.7 411M391.7 417.9L389.6 410.4M393.7 417.3L391.7 409.9M395.7 416.7L393.7 409.3M397.7 416.2L395.7 408.7M399.7 415.6L397.7 408.2M401.7 415.1L399.8 407.6M403.7 414.6L401.9 407.1M405.6 414.1L404 406.6M407.7 413.6L406 406.1M409.6 413.2L408.2 405.7M411.7 412.8L410.2 405.2M413.6 412.4L412.4 404.8M415.7 412.1L414.4 404.5M417.7 411.8L416.6 404.1M419.7 411.4L418.6 403.8M421.7 411.1L420.8 403.5M423.8 410.9L422.8 403.2M425.9 410.6L424.9 403M427.9 410.4L427 402.7M430 410.1L429.1 402.5M432 409.9L431.2 402.2M434.1 409.7L433.3 402M436.2 409.4L435.4 401.8M438.2 409.2L437.5 401.6M440.3 409L439.6 401.3M442.4 408.8L441.7 401.1M444.4 408.6L443.8 400.9M446.5 408.4L445.9 400.8M448.6 408.3L447.9 400.6M450.6 408.1L450.1 400.4M452.7 407.9L452.1 400.2M454.8 407.8L454.3 400.1M456.9 407.6L456.3 399.9M458.9 407.5L458.5 399.8M461 407.4L460.5 399.7M463 407.2L462.7 399.5M465.1 407.1L464.8 399.4M467.2 407L466.9 399.3M469.2 407L469 399.3M471.3 406.9L471.1 399.2M473.4 406.8L473.2 399.1M475.4 406.8L475.4 399.1M477.3 406.8L477.7 399.1M479.4 406.8L479.8 399.1M481.2 406.9L482.1 399.3M483.3 407.1L484.1 399.4M485.4 407.2L486.2 399.6M487.1 407.5L488.6 399.9M489.2 407.8L490.7 400.3M491 408.2L493 400.8M493 408.7L495.1 401.3M494.8 409.2L497.3 401.9M496.8 409.8L499.3 402.5M498.7 410.5L501.3 403.2M500.7 411.2L503.2 403.9M502.8 411.9L505.1 404.5M504.8 412.6L507.1 405.2M506.9 413.2L509 405.7M508.9 413.7L511 406.3" stroke="#6e4830" stroke-width="1.2" fill="none"/>
<path d="M173.7 295.9 L170.2 298 L166.7 300.2 L163.2 302.3 L159.8 304.4 L156.3 306.5 L152.9 308.6 L149.4 310.8 L145.8 313 L142.1 315.2 L138.4 317.4 L135 319.4 L131.3 321.3 L127.5 323.2 L123.5 325.1 L119.5 327.1 L115.5 329.1 L111.5 331.3 L107.6 333.7 L103.9 336.4 L100.4 339.3 L97.2 342.5 L94.5 345.8 L91.9 349.4 L89.4 353.2 L87 357.2 L84.8 361.3 L82.7 365.6 L80.9 369.8 L79.3 374.1 L77.9 378.3 L76.9 382.3 L76.2 386.3 L76 390 L76.3 394.5 L77.2 398.8 L78.6 402.9 L80.6 406.8 L83.1 410.4 L86.1 413.8 L89.6 417 L93.6 420.1 L97.9 423.1 L101 425 L104.3 426.7 L107.9 428.5 L111.7 430.2 L115.7 431.9 L119.8 433.5 L124.1 435.1 L128.5 436.6 L133 438.1 L137.5 439.5 L142 440.8 L146.5 442 L150.9 443.2 L155.1 444.2 L159.3 445.2 L163.4 446 L167.4 446.8 L171.5 447.4 L175.6 448 L179.6 448.5 L183.7 448.9 L187.7 449.3 L191.8 449.6 L195.8 449.8 L199.9 449.9 L203.9 450 L208 450.1 L212 450.1 L216 450.1 L220.1 450 L224.2 449.9 L228.3 449.6 L232.6 449.3 L236.8 448.9 L241.1 448.5 L245.3 448 L249.5 447.4 L253.7 446.8 L257.8 446.2 L261.9 445.6 L265.9 445 L269.7 444.4 L273.4 443.8 L277 443.2 L280.4 442.7 L285.1 442 L289.4 441.4 L293.3 440.8 L297 440.1 L300.5 439.5 L304.1 438.8 L307.7 438 L311.6 437.2 L315.9 436.3 L320.6 435.2 L324.1 434.4 L327.8 433.5 L331.7 432.5 L335.8 431.4 L340 430.4 L344.2 429.2 L348.5 428.1 L352.9 427 L357.2 425.8 L361.4 424.7 L365.6 423.6 L369.7 422.5 L373.5 421.5 L377.2 420.5 L380.7 419.7 L385.4 418.4 L389.7 417.3 L393.6 416.2 L397.2 415.2 L400.7 414.2 L404.2 413.3 L407.8 412.5 L411.6 411.7 L415.7 410.9 L420.4 410.2 L423.8 409.8 L427.6 409.3 L431.5 408.8 L435.6 408.4 L439.9 407.9 L444.3 407.5 L448.6 407.1 L453 406.8 L457.4 406.5 L461.6 406.2 L465.8 406 L469.7 405.8 L473.4 405.7 L476.8 405.7 L479.9 405.7 L485.6 406.1 L490.2 406.9 L494.2 407.8 L497.8 409 L501.4 410.3 L505.2 411.5 L509.3 412.7M176.3 300.1 L172.9 302.3 L169.5 304.6 L166.1 306.7 L162.7 308.9 L159.3 311.1 L155.9 313.4 L152.4 315.6 L148.9 317.9 L145.3 320.2 L141.6 322.6 L138 324.8 L134.2 326.9 L130.4 328.9 L126.5 331 L122.6 333 L118.8 335.1 L115.1 337.3 L111.6 339.6 L108.4 342 L105.4 344.6 L102.8 347.5 L100.5 350.4 L98.2 353.7 L95.9 357.2 L93.7 361 L91.7 364.8 L89.8 368.8 L88.1 372.8 L86.7 376.6 L85.5 380.4 L84.7 383.9 L84.2 387.2 L84 390 L84.2 393.5 L84.8 396.8 L85.8 399.9 L87.3 402.8 L89.2 405.7 L91.6 408.5 L94.6 411.3 L98 414.1 L102.1 416.9 L104.7 418.5 L107.7 420.2 L111 421.9 L114.6 423.6 L118.4 425.2 L122.4 426.9 L126.6 428.5 L130.8 430 L135.2 431.5 L139.5 433 L143.9 434.3 L148.3 435.6 L152.5 436.8 L156.7 437.9 L160.7 438.8 L164.6 439.7 L168.6 440.4 L172.5 441.1 L176.4 441.7 L180.4 442.2 L184.3 442.7 L188.3 443 L192.2 443.3 L196.2 443.6 L200.1 443.8 L204.1 443.9 L208 444 L212 444 L216 444 L219.9 444 L223.9 443.9 L228 443.7 L232.1 443.4 L236.2 443.1 L240.4 442.7 L244.6 442.2 L248.8 441.7 L252.9 441.2 L257 440.6 L261.1 440 L265 439.4 L268.9 438.9 L272.6 438.3 L276.2 437.8 L279.6 437.3 L284.3 436.6 L288.5 435.9 L292.4 435.3 L296 434.7 L299.5 434.1 L303 433.4 L306.6 432.7 L310.5 431.8 L314.7 430.9 L319.4 429.8 L322.8 429 L326.5 428.1 L330.4 427.1 L334.4 426.1 L338.6 425 L342.8 423.9 L347.1 422.8 L351.5 421.6 L355.8 420.5 L360 419.4 L364.2 418.3 L368.3 417.2 L372.2 416.2 L375.9 415.2 L379.3 414.3 L384 413.1 L388.2 412 L392.1 410.9 L395.7 409.9 L399.3 408.9 L402.9 408 L406.6 407.1 L410.5 406.3 L414.8 405.5 L419.6 404.8 L423.1 404.3 L426.9 403.8 L430.9 403.4 L435.1 402.9 L439.4 402.5 L443.7 402 L448.2 401.7 L452.6 401.3 L457 401 L461.3 400.7 L465.5 400.5 L469.5 400.3 L473.3 400.2 L476.8 400.2 L480.1 400.3 L486.2 400.7 L491.3 401.5 L495.7 402.5 L499.6 403.8 L503.2 405.1 L506.8 406.3 L510.7 407.3" stroke="#5e3e28" stroke-width="0.9" fill="none"/>
<path d="M173.7 295.9 L170.2 298 L166.7 300.2 L163.2 302.3 L159.8 304.4 L156.3 306.5 L152.9 308.6 L149.4 310.8 L145.8 313 L142.1 315.2 L138.4 317.4 L135 319.4 L131.3 321.3 L127.5 323.2 L123.5 325.1 L119.5 327.1 L115.5 329.1 L111.5 331.3 L107.6 333.7 L103.9 336.4 L100.4 339.3 L97.2 342.5 L94.5 345.8 L91.9 349.4 L89.4 353.2 L87 357.2 L84.8 361.3 L82.7 365.6 L80.9 369.8 L79.3 374.1 L77.9 378.3 L76.9 382.3 L76.2 386.3 L76 390 L76.3 394.5 L77.2 398.8 L78.6 402.9 L80.6 406.8 L83.1 410.4 L86.1 413.8 L89.6 417 L93.6 420.1 L97.9 423.1 L101 425 L104.3 426.7 L107.9 428.5 L111.7 430.2 L115.7 431.9 L119.8 433.5 L124.1 435.1 L128.5 436.6 L133 438.1 L137.5 439.5 L142 440.8 L146.5 442 L150.9 443.2 L155.1 444.2 L159.3 445.2 L163.4 446 L167.4 446.8 L171.5 447.4 L175.6 448 L179.6 448.5 L183.7 448.9 L187.7 449.3 L191.8 449.6 L195.8 449.8 L199.9 449.9 L203.9 450 L208 450.1 L212 450.1 L216 450.1 L220.1 450 L224.2 449.9 L228.3 449.6 L232.6 449.3 L236.8 448.9 L241.1 448.5 L245.3 448 L249.5 447.4 L253.7 446.8 L257.8 446.2 L261.9 445.6 L265.9 445 L269.7 444.4 L273.4 443.8 L277 443.2 L280.4 442.7 L285.1 442 L289.4 441.4 L293.3 440.8 L297 440.1 L300.5 439.5 L304.1 438.8 L307.7 438 L311.6 437.2 L315.9 436.3 L320.6 435.2 L324.1 434.4 L327.8 433.5 L331.7 432.5 L335.8 431.4 L340 430.4 L344.2 429.2 L348.5 428.1 L352.9 427 L357.2 425.8 L361.4 424.7 L365.6 423.6 L369.7 422.5 L373.5 421.5 L377.2 420.5 L380.7 419.7 L385.4 418.4 L389.7 417.3 L393.6 416.2 L397.2 415.2 L400.7 414.2 L404.2 413.3 L407.8 412.5 L411.6 411.7 L415.7 410.9 L420.4 410.2 L423.8 409.8 L427.6 409.3 L431.5 408.8 L435.6 408.4 L439.9 407.9 L444.3 407.5 L448.6 407.1 L453 406.8 L457.4 406.5 L461.6 406.2 L465.8 406 L469.7 405.8 L473.4 405.7 L476.8 405.7 L479.9 405.7 L485.6 406.1 L490.2 406.9 L494.2 407.8 L497.8 409 L501.4 410.3 L505.2 411.5 L509.3 412.7" stroke="#f2ece6" stroke-width="0.7" fill="none" stroke-dasharray="0.9 1.4" opacity="0.9"/>
<path d="M176.3 300.1 L172.9 302.3 L169.5 304.6 L166.1 306.7 L162.7 308.9 L159.3 311.1 L155.9 313.4 L152.4 315.6 L148.9 317.9 L145.3 320.2 L141.6 322.6 L138 324.8 L134.2 326.9 L130.4 328.9 L126.5 331 L122.6 333 L118.8 335.1 L115.1 337.3 L111.6 339.6 L108.4 342 L105.4 344.6 L102.8 347.5 L100.5 350.4 L98.2 353.7 L95.9 357.2 L93.7 361 L91.7 364.8 L89.8 368.8 L88.1 372.8 L86.7 376.6 L85.5 380.4 L84.7 383.9 L84.2 387.2 L84 390 L84.2 393.5 L84.8 396.8 L85.8 399.9 L87.3 402.8 L89.2 405.7 L91.6 408.5 L94.6 411.3 L98 414.1 L102.1 416.9 L104.7 418.5 L107.7 420.2 L111 421.9 L114.6 423.6 L118.4 425.2 L122.4 426.9 L126.6 428.5 L130.8 430 L135.2 431.5 L139.5 433 L143.9 434.3 L148.3 435.6 L152.5 436.8 L156.7 437.9 L160.7 438.8 L164.6 439.7 L168.6 440.4 L172.5 441.1 L176.4 441.7 L180.4 442.2 L184.3 442.7 L188.3 443 L192.2 443.3 L196.2 443.6 L200.1 443.8 L204.1 443.9 L208 444 L212 444 L216 444 L219.9 444 L223.9 443.9 L228 443.7 L232.1 443.4 L236.2 443.1 L240.4 442.7 L244.6 442.2 L248.8 441.7 L252.9 441.2 L257 440.6 L261.1 440 L265 439.4 L268.9 438.9 L272.6 438.3 L276.2 437.8 L279.6 437.3 L284.3 436.6 L288.5 435.9 L292.4 435.3 L296 434.7 L299.5 434.1 L303 433.4 L306.6 432.7 L310.5 431.8 L314.7 430.9 L319.4 429.8 L322.8 429 L326.5 428.1 L330.4 427.1 L334.4 426.1 L338.6 425 L342.8 423.9 L347.1 422.8 L351.5 421.6 L355.8 420.5 L360 419.4 L364.2 418.3 L368.3 417.2 L372.2 416.2 L375.9 415.2 L379.3 414.3 L384 413.1 L388.2 412 L392.1 410.9 L395.7 409.9 L399.3 408.9 L402.9 408 L406.6 407.1 L410.5 406.3 L414.8 405.5 L419.6 404.8 L423.1 404.3 L426.9 403.8 L430.9 403.4 L435.1 402.9 L439.4 402.5 L443.7 402 L448.2 401.7 L452.6 401.3 L457 401 L461.3 400.7 L465.5 400.5 L469.5 400.3 L473.3 400.2 L476.8 400.2 L480.1 400.3 L486.2 400.7 L491.3 401.5 L495.7 402.5 L499.6 403.8 L503.2 405.1 L506.8 406.3 L510.7 407.3" stroke="#f2ece6" stroke-width="0.7" fill="none" stroke-dasharray="0.9 1.4" opacity="0.9"/>
<path d="M481.8 449 L485.5 449.2 L489.4 449.5 L493.4 449.7 L497.4 450.1 L501.5 450.4 L505.6 450.8 L509.8 451.3 L514 451.8 L518.2 452.3 L522.4 452.9 L526.6 453.5 L530.8 454.1 L534.9 454.8 L539 455.6 L543 456.4 L547 457.3 L550.8 458.2 L554.6 459.2 L557.4 448.5 L553.4 447.6 L549.3 446.7 L545.2 445.9 L541 445.1 L536.7 444.3 L532.5 443.7 L528.2 443 L523.8 442.5 L519.5 441.9 L515.2 441.4 L510.9 441 L506.6 440.6 L502.4 440.2 L498.2 439.8 L494.1 439.6 L490.1 439.3 L486.1 439.1 L482.2 438.9 Z" fill="url(#bal)"/>
<path d="M892.4 591.8 L899.5 594.4 L905.8 596.7 L911.2 598.8 L916 600.6 L920.2 602.1 L923.9 603.5 L927.2 604.7 L930.1 605.7 L932.9 606.6 L935.6 607.5 L938.2 608.3 L940.9 609 L943.7 609.8 L946.8 610.6 L950.1 611.5 L953.9 612.4 L958.2 613.4 L961.8 614.3 L965.5 615.1 L969.4 616 L973.3 616.9 L977.3 617.7 L981.4 618.6 L985.6 619.4 L989.8 620.3 L994 621.1 L998.3 621.9 L1002.7 622.7 L1007 623.5 L1011.3 624.2 L1015.7 625 L1020 625.6 L1024.4 626.3 L1028.6 626.9 L1032.9 627.5 L1037.1 628 L1041.2 628.5 L1045.3 628.9 L1049.3 629.3 L1053.6 629.6 L1057.8 629.9 L1062 630.1 L1066.1 630.3 L1070.2 630.5 L1074.3 630.6 L1078.3 630.6 L1082.3 630.7 L1086.3 630.7 L1090.3 630.6 L1094.2 630.6 L1098.2 630.5 L1102.2 630.4 L1106.2 630.3 L1110.2 630.1 L1114.2 629.9 L1118.2 629.6 L1122.3 629.3 L1126.5 629 L1130.6 628.6 L1134.7 628.2 L1139 627.8 L1143.3 627.3 L1147.7 626.8 L1152.2 626.2 L1156.7 625.5 L1161.2 624.9 L1165.8 624.2 L1170.3 623.4 L1174.9 622.6 L1179.3 621.9 L1183.8 621 L1188.1 620.2 L1192.3 619.4 L1196.5 618.6 L1200.5 617.7 L1204.3 616.9 L1208 616.1 L1211.5 615.3 L1214.8 614.6 L1217.9 613.8 L1224.3 612 L1230 610.3 L1234.9 608.5 L1239.3 606.7 L1243.2 604.7 L1246.7 602.7 L1249.9 600.7 L1252.8 598.6 L1255.9 596.3 L1260.4 592.8 L1264.5 588.8 L1268 584.6 L1271.1 580.2 L1273.7 575.5 L1276.1 570.7 L1277.8 566.4 L1279.4 562 L1280.8 557.3 L1282.1 552.5 L1283.1 547.7 L1284 543 L1284.7 538.3 L1285.1 533.7 L1285.2 528.9 L1284.9 524.5 L1284.4 520.3 L1283.7 516.2 L1282.6 512.1 L1281.4 507.8 L1280 503.3 L1264 508 L1265.1 512.2 L1266 516 L1266.6 519.4 L1267 522.5 L1267.2 525.6 L1267.1 528.8 L1266.9 532.6 L1266.6 536.2 L1266.1 540.1 L1265.4 544.2 L1264.5 548.3 L1263.5 552.4 L1262.4 556.4 L1261.2 560.1 L1259.9 563.4 L1258.1 567.5 L1256.3 571.1 L1254.3 574.4 L1252.2 577.5 L1249.6 580.5 L1246.1 583.6 L1243.5 585.6 L1241 587.4 L1238.4 589.2 L1235.8 590.9 L1232.8 592.5 L1229.3 594.2 L1225.1 595.9 L1220.1 597.6 L1214.1 599.3 L1211.2 600.1 L1208.1 600.8 L1204.7 601.7 L1201.1 602.5 L1197.4 603.3 L1193.5 604.2 L1189.4 605 L1185.3 605.8 L1181 606.7 L1176.7 607.5 L1172.3 608.3 L1167.9 609.1 L1163.4 609.9 L1159 610.6 L1154.6 611.3 L1150.2 612 L1145.8 612.6 L1141.5 613.2 L1137.4 613.7 L1133.3 614.2 L1129.4 614.6 L1125.3 615 L1121.3 615.3 L1117.3 615.6 L1113.4 615.9 L1109.5 616.1 L1105.6 616.3 L1101.7 616.4 L1097.9 616.5 L1094.1 616.6 L1090.2 616.7 L1086.4 616.6 L1082.6 616.5 L1078.7 616.4 L1074.8 616.2 L1070.9 616 L1067 615.7 L1063 615.4 L1058.9 615.1 L1054.9 614.7 L1050.7 614.3 L1046.9 613.9 L1043 613.4 L1039 612.9 L1034.9 612.3 L1030.8 611.7 L1026.6 611.1 L1022.4 610.4 L1018.2 609.7 L1014 609 L1009.7 608.2 L1005.5 607.4 L1001.2 606.6 L997 605.8 L992.8 604.9 L988.7 604.1 L984.6 603.2 L980.6 602.3 L976.7 601.5 L972.8 600.6 L969 599.7 L965.4 598.9 L961.8 598 L957.6 597 L953.9 596.1 L950.6 595.3 L947.7 594.5 L945.1 593.8 L942.7 593.1 L940.3 592.3 L937.8 591.5 L935.2 590.6 L932.4 589.6 L929.2 588.5 L925.6 587.2 L921.4 585.7 L916.6 584 L911.1 582 L904.8 579.7 L897.6 577.2 Z" fill="url(#bal)"/>
<path d="M380.4 452.8L379.6 445.2M382.5 452.6L381.7 445M384.6 452.4L383.7 444.7M386.7 452.2L385.8 444.5M388.7 451.9L387.9 444.3M390.8 451.7L390 444M392.9 451.5L392 443.8M395 451.2L394.1 443.6M397 451L396.2 443.3M399.1 450.8L398.3 443.1M401.2 450.5L400.4 442.9M403.2 450.3L402.5 442.7M405.3 450.1L404.6 442.4M407.3 449.9L406.7 442.2M409.4 449.7L408.8 442M411.5 449.5L410.9 441.8M413.6 449.4L413 441.7M415.6 449.2L415.1 441.5M417.7 449L417.1 441.3M419.8 448.9L419.2 441.2M421.9 448.7L421.3 441M424 448.6L423.4 440.9M426.1 448.4L425.4 440.7M428.2 448.2L427.5 440.5M430.3 448L429.6 440.4M432.3 447.9L431.7 440.2M434.4 447.7L433.8 440M436.5 447.5L435.8 439.8M438.6 447.3L437.9 439.6M440.6 447.1L440 439.5M442.7 447L442.1 439.3M444.8 446.8L444.2 439.1M446.9 446.6L446.3 439M448.9 446.5L448.4 438.8M451 446.3L450.5 438.7M453.1 446.2L452.6 438.5M455.1 446.1L454.7 438.4M457.2 446L456.8 438.3M459.3 445.9L458.9 438.2M461.3 445.8L461.1 438.1M463.4 445.7L463.2 438M465.4 445.7L465.3 438M467.5 445.6L467.4 437.9M469.5 445.6L469.6 437.9M471.6 445.6L471.7 437.9M473.6 445.6L473.8 437.9M475.7 445.6L475.9 437.9M477.7 445.7L478.1 438M479.8 445.8L480.2 438.1M481.9 445.8L482.3 438.2M483.9 446L484.4 438.3M486 446.1L486.5 438.4M488.1 446.2L488.6 438.5M490.1 446.3L490.7 438.7M492.2 446.5L492.8 438.8M494.3 446.6L494.9 439M496.4 446.8L497 439.1M498.4 447L499.1 439.3M500.5 447.1L501.2 439.5M502.6 447.3L503.3 439.6M504.6 447.5L505.4 439.8M506.7 447.7L507.5 440M508.8 447.9L509.6 440.3M510.8 448.1L511.7 440.5M512.9 448.4L513.8 440.7M514.9 448.6L515.9 440.9M517 448.8L518 441.2M519 449.1L520.1 441.5M521.1 449.4L522.1 441.7M523.1 449.6L524.3 442M525.2 449.9L526.3 442.3M527.2 450.2L528.4 442.6M529.3 450.5L530.5 442.9M531.3 450.8L532.6 443.3M533.4 451.2L534.7 443.6M535.4 451.5L536.8 444M537.4 451.9L538.9 444.3M539.4 452.3L541 444.7M541.5 452.7L543 445.1M543.5 453.1L545.1 445.5M545.5 453.5L547.2 446M547.5 453.9L549.3 446.4M549.5 454.4L551.3 446.9M551.5 454.8L553.4 447.4M553.5 455.3L555.5 447.9M555.4 455.8L557.6 448.4M557.4 456.4L559.6 449M559.4 457L561.7 449.6M561.4 457.6L563.7 450.2M563.3 458.2L565.8 450.8M565.3 458.9L567.9 451.5M567.2 459.6L569.9 452.2M569.2 460.3L571.9 452.9M571.1 461L574 453.7M573.1 461.8L576 454.5M575 462.6L578.1 455.3M577 463.4L580.1 456.1M579 464.2L582.1 456.9M580.9 465.1L584.1 457.8M582.9 466L586.1 458.6M584.8 466.8L588.2 459.5M586.8 467.7L590.2 460.4M588.8 468.7L592.2 461.3M590.8 469.6L594.2 462.2M592.8 470.5L596.2 463.1M594.8 471.4L598.2 464M596.8 472.4L600.2 464.9M598.8 473.3L602.2 465.8M600.8 474.3L604.2 466.8M602.9 475.2L606.2 467.7M604.9 476.1L608.3 468.6M607 477.1L610.3 469.4M609.1 478L612.3 470.3M611.2 478.9L614.4 471.2M613.3 479.8L616.5 472M615.4 480.7L618.5 472.9M617.5 481.5L620.6 473.7M619.6 482.4L622.7 474.6M621.8 483.2L624.9 475.4M623.9 484.1L627 476.2M626 484.9L629.1 477.1M628.1 485.8L631.3 477.9M630.3 486.7L633.4 478.7M632.4 487.5L635.6 479.6M634.6 488.4L637.7 480.4M636.7 489.3L639.9 481.3M638.9 490.1L642.1 482.1M641.1 491L644.3 483M643.3 491.9L646.4 483.8M645.5 492.8L648.6 484.7M647.7 493.6L650.8 485.5M649.9 494.5L653 486.3M652.1 495.4L655.3 487.2M654.3 496.2L657.5 488M656.5 497.1L659.7 488.9M658.7 498L661.9 489.8M661 498.9L664.2 490.6M663.2 499.7L666.4 491.5M665.5 500.6L668.7 492.3M667.7 501.5L670.9 493.2M670 502.4L673.2 494M672.2 503.2L675.4 494.9M674.5 504.1L677.7 495.7M676.8 505L680 496.6M679.1 505.9L682.3 497.5M681.3 506.7L684.5 498.3M683.6 507.6L686.8 499.2M685.9 508.5L689.1 500M688.2 509.4L691.4 500.9M690.5 510.2L693.7 501.8M692.8 511.1L696 502.6M695.1 512L698.3 503.5M697.4 512.9L700.6 504.4M699.7 513.8L702.9 505.2M702 514.6L705.2 506.1M704.3 515.5L707.6 507M706.6 516.4L709.9 507.8M709 517.3L712.2 508.7M711.3 518.2L714.6 509.6M713.6 519.1L716.9 510.5M716 520L719.3 511.3M718.3 520.9L721.6 512.2M720.7 521.8L724 513.1M723 522.7L726.3 514M725.4 523.6L728.7 514.9M727.8 524.5L731.1 515.7M730.1 525.4L733.5 516.6M732.5 526.3L735.8 517.5M734.9 527.2L738.2 518.4M737.3 528.1L740.6 519.3M739.7 529L743 520.2M742.1 529.9L745.4 521.1M744.5 530.9L747.8 522M746.9 531.8L750.2 522.9M749.3 532.7L752.6 523.8M751.7 533.6L755 524.7M754.1 534.5L757.5 525.6M756.5 535.4L759.9 526.5M758.9 536.4L762.3 527.4M761.4 537.3L764.7 528.3M763.8 538.2L767.2 529.2M766.2 539.1L769.6 530.1M768.7 540.1L772.1 531.1M771.1 541L774.5 532M773.5 541.9L777 532.9M776 542.9L779.4 533.8M778.5 543.8L781.9 534.7M780.9 544.7L784.3 535.6M783.4 545.7L786.8 536.6M785.8 546.6L789.3 537.5M788.3 547.5L791.7 538.4M790.8 548.5L794.2 539.3M793.3 549.4L796.7 540.2M795.7 550.3L799.2 541.2M798.2 551.3L801.7 542.1M800.7 552.2L804.2 543M803.2 553.2L806.7 544M805.7 554.1L809.2 544.9M808.2 555.1L811.7 545.8M810.7 556L814.2 546.8M813.2 557L816.7 547.7M815.7 557.9L819.2 548.6M818.3 558.9L821.8 549.6M820.8 559.8L824.3 550.5M823.3 560.8L826.8 551.4M825.9 561.7L829.3 552.4M828.4 562.7L831.9 553.3M830.9 563.6L834.4 554.3M833.5 564.6L837 555.2M836 565.6L839.5 556.2M838.6 566.5L842.1 557.1M841.1 567.5L844.7 558M843.7 568.5L847.2 559M846.3 569.4L849.8 559.9M848.8 570.4L852.4 560.9M851.4 571.4L854.9 561.8M854 572.3L857.5 562.8M856.6 573.3L860.1 563.7M859.2 574.3L862.7 564.7M861.8 575.2L865.3 565.7M864.4 576.2L867.9 566.6M867 577.2L870.5 567.6M869.6 578.2L873.1 568.5M872.2 579.1L875.8 569.5M874.8 580.1L878.4 570.4M877.5 581.1L881 571.4M880.1 582.1L883.7 572.3M882.7 583.1L886.3 573.3M885.4 584.1L889 574.3M888 585L891.6 575.2M890.7 586L894.3 576.2M893.4 587L897 577.1M896.1 588L899.6 578.1M898.7 589L902.3 579.1M901.4 589.9L905 580M904.1 590.9L907.7 581M906.8 591.9L910.4 582M909.5 592.9L913.1 582.9M912.2 593.9L915.8 583.9M914.9 594.9L918.5 584.9M917.6 595.9L921.2 585.9M920.3 596.9L924 586.8M923.1 597.9L926.7 587.8M925.9 598.9L929.4 588.8M928.7 599.9L932.1 589.7M931.5 600.9L934.8 590.6M934.4 601.9L937.6 591.5M937.2 602.8L940.3 592.3M940.2 603.7L943.1 593.1M943.1 604.5L945.9 593.8M946 605.3L948.7 594.6M949 606L951.6 595.3M951.9 606.8L954.5 596M954.9 607.5L957.4 596.7M957.8 608.2L960.4 597.3M960.8 608.9L963.3 598M963.8 609.6L966.3 598.7M966.8 610.3L969.2 599.4M969.7 611L972.2 600.1M972.7 611.7L975.1 600.7M975.7 612.3L978.1 601.4M978.7 613L981 602M981.7 613.6L984 602.6M984.7 614.2L986.9 603.3M987.7 614.8L989.9 603.9M990.7 615.4L992.8 604.5M993.7 616L995.8 605M996.7 616.6L998.8 605.6M999.7 617.2L1001.7 606.2M1002.7 617.8L1004.7 606.7M1005.7 618.3L1007.7 607.3M1008.7 618.8L1010.6 607.8M1011.8 619.4L1013.6 608.3M1014.8 619.9L1016.6 608.8M1017.8 620.4L1019.6 609.3M1020.8 620.9L1022.5 609.8M1023.8 621.3L1025.5 610.3M1026.9 621.8L1028.5 610.7M1029.9 622.2L1031.4 611.1M1033 622.7L1034.5 611.6M1036 623.1L1037.4 611.9M1039.1 623.4L1040.4 612.3M1042.2 623.8L1043.3 612.7M1045.2 624.1L1046.4 613M1048.3 624.5L1049.3 613.3M1051.4 624.7L1052.3 613.6M1054.4 625L1055.3 613.9M1057.5 625.2L1058.3 614.1M1060.5 625.4L1061.3 614.4M1063.6 625.6L1064.2 614.6M1066.6 625.8L1067.2 614.8M1069.6 626L1070.2 614.9M1072.7 626.1L1073.1 615.1M1075.7 626.2L1076 615.2M1078.8 626.3L1079 615.3M1081.7 626.3L1081.9 615.4M1084.7 626.4L1084.8 615.5M1087.8 626.4L1087.7 615.5M1090.8 626.4L1090.6 615.5M1093.7 626.3L1093.6 615.5M1096.7 626.3L1096.5 615.5M1099.7 626.2L1099.3 615.4M1102.6 626.1L1102.2 615.4M1105.6 626L1105.1 615.3M1108.5 625.8L1108 615.2M1111.5 625.7L1110.8 615M1114.4 625.5L1113.7 614.9M1117.3 625.3L1116.6 614.7M1120.2 625.1L1119.4 614.5M1123.1 624.9L1122.2 614.3M1125.9 624.6L1125.1 614.1M1128.8 624.4L1127.9 613.9M1131.7 624.1L1130.7 613.7M1134.6 623.8L1133.4 613.4M1137.5 623.5L1136.3 613.1M1140.4 623.2L1139.1 612.8M1143.2 622.8L1141.8 612.4M1146.1 622.5L1144.7 612.1M1148.9 622.1L1147.5 611.7M1151.7 621.7L1150.3 611.3M1154.6 621.3L1153.1 610.9M1157.5 620.9L1155.8 610.5M1160.3 620.4L1158.7 610.1M1163.1 620L1161.4 609.6M1166 619.5L1164.2 609.2M1168.8 619.1L1167 608.7M1171.6 618.6L1169.8 608.2M1174.4 618.1L1172.6 607.7M1177.3 617.6L1175.4 607.2M1180.1 617.1L1178.2 606.7M1182.9 616.5L1181 606.2M1185.7 616L1183.7 605.7M1188.6 615.4L1186.5 605.1M1191.4 614.9L1189.3 604.6M1194.2 614.3L1192.1 604M1197 613.7L1194.8 603.5M1199.8 613.1L1197.6 602.9M1202.6 612.5L1200.4 602.3M1205.4 611.9L1203.1 601.7M1208.3 611.3L1205.8 601.1M1211.1 610.6L1208.6 600.4M1213.8 609.9L1211.3 599.8M1216.7 609.2L1214 599.1M1219.6 608.4L1216.6 598.4M1222.3 607.7L1219.4 597.7M1225.2 606.8L1221.9 596.9M1227.9 605.9L1224.6 596.1M1230.8 604.9L1227 595.3M1233.4 603.9L1229.7 594.4M1236.3 602.7L1232 593.5M1239.1 601.5L1234.3 592.5M1241.5 600.2L1236.8 591.3M1244.2 598.7L1238.9 590.1M1246.7 597.1L1241.1 588.8M1249 595.5L1243.3 587.4M1251.4 593.8L1245.3 586M1253.5 592.2L1247.5 584.5M1255.9 590.4L1249.4 583M1257.9 588.7L1251.4 581.4M1260.2 586.5L1253 579.9M1262.4 584.3L1254.6 578.4M1264.1 582.2L1256.3 576.4M1266 579.7L1257.6 574.6M1267.5 577.5L1259.1 572.4M1269 574.9L1260.3 570.4M1270.4 572.4L1261.4 568.3M1271.5 570L1262.6 565.9M1272.8 567.3L1263.6 563.8M1273.8 564.8L1264.6 561.3M1274.8 562.1L1265.5 559.1M1275.7 559.4L1266.3 556.7M1276.5 556.9L1267.1 554.2M1277.3 554.1L1267.7 551.8M1277.9 551.5L1268.4 549.3M1278.6 548.8L1269 546.8M1279.2 546L1269.5 544.4M1279.6 543.4L1270 541.8M1280.1 540.5L1270.4 539.4M1280.5 537.9L1270.7 536.8M1280.7 535L1271 534.4M1280.9 532.1L1271.1 532M1281 529.4L1271.3 529.3M1280.9 526.5L1271.3 527M1280.7 523.5L1271.2 524.7M1280.5 520.9L1271 522.1M1280 518.1L1270.7 519.8M1279.5 515.4L1270.4 517.5M1278.9 512.9L1269.9 515M1278.3 510.3L1269.3 512.7M1277.6 507.8L1268.7 510.4M1276.9 505.4L1268.1 508M1276.1 503L1267.5 505.6M1275.4 500.6L1266.8 503.2M1274.6 498.3L1266.1 501M1273.9 496L1265.5 498.6M1273 493.6L1264.8 496.4M1272.2 491.3L1264.1 494.3M1271.4 489.1L1263.4 492.1M1270.6 486.8L1262.7 490M1269.7 484.7L1261.9 487.8M1268.8 482.5L1261.2 485.8M1267.9 480.4L1260.4 483.7M1266.9 478.2L1259.6 481.8M1266 476.2L1258.7 479.8M1264.9 474.1L1257.9 477.9M1263.9 472.1L1256.9 476M1262.9 470.2L1256 474M1261.6 468.2L1255.1 472.4M1260.5 466.4L1254 470.5M1259.2 464.5L1253 469M1258.1 462.8L1251.9 467.2M1256.7 461L1250.8 465.7M1255.4 459.3L1249.5 464.1M1254 457.6L1248.3 462.6M1252.6 456.1L1247 461M1251.2 454.5L1245.7 459.6M1249.8 453L1244.4 458.1M1248.4 451.5L1243.1 456.7M1247 450.1L1241.7 455.2M1245.5 448.6L1240.3 453.8M1244.1 447.2L1238.9 452.4M1242.7 445.8L1237.6 451M1241.3 444.5L1236.2 449.6M1239.9 443.1L1234.8 448.2M1238.5 441.7L1233.4 446.8M1237.2 440.4L1232 445.3M1235.8 439L1230.7 443.9M1234.4 437.7L1229.3 442.5M1233.2 436.3L1228 441.1M1231.8 434.9L1226.7 439.7" stroke="#6e4830" stroke-width="1.3" fill="none"/>
<path d="M380.3 451.7 L384.2 451.3 L388 450.9 L391.6 450.5 L395.3 450.1 L398.9 449.7 L402.7 449.3 L406.6 448.9 L410.8 448.5 L415.3 448.1 L420.2 447.7 L423.7 447.5 L427.3 447.2 L431 446.9 L434.9 446.5 L438.8 446.2 L442.9 445.8 L447 445.5 L451.2 445.2 L455.4 445 L459.7 444.7 L464.1 444.6 L468.5 444.5 L472.9 444.5 L477.4 444.6 L481.9 444.7 L485.7 445 L489.6 445.2 L493.6 445.5 L497.6 445.8 L501.7 446.1 L505.9 446.5 L510.1 446.9 L514.3 447.4 L518.5 447.9 L522.8 448.5 L527 449.1 L531.2 449.7 L535.4 450.4 L539.5 451.2 L543.6 452 L547.6 452.8 L551.5 453.7 L555.3 454.7 L559.2 455.8 L563 456.9 L566.8 458.2 L570.4 459.5 L574 460.9 L577.6 462.4 L581.1 463.9 L584.7 465.5 L588.2 467.1 L591.8 468.8 L595.4 470.5 L599.1 472.2 L602.8 473.9 L606.7 475.6 L610.6 477.3 L614.7 479.1 L618.9 480.8 L622.2 482.1 L625.4 483.4 L628.5 484.6 L631.4 485.8 L634.3 487 L637.2 488.1 L640.1 489.3 L643 490.4 L646 491.6 L649.1 492.8 L652.3 494.1 L655.7 495.4 L659.3 496.8 L663.1 498.3 L667.2 499.9 L671.5 501.6 L676.2 503.4 L681.3 505.3 L686.7 507.4 L692.5 509.6 L698.8 512 L701.6 513.1 L704.4 514.2 L707.3 515.3 L710.4 516.5 L713.6 517.7 L716.9 518.9 L720.3 520.2 L723.8 521.6 L727.4 522.9 L731 524.3 L734.8 525.7 L738.6 527.2 L742.5 528.7 L746.5 530.2 L750.5 531.7 L754.6 533.3 L758.7 534.8 L762.9 536.4 L767.1 538 L771.3 539.6 L775.6 541.2 L779.9 542.9 L784.2 544.5 L788.5 546.1 L792.9 547.8 L797.2 549.4 L801.5 551 L805.9 552.7 L810.2 554.3 L814.5 555.9 L818.7 557.5 L823 559.1 L827.2 560.7 L831.4 562.3 L835.5 563.8 L839.6 565.4 L843.6 566.9 L847.5 568.4 L851.4 569.8 L855.3 571.3 L859 572.7 L862.7 574 L866.2 575.4 L869.7 576.7 L873.1 577.9 L876.4 579.1 L879.6 580.3 L882.7 581.5 L885.6 582.5 L888.5 583.6 L891.2 584.6 L893.7 585.5 L900.9 588.1 L907.2 590.4 L912.6 592.4 L917.4 594.2 L921.6 595.7 L925.2 597.1 L928.5 598.2 L931.5 599.3 L934.2 600.2 L936.8 601 L939.4 601.8 L942 602.6 L944.7 603.3 L947.7 604.1 L951.1 604.9 L954.8 605.9 L959.1 606.9 L962.7 607.7 L966.4 608.6 L970.2 609.5 L974.1 610.3 L978.1 611.2 L982.2 612.1 L986.3 612.9 L990.5 613.8 L994.8 614.6 L999 615.4 L1003.3 616.2 L1007.7 617 L1012 617.8 L1016.3 618.5 L1020.6 619.2 L1024.9 619.9 L1029.2 620.5 L1033.4 621.1 L1037.5 621.6 L1041.6 622.1 L1045.7 622.6 L1049.6 623 L1053.9 623.4 L1058.1 623.7 L1062.2 624 L1066.3 624.2 L1070.4 624.4 L1074.4 624.6 L1078.4 624.7 L1082.4 624.8 L1086.3 624.8 L1090.3 624.8 L1094.2 624.8 L1098.1 624.7 L1102.1 624.6 L1106 624.4 L1110 624.2 L1114 624 L1118 623.7 L1122.1 623.4 L1126.2 623.1 L1130.3 622.7 L1134.4 622.3 L1138.6 621.9 L1142.9 621.4 L1147.3 620.8 L1151.7 620.2 L1156.2 619.5 L1160.7 618.9 L1165.2 618.1 L1169.7 617.4 L1174.2 616.6 L1178.7 615.8 L1183.1 615 L1187.4 614.1 L1191.6 613.3 L1195.7 612.5 L1199.7 611.6 L1203.5 610.8 L1207.2 610 L1210.6 609.2 L1213.9 608.4 L1217 607.6 L1223.3 605.9 L1228.7 604.1 L1233.5 602.4 L1237.6 600.6 L1241.2 598.8 L1244.4 596.9 L1247.4 594.9 L1250.2 592.9 L1253.1 590.8 L1257.3 587.4 L1260.9 583.9 L1264 580.2 L1266.7 576.2 L1269 572 L1271.2 567.4 L1272.8 563.6 L1274.2 559.5 L1275.6 555.2 L1276.7 550.7 L1277.7 546.2 L1278.5 541.7 L1279.1 537.4 L1279.5 533.2 L1279.6 528.8 L1279.5 524.7 L1279.1 520.7 L1278.4 516.8 L1277.5 512.8 L1276.4 508.6 L1275.1 504.1 L1273.9 500.3 L1272.6 496.3 L1271.2 492.1 L1269.6 487.8 L1267.9 483.4 L1266 479.1 L1264 474.7 L1261.8 470.5 L1259.3 466.5 L1256.9 463.1 L1254.3 459.7 L1251.6 456.5 L1248.7 453.4 L1245.7 450.3 L1242.7 447.3 L1239.6 444.3 L1236.6 441.3 L1233.7 438.3 L1230.8 435.3M379.7 446.3 L383.6 445.9 L387.3 445.5 L391 445 L394.6 444.6 L398.3 444.2 L402.1 443.8 L406.1 443.4 L410.4 443 L414.9 442.6 L419.8 442.3 L423.3 442 L426.8 441.7 L430.6 441.4 L434.4 441 L438.4 440.7 L442.4 440.4 L446.6 440 L450.8 439.7 L455.1 439.5 L459.5 439.3 L464 439.1 L468.4 439 L473 439 L477.6 439.1 L482.1 439.3 L486 439.5 L489.9 439.7 L494 440 L498.1 440.3 L502.2 440.7 L506.4 441 L510.7 441.5 L514.9 441.9 L519.2 442.5 L523.5 443 L527.8 443.6 L532.1 444.3 L536.3 445 L540.5 445.8 L544.7 446.6 L548.7 447.4 L552.8 448.4 L556.7 449.3 L560.8 450.4 L564.7 451.6 L568.6 452.9 L572.4 454.3 L576.1 455.7 L579.8 457.2 L583.4 458.7 L587 460.3 L590.6 461.9 L594.2 463.5 L597.8 465.2 L601.5 466.8 L605.3 468.5 L609.1 470.2 L613 471.9 L617 473.6 L621.1 475.2 L624.4 476.5 L627.6 477.8 L630.7 479 L633.7 480.1 L636.6 481.3 L639.5 482.4 L642.4 483.5 L645.3 484.7 L648.3 485.8 L651.4 487 L654.6 488.3 L658 489.6 L661.5 491 L665.4 492.4 L669.4 494 L673.8 495.6 L678.5 497.4 L683.5 499.3 L689 501.4 L694.8 503.6 L701.2 506 L703.9 507 L706.7 508 L709.7 509.2 L712.7 510.3 L715.9 511.5 L719.2 512.7 L722.6 514 L726.1 515.3 L729.7 516.7 L733.4 518.1 L737.2 519.5 L741 520.9 L744.9 522.4 L748.9 523.8 L752.9 525.4 L757 526.9 L761.1 528.4 L765.3 530 L769.5 531.6 L773.8 533.2 L778 534.8 L782.3 536.4 L786.7 538 L791 539.6 L795.3 541.2 L799.7 542.8 L804 544.5 L808.3 546.1 L812.7 547.7 L817 549.3 L821.2 550.9 L825.5 552.5 L829.7 554 L833.9 555.6 L838 557.1 L842.1 558.6 L846.1 560.1 L850.1 561.6 L854 563 L857.8 564.4 L861.5 565.8 L865.2 567.2 L868.8 568.5 L872.3 569.8 L875.7 571 L879 572.2 L882.2 573.4 L885.2 574.5 L888.2 575.6 L891 576.6 L893.7 577.6 L896.3 578.5 L903.5 581.1 L909.7 583.3 L915.2 585.3 L920 587 L924.2 588.5 L927.8 589.8 L931 591 L933.9 591.9 L936.6 592.8 L939.1 593.6 L941.5 594.3 L944.1 595 L946.7 595.7 L949.7 596.4 L952.9 597.2 L956.7 598.1 L960.9 599.1 L964.5 600 L968.2 600.8 L972 601.7 L975.8 602.5 L979.8 603.4 L983.8 604.2 L987.9 605.1 L992.1 605.9 L996.3 606.8 L1000.5 607.6 L1004.8 608.4 L1009.1 609.2 L1013.3 609.9 L1017.6 610.6 L1021.9 611.3 L1026.1 612 L1030.3 612.6 L1034.4 613.2 L1038.5 613.7 L1042.6 614.2 L1046.5 614.6 L1050.4 615 L1054.6 615.4 L1058.7 615.8 L1062.8 616.1 L1066.8 616.3 L1070.8 616.5 L1074.7 616.7 L1078.6 616.9 L1082.5 617 L1086.4 617 L1090.2 617.1 L1094.1 617 L1098 617 L1101.8 616.9 L1105.7 616.8 L1109.6 616.6 L1113.6 616.4 L1117.5 616.2 L1121.5 615.9 L1125.6 615.6 L1129.7 615.3 L1133.6 614.9 L1137.7 614.4 L1142 613.9 L1146.3 613.4 L1150.6 612.8 L1155.1 612.1 L1159.5 611.4 L1164 610.7 L1168.5 610 L1172.9 609.2 L1177.3 608.4 L1181.7 607.6 L1186 606.8 L1190.1 606 L1194.2 605.1 L1198.1 604.3 L1201.9 603.5 L1205.5 602.7 L1208.9 601.9 L1212.1 601.1 L1215 600.4 L1221.2 598.7 L1226.4 597.1 L1230.8 595.6 L1234.5 594 L1237.8 592.4 L1240.7 590.8 L1243.4 589 L1246.1 587.2 L1248.9 585.2 L1252.7 582.2 L1255.8 579.1 L1258.4 576 L1260.7 572.5 L1262.8 568.8 L1264.8 564.6 L1266.2 561.1 L1267.6 557.3 L1268.8 553.3 L1269.9 549.1 L1270.8 544.8 L1271.6 540.6 L1272.2 536.6 L1272.5 532.8 L1272.7 528.8 L1272.6 525.1 L1272.3 521.5 L1271.8 518 L1271.1 514.3 L1270.1 510.3 L1268.9 505.9 L1267.8 502.2 L1266.7 498.2 L1265.4 494.1 L1264 489.9 L1262.4 485.6 L1260.7 481.4 L1258.8 477.2 L1256.8 473.3 L1254.7 469.5 L1252.5 466.3 L1250.1 463.1 L1247.5 460 L1244.8 457 L1241.9 454 L1239 450.9 L1236 447.9 L1233 444.9 L1230 441.8 L1227.2 438.7" stroke="#5e3e28" stroke-width="0.9" fill="none"/>
<path d="M380.3 451.7 L384.2 451.3 L388 450.9 L391.6 450.5 L395.3 450.1 L398.9 449.7 L402.7 449.3 L406.6 448.9 L410.8 448.5 L415.3 448.1 L420.2 447.7 L423.7 447.5 L427.3 447.2 L431 446.9 L434.9 446.5 L438.8 446.2 L442.9 445.8 L447 445.5 L451.2 445.2 L455.4 445 L459.7 444.7 L464.1 444.6 L468.5 444.5 L472.9 444.5 L477.4 444.6 L481.9 444.7 L485.7 445 L489.6 445.2 L493.6 445.5 L497.6 445.8 L501.7 446.1 L505.9 446.5 L510.1 446.9 L514.3 447.4 L518.5 447.9 L522.8 448.5 L527 449.1 L531.2 449.7 L535.4 450.4 L539.5 451.2 L543.6 452 L547.6 452.8 L551.5 453.7 L555.3 454.7 L559.2 455.8 L563 456.9 L566.8 458.2 L570.4 459.5 L574 460.9 L577.6 462.4 L581.1 463.9 L584.7 465.5 L588.2 467.1 L591.8 468.8 L595.4 470.5 L599.1 472.2 L602.8 473.9 L606.7 475.6 L610.6 477.3 L614.7 479.1 L618.9 480.8 L622.2 482.1 L625.4 483.4 L628.5 484.6 L631.4 485.8 L634.3 487 L637.2 488.1 L640.1 489.3 L643 490.4 L646 491.6 L649.1 492.8 L652.3 494.1 L655.7 495.4 L659.3 496.8 L663.1 498.3 L667.2 499.9 L671.5 501.6 L676.2 503.4 L681.3 505.3 L686.7 507.4 L692.5 509.6 L698.8 512 L701.6 513.1 L704.4 514.2 L707.3 515.3 L710.4 516.5 L713.6 517.7 L716.9 518.9 L720.3 520.2 L723.8 521.6 L727.4 522.9 L731 524.3 L734.8 525.7 L738.6 527.2 L742.5 528.7 L746.5 530.2 L750.5 531.7 L754.6 533.3 L758.7 534.8 L762.9 536.4 L767.1 538 L771.3 539.6 L775.6 541.2 L779.9 542.9 L784.2 544.5 L788.5 546.1 L792.9 547.8 L797.2 549.4 L801.5 551 L805.9 552.7 L810.2 554.3 L814.5 555.9 L818.7 557.5 L823 559.1 L827.2 560.7 L831.4 562.3 L835.5 563.8 L839.6 565.4 L843.6 566.9 L847.5 568.4 L851.4 569.8 L855.3 571.3 L859 572.7 L862.7 574 L866.2 575.4 L869.7 576.7 L873.1 577.9 L876.4 579.1 L879.6 580.3 L882.7 581.5 L885.6 582.5 L888.5 583.6 L891.2 584.6 L893.7 585.5 L900.9 588.1 L907.2 590.4 L912.6 592.4 L917.4 594.2 L921.6 595.7 L925.2 597.1 L928.5 598.2 L931.5 599.3 L934.2 600.2 L936.8 601 L939.4 601.8 L942 602.6 L944.7 603.3 L947.7 604.1 L951.1 604.9 L954.8 605.9 L959.1 606.9 L962.7 607.7 L966.4 608.6 L970.2 609.5 L974.1 610.3 L978.1 611.2 L982.2 612.1 L986.3 612.9 L990.5 613.8 L994.8 614.6 L999 615.4 L1003.3 616.2 L1007.7 617 L1012 617.8 L1016.3 618.5 L1020.6 619.2 L1024.9 619.9 L1029.2 620.5 L1033.4 621.1 L1037.5 621.6 L1041.6 622.1 L1045.7 622.6 L1049.6 623 L1053.9 623.4 L1058.1 623.7 L1062.2 624 L1066.3 624.2 L1070.4 624.4 L1074.4 624.6 L1078.4 624.7 L1082.4 624.8 L1086.3 624.8 L1090.3 624.8 L1094.2 624.8 L1098.1 624.7 L1102.1 624.6 L1106 624.4 L1110 624.2 L1114 624 L1118 623.7 L1122.1 623.4 L1126.2 623.1 L1130.3 622.7 L1134.4 622.3 L1138.6 621.9 L1142.9 621.4 L1147.3 620.8 L1151.7 620.2 L1156.2 619.5 L1160.7 618.9 L1165.2 618.1 L1169.7 617.4 L1174.2 616.6 L1178.7 615.8 L1183.1 615 L1187.4 614.1 L1191.6 613.3 L1195.7 612.5 L1199.7 611.6 L1203.5 610.8 L1207.2 610 L1210.6 609.2 L1213.9 608.4 L1217 607.6 L1223.3 605.9 L1228.7 604.1 L1233.5 602.4 L1237.6 600.6 L1241.2 598.8 L1244.4 596.9 L1247.4 594.9 L1250.2 592.9 L1253.1 590.8 L1257.3 587.4 L1260.9 583.9 L1264 580.2 L1266.7 576.2 L1269 572 L1271.2 567.4 L1272.8 563.6 L1274.2 559.5 L1275.6 555.2 L1276.7 550.7 L1277.7 546.2 L1278.5 541.7 L1279.1 537.4 L1279.5 533.2 L1279.6 528.8 L1279.5 524.7 L1279.1 520.7 L1278.4 516.8 L1277.5 512.8 L1276.4 508.6 L1275.1 504.1 L1273.9 500.3 L1272.6 496.3 L1271.2 492.1 L1269.6 487.8 L1267.9 483.4 L1266 479.1 L1264 474.7 L1261.8 470.5 L1259.3 466.5 L1256.9 463.1 L1254.3 459.7 L1251.6 456.5 L1248.7 453.4 L1245.7 450.3 L1242.7 447.3 L1239.6 444.3 L1236.6 441.3 L1233.7 438.3 L1230.8 435.3" stroke="#f2ece6" stroke-width="0.7" fill="none" stroke-dasharray="1 1.5" opacity="0.9"/>
<path d="M379.7 446.3 L383.6 445.9 L387.3 445.5 L391 445 L394.6 444.6 L398.3 444.2 L402.1 443.8 L406.1 443.4 L410.4 443 L414.9 442.6 L419.8 442.3 L423.3 442 L426.8 441.7 L430.6 441.4 L434.4 441 L438.4 440.7 L442.4 440.4 L446.6 440 L450.8 439.7 L455.1 439.5 L459.5 439.3 L464 439.1 L468.4 439 L473 439 L477.6 439.1 L482.1 439.3 L486 439.5 L489.9 439.7 L494 440 L498.1 440.3 L502.2 440.7 L506.4 441 L510.7 441.5 L514.9 441.9 L519.2 442.5 L523.5 443 L527.8 443.6 L532.1 444.3 L536.3 445 L540.5 445.8 L544.7 446.6 L548.7 447.4 L552.8 448.4 L556.7 449.3 L560.8 450.4 L564.7 451.6 L568.6 452.9 L572.4 454.3 L576.1 455.7 L579.8 457.2 L583.4 458.7 L587 460.3 L590.6 461.9 L594.2 463.5 L597.8 465.2 L601.5 466.8 L605.3 468.5 L609.1 470.2 L613 471.9 L617 473.6 L621.1 475.2 L624.4 476.5 L627.6 477.8 L630.7 479 L633.7 480.1 L636.6 481.3 L639.5 482.4 L642.4 483.5 L645.3 484.7 L648.3 485.8 L651.4 487 L654.6 488.3 L658 489.6 L661.5 491 L665.4 492.4 L669.4 494 L673.8 495.6 L678.5 497.4 L683.5 499.3 L689 501.4 L694.8 503.6 L701.2 506 L703.9 507 L706.7 508 L709.7 509.2 L712.7 510.3 L715.9 511.5 L719.2 512.7 L722.6 514 L726.1 515.3 L729.7 516.7 L733.4 518.1 L737.2 519.5 L741 520.9 L744.9 522.4 L748.9 523.8 L752.9 525.4 L757 526.9 L761.1 528.4 L765.3 530 L769.5 531.6 L773.8 533.2 L778 534.8 L782.3 536.4 L786.7 538 L791 539.6 L795.3 541.2 L799.7 542.8 L804 544.5 L808.3 546.1 L812.7 547.7 L817 549.3 L821.2 550.9 L825.5 552.5 L829.7 554 L833.9 555.6 L838 557.1 L842.1 558.6 L846.1 560.1 L850.1 561.6 L854 563 L857.8 564.4 L861.5 565.8 L865.2 567.2 L868.8 568.5 L872.3 569.8 L875.7 571 L879 572.2 L882.2 573.4 L885.2 574.5 L888.2 575.6 L891 576.6 L893.7 577.6 L896.3 578.5 L903.5 581.1 L909.7 583.3 L915.2 585.3 L920 587 L924.2 588.5 L927.8 589.8 L931 591 L933.9 591.9 L936.6 592.8 L939.1 593.6 L941.5 594.3 L944.1 595 L946.7 595.7 L949.7 596.4 L952.9 597.2 L956.7 598.1 L960.9 599.1 L964.5 600 L968.2 600.8 L972 601.7 L975.8 602.5 L979.8 603.4 L983.8 604.2 L987.9 605.1 L992.1 605.9 L996.3 606.8 L1000.5 607.6 L1004.8 608.4 L1009.1 609.2 L1013.3 609.9 L1017.6 610.6 L1021.9 611.3 L1026.1 612 L1030.3 612.6 L1034.4 613.2 L1038.5 613.7 L1042.6 614.2 L1046.5 614.6 L1050.4 615 L1054.6 615.4 L1058.7 615.8 L1062.8 616.1 L1066.8 616.3 L1070.8 616.5 L1074.7 616.7 L1078.6 616.9 L1082.5 617 L1086.4 617 L1090.2 617.1 L1094.1 617 L1098 617 L1101.8 616.9 L1105.7 616.8 L1109.6 616.6 L1113.6 616.4 L1117.5 616.2 L1121.5 615.9 L1125.6 615.6 L1129.7 615.3 L1133.6 614.9 L1137.7 614.4 L1142 613.9 L1146.3 613.4 L1150.6 612.8 L1155.1 612.1 L1159.5 611.4 L1164 610.7 L1168.5 610 L1172.9 609.2 L1177.3 608.4 L1181.7 607.6 L1186 606.8 L1190.1 606 L1194.2 605.1 L1198.1 604.3 L1201.9 603.5 L1205.5 602.7 L1208.9 601.9 L1212.1 601.1 L1215 600.4 L1221.2 598.7 L1226.4 597.1 L1230.8 595.6 L1234.5 594 L1237.8 592.4 L1240.7 590.8 L1243.4 589 L1246.1 587.2 L1248.9 585.2 L1252.7 582.2 L1255.8 579.1 L1258.4 576 L1260.7 572.5 L1262.8 568.8 L1264.8 564.6 L1266.2 561.1 L1267.6 557.3 L1268.8 553.3 L1269.9 549.1 L1270.8 544.8 L1271.6 540.6 L1272.2 536.6 L1272.5 532.8 L1272.7 528.8 L1272.6 525.1 L1272.3 521.5 L1271.8 518 L1271.1 514.3 L1270.1 510.3 L1268.9 505.9 L1267.8 502.2 L1266.7 498.2 L1265.4 494.1 L1264 489.9 L1262.4 485.6 L1260.7 481.4 L1258.8 477.2 L1256.8 473.3 L1254.7 469.5 L1252.5 466.3 L1250.1 463.1 L1247.5 460 L1244.8 457 L1241.9 454 L1239 450.9 L1236 447.9 L1233 444.9 L1230 441.8 L1227.2 438.7" stroke="#f2ece6" stroke-width="0.7" fill="none" stroke-dasharray="1 1.5" opacity="0.9"/>
<path d="M379.9 456.9 L383.8 457 L387.7 457 L391.4 457 L395 457 L398.7 457 L402.5 457.1 L406.4 457.2 L410.5 457.4 L414.9 457.7 L419.6 458 L423 458.3 L426.6 458.6 L430.4 458.9 L434.3 459.3 L438.4 459.7 L442.5 460.1 L446.7 460.5 L450.9 461 L455.1 461.5 L459.3 462 L463.4 462.6 L467.5 463.2 L471.5 463.8 L475.3 464.5 L479 465.2 L483.2 466 L487.3 466.8 L491.3 467.6 L495.2 468.5 L499 469.4 L502.8 470.4 L506.5 471.4 L510.2 472.5 L513.9 473.6 L517.6 474.9 L521.3 476.2 L525 477.6 L528.8 479.1 L532.1 480.7 L535.5 482.5 L538.9 484.3 L542.3 486.4 L545.7 488.5 L549.2 490.7 L552.7 492.9 L556.3 495.2 L560 497.4 L563.7 499.7 L567.5 501.9 L571.4 504 L575.4 505.9 L579.5 507.8 L584.5 496.1 L580.9 494.4 L577.3 492.5 L573.7 490.6 L570.1 488.5 L566.6 486.4 L563 484.2 L559.4 482 L555.8 479.8 L552.2 477.7 L548.5 475.6 L544.7 473.6 L541 471.7 L537.1 470 L533.2 468.4 L529.2 466.9 L525.2 465.5 L521.2 464.1 L517.3 462.9 L513.4 461.8 L509.4 460.7 L505.5 459.7 L501.5 458.8 L497.5 457.9 L493.5 457.1 L489.4 456.2 L485.2 455.4 L481 454.6 L477.1 454 L473.1 453.3 L469 452.7 L464.8 452.2 L460.6 451.7 L456.3 451.1 L452 450.7 L447.7 450.2 L443.5 449.8 L439.3 449.4 L435.3 449 L431.3 448.7 L427.5 448.4 L423.9 448.1 L420.4 447.8 L415.5 447.5 L411 447.3 L406.7 447.2 L402.6 447.1 L398.8 447.1 L395 447.1 L391.4 447.1 L387.7 447.1 L384 447 L380.1 446.9 Z" fill="url(#bal)"/>
<path d="M832.4 606.8 L837.3 608.6 L842.2 610.4 L847 612 L851.6 613.7 L856.2 615.2 L860.7 616.7 L865.1 618.2 L869.4 619.6 L873.6 620.9 L877.8 622.2 L881.8 623.5 L885.9 624.7 L889.8 625.9 L893.7 627 L897.5 628.1 L901.3 629.2 L905 630.3 L908.7 631.3 L912.3 632.3 L915.9 633.3 L919.5 634.3 L923 635.3 L926.5 636.3 L930 637.2 L933.5 638.2 L937 639.1 L940.4 640.1 L943.9 641.1 L947.3 642.1 L950.7 643.1 L954.2 644.1 L957.7 645.1 L962.1 646.4 L966.6 647.7 L971 649.1 L975.4 650.4 L979.8 651.7 L984.1 653 L988.5 654.3 L992.8 655.6 L997 656.9 L1001.3 658.1 L1005.4 659.4 L1009.6 660.6 L1013.7 661.8 L1017.7 662.9 L1021.7 664.1 L1025.7 665.1 L1029.6 666.2 L1033.4 667.2 L1037.2 668.1 L1040.9 669 L1044.6 669.9 L1048.2 670.7 L1051.7 671.4 L1055.1 672.1 L1058.5 672.7 L1063.9 673.5 L1069.1 674.1 L1074 674.5 L1078.6 674.8 L1083 674.9 L1087.3 674.9 L1091.3 674.9 L1095.3 674.9 L1099.1 674.8 L1102.7 674.6 L1106.3 674.4 L1109.9 674.1 L1113.4 673.9 L1116.9 673.6 L1120.4 673.4 L1125.1 673.2 L1129.7 672.9 L1134.3 672.6 L1138.8 672.2 L1143.3 671.7 L1147.7 671.2 L1151.9 670.7 L1156.1 670.1 L1160.1 669.5 L1164.1 668.9 L1167.9 668.3 L1171.5 667.7 L1176.1 666.8 L1180.4 666 L1184.5 665.2 L1188.6 664.3 L1192.5 663.4 L1196.5 662.3 L1200.5 661.1 L1204.5 659.7 L1208.6 658 L1212.8 656.1 L1217 653.9 L1221.2 651.6 L1225.3 649.1 L1229.4 646.5 L1233.4 643.8 L1237.3 640.9 L1240.9 638 L1244.4 634.9 L1247.9 631.4 L1251.2 627.8 L1254.1 624 L1256.9 620.2 L1259.3 616.2 L1261.6 612.3 L1263.7 608.2 L1265.6 604 L1267.5 599.5 L1269.1 594.8 L1270.4 590.1 L1271.5 585.4 L1272.5 580.8 L1273.3 576.4 L1274.1 572.3 L1274.9 568.3 L1275.7 563.8 L1276.5 559.4 L1277.1 555.2 L1277.6 551.1 L1278 547.2 L1278.5 543.4 L1279 539.5 L1261 537.1 L1260.5 541.1 L1260 545.1 L1259.5 548.9 L1259.1 552.8 L1258.5 556.6 L1257.9 560.6 L1257.1 564.7 L1256.2 568.6 L1255.3 572.7 L1254.4 576.8 L1253.4 580.9 L1252.3 585 L1251.1 588.9 L1249.8 592.7 L1248.4 596.2 L1246.7 599.6 L1245 603 L1243.1 606.2 L1241.1 609.4 L1239 612.5 L1236.8 615.4 L1234.3 618.3 L1231.6 621.2 L1229 623.7 L1226 626.2 L1222.8 628.7 L1219.4 631.1 L1215.8 633.5 L1212.2 635.7 L1208.5 637.8 L1204.9 639.7 L1201.4 641.5 L1198 643 L1194.8 644.3 L1191.6 645.5 L1188.3 646.5 L1184.8 647.4 L1181.2 648.2 L1177.3 649 L1173 649.7 L1168.5 650.5 L1164.9 651.2 L1161.2 651.8 L1157.4 652.4 L1153.6 653.1 L1149.6 653.7 L1145.5 654.3 L1141.3 654.8 L1137.1 655.3 L1132.8 655.8 L1128.4 656.2 L1124.1 656.6 L1119.6 656.9 L1115.9 657 L1112.3 657.2 L1108.7 657.5 L1105.2 657.7 L1101.7 658 L1098.2 658.2 L1094.7 658.4 L1091.1 658.6 L1087.4 658.6 L1083.6 658.4 L1079.7 658.1 L1075.5 657.7 L1071.1 657.1 L1066.4 656.4 L1061.5 655.5 L1058.4 654.9 L1055.2 654.2 L1051.9 653.5 L1048.5 652.7 L1045 651.9 L1041.4 651 L1037.8 650 L1034.1 649.1 L1030.3 648 L1026.4 647 L1022.5 645.9 L1018.5 644.8 L1014.4 643.6 L1010.3 642.4 L1006.2 641.2 L1002 640 L997.7 638.8 L993.4 637.5 L989.1 636.3 L984.7 635 L980.3 633.7 L975.8 632.4 L971.4 631.2 L966.9 629.9 L962.3 628.6 L958.8 627.6 L955.3 626.7 L951.7 625.8 L948.2 624.9 L944.7 623.9 L941.3 623 L937.8 622.1 L934.3 621.2 L930.8 620.3 L927.2 619.4 L923.7 618.5 L920.1 617.6 L916.5 616.6 L912.9 615.7 L909.3 614.7 L905.6 613.7 L901.8 612.7 L898.1 611.6 L894.2 610.5 L890.3 609.4 L886.4 608.2 L882.4 607 L878.3 605.8 L874.1 604.5 L869.9 603.1 L865.6 601.8 L861.2 600.3 L856.7 598.8 L852.1 597.2 L847.4 595.6 L842.6 593.9 L837.6 592.2 Z" fill="url(#bal)"/>
<path d="M379.9 453.8L380.1 446.2M382 453.9L382.1 446.2M384.2 453.9L384.2 446.2M386.2 453.9L386.3 446.2M388.4 454L388.4 446.3M390.4 454L390.5 446.3M392.5 454L392.5 446.3M394.6 454L394.6 446.3M396.7 454L396.7 446.3M398.7 454L398.9 446.3M400.8 454L401 446.3M402.9 454L403.1 446.3M405 454.1L405.2 446.4M407 454.1L407.3 446.4M409.1 454.2L409.4 446.5M411.1 454.3L411.6 446.6M413.2 454.4L413.7 446.7M415.2 454.5L415.8 446.8M417.3 454.7L417.9 447M419.4 454.8L420 447.1M421.5 455L422.1 447.3M423.5 455.1L424.2 447.5M425.6 455.3L426.3 447.6M427.7 455.5L428.4 447.8M429.8 455.7L430.4 448M431.8 455.9L432.5 448.2M433.9 456L434.6 448.4M436 456.2L436.7 448.6M438.1 456.4L438.8 448.8M440.1 456.6L440.9 449M442.2 456.8L443 449.2M444.3 457L445.1 449.4M446.3 457.2L447.1 449.6M448.4 457.5L449.3 449.8M450.5 457.7L451.3 450M452.5 457.9L453.4 450.3M454.6 458.2L455.5 450.5M456.6 458.4L457.6 450.8M458.7 458.7L459.7 451M460.8 458.9L461.8 451.3M462.8 459.2L463.9 451.6M464.9 459.5L466 451.8M466.9 459.8L468 452.1M469 460.1L470.2 452.5M471 460.4L472.2 452.8M473 460.7L474.3 453.1M475.1 461L476.4 453.4M477.1 461.4L478.5 453.8M479.2 461.8L480.6 454.2M481.2 462.1L482.7 454.6M483.2 462.5L484.7 455M485.3 462.9L486.8 455.4M487.3 463.3L488.8 455.8M489.3 463.8L490.9 456.2M491.4 464.2L493 456.7M493.4 464.6L495.1 457.1M495.4 465.1L497.1 457.6M497.4 465.5L499.2 458M499.4 466L501.3 458.5M501.4 466.5L503.3 459M503.4 467L505.4 459.5M505.4 467.5L507.4 460.1M507.3 468L509.5 460.6M509.4 468.6L511.5 461.2M511.3 469.1L513.6 461.8M513.3 469.8L515.6 462.4M515.2 470.3L517.7 463.1M517.2 471L519.7 463.7M519.1 471.6L521.7 464.4M521.1 472.3L523.7 465.1M523 473L525.7 465.8M524.9 473.7L527.7 466.6M526.8 474.5L529.7 467.4M528.7 475.2L531.7 468.1M530.5 476L533.7 469M532.4 476.8L535.7 469.8M534.2 477.7L537.7 470.8M536.1 478.6L539.6 471.7M537.8 479.6L541.6 472.7M539.7 480.6L543.5 473.7M541.5 481.6L545.4 474.8M543.3 482.6L547.3 475.8M545.1 483.7L549.2 476.9M546.9 484.8L551.1 478M548.7 485.9L552.9 479.1M550.6 487.1L554.8 480.3M552.4 488.2L556.6 481.4M554.3 489.4L558.5 482.5M556.1 490.5L560.4 483.6M558 491.7L562.2 484.8M559.9 492.9L564.1 485.9M561.8 494.1L565.9 487M563.7 495.2L567.8 488.1M565.7 496.4L569.7 489.2M567.7 497.5L571.6 490.3M569.7 498.6L573.5 491.3M571.7 499.7L575.5 492.3M573.8 500.8L577.4 493.3M575.8 501.8L579.4 494.2M578 502.8L581.3 495.1M580.1 503.7L583.4 496M582.3 504.7L585.4 496.8M584.6 505.6L587.4 497.6M586.8 506.4L589.5 498.3M589.1 507.2L591.5 499M591.5 507.9L593.6 499.5M593.9 508.5L595.8 500.1M596.2 509L598 500.5M598.5 509.5L600.3 501M600.7 510L602.7 501.5M603 510.5L605.1 502M605.3 511.1L607.4 502.6M607.5 511.7L609.8 503.2M609.7 512.3L612.3 503.8M612 513L614.6 504.5M614.2 513.7L617 505.2M616.5 514.4L619.3 505.9M618.8 515.1L621.7 506.7M621.1 515.9L624 507.4M623.4 516.7L626.3 508.2M625.6 517.5L628.7 509M627.9 518.3L631 509.8M630.2 519.2L633.3 510.7M632.5 520L635.7 511.5M634.8 520.9L638 512.4M637.1 521.8L640.3 513.3M639.3 522.6L642.6 514.1M641.6 523.5L645 515M643.9 524.4L647.3 515.9M646.2 525.4L649.6 516.8M648.5 526.3L651.9 517.7M650.8 527.2L654.3 518.7M653.1 528.2L656.6 519.6M655.5 529.1L658.9 520.5M657.8 530L661.3 521.4M660.1 531L663.6 522.4M662.4 532L666 523.3M664.8 532.9L668.3 524.3M667.1 533.9L670.7 525.2M669.5 534.9L673 526.2M671.8 535.8L675.4 527.2M674.2 536.8L677.8 528.1M676.5 537.8L680.1 529.1M678.9 538.8L682.5 530.1M681.2 539.8L684.9 531M683.6 540.8L687.3 532M686 541.8L689.6 533M688.4 542.8L692 534M690.7 543.7L694.4 534.9M693.1 544.7L696.8 535.9M695.5 545.8L699.2 536.9M697.9 546.8L701.6 537.9M700.3 547.8L704 538.9M702.7 548.8L706.4 539.9M705.1 549.8L708.8 540.9M707.5 550.8L711.2 541.9M709.9 551.8L713.7 542.9M712.4 552.8L716.1 543.9M714.8 553.8L718.5 544.9M717.2 554.9L720.9 545.9M719.6 555.9L723.4 546.9M722.1 556.9L725.8 547.9M724.5 557.9L728.3 548.9M727 559L730.7 549.9M729.4 560L733.2 550.9M731.9 561L735.6 552M734.3 562L738.1 553M736.8 563.1L740.5 554M739.2 564.1L743 555M741.7 565.1L745.5 556M744.2 566.2L747.9 557M746.6 567.2L750.4 558.1M749.1 568.2L752.9 559.1M751.6 569.3L755.4 560.1M754.1 570.3L757.9 561.1M756.6 571.3L760.4 562.1M759.1 572.4L762.9 563.2M761.6 573.4L765.4 564.2M764.1 574.5L767.9 565.2M766.6 575.5L770.4 566.2M769.1 576.5L772.9 567.2M771.7 577.6L775.5 568.3M774.2 578.6L778 569.3M776.7 579.7L780.5 570.3M779.3 580.7L783 571.3M781.8 581.7L785.6 572.4M784.3 582.8L788.1 573.4M786.9 583.8L790.7 574.4M789.5 584.9L793.2 575.4M792 585.9L795.8 576.4M794.6 586.9L798.4 577.4M797.2 588L800.9 578.5M799.8 589L803.5 579.5M802.3 590L806.1 580.5M804.9 591.1L808.7 581.5M807.5 592.1L811.3 582.5M810.2 593.1L813.9 583.5M812.8 594.2L816.5 584.5M815.4 595.2L819.1 585.5M818 596.2L821.7 586.5M820.7 597.2L824.3 587.5M823.3 598.2L827 588.5M826 599.2L829.6 589.5M828.6 600.2L832.2 590.4M831.3 601.2L834.9 591.4M834 602.2L837.5 592.3M836.7 603.2L840.2 593.3M839.4 604.2L842.9 594.2M842.1 605.2L845.6 595.2M844.8 606.1L848.3 596.1M847.6 607.1L851 597M850.3 608L853.7 597.9M853.1 609L856.4 598.8M855.8 609.9L859.2 599.7M858.6 610.8L861.9 600.6M861.4 611.8L864.7 601.5M864.2 612.7L867.5 602.4M867 613.6L870.2 603.3M869.8 614.5L873 604.2M872.6 615.4L875.8 605M875.5 616.3L878.6 605.9M878.3 617.2L881.5 606.7M881.1 618L884.3 607.5M884 618.9L887.1 608.4M886.9 619.8L890 609.2M889.8 620.6L892.8 610M892.7 621.5L895.7 610.8M895.6 622.3L898.6 611.6M898.5 623.2L901.5 612.4M901.4 624L904.4 613.2M904.4 624.8L907.3 614M907.3 625.6L910.2 614.8M910.3 626.5L913.2 615.6M913.2 627.3L916.1 616.3M916.2 628.1L919.1 617.1M919.2 628.9L922.1 617.9M922.2 629.7L925.1 618.7M925.2 630.5L928.1 619.4M928.2 631.3L931.1 620.2M931.2 632.2L934.2 621M934.2 633L937.2 621.8M937.3 633.8L940.2 622.6M940.3 634.6L943.3 623.4M943.3 635.5L946.4 624.2M946.4 636.3L949.5 625M949.4 637.2L952.6 625.8M952.5 638L955.7 626.6M955.6 638.9L958.8 627.5M958.6 639.8L961.9 628.4M961.7 640.7L965 629.2M964.8 641.6L968.2 630.1M967.9 642.5L971.3 631M971 643.4L974.4 631.9M974.2 644.3L977.5 632.8M977.3 645.3L980.7 633.7M980.4 646.2L983.8 634.6M983.5 647.1L986.9 635.6M986.7 648.1L990.1 636.5M989.8 649L993.2 637.4M993 649.9L996.4 638.3M996.1 650.9L999.5 639.2M999.3 651.8L1002.7 640.1M1002.5 652.7L1005.9 641M1005.6 653.7L1009 642M1008.8 654.6L1012.2 642.9M1012 655.5L1015.4 643.8M1015.3 656.5L1018.6 644.6M1018.5 657.4L1021.8 645.5M1021.7 658.3L1025 646.4M1025 659.2L1028.2 647.3M1028.2 660.1L1031.4 648.1M1031.5 660.9L1034.6 648.9M1034.8 661.8L1037.8 649.8M1038.1 662.6L1041 650.6M1041.4 663.5L1044.3 651.3M1044.7 664.2L1047.5 652.1M1048.1 665L1050.8 652.8M1051.5 665.8L1054 653.5M1054.9 666.4L1057.3 654.1M1058.4 667.1L1060.5 654.7M1061.9 667.7L1063.7 655.2M1065.5 668.2L1066.9 655.7M1068.8 668.7L1070.3 656.2M1072.4 669.1L1073.6 656.5M1076 669.4L1076.8 656.8M1079.6 669.6L1080 657.1M1083 669.8L1083.5 657.2M1086.6 669.9L1086.7 657.3M1090.1 669.9L1090 657.3M1093.7 669.8L1093.3 657.2M1097.2 669.7L1096.6 657.1M1100.7 669.5L1099.9 657M1104.2 669.3L1103.3 656.8M1107.6 669.1L1106.7 656.5M1111 668.9L1110.1 656.3M1114.3 668.6L1113.6 656.1M1117.7 668.4L1117 655.8M1121.2 668.2L1120.4 655.7M1124.6 668.1L1123.8 655.5M1128.1 667.8L1127.1 655.3M1131.6 667.5L1130.5 655M1135.1 667.2L1133.8 654.7M1138.5 666.9L1137.2 654.4M1142 666.5L1140.5 654M1145.4 666.1L1143.8 653.6M1148.9 665.7L1147.2 653.2M1152.3 665.2L1150.5 652.7M1155.7 664.7L1153.9 652.3M1159.2 664.2L1157.2 651.7M1162.6 663.6L1160.5 651.2M1166 663.1L1163.9 650.7M1169.4 662.5L1167.2 650.1M1172.8 661.9L1170.6 649.5M1176.2 661.3L1173.9 649M1179.5 660.6L1177.2 648.4M1182.9 660L1180.5 647.8M1186.3 659.2L1183.7 647.2M1189.8 658.4L1186.8 646.6M1193.2 657.5L1189.8 645.8M1196.6 656.5L1192.7 645.1M1200 655.4L1195.6 644.2M1203.1 654.3L1198.7 643.1M1206.3 652.9L1201.5 642M1209.4 651.5L1204.3 640.8M1212.5 650L1207 639.5M1215.4 648.5L1209.9 638.1M1218.3 646.9L1212.5 636.7M1221.2 645.2L1215.2 635.3M1224.1 643.5L1217.7 633.8M1226.7 641.8L1220.4 632.1M1229.5 639.9L1222.9 630.5M1232.2 638L1225.3 628.9M1234.7 636.1L1227.8 627.1M1237.3 634L1230 625.4M1239.8 631.9L1232.2 623.6M1242.3 629.6L1234.3 621.8M1244.5 627.5L1236.5 619.7M1246.7 625L1238.3 617.8M1248.9 622.5L1240.2 615.8M1250.7 620.1L1242.1 613.5M1252.6 617.5L1243.7 611.3M1254.4 614.8L1245.2 609.1M1256.1 612.1L1246.7 606.9M1257.6 609.6L1248.2 604.4M1259 606.9L1249.5 602M1260.4 604.1L1250.8 599.7M1261.6 601.5L1252.1 597.1M1262.9 598.6L1253.1 594.8M1264 595.6L1254.1 592.4M1264.9 593L1255 589.8M1265.7 590.1L1255.8 587.3M1266.5 587.2L1256.6 584.8M1267.2 584.5L1257.3 582.1M1267.8 581.8L1257.9 579.6M1268.4 579L1258.6 576.9M1269 576.3L1259.2 574.3M1269.5 573.7L1259.8 571.6M1270 571L1260.3 569M1270.5 568.4L1260.9 566.4M1271.1 565.6L1261.4 563.9M1271.6 563L1261.9 561.3M1272 560.3L1262.4 558.8M1272.5 557.5L1262.8 556.3M1272.8 554.9L1263.1 553.6M1273.2 552.2L1263.4 551M1273.5 549.6L1263.8 548.4M1273.8 546.9L1264.1 545.8M1274.1 544.3L1264.4 543.1M1274.4 541.7L1264.7 540.4M1274.8 539.1L1265.1 537.8" stroke="#6e4830" stroke-width="1.4" fill="none"/>
<path d="M379.9 452.7 L383.9 452.8 L387.7 452.9 L391.4 452.9 L395 452.9 L398.7 452.9 L402.5 452.9 L406.4 453 L410.6 453.2 L415 453.4 L419.8 453.7 L423.2 454 L426.8 454.3 L430.6 454.6 L434.6 455 L438.6 455.4 L442.7 455.8 L446.9 456.2 L451.1 456.7 L455.4 457.1 L459.6 457.7 L463.8 458.2 L467.9 458.8 L471.9 459.4 L475.8 460 L479.5 460.7 L483.7 461.5 L487.8 462.3 L491.8 463.2 L495.8 464 L499.6 464.9 L503.5 465.9 L507.3 466.9 L511 467.9 L514.8 469.1 L518.5 470.3 L522.3 471.6 L526.1 473 L529.9 474.5 L533.5 476.1 L537 477.8 L540.5 479.7 L544 481.7 L547.5 483.8 L551 486 L554.6 488.2 L558.1 490.4 L561.8 492.7 L565.5 494.9 L569.2 497 L573 499 L576.9 501 L580.8 502.8 L584.3 504.2 L587.3 505.3 L590.1 506.2 L592.6 506.9 L595.1 507.5 L597.5 508 L600 508.6 L602.7 509.2 L605.8 509.9 L609.4 510.9 L613.6 512.1 L618.5 513.7 L624.3 515.7 L631 518.1 L638.9 521 L641.3 522 L643.9 523 L646.6 524.1 L649.5 525.2 L652.4 526.4 L655.5 527.7 L658.6 529 L661.9 530.3 L665.2 531.7 L668.7 533.1 L672.2 534.5 L675.8 536 L679.5 537.6 L683.2 539.1 L687 540.7 L690.9 542.3 L694.8 544 L698.8 545.6 L702.8 547.3 L706.9 549 L711 550.8 L715.1 552.5 L719.3 554.2 L723.5 556 L727.7 557.8 L732 559.5 L736.2 561.3 L740.5 563.1 L744.7 564.9 L749 566.7 L753.3 568.4 L757.5 570.2 L761.7 571.9 L766 573.7 L770.1 575.4 L774.3 577.1 L778.4 578.8 L782.5 580.5 L786.6 582.1 L790.6 583.8 L794.6 585.4 L798.5 586.9 L802.3 588.5 L806.1 590 L809.9 591.4 L813.5 592.9 L817.1 594.3 L820.6 595.6 L824 596.9 L827.3 598.2 L830.6 599.4 L833.7 600.5 L838.7 602.3 L843.5 604.1 L848.3 605.7 L852.9 607.3 L857.5 608.9 L861.9 610.3 L866.3 611.8 L870.6 613.1 L874.8 614.5 L878.9 615.7 L883 617 L887 618.2 L890.9 619.3 L894.8 620.5 L898.6 621.5 L902.4 622.6 L906.1 623.6 L909.8 624.7 L913.4 625.7 L917 626.6 L920.6 627.6 L924.1 628.5 L927.6 629.5 L931.1 630.4 L934.6 631.4 L938 632.3 L941.5 633.2 L945 634.2 L948.4 635.1 L951.9 636.1 L955.4 637.1 L958.8 638.1 L963.3 639.4 L967.8 640.7 L972.2 642 L976.6 643.3 L981 644.6 L985.4 645.9 L989.7 647.2 L994 648.4 L998.3 649.7 L1002.5 650.9 L1006.7 652.2 L1010.8 653.4 L1014.9 654.5 L1018.9 655.7 L1022.9 656.8 L1026.8 657.9 L1030.7 658.9 L1034.5 659.9 L1038.3 660.9 L1041.9 661.8 L1045.5 662.6 L1049.1 663.4 L1052.5 664.1 L1055.9 664.8 L1059.2 665.4 L1064.5 666.3 L1069.5 667 L1074.3 667.5 L1078.8 667.8 L1083.2 668 L1087.3 668.1 L1091.3 668.1 L1095.1 668 L1098.9 667.8 L1102.5 667.6 L1106.1 667.4 L1109.6 667.2 L1113.1 666.9 L1116.6 666.7 L1120.2 666.5 L1124.8 666.2 L1129.4 665.9 L1134 665.5 L1138.4 665.1 L1142.8 664.6 L1147.1 664.1 L1151.4 663.5 L1155.5 662.9 L1159.5 662.3 L1163.4 661.7 L1167.1 661.1 L1170.8 660.4 L1175.3 659.6 L1179.6 658.8 L1183.7 658 L1187.6 657.1 L1191.5 656.2 L1195.3 655.2 L1199 653.9 L1202.8 652.5 L1206.7 650.9 L1210.7 649 L1214.7 647 L1218.7 644.7 L1222.7 642.4 L1226.7 639.8 L1230.5 637.2 L1234.1 634.5 L1237.5 631.8 L1240.7 628.9 L1244 625.7 L1247 622.4 L1249.7 619 L1252.2 615.4 L1254.5 611.8 L1256.6 608.2 L1258.6 604.4 L1260.4 600.5 L1262.1 596.5 L1263.6 592.2 L1264.8 587.8 L1266 583.4 L1266.9 579.1 L1267.8 574.8 L1268.6 570.6 L1269.4 566.7 L1270.3 562.4 L1271 558.2 L1271.5 554.1 L1272 550.2 L1272.5 546.3 L1272.9 542.4 L1273.5 538.5M380.1 447.3 L383.9 447.3 L387.7 447.4 L391.4 447.4 L395 447.4 L398.8 447.4 L402.6 447.4 L406.6 447.5 L410.8 447.7 L415.4 447.9 L420.2 448.3 L423.7 448.5 L427.3 448.8 L431.1 449.2 L435 449.5 L439.1 449.9 L443.3 450.3 L447.5 450.7 L451.7 451.2 L456 451.7 L460.3 452.2 L464.5 452.7 L468.7 453.3 L472.7 454 L476.7 454.6 L480.5 455.3 L484.7 456.1 L488.9 456.9 L493 457.8 L497 458.6 L500.9 459.6 L504.8 460.5 L508.7 461.5 L512.6 462.6 L516.4 463.8 L520.3 465.1 L524.2 466.4 L528.1 467.9 L532.1 469.5 L535.8 471.1 L539.5 472.9 L543.2 474.8 L546.8 476.8 L550.4 478.9 L554 481.1 L557.6 483.3 L561.2 485.5 L564.8 487.7 L568.4 489.8 L572 491.8 L575.7 493.8 L579.4 495.6 L583.2 497.2 L586.5 498.5 L589.3 499.6 L591.8 500.3 L594.1 501 L596.4 501.5 L598.8 502 L601.3 502.5 L604.1 503.1 L607.4 503.8 L611.1 504.8 L615.4 506 L620.5 507.6 L626.4 509.6 L633.3 512 L641.1 515 L643.7 515.9 L646.3 516.9 L649.1 518 L651.9 519.1 L654.9 520.3 L658 521.5 L661.1 522.8 L664.4 524.1 L667.8 525.5 L671.2 526.9 L674.8 528.3 L678.4 529.8 L682 531.3 L685.8 532.9 L689.6 534.4 L693.5 536 L697.4 537.7 L701.4 539.3 L705.5 541 L709.5 542.7 L713.6 544.4 L717.8 546.1 L722 547.8 L726.2 549.6 L730.4 551.3 L734.7 553.1 L738.9 554.8 L743.2 556.6 L747.4 558.4 L751.7 560.1 L756 561.9 L760.2 563.6 L764.5 565.3 L768.7 567.1 L772.9 568.8 L777 570.5 L781.2 572.1 L785.3 573.8 L789.3 575.4 L793.3 577 L797.3 578.6 L801.2 580.1 L805 581.6 L808.8 583.1 L812.5 584.6 L816.2 586 L819.8 587.3 L823.2 588.7 L826.6 589.9 L829.9 591.2 L833.2 592.3 L836.3 593.5 L841.2 595.2 L846 596.9 L850.7 598.5 L855.4 600.1 L859.9 601.6 L864.3 603 L868.7 604.4 L872.9 605.7 L877.1 607 L881.2 608.3 L885.2 609.5 L889.2 610.6 L893.1 611.7 L897 612.8 L900.8 613.9 L904.5 614.9 L908.2 615.9 L911.9 616.9 L915.5 617.8 L919.1 618.8 L922.6 619.7 L926.2 620.6 L929.7 621.5 L933.2 622.4 L936.7 623.4 L940.2 624.3 L943.7 625.2 L947.1 626.1 L950.6 627 L954.1 628 L957.6 628.9 L961.2 629.9 L965.7 631.2 L970.2 632.5 L974.6 633.8 L979 635 L983.5 636.3 L987.8 637.6 L992.2 638.9 L996.5 640.1 L1000.7 641.4 L1004.9 642.6 L1009.1 643.8 L1013.2 645 L1017.3 646.1 L1021.3 647.2 L1025.2 648.3 L1029.1 649.4 L1033 650.4 L1036.7 651.3 L1040.4 652.2 L1044 653.1 L1047.5 653.9 L1051 654.7 L1054.3 655.4 L1057.6 656 L1060.8 656.6 L1065.8 657.4 L1070.6 658 L1075.1 658.5 L1079.4 658.8 L1083.5 659 L1087.4 659.1 L1091.2 659.1 L1094.8 659 L1098.4 658.9 L1101.9 658.7 L1105.5 658.4 L1109 658.2 L1112.5 657.9 L1116.1 657.7 L1119.8 657.5 L1124.3 657.3 L1128.7 657 L1133.1 656.6 L1137.5 656.2 L1141.8 655.7 L1146 655.2 L1150.1 654.6 L1154.2 654 L1158.1 653.4 L1161.9 652.8 L1165.6 652.2 L1169.2 651.6 L1173.8 650.8 L1178 650.1 L1182 649.3 L1185.7 648.6 L1189.3 647.8 L1192.8 646.8 L1196.3 645.8 L1199.7 644.6 L1203.3 643.1 L1207 641.4 L1210.8 639.5 L1214.6 637.5 L1218.4 635.3 L1222.2 633 L1225.8 630.6 L1229.2 628.1 L1232.4 625.6 L1235.3 623.1 L1238.3 620.2 L1241 617.2 L1243.5 614.2 L1245.8 611.1 L1248 607.8 L1250 604.5 L1251.8 601 L1253.6 597.5 L1255.2 593.8 L1256.6 589.9 L1257.8 585.9 L1258.9 581.7 L1259.9 577.5 L1260.8 573.3 L1261.7 569.2 L1262.6 565.3 L1263.4 561.1 L1264 557.1 L1264.6 553.2 L1265.1 549.3 L1265.5 545.4 L1266 541.5 L1266.5 537.5" stroke="#5e3e28" stroke-width="1" fill="none"/>
<path d="M379.9 452.7 L383.9 452.8 L387.7 452.9 L391.4 452.9 L395 452.9 L398.7 452.9 L402.5 452.9 L406.4 453 L410.6 453.2 L415 453.4 L419.8 453.7 L423.2 454 L426.8 454.3 L430.6 454.6 L434.6 455 L438.6 455.4 L442.7 455.8 L446.9 456.2 L451.1 456.7 L455.4 457.1 L459.6 457.7 L463.8 458.2 L467.9 458.8 L471.9 459.4 L475.8 460 L479.5 460.7 L483.7 461.5 L487.8 462.3 L491.8 463.2 L495.8 464 L499.6 464.9 L503.5 465.9 L507.3 466.9 L511 467.9 L514.8 469.1 L518.5 470.3 L522.3 471.6 L526.1 473 L529.9 474.5 L533.5 476.1 L537 477.8 L540.5 479.7 L544 481.7 L547.5 483.8 L551 486 L554.6 488.2 L558.1 490.4 L561.8 492.7 L565.5 494.9 L569.2 497 L573 499 L576.9 501 L580.8 502.8 L584.3 504.2 L587.3 505.3 L590.1 506.2 L592.6 506.9 L595.1 507.5 L597.5 508 L600 508.6 L602.7 509.2 L605.8 509.9 L609.4 510.9 L613.6 512.1 L618.5 513.7 L624.3 515.7 L631 518.1 L638.9 521 L641.3 522 L643.9 523 L646.6 524.1 L649.5 525.2 L652.4 526.4 L655.5 527.7 L658.6 529 L661.9 530.3 L665.2 531.7 L668.7 533.1 L672.2 534.5 L675.8 536 L679.5 537.6 L683.2 539.1 L687 540.7 L690.9 542.3 L694.8 544 L698.8 545.6 L702.8 547.3 L706.9 549 L711 550.8 L715.1 552.5 L719.3 554.2 L723.5 556 L727.7 557.8 L732 559.5 L736.2 561.3 L740.5 563.1 L744.7 564.9 L749 566.7 L753.3 568.4 L757.5 570.2 L761.7 571.9 L766 573.7 L770.1 575.4 L774.3 577.1 L778.4 578.8 L782.5 580.5 L786.6 582.1 L790.6 583.8 L794.6 585.4 L798.5 586.9 L802.3 588.5 L806.1 590 L809.9 591.4 L813.5 592.9 L817.1 594.3 L820.6 595.6 L824 596.9 L827.3 598.2 L830.6 599.4 L833.7 600.5 L838.7 602.3 L843.5 604.1 L848.3 605.7 L852.9 607.3 L857.5 608.9 L861.9 610.3 L866.3 611.8 L870.6 613.1 L874.8 614.5 L878.9 615.7 L883 617 L887 618.2 L890.9 619.3 L894.8 620.5 L898.6 621.5 L902.4 622.6 L906.1 623.6 L909.8 624.7 L913.4 625.7 L917 626.6 L920.6 627.6 L924.1 628.5 L927.6 629.5 L931.1 630.4 L934.6 631.4 L938 632.3 L941.5 633.2 L945 634.2 L948.4 635.1 L951.9 636.1 L955.4 637.1 L958.8 638.1 L963.3 639.4 L967.8 640.7 L972.2 642 L976.6 643.3 L981 644.6 L985.4 645.9 L989.7 647.2 L994 648.4 L998.3 649.7 L1002.5 650.9 L1006.7 652.2 L1010.8 653.4 L1014.9 654.5 L1018.9 655.7 L1022.9 656.8 L1026.8 657.9 L1030.7 658.9 L1034.5 659.9 L1038.3 660.9 L1041.9 661.8 L1045.5 662.6 L1049.1 663.4 L1052.5 664.1 L1055.9 664.8 L1059.2 665.4 L1064.5 666.3 L1069.5 667 L1074.3 667.5 L1078.8 667.8 L1083.2 668 L1087.3 668.1 L1091.3 668.1 L1095.1 668 L1098.9 667.8 L1102.5 667.6 L1106.1 667.4 L1109.6 667.2 L1113.1 666.9 L1116.6 666.7 L1120.2 666.5 L1124.8 666.2 L1129.4 665.9 L1134 665.5 L1138.4 665.1 L1142.8 664.6 L1147.1 664.1 L1151.4 663.5 L1155.5 662.9 L1159.5 662.3 L1163.4 661.7 L1167.1 661.1 L1170.8 660.4 L1175.3 659.6 L1179.6 658.8 L1183.7 658 L1187.6 657.1 L1191.5 656.2 L1195.3 655.2 L1199 653.9 L1202.8 652.5 L1206.7 650.9 L1210.7 649 L1214.7 647 L1218.7 644.7 L1222.7 642.4 L1226.7 639.8 L1230.5 637.2 L1234.1 634.5 L1237.5 631.8 L1240.7 628.9 L1244 625.7 L1247 622.4 L1249.7 619 L1252.2 615.4 L1254.5 611.8 L1256.6 608.2 L1258.6 604.4 L1260.4 600.5 L1262.1 596.5 L1263.6 592.2 L1264.8 587.8 L1266 583.4 L1266.9 579.1 L1267.8 574.8 L1268.6 570.6 L1269.4 566.7 L1270.3 562.4 L1271 558.2 L1271.5 554.1 L1272 550.2 L1272.5 546.3 L1272.9 542.4 L1273.5 538.5" stroke="#f2ece6" stroke-width="0.7" fill="none" stroke-dasharray="1.1 1.7" opacity="0.9"/>
<path d="M380.1 447.3 L383.9 447.3 L387.7 447.4 L391.4 447.4 L395 447.4 L398.8 447.4 L402.6 447.4 L406.6 447.5 L410.8 447.7 L415.4 447.9 L420.2 448.3 L423.7 448.5 L427.3 448.8 L431.1 449.2 L435 449.5 L439.1 449.9 L443.3 450.3 L447.5 450.7 L451.7 451.2 L456 451.7 L460.3 452.2 L464.5 452.7 L468.7 453.3 L472.7 454 L476.7 454.6 L480.5 455.3 L484.7 456.1 L488.9 456.9 L493 457.8 L497 458.6 L500.9 459.6 L504.8 460.5 L508.7 461.5 L512.6 462.6 L516.4 463.8 L520.3 465.1 L524.2 466.4 L528.1 467.9 L532.1 469.5 L535.8 471.1 L539.5 472.9 L543.2 474.8 L546.8 476.8 L550.4 478.9 L554 481.1 L557.6 483.3 L561.2 485.5 L564.8 487.7 L568.4 489.8 L572 491.8 L575.7 493.8 L579.4 495.6 L583.2 497.2 L586.5 498.5 L589.3 499.6 L591.8 500.3 L594.1 501 L596.4 501.5 L598.8 502 L601.3 502.5 L604.1 503.1 L607.4 503.8 L611.1 504.8 L615.4 506 L620.5 507.6 L626.4 509.6 L633.3 512 L641.1 515 L643.7 515.9 L646.3 516.9 L649.1 518 L651.9 519.1 L654.9 520.3 L658 521.5 L661.1 522.8 L664.4 524.1 L667.8 525.5 L671.2 526.9 L674.8 528.3 L678.4 529.8 L682 531.3 L685.8 532.9 L689.6 534.4 L693.5 536 L697.4 537.7 L701.4 539.3 L705.5 541 L709.5 542.7 L713.6 544.4 L717.8 546.1 L722 547.8 L726.2 549.6 L730.4 551.3 L734.7 553.1 L738.9 554.8 L743.2 556.6 L747.4 558.4 L751.7 560.1 L756 561.9 L760.2 563.6 L764.5 565.3 L768.7 567.1 L772.9 568.8 L777 570.5 L781.2 572.1 L785.3 573.8 L789.3 575.4 L793.3 577 L797.3 578.6 L801.2 580.1 L805 581.6 L808.8 583.1 L812.5 584.6 L816.2 586 L819.8 587.3 L823.2 588.7 L826.6 589.9 L829.9 591.2 L833.2 592.3 L836.3 593.5 L841.2 595.2 L846 596.9 L850.7 598.5 L855.4 600.1 L859.9 601.6 L864.3 603 L868.7 604.4 L872.9 605.7 L877.1 607 L881.2 608.3 L885.2 609.5 L889.2 610.6 L893.1 611.7 L897 612.8 L900.8 613.9 L904.5 614.9 L908.2 615.9 L911.9 616.9 L915.5 617.8 L919.1 618.8 L922.6 619.7 L926.2 620.6 L929.7 621.5 L933.2 622.4 L936.7 623.4 L940.2 624.3 L943.7 625.2 L947.1 626.1 L950.6 627 L954.1 628 L957.6 628.9 L961.2 629.9 L965.7 631.2 L970.2 632.5 L974.6 633.8 L979 635 L983.5 636.3 L987.8 637.6 L992.2 638.9 L996.5 640.1 L1000.7 641.4 L1004.9 642.6 L1009.1 643.8 L1013.2 645 L1017.3 646.1 L1021.3 647.2 L1025.2 648.3 L1029.1 649.4 L1033 650.4 L1036.7 651.3 L1040.4 652.2 L1044 653.1 L1047.5 653.9 L1051 654.7 L1054.3 655.4 L1057.6 656 L1060.8 656.6 L1065.8 657.4 L1070.6 658 L1075.1 658.5 L1079.4 658.8 L1083.5 659 L1087.4 659.1 L1091.2 659.1 L1094.8 659 L1098.4 658.9 L1101.9 658.7 L1105.5 658.4 L1109 658.2 L1112.5 657.9 L1116.1 657.7 L1119.8 657.5 L1124.3 657.3 L1128.7 657 L1133.1 656.6 L1137.5 656.2 L1141.8 655.7 L1146 655.2 L1150.1 654.6 L1154.2 654 L1158.1 653.4 L1161.9 652.8 L1165.6 652.2 L1169.2 651.6 L1173.8 650.8 L1178 650.1 L1182 649.3 L1185.7 648.6 L1189.3 647.8 L1192.8 646.8 L1196.3 645.8 L1199.7 644.6 L1203.3 643.1 L1207 641.4 L1210.8 639.5 L1214.6 637.5 L1218.4 635.3 L1222.2 633 L1225.8 630.6 L1229.2 628.1 L1232.4 625.6 L1235.3 623.1 L1238.3 620.2 L1241 617.2 L1243.5 614.2 L1245.8 611.1 L1248 607.8 L1250 604.5 L1251.8 601 L1253.6 597.5 L1255.2 593.8 L1256.6 589.9 L1257.8 585.9 L1258.9 581.7 L1259.9 577.5 L1260.8 573.3 L1261.7 569.2 L1262.6 565.3 L1263.4 561.1 L1264 557.1 L1264.6 553.2 L1265.1 549.3 L1265.5 545.4 L1266 541.5 L1266.5 537.5" stroke="#f2ece6" stroke-width="0.7" fill="none" stroke-dasharray="1.1 1.7" opacity="0.9"/>
<path d="M603.9 519.6 L608.1 522 L612.2 524.4 L616 526.6 L619.7 528.9 L623.3 531 L626.7 533.1 L630 535.2 L633.2 537.2 L636.2 539.1 L639.9 541.4 L642.5 543.3 L645.2 545.2 L648.7 547.4 L653.4 550 L659.8 553.3 L666.2 540.8 L660.1 537.6 L656.2 535.1 L653.5 533.2 L651 531.3 L647.9 529.3 L643.8 526.8 L640.5 525 L637.2 523.1 L633.8 521.1 L630.3 519.1 L626.6 517 L622.8 514.9 L618.7 512.7 L614.5 510.4 L610.1 508.1 Z" fill="url(#bal)"/>
<path d="M727.4 584.1 L731.7 585.7 L736 587.3 L740.3 588.8 L744.6 590.2 L748.8 591.5 L752.9 592.8 L757 594 L761 595.2 L765 596.4 L768.9 597.6 L772.8 598.8 L776.5 600 L780.2 601.2 L783.9 602.5 L787.4 603.8 L791.6 605.3 L795.7 606.8 L799.9 608.4 L804 610 L808 611.5 L812 613.1 L815.9 614.7 L819.7 616.3 L823.4 617.8 L826.9 619.3 L830.3 620.8 L833.6 622.3 L836.6 623.6 L840.4 625.7 L842.8 627.5 L845 629.1 L847.5 631.1 L850.8 633.3 L855 635.5 L860.4 637.9 L867.2 640.4 L870.2 641.4 L873.3 642.4 L876.5 643.4 L879.9 644.4 L883.5 645.4 L887.3 646.5 L891.1 647.6 L895.1 648.7 L899.2 649.8 L903.4 650.9 L907.6 652.1 L911.9 653.2 L916.2 654.4 L920.6 655.6 L924.9 656.8 L929.3 657.9 L933.5 659.1 L937.8 660.3 L941.9 661.5 L946 662.7 L950 663.8 L953.8 665 L957.6 666.1 L961.5 667.3 L965.3 668.4 L968.8 669.4 L972.2 670.4 L975.5 671.4 L978.7 672.3 L981.7 673.1 L984.8 674 L987.8 674.9 L990.9 675.9 L994 676.9 L997.3 677.9 L1000.6 679.1 L1004.2 680.3 L1007.9 681.6 L1011.9 683.1 L1016.1 684.6 L1020.7 686.4 L1025.6 688.3 L1030.8 690.4 L1036.5 692.7 L1043.5 675.2 L1037.7 672.9 L1032.3 670.9 L1027.2 669 L1022.5 667.3 L1018 665.7 L1013.9 664.3 L1009.9 663.1 L1006.2 661.9 L1002.6 660.8 L999.2 659.8 L995.9 658.9 L992.7 658 L989.5 657.2 L986.4 656.3 L983.3 655.5 L980.1 654.6 L976.9 653.7 L973.5 652.8 L970 651.8 L966.4 650.7 L962.4 649.6 L958.6 648.5 L954.7 647.4 L950.6 646.3 L946.4 645.2 L942.2 644 L937.9 642.9 L933.6 641.8 L929.2 640.6 L924.8 639.5 L920.5 638.4 L916.1 637.2 L911.8 636.1 L907.6 635 L903.5 633.9 L899.4 632.8 L895.5 631.8 L891.6 630.7 L888 629.7 L884.5 628.7 L881.2 627.7 L878.1 626.7 L875.3 625.8 L872.8 624.8 L866.6 622.4 L862.5 620.3 L859.7 618.5 L857.5 616.7 L855.2 615 L852.2 613.2 L848.2 611.2 L843.4 609.1 L840.1 607.7 L836.7 606.3 L833.1 604.8 L829.5 603.2 L825.7 601.7 L821.8 600.1 L817.8 598.5 L813.7 596.9 L809.6 595.4 L805.4 593.8 L801.1 592.2 L796.9 590.7 L792.6 589.2 L788.7 587.9 L784.9 586.7 L781 585.6 L777 584.5 L773.1 583.3 L769.1 582.2 L765.1 581.1 L761.1 579.9 L757.1 578.8 L753 577.5 L749 576.3 L744.9 574.9 L740.8 573.5 L736.7 572 L732.6 570.5 Z" fill="url(#bal)"/>
<path d="M558.1 491.7L561.9 484.3M560.1 492.8L563.9 485.3M562.2 493.8L566 486.3M564.2 494.8L568 487.3M566.2 495.9L570 488.4M568.3 496.9L572.1 489.4M570.3 497.9L574.1 490.4M572.4 499L576.1 491.5M574.4 500L578.2 492.5M576.4 501L580.2 493.5M578.5 502L582.2 494.5M580.5 503.1L584.3 495.6M582.5 504.1L586.3 496.6M584.6 505.1L588.4 497.6M586.6 506.1L590.4 498.7M588.6 507.2L592.4 499.7M590.6 508.2L594.5 500.7M592.7 509.2L596.5 501.8M594.7 510.3L598.5 502.8M596.7 511.3L600.6 503.9M598.7 512.4L602.6 504.9M600.7 513.4L604.6 506M602.7 514.5L606.7 507.1M604.7 515.5L608.7 508.1M606.7 516.6L610.7 509.2M608.7 517.7L612.8 510.3M610.6 518.8L614.8 511.4M612.7 520L616.8 512.5M614.6 521.1L618.9 513.7M616.7 522.3L620.9 514.8M618.7 523.5L623 516M620.7 524.6L625 517.1M622.7 525.8L627.1 518.3M624.7 527.1L629.2 519.5M626.8 528.3L631.3 520.7M628.8 529.5L633.3 521.9M630.9 530.8L635.4 523.1M632.9 532L637.5 524.3M635 533.3L639.7 525.6M637.1 534.5L641.8 526.8M639 535.8L644 528.2M641.1 537.1L646.1 529.5M643 538.4L648.3 531M645.1 539.8L650.3 532.3M647.3 541.4L652.1 533.6M649.4 542.8L654.1 535M651.7 544.2L656 536.1M653.9 545.4L658.2 537.4M656.2 546.6L660.2 538.5M658.4 547.7L662.4 539.6M660.5 548.9L664.6 540.7M662.8 550L666.8 541.8M665.1 551.1L669 542.8M667.3 552.2L671.3 543.9M669.5 553.3L673.5 545M671.8 554.4L675.8 546M674.1 555.5L678 547.1M676.4 556.5L680.3 548.1M678.6 557.6L682.6 549.2M680.9 558.7L684.9 550.3M683.2 559.8L687.2 551.3M685.5 560.9L689.5 552.4M687.9 562L691.8 553.4M690.2 563L694.1 554.5M692.5 564.1L696.4 555.5M694.9 565.2L698.8 556.6M697.2 566.3L701.1 557.6M699.6 567.3L703.4 558.6M701.9 568.4L705.8 559.7M704.3 569.5L708.2 560.7M706.7 570.5L710.5 561.7M709.1 571.6L712.9 562.7M711.5 572.6L715.3 563.8M713.9 573.7L717.7 564.8M716.3 574.7L720.1 565.8M718.8 575.7L722.5 566.8M721.3 576.8L724.9 567.7M723.7 577.8L727.3 568.7M726.2 578.8L729.7 569.6M728.8 579.8L732.1 570.6M731.3 580.7L734.6 571.5M733.8 581.7L737.1 572.4M736.4 582.6L739.6 573.2M739 583.5L742.1 574.1M741.6 584.4L744.6 574.9M744.1 585.2L747.1 575.7M746.8 586.1L749.7 576.5M749.3 586.9L752.3 577.3M752 587.7L754.9 578.1M754.6 588.5L757.5 578.8M757.2 589.3L760.1 579.6M759.9 590.1L762.7 580.3M762.5 590.9L765.4 581.1M765.2 591.6L768 581.8M767.8 592.4L770.7 582.6M770.5 593.2L773.4 583.4M773.1 594L776.1 584.1M775.8 594.8L778.8 584.9M778.4 595.6L781.6 585.8M781 596.5L784.3 586.6M783.7 597.4L787 587.5M786.3 598.3L789.8 588.4M788.9 599.2L792.5 589.3M791.6 600.2L795.2 590.3M794.3 601.1L797.9 591.3M796.9 602.1L800.6 592.3M799.6 603.1L803.3 593.3M802.2 604.1L806 594.3M804.9 605.1L808.6 595.3M807.5 606.1L811.3 596.3M810.1 607.2L814 597.4M812.8 608.2L816.7 598.4M815.4 609.3L819.3 599.5M818 610.3L822 600.6M820.6 611.4L824.6 601.7M823.2 612.5L827.3 602.8M825.8 613.6L830 603.9M828.4 614.7L832.6 605M831.1 615.8L835.2 606.2M833.6 616.9L837.9 607.3M836.1 618L840.6 608.5M838.4 619.1L843.5 609.8M841 620.4L846 611.1M843.1 621.6L848.9 612.7M845.3 623.1L851.6 614.4M847.7 624.8L853.9 616M850.3 626.8L856 617.5M853.2 628.6L858 618.8M855.8 630.1L860.7 620.2M858.9 631.6L863 621.3M861.8 632.9L865.6 622.4M864.6 634L868.4 623.5M867.5 635L871.2 624.5M870.5 636.1L873.9 625.4M873.4 637L876.8 626.3M876.4 638L879.7 627.2M879.4 638.9L882.6 628M882.4 639.7L885.5 628.8M885.4 640.6L888.4 629.7M888.3 641.5L891.4 630.5M891.3 642.3L894.3 631.3M894.3 643.1L897.3 632.1M897.3 643.9L900.3 632.9M900.3 644.8L903.3 633.7M903.4 645.6L906.3 634.5M906.4 646.4L909.3 635.2M909.4 647.2L912.3 636M912.4 648L915.4 636.8M915.5 648.8L918.4 637.6M918.5 649.6L921.5 638.4M921.5 650.4L924.5 639.2M924.6 651.2L927.6 640M927.6 652.1L930.6 640.8M930.7 652.9L933.7 641.6M933.7 653.7L936.8 642.4M936.8 654.5L939.9 643.2M939.8 655.4L943 644.1M942.9 656.2L946.1 644.9M946 657.1L949.2 645.7M949 658L952.3 646.6M952.1 658.9L955.4 647.5M955.1 659.8L958.5 648.4M958.2 660.7L961.6 649.3M961.3 661.6L964.7 650.2M964.5 662.5L967.8 651.1M967.6 663.5L970.9 651.9M970.8 664.4L974 652.8M973.9 665.3L977.1 653.6M977.1 666.1L980.3 654.5M980.2 667L983.4 655.4M983.3 667.9L986.6 656.2M986.5 668.8L989.8 657.1M989.6 669.7L993.1 658M992.7 670.7L996.3 658.9M995.9 671.6L999.5 659.9M999 672.6L1002.8 660.9M1002.1 673.6L1006 661.9M1005.2 674.7L1009.3 663M1008.4 675.8L1012.4 664M1011.5 676.9L1015.7 665.1M1014.6 678L1018.9 666.3M1017.8 679.1L1022.1 667.4M1020.9 680.3L1025.3 668.6M1024.1 681.5L1028.5 669.8M1027.2 682.7L1031.8 671M1030.4 683.9L1034.9 672.3M1033.5 685.2L1038.1 673.5M1036.7 686.5L1041.3 674.8M1039.8 687.7L1044.5 676M1043 689L1047.7 677.3M1046.1 690.3L1050.9 678.6M1049.3 691.6L1054.1 679.9M1052.4 692.9L1057.3 681.2M1055.6 694.3L1060.5 682.6M1058.7 695.6L1063.7 683.9M1061.9 696.9L1066.9 685.2M1065.1 698.3L1070.1 686.6M1068.2 699.7L1073.3 687.9M1071.4 701L1076.4 689.3M1074.6 702.4L1079.6 690.7M1077.8 703.8L1082.8 692M1080.9 705.2L1086 693.4M1084.1 706.5L1089.2 694.8M1087.3 707.9L1092.4 696.2M1090.5 709.3L1095.6 697.6M1093.7 710.7L1098.8 698.9M1096.9 712.1L1102 700.3M1100.1 713.5L1105.2 701.7M1103.3 714.9L1108.4 703.1M1106.5 716.4L1111.7 704.5M1109.7 717.8L1114.9 706M1112.9 719.2L1118.1 707.4M1116.1 720.6L1121.3 708.8M1119.3 722L1124.5 710.2M1122.5 723.5L1127.7 711.6M1125.7 724.9L1131 713M1128.9 726.3L1134.2 714.4M1132.2 727.8L1137.4 715.9M1135.4 729.2L1140.7 717.3M1138.6 730.6L1143.9 718.7M1141.8 732.1L1147.1 720.1M1145.1 733.5L1150.4 721.6M1148.3 735L1153.6 723M1151.5 736.4L1156.9 724.4M1154.8 737.8L1160.1 725.9M1158 739.3L1163.4 727.3M1161.3 740.7L1166.6 728.7M1164.5 742.2L1169.9 730.2M1167.8 743.6L1173.1 731.6M1171.1 745.1L1176.4 733M1174.3 746.5L1179.7 734.5M1177.6 748L1182.9 735.9M1180.9 749.4L1186.2 737.4M1184.2 750.9L1189.5 738.8M1187.4 752.3L1192.8 740.2M1190.7 753.8L1196 741.7M1194 755.2L1199.3 743.1M1197.3 756.7L1202.6 744.5M1200.6 758.1L1205.9 746M1203.9 759.6L1209.2 747.4M1207.2 761L1212.5 748.8" stroke="#6e4830" stroke-width="1.5" fill="none"/>
<path d="M558.6 490.7 L562.3 492.5 L566 494.4 L569.8 496.3 L573.6 498.2 L577.4 500.1 L581.1 502 L584.9 503.9 L588.6 505.8 L592.2 507.7 L595.7 509.5 L599.2 511.2 L602.4 513 L605.6 514.6 L609.9 517 L614 519.3 L617.9 521.6 L621.6 523.8 L625.2 525.9 L628.6 527.9 L632 530 L635.2 531.9 L638.3 533.8 L642.1 536.2 L644.9 538.1 L647.5 540 L650.8 542.1 L655.2 544.7 L661.5 547.9 L664.2 549.2 L667.1 550.6 L670.3 552.2 L673.6 553.8 L677.2 555.5 L680.9 557.2 L684.8 559.1 L688.7 560.9 L692.8 562.8 L696.9 564.6 L701 566.5 L705.2 568.4 L709.3 570.2 L713.4 571.9 L717.4 573.6 L721.3 575.3 L725.1 576.8 L728.7 578.3 L733 579.9 L737.3 581.4 L741.5 582.9 L745.7 584.2 L749.8 585.5 L754 586.8 L758 588 L762.1 589.2 L766 590.4 L770 591.5 L773.8 592.7 L777.7 593.8 L781.4 595 L785.1 596.3 L788.8 597.5 L793 599 L797.1 600.6 L801.3 602.1 L805.4 603.7 L809.5 605.3 L813.5 606.9 L817.4 608.5 L821.3 610 L825 611.6 L828.6 613.1 L832 614.6 L835.3 616 L838.4 617.4 L842.5 619.5 L845.4 621.3 L847.8 623 L850.3 624.9 L853.2 626.9 L857 629 L862 631.3 L868.6 633.8 L871.5 634.7 L874.5 635.7 L877.7 636.7 L881.1 637.7 L884.6 638.7 L888.4 639.8 L892.2 640.8 L896.2 641.9 L900.3 643 L904.4 644.2 L908.7 645.3 L913 646.4 L917.3 647.6 L921.7 648.7 L926 649.9 L930.3 651.1 L934.6 652.2 L938.9 653.4 L943.1 654.5 L947.2 655.7 L951.2 656.8 L955 658 L958.8 659.1 L962.7 660.3 L966.5 661.3 L970 662.4 L973.4 663.3 L976.6 664.2 L979.8 665.1 L982.9 666 L986 666.9 L989.1 667.7 L992.2 668.7 L995.3 669.6 L998.6 670.6 L1002 671.7 L1005.6 672.9 L1009.4 674.2 L1013.5 675.7 L1017.8 677.2 L1022.4 678.9 L1027.3 680.8 L1032.6 682.9 L1038.3 685.2 L1041.1 686.3 L1043.9 687.4 L1046.8 688.6 L1049.8 689.9 L1052.9 691.1 L1056 692.5 L1059.2 693.8 L1062.5 695.2 L1065.8 696.6 L1069.2 698.1 L1072.6 699.6 L1076.1 701.1 L1079.7 702.6 L1083.3 704.2 L1086.9 705.8 L1090.6 707.4 L1094.4 709 L1098.2 710.7 L1102 712.4 L1105.8 714.1 L1109.7 715.8 L1113.6 717.5 L1117.5 719.2 L1121.5 721 L1125.4 722.7 L1129.4 724.5 L1133.4 726.3 L1137.4 728.1 L1141.4 729.8 L1145.4 731.6 L1149.4 733.4 L1153.5 735.2 L1157.5 737 L1161.5 738.8 L1165.5 740.5 L1169.5 742.3 L1173.5 744.1 L1177.4 745.8 L1181.3 747.6 L1185.3 749.3 L1189.1 751 L1193 752.7 L1196.8 754.4 L1200.6 756.1 L1204.4 757.7 L1208.1 759.4M561.4 485.3 L565 487.2 L568.7 489.1 L572.5 491 L576.3 492.9 L580.1 494.8 L583.8 496.7 L587.6 498.6 L591.3 500.5 L594.9 502.3 L598.5 504.1 L601.9 505.9 L605.2 507.7 L608.4 509.4 L612.8 511.7 L617 514 L620.9 516.2 L624.7 518.4 L628.4 520.5 L631.9 522.5 L635.2 524.5 L638.5 526.4 L641.7 528.2 L645.7 530.7 L648.7 532.8 L651.2 534.6 L654.1 536.6 L658.3 538.9 L664.5 542.1 L667.1 543.3 L670 544.7 L673.1 546.2 L676.5 547.8 L680 549.5 L683.7 551.2 L687.6 553 L691.5 554.8 L695.6 556.6 L699.7 558.5 L703.8 560.3 L707.9 562.1 L712 563.9 L716.1 565.6 L720.1 567.3 L723.9 568.8 L727.7 570.3 L731.3 571.7 L735.4 573.3 L739.6 574.7 L743.7 576.1 L747.8 577.4 L751.9 578.7 L756 579.9 L760.1 581.1 L764.1 582.2 L768.1 583.3 L772 584.5 L776 585.6 L779.8 586.8 L783.7 588 L787.5 589.2 L791.2 590.5 L795.5 592 L799.7 593.5 L804 595.1 L808.1 596.7 L812.2 598.3 L816.3 599.9 L820.2 601.5 L824.1 603.1 L827.9 604.7 L831.5 606.2 L835 607.7 L838.4 609.2 L841.6 610.6 L846.1 612.8 L849.6 614.9 L852.3 616.8 L854.7 618.5 L857.3 620.2 L860.5 621.9 L865 623.9 L871.4 626.2 L874 627.1 L876.9 628 L880 628.9 L883.3 629.9 L886.9 630.9 L890.5 631.9 L894.4 633 L898.3 634 L902.4 635.1 L906.6 636.2 L910.8 637.3 L915.1 638.4 L919.4 639.6 L923.8 640.7 L928.1 641.9 L932.5 643 L936.8 644.1 L941.1 645.3 L945.3 646.4 L949.4 647.6 L953.5 648.7 L957.4 649.8 L961.2 650.9 L965.1 652.1 L968.8 653.1 L972.3 654.1 L975.7 655 L978.9 655.9 L982.1 656.8 L985.2 657.6 L988.3 658.5 L991.5 659.4 L994.6 660.3 L997.9 661.2 L1001.3 662.3 L1004.8 663.4 L1008.4 664.6 L1012.3 665.9 L1016.4 667.3 L1020.8 668.9 L1025.5 670.6 L1030.5 672.5 L1035.9 674.5 L1041.7 676.8 L1044.4 677.9 L1047.3 679.1 L1050.2 680.3 L1053.2 681.5 L1056.3 682.8 L1059.5 684.1 L1062.7 685.5 L1066 686.8 L1069.3 688.3 L1072.8 689.7 L1076.2 691.2 L1079.7 692.7 L1083.3 694.2 L1086.9 695.8 L1090.6 697.4 L1094.3 699 L1098.1 700.6 L1101.8 702.3 L1105.7 703.9 L1109.5 705.6 L1113.4 707.3 L1117.3 709 L1121.2 710.8 L1125.2 712.5 L1129.2 714.3 L1133.2 716 L1137.2 717.8 L1141.2 719.6 L1145.2 721.3 L1149.2 723.1 L1153.2 724.9 L1157.3 726.7 L1161.3 728.4 L1165.3 730.2 L1169.3 732 L1173.3 733.7 L1177.3 735.5 L1181.2 737.2 L1185.1 739 L1189.1 740.7 L1192.9 742.4 L1196.8 744.1 L1200.6 745.7 L1204.4 747.4 L1208.2 749 L1211.9 750.6" stroke="#5e3e28" stroke-width="1" fill="none"/>
<path d="M558.6 490.7 L562.3 492.5 L566 494.4 L569.8 496.3 L573.6 498.2 L577.4 500.1 L581.1 502 L584.9 503.9 L588.6 505.8 L592.2 507.7 L595.7 509.5 L599.2 511.2 L602.4 513 L605.6 514.6 L609.9 517 L614 519.3 L617.9 521.6 L621.6 523.8 L625.2 525.9 L628.6 527.9 L632 530 L635.2 531.9 L638.3 533.8 L642.1 536.2 L644.9 538.1 L647.5 540 L650.8 542.1 L655.2 544.7 L661.5 547.9 L664.2 549.2 L667.1 550.6 L670.3 552.2 L673.6 553.8 L677.2 555.5 L680.9 557.2 L684.8 559.1 L688.7 560.9 L692.8 562.8 L696.9 564.6 L701 566.5 L705.2 568.4 L709.3 570.2 L713.4 571.9 L717.4 573.6 L721.3 575.3 L725.1 576.8 L728.7 578.3 L733 579.9 L737.3 581.4 L741.5 582.9 L745.7 584.2 L749.8 585.5 L754 586.8 L758 588 L762.1 589.2 L766 590.4 L770 591.5 L773.8 592.7 L777.7 593.8 L781.4 595 L785.1 596.3 L788.8 597.5 L793 599 L797.1 600.6 L801.3 602.1 L805.4 603.7 L809.5 605.3 L813.5 606.9 L817.4 608.5 L821.3 610 L825 611.6 L828.6 613.1 L832 614.6 L835.3 616 L838.4 617.4 L842.5 619.5 L845.4 621.3 L847.8 623 L850.3 624.9 L853.2 626.9 L857 629 L862 631.3 L868.6 633.8 L871.5 634.7 L874.5 635.7 L877.7 636.7 L881.1 637.7 L884.6 638.7 L888.4 639.8 L892.2 640.8 L896.2 641.9 L900.3 643 L904.4 644.2 L908.7 645.3 L913 646.4 L917.3 647.6 L921.7 648.7 L926 649.9 L930.3 651.1 L934.6 652.2 L938.9 653.4 L943.1 654.5 L947.2 655.7 L951.2 656.8 L955 658 L958.8 659.1 L962.7 660.3 L966.5 661.3 L970 662.4 L973.4 663.3 L976.6 664.2 L979.8 665.1 L982.9 666 L986 666.9 L989.1 667.7 L992.2 668.7 L995.3 669.6 L998.6 670.6 L1002 671.7 L1005.6 672.9 L1009.4 674.2 L1013.5 675.7 L1017.8 677.2 L1022.4 678.9 L1027.3 680.8 L1032.6 682.9 L1038.3 685.2 L1041.1 686.3 L1043.9 687.4 L1046.8 688.6 L1049.8 689.9 L1052.9 691.1 L1056 692.5 L1059.2 693.8 L1062.5 695.2 L1065.8 696.6 L1069.2 698.1 L1072.6 699.6 L1076.1 701.1 L1079.7 702.6 L1083.3 704.2 L1086.9 705.8 L1090.6 707.4 L1094.4 709 L1098.2 710.7 L1102 712.4 L1105.8 714.1 L1109.7 715.8 L1113.6 717.5 L1117.5 719.2 L1121.5 721 L1125.4 722.7 L1129.4 724.5 L1133.4 726.3 L1137.4 728.1 L1141.4 729.8 L1145.4 731.6 L1149.4 733.4 L1153.5 735.2 L1157.5 737 L1161.5 738.8 L1165.5 740.5 L1169.5 742.3 L1173.5 744.1 L1177.4 745.8 L1181.3 747.6 L1185.3 749.3 L1189.1 751 L1193 752.7 L1196.8 754.4 L1200.6 756.1 L1204.4 757.7 L1208.1 759.4" stroke="#f2ece6" stroke-width="0.8" fill="none" stroke-dasharray="1.2 1.8" opacity="0.9"/>
<path d="M561.4 485.3 L565 487.2 L568.7 489.1 L572.5 491 L576.3 492.9 L580.1 494.8 L583.8 496.7 L587.6 498.6 L591.3 500.5 L594.9 502.3 L598.5 504.1 L601.9 505.9 L605.2 507.7 L608.4 509.4 L612.8 511.7 L617 514 L620.9 516.2 L624.7 518.4 L628.4 520.5 L631.9 522.5 L635.2 524.5 L638.5 526.4 L641.7 528.2 L645.7 530.7 L648.7 532.8 L651.2 534.6 L654.1 536.6 L658.3 538.9 L664.5 542.1 L667.1 543.3 L670 544.7 L673.1 546.2 L676.5 547.8 L680 549.5 L683.7 551.2 L687.6 553 L691.5 554.8 L695.6 556.6 L699.7 558.5 L703.8 560.3 L707.9 562.1 L712 563.9 L716.1 565.6 L720.1 567.3 L723.9 568.8 L727.7 570.3 L731.3 571.7 L735.4 573.3 L739.6 574.7 L743.7 576.1 L747.8 577.4 L751.9 578.7 L756 579.9 L760.1 581.1 L764.1 582.2 L768.1 583.3 L772 584.5 L776 585.6 L779.8 586.8 L783.7 588 L787.5 589.2 L791.2 590.5 L795.5 592 L799.7 593.5 L804 595.1 L808.1 596.7 L812.2 598.3 L816.3 599.9 L820.2 601.5 L824.1 603.1 L827.9 604.7 L831.5 606.2 L835 607.7 L838.4 609.2 L841.6 610.6 L846.1 612.8 L849.6 614.9 L852.3 616.8 L854.7 618.5 L857.3 620.2 L860.5 621.9 L865 623.9 L871.4 626.2 L874 627.1 L876.9 628 L880 628.9 L883.3 629.9 L886.9 630.9 L890.5 631.9 L894.4 633 L898.3 634 L902.4 635.1 L906.6 636.2 L910.8 637.3 L915.1 638.4 L919.4 639.6 L923.8 640.7 L928.1 641.9 L932.5 643 L936.8 644.1 L941.1 645.3 L945.3 646.4 L949.4 647.6 L953.5 648.7 L957.4 649.8 L961.2 650.9 L965.1 652.1 L968.8 653.1 L972.3 654.1 L975.7 655 L978.9 655.9 L982.1 656.8 L985.2 657.6 L988.3 658.5 L991.5 659.4 L994.6 660.3 L997.9 661.2 L1001.3 662.3 L1004.8 663.4 L1008.4 664.6 L1012.3 665.9 L1016.4 667.3 L1020.8 668.9 L1025.5 670.6 L1030.5 672.5 L1035.9 674.5 L1041.7 676.8 L1044.4 677.9 L1047.3 679.1 L1050.2 680.3 L1053.2 681.5 L1056.3 682.8 L1059.5 684.1 L1062.7 685.5 L1066 686.8 L1069.3 688.3 L1072.8 689.7 L1076.2 691.2 L1079.7 692.7 L1083.3 694.2 L1086.9 695.8 L1090.6 697.4 L1094.3 699 L1098.1 700.6 L1101.8 702.3 L1105.7 703.9 L1109.5 705.6 L1113.4 707.3 L1117.3 709 L1121.2 710.8 L1125.2 712.5 L1129.2 714.3 L1133.2 716 L1137.2 717.8 L1141.2 719.6 L1145.2 721.3 L1149.2 723.1 L1153.2 724.9 L1157.3 726.7 L1161.3 728.4 L1165.3 730.2 L1169.3 732 L1173.3 733.7 L1177.3 735.5 L1181.2 737.2 L1185.1 739 L1189.1 740.7 L1192.9 742.4 L1196.8 744.1 L1200.6 745.7 L1204.4 747.4 L1208.2 749 L1211.9 750.6" stroke="#f2ece6" stroke-width="0.8" fill="none" stroke-dasharray="1.2 1.8" opacity="0.9"/>
<path d="M467.6 469.9L470.4 462.1M469.7 470.7L472.6 462.8M471.8 471.5L474.7 463.6M474 472.3L476.9 464.4M476.1 473.1L479 465.2M478.3 473.9L481.2 465.9M480.5 474.7L483.3 466.7M482.6 475.5L485.5 467.5M484.8 476.3L487.7 468.3M487 477.1L489.8 469M489.1 477.8L492 469.8M491.3 478.6L494.2 470.6M493.5 479.4L496.4 471.4M495.7 480.2L498.5 472.1M497.9 481L500.7 472.9M500.1 481.8L502.9 473.7M502.2 482.6L505.1 474.5M504.4 483.3L507.3 475.2M506.6 484.1L509.5 476M508.8 484.9L511.7 476.8M511 485.7L513.9 477.6M513.3 486.5L516.1 478.4M515.5 487.3L518.4 479.1M517.7 488.1L520.6 479.9M519.9 488.9L522.8 480.7M522.1 489.7L525 481.5M524.3 490.5L527.3 482.3M526.5 491.3L529.5 483.1M528.8 492.1L531.7 483.9M531 492.9L534 484.7M533.2 493.7L536.2 485.4M535.5 494.5L538.4 486.2M537.7 495.3L540.7 487.1M539.9 496.1L542.9 487.9M542.2 496.9L545.2 488.7M544.4 497.8L547.4 489.5M546.7 498.6L549.7 490.3M548.9 499.4L552 491.1M551.1 500.2L554.2 491.9M553.4 501.1L556.5 492.8M555.6 501.9L558.7 493.6M557.9 502.8L561 494.4M560.1 503.6L563.3 495.3M562.4 504.5L565.6 496.1M564.7 505.3L567.8 497M566.9 506.2L570.1 497.8M569.2 507.1L572.4 498.7M571.4 508L574.7 499.6M573.7 508.8L577 500.5M575.9 509.7L579.3 501.4M578.2 510.6L581.5 502.3M580.4 511.5L583.8 503.2M582.7 512.5L586.1 504.1M585 513.4L588.4 505M587.2 514.3L590.7 506M589.4 515.3L593.1 506.9M591.7 516.2L595.3 507.9M593.9 517.2L597.7 508.9M596.1 518.2L599.9 509.9M598.3 519.2L602.2 511M600.6 520.2L604.5 512M602.7 521.3L606.8 513.1M605 522.3L609 514.2M607.1 523.4L611.3 515.3M609.3 524.5L613.5 516.4M611.5 525.6L615.7 517.5M613.7 526.7L617.9 518.7M615.8 527.9L620.1 519.8M618 529L622.4 521M620.2 530.2L624.5 522.2M622.3 531.3L626.7 523.4M624.5 532.5L628.9 524.6M626.6 533.7L631.1 525.8M628.8 534.9L633.2 527M630.9 536.1L635.4 528.2M633.1 537.4L637.5 529.4M635.2 538.6L639.7 530.6M637.4 539.8L641.8 531.9M639.5 541L644 533M641.7 542.2L646.1 534.2M643.9 543.4L648.2 535.4M646.1 544.6L650.4 536.6M648.3 545.8L652.5 537.7M650.5 547L654.7 538.9M652.8 548.1L656.8 540M655 549.2L659 541M657.3 550.3L661.2 542.1M659.6 551.4L663.4 543.1M661.9 552.5L665.5 544.2M664.1 553.5L667.8 545.2M666.4 554.5L670 546.1M668.7 555.5L672.3 547.1M671 556.5L674.6 548M673.4 557.5L676.8 549M675.7 558.5L679.2 549.9M678.1 559.4L681.5 550.8M680.5 560.4L683.8 551.7M682.9 561.3L686.1 552.5M685.2 562.2L688.5 553.4M687.6 563.1L690.9 554.3M690 564L693.3 555.1M692.4 564.9L695.7 556M694.8 565.8L698.1 556.9M697.2 566.7L700.6 557.8M699.6 567.6L703 558.6M702.1 568.5L705.4 559.5M704.5 569.4L707.9 560.5M706.9 570.4L710.3 561.4M709.3 571.3L712.8 562.3M711.7 572.3L715.3 563.2M714.2 573.2L717.8 564.2M716.6 574.2L720.2 565.2M719 575.2L722.7 566.2M721.5 576.2L725.1 567.1M723.9 577.2L727.6 568.1M726.3 578.2L730.1 569.1M728.8 579.2L732.6 570.2M731.2 580.3L735 571.2M733.7 581.3L737.5 572.2M736.1 582.4L740 573.2M738.6 583.4L742.5 574.3M741.1 584.5L745 575.3M743.6 585.6L747.5 576.4M746 586.6L750 577.4M748.6 587.7L752.5 578.5M751.1 588.8L755 579.5M753.6 589.9L757.6 580.6M756.1 591L760.1 581.7M758.6 592.1L762.6 582.7M761.1 593.2L765.2 583.8M763.7 594.3L767.7 584.9M766.2 595.4L770.3 586M768.8 596.5L772.8 587.1M771.3 597.6L775.4 588.1M773.9 598.7L778 589.2M776.5 599.9L780.6 590.3M779.1 601L783.2 591.4M781.6 602.1L785.8 592.5M784.2 603.2L788.4 593.6M786.8 604.4L791 594.8M789.4 605.5L793.6 595.9M792 606.6L796.2 597M794.7 607.8L798.8 598.1M797.3 608.9L801.5 599.2M799.9 610.1L804.1 600.3M802.5 611.2L806.7 601.5M805.2 612.4L809.4 602.6M807.8 613.5L812.1 603.7M810.5 614.7L814.7 604.9M813.2 615.9L817.4 606M815.8 617L820.1 607.1M818.5 618.2L822.8 608.3M821.2 619.3L825.5 609.4M823.9 620.5L828.2 610.6M826.6 621.7L830.9 611.7M829.3 622.9L833.6 612.9M832 624L836.3 614M834.7 625.2L839 615.2M837.4 626.4L841.7 616.3M840.2 627.6L844.5 617.5M842.9 628.8L847.2 618.6M845.7 630L850 619.8M848.4 631.1L852.8 620.9M851.2 632.3L855.5 622.1M854 633.5L858.3 623.2M856.8 634.7L861.1 624.4M859.6 635.9L863.9 625.6M862.3 637.1L866.7 626.8M865.1 638.3L869.6 627.9M867.9 639.5L872.4 629.1M870.7 640.7L875.2 630.3M873.5 641.9L878 631.5M876.4 643.1L880.8 632.7M879.2 644.4L883.7 634M882 645.6L886.5 635.2M884.8 646.8L889.3 636.4M887.6 648.1L892.2 637.6M890.5 649.3L895 638.8M893.3 650.6L897.9 640.1M896.1 651.8L900.7 641.3M899 653L903.6 642.5M901.9 654.3L906.4 643.7M904.7 655.5L909.3 645M907.6 656.8L912.1 646.2M910.5 658L915 647.4M913.4 659.3L917.9 648.6M916.3 660.5L920.8 649.8M919.2 661.8L923.6 651M922.2 663L926.5 652.2M925.1 664.2L929.5 653.4M928 665.4L932.4 654.5M931 666.6L935.3 655.7M934 667.8L938.2 656.8M937 669L941.2 658M940 670.1L944.1 659.1M943 671.2L947.1 660.2M946 672.4L950.1 661.3M949.1 673.5L953 662.3M952.2 674.6L956 663.4M955.3 675.7L959 664.4M958.4 676.7L962 665.4M961.5 677.7L965 666.4M964.7 678.7L968 667.2M968 679.7L971 668.1M971.2 680.5L974 668.9M974.5 681.4L977.1 669.6M977.7 682.1L980.3 670.3M980.9 682.8L983.4 671M984.2 683.5L986.5 671.6M987.5 684.2L989.7 672.2M990.7 684.8L992.9 672.8M994 685.4L996.1 673.4M997.2 686L999.4 674M1000.5 686.6L1002.7 674.5M1003.7 687.2L1005.9 675.1M1007 687.8L1009.2 675.7M1010.2 688.4L1012.5 676.3M1013.4 689L1015.9 677M1016.5 689.7L1019.2 677.7M1019.7 690.4L1022.6 678.4M1023 691.2L1025.9 679.1M1026.1 692L1029.3 680M1029.3 692.8L1032.6 680.8M1032.4 693.7L1036 681.8M1035.5 694.6L1039.4 682.8M1038.7 695.6L1042.6 683.8M1041.8 696.7L1046 684.9M1044.9 697.7L1049.3 686M1048 698.9L1052.5 687.2M1051.1 700.1L1055.8 688.5M1054.1 701.4L1059.1 689.8M1057.3 702.7L1062.2 691.1M1060.3 704L1065.5 692.5M1063.4 705.4L1068.6 693.9M1066.4 706.8L1071.8 695.4M1069.5 708.3L1075 696.9M1072.5 709.8L1078.1 698.4M1075.6 711.3L1081.2 699.9M1078.6 712.8L1084.4 701.5M1081.6 714.4L1087.5 703.1M1084.7 716L1090.6 704.7M1087.7 717.6L1093.7 706.3M1090.7 719.2L1096.8 707.9M1093.7 720.8L1099.9 709.6M1096.8 722.5L1102.9 711.2M1099.8 724.1L1106 712.9M1102.8 725.8L1109.1 714.6M1105.9 727.5L1112.1 716.3M1108.9 729.2L1115.2 718M1111.9 730.9L1118.3 719.7M1114.9 732.6L1121.3 721.4M1118 734.4L1124.4 723.1M1121 736.1L1127.4 724.9M1124 737.8L1130.5 726.6M1127.1 739.6L1133.5 728.4M1130.1 741.4L1136.6 730.1M1133.1 743.1L1139.7 731.9M1136.2 744.9L1142.7 733.7M1139.2 746.7L1145.8 735.4M1142.3 748.4L1148.8 737.2M1145.3 750.2L1151.9 739M1148.4 752L1154.9 740.7M1151.4 753.8L1158 742.5M1154.5 755.6L1161.1 744.3M1157.5 757.4L1164.1 746.1M1160.6 759.2L1167.2 747.9M1163.7 761L1170.3 749.7M1166.8 762.8L1173.4 751.4M1169.9 764.6L1176.4 753.2M1173 766.4L1179.5 755M1176 768.2L1182.6 756.8M1179.2 770L1185.7 758.5M1182.3 771.8L1188.8 760.3M1185.4 773.6L1191.9 762.1M1188.5 775.4L1195 763.8M1191.7 777.1L1198.1 765.6M1194.8 778.9L1201.3 767.3M1198 780.7L1204.4 769.1M1201.1 782.4L1207.6 770.8" stroke="#6e4830" stroke-width="1.5" fill="none"/>
<path d="M468 468.8 L471.8 470.2 L475.7 471.7 L479.6 473.1 L483.6 474.5 L487.6 476 L491.6 477.4 L495.6 478.9 L499.6 480.3 L503.7 481.8 L507.8 483.2 L511.8 484.7 L515.9 486.1 L520 487.6 L524 489 L528.1 490.5 L532.1 491.9 L536.1 493.4 L540 494.8 L543.9 496.3 L547.8 497.7 L551.7 499.1 L555.5 500.5 L559.2 501.9 L562.9 503.3 L566.5 504.7 L570.1 506 L573.6 507.4 L577 508.8 L580.3 510.1 L583.5 511.4 L586.7 512.7 L589.7 514 L594.4 516 L598.9 518 L603.2 520 L607.3 522 L611.2 524 L615 525.9 L618.6 527.8 L622.1 529.8 L625.6 531.6 L628.9 533.5 L632.2 535.4 L635.4 537.2 L638.6 539 L641.8 540.8 L645 542.6 L648.3 544.3 L651.5 546 L654.8 547.7 L658.2 549.3 L661.6 551 L665.6 552.8 L669.4 554.4 L672.9 555.9 L676.3 557.3 L679.7 558.6 L682.9 559.9 L686.2 561.1 L689.5 562.4 L692.8 563.6 L696.3 564.9 L700 566.2 L703.8 567.7 L707.9 569.3 L712.3 571 L717 572.9 L722.1 574.9 L727.7 577.2 L730.5 578.4 L733.5 579.7 L736.6 581 L739.9 582.4 L743.2 583.8 L746.6 585.3 L750.1 586.8 L753.7 588.4 L757.4 590 L761.2 591.6 L765 593.3 L768.9 594.9 L772.8 596.6 L776.7 598.4 L780.8 600.1 L784.8 601.9 L788.9 603.6 L792.9 605.4 L797 607.2 L801.1 609 L805.2 610.7 L809.3 612.5 L813.4 614.3 L817.4 616 L821.4 617.8 L825.4 619.5 L829.3 621.2 L833.2 622.9 L837 624.5 L840.8 626.1 L844.5 627.7 L848.1 629.3 L851.7 630.8 L855.1 632.3 L858.4 633.7 L862.7 635.5 L866.8 637.2 L870.9 639 L874.9 640.7 L878.8 642.4 L882.7 644.1 L886.5 645.8 L890.3 647.4 L894 649.1 L897.7 650.7 L901.3 652.3 L904.9 653.9 L908.5 655.4 L912.1 656.9 L915.7 658.4 L919.2 659.9 L922.7 661.4 L926.2 662.9 L929.8 664.3 L933.3 665.7 L936.9 667.1 L940.4 668.5 L944 669.8 L947.6 671.2 L951.3 672.5 L954.9 673.8 L958.7 675 L962.7 676.3 L966.7 677.5 L970.6 678.6 L974.5 679.6 L978.3 680.5 L982.1 681.3 L985.9 682.1 L989.6 682.8 L993.4 683.5 L997.1 684.2 L1000.8 684.8 L1004.5 685.5 L1008.3 686.2 L1012 687 L1015.9 687.7 L1019.7 688.6 L1023.6 689.5 L1027.6 690.5 L1031.7 691.6 L1035.8 692.8 L1040.1 694.2 L1044.4 695.7 L1048.9 697.3 L1053.5 699.1 L1058.2 701.1 L1061.2 702.4 L1064.2 703.8 L1067.3 705.2 L1070.4 706.7 L1073.6 708.3 L1076.8 709.9 L1080.1 711.5 L1083.4 713.2 L1086.7 715 L1090.1 716.8 L1093.5 718.6 L1097 720.5 L1100.4 722.4 L1104 724.3 L1107.5 726.3 L1111.1 728.3 L1114.7 730.3 L1118.3 732.4 L1121.9 734.5 L1125.5 736.6 L1129.2 738.7 L1132.9 740.8 L1136.6 743 L1140.3 745.1 L1144 747.3 L1147.7 749.5 L1151.4 751.6 L1155.1 753.8 L1158.8 756 L1162.6 758.2 L1166.3 760.3 L1170 762.5 L1173.7 764.6 L1177.3 766.8 L1181 768.9 L1184.7 771 L1188.3 773.1 L1192 775.1 L1195.6 777.2 L1199.1 779.2 L1202.7 781.2M470 463.2 L473.9 464.6 L477.7 466 L481.7 467.4 L485.6 468.8 L489.6 470.3 L493.6 471.7 L497.6 473.1 L501.7 474.6 L505.8 476 L509.8 477.4 L513.9 478.9 L518 480.3 L522.1 481.8 L526.1 483.2 L530.2 484.6 L534.2 486.1 L538.2 487.5 L542.2 488.9 L546.1 490.3 L550 491.7 L553.9 493.2 L557.7 494.6 L561.4 495.9 L565.1 497.3 L568.8 498.7 L572.4 500.1 L575.9 501.4 L579.3 502.8 L582.7 504.1 L586 505.4 L589.2 506.7 L592.3 508 L597 510.1 L601.6 512.1 L606 514.2 L610.1 516.2 L614.1 518.2 L618 520.2 L621.7 522.1 L625.2 524.1 L628.7 526 L632.1 527.9 L635.4 529.7 L638.6 531.5 L641.8 533.3 L645 535.1 L648.1 536.9 L651.3 538.6 L654.5 540.2 L657.7 541.9 L661 543.5 L664.4 545 L668.3 546.8 L671.9 548.4 L675.4 549.8 L678.8 551.2 L682.1 552.4 L685.3 553.7 L688.5 554.9 L691.8 556 L695.2 557.3 L698.7 558.5 L702.3 559.9 L706.2 561.3 L710.4 562.8 L714.8 564.5 L719.6 566.4 L724.8 568.5 L730.3 570.8 L733.2 572 L736.2 573.2 L739.4 574.5 L742.6 575.9 L746 577.3 L749.4 578.7 L752.9 580.2 L756.6 581.7 L760.3 583.3 L764 584.9 L767.9 586.5 L771.7 588.2 L775.7 589.9 L779.7 591.6 L783.7 593.3 L787.7 595 L791.8 596.7 L795.9 598.5 L800 600.2 L804.1 602 L808.2 603.7 L812.3 605.5 L816.4 607.2 L820.4 609 L824.5 610.7 L828.4 612.4 L832.4 614 L836.3 615.7 L840.1 617.3 L843.9 618.9 L847.6 620.5 L851.2 622 L854.7 623.5 L858.2 624.9 L861.6 626.3 L865.8 628.1 L870 629.9 L874.1 631.6 L878.1 633.3 L882 635 L885.9 636.7 L889.8 638.3 L893.5 640 L897.3 641.6 L900.9 643.2 L904.6 644.7 L908.2 646.3 L911.8 647.8 L915.3 649.3 L918.9 650.8 L922.4 652.3 L925.9 653.7 L929.4 655.1 L932.9 656.5 L936.4 657.9 L939.9 659.3 L943.4 660.6 L946.9 661.9 L950.5 663.2 L954.1 664.5 L957.7 665.7 L961.3 667 L965.2 668.2 L969 669.3 L972.8 670.3 L976.5 671.3 L980.2 672.1 L983.9 672.9 L987.6 673.6 L991.2 674.3 L994.9 675 L998.6 675.6 L1002.3 676.3 L1006.1 676.9 L1009.9 677.6 L1013.7 678.3 L1017.7 679.1 L1021.6 680 L1025.7 680.9 L1029.9 681.9 L1034.1 683.1 L1038.4 684.3 L1042.8 685.7 L1047.4 687.3 L1052.1 688.9 L1056.9 690.8 L1061.8 692.9 L1064.8 694.2 L1068 695.6 L1071.1 697.1 L1074.3 698.6 L1077.6 700.1 L1080.8 701.8 L1084.2 703.4 L1087.5 705.2 L1090.9 706.9 L1094.4 708.7 L1097.8 710.6 L1101.3 712.4 L1104.8 714.4 L1108.4 716.3 L1112 718.3 L1115.6 720.3 L1119.2 722.3 L1122.8 724.4 L1126.5 726.5 L1130.2 728.6 L1133.8 730.7 L1137.5 732.8 L1141.2 734.9 L1145 737.1 L1148.7 739.3 L1152.4 741.4 L1156.1 743.6 L1159.8 745.7 L1163.6 747.9 L1167.3 750.1 L1171 752.2 L1174.7 754.4 L1178.4 756.5 L1182.1 758.6 L1185.7 760.7 L1189.4 762.8 L1193 764.9 L1196.6 766.9 L1200.2 768.9 L1203.8 770.9 L1207.3 772.8" stroke="#5e3e28" stroke-width="1" fill="none"/>
<path d="M468 468.8 L471.8 470.2 L475.7 471.7 L479.6 473.1 L483.6 474.5 L487.6 476 L491.6 477.4 L495.6 478.9 L499.6 480.3 L503.7 481.8 L507.8 483.2 L511.8 484.7 L515.9 486.1 L520 487.6 L524 489 L528.1 490.5 L532.1 491.9 L536.1 493.4 L540 494.8 L543.9 496.3 L547.8 497.7 L551.7 499.1 L555.5 500.5 L559.2 501.9 L562.9 503.3 L566.5 504.7 L570.1 506 L573.6 507.4 L577 508.8 L580.3 510.1 L583.5 511.4 L586.7 512.7 L589.7 514 L594.4 516 L598.9 518 L603.2 520 L607.3 522 L611.2 524 L615 525.9 L618.6 527.8 L622.1 529.8 L625.6 531.6 L628.9 533.5 L632.2 535.4 L635.4 537.2 L638.6 539 L641.8 540.8 L645 542.6 L648.3 544.3 L651.5 546 L654.8 547.7 L658.2 549.3 L661.6 551 L665.6 552.8 L669.4 554.4 L672.9 555.9 L676.3 557.3 L679.7 558.6 L682.9 559.9 L686.2 561.1 L689.5 562.4 L692.8 563.6 L696.3 564.9 L700 566.2 L703.8 567.7 L707.9 569.3 L712.3 571 L717 572.9 L722.1 574.9 L727.7 577.2 L730.5 578.4 L733.5 579.7 L736.6 581 L739.9 582.4 L743.2 583.8 L746.6 585.3 L750.1 586.8 L753.7 588.4 L757.4 590 L761.2 591.6 L765 593.3 L768.9 594.9 L772.8 596.6 L776.7 598.4 L780.8 600.1 L784.8 601.9 L788.9 603.6 L792.9 605.4 L797 607.2 L801.1 609 L805.2 610.7 L809.3 612.5 L813.4 614.3 L817.4 616 L821.4 617.8 L825.4 619.5 L829.3 621.2 L833.2 622.9 L837 624.5 L840.8 626.1 L844.5 627.7 L848.1 629.3 L851.7 630.8 L855.1 632.3 L858.4 633.7 L862.7 635.5 L866.8 637.2 L870.9 639 L874.9 640.7 L878.8 642.4 L882.7 644.1 L886.5 645.8 L890.3 647.4 L894 649.1 L897.7 650.7 L901.3 652.3 L904.9 653.9 L908.5 655.4 L912.1 656.9 L915.7 658.4 L919.2 659.9 L922.7 661.4 L926.2 662.9 L929.8 664.3 L933.3 665.7 L936.9 667.1 L940.4 668.5 L944 669.8 L947.6 671.2 L951.3 672.5 L954.9 673.8 L958.7 675 L962.7 676.3 L966.7 677.5 L970.6 678.6 L974.5 679.6 L978.3 680.5 L982.1 681.3 L985.9 682.1 L989.6 682.8 L993.4 683.5 L997.1 684.2 L1000.8 684.8 L1004.5 685.5 L1008.3 686.2 L1012 687 L1015.9 687.7 L1019.7 688.6 L1023.6 689.5 L1027.6 690.5 L1031.7 691.6 L1035.8 692.8 L1040.1 694.2 L1044.4 695.7 L1048.9 697.3 L1053.5 699.1 L1058.2 701.1 L1061.2 702.4 L1064.2 703.8 L1067.3 705.2 L1070.4 706.7 L1073.6 708.3 L1076.8 709.9 L1080.1 711.5 L1083.4 713.2 L1086.7 715 L1090.1 716.8 L1093.5 718.6 L1097 720.5 L1100.4 722.4 L1104 724.3 L1107.5 726.3 L1111.1 728.3 L1114.7 730.3 L1118.3 732.4 L1121.9 734.5 L1125.5 736.6 L1129.2 738.7 L1132.9 740.8 L1136.6 743 L1140.3 745.1 L1144 747.3 L1147.7 749.5 L1151.4 751.6 L1155.1 753.8 L1158.8 756 L1162.6 758.2 L1166.3 760.3 L1170 762.5 L1173.7 764.6 L1177.3 766.8 L1181 768.9 L1184.7 771 L1188.3 773.1 L1192 775.1 L1195.6 777.2 L1199.1 779.2 L1202.7 781.2" stroke="#f2ece6" stroke-width="0.8" fill="none" stroke-dasharray="1.2 1.8" opacity="0.9"/>
<path d="M470 463.2 L473.9 464.6 L477.7 466 L481.7 467.4 L485.6 468.8 L489.6 470.3 L493.6 471.7 L497.6 473.1 L501.7 474.6 L505.8 476 L509.8 477.4 L513.9 478.9 L518 480.3 L522.1 481.8 L526.1 483.2 L530.2 484.6 L534.2 486.1 L538.2 487.5 L542.2 488.9 L546.1 490.3 L550 491.7 L553.9 493.2 L557.7 494.6 L561.4 495.9 L565.1 497.3 L568.8 498.7 L572.4 500.1 L575.9 501.4 L579.3 502.8 L582.7 504.1 L586 505.4 L589.2 506.7 L592.3 508 L597 510.1 L601.6 512.1 L606 514.2 L610.1 516.2 L614.1 518.2 L618 520.2 L621.7 522.1 L625.2 524.1 L628.7 526 L632.1 527.9 L635.4 529.7 L638.6 531.5 L641.8 533.3 L645 535.1 L648.1 536.9 L651.3 538.6 L654.5 540.2 L657.7 541.9 L661 543.5 L664.4 545 L668.3 546.8 L671.9 548.4 L675.4 549.8 L678.8 551.2 L682.1 552.4 L685.3 553.7 L688.5 554.9 L691.8 556 L695.2 557.3 L698.7 558.5 L702.3 559.9 L706.2 561.3 L710.4 562.8 L714.8 564.5 L719.6 566.4 L724.8 568.5 L730.3 570.8 L733.2 572 L736.2 573.2 L739.4 574.5 L742.6 575.9 L746 577.3 L749.4 578.7 L752.9 580.2 L756.6 581.7 L760.3 583.3 L764 584.9 L767.9 586.5 L771.7 588.2 L775.7 589.9 L779.7 591.6 L783.7 593.3 L787.7 595 L791.8 596.7 L795.9 598.5 L800 600.2 L804.1 602 L808.2 603.7 L812.3 605.5 L816.4 607.2 L820.4 609 L824.5 610.7 L828.4 612.4 L832.4 614 L836.3 615.7 L840.1 617.3 L843.9 618.9 L847.6 620.5 L851.2 622 L854.7 623.5 L858.2 624.9 L861.6 626.3 L865.8 628.1 L870 629.9 L874.1 631.6 L878.1 633.3 L882 635 L885.9 636.7 L889.8 638.3 L893.5 640 L897.3 641.6 L900.9 643.2 L904.6 644.7 L908.2 646.3 L911.8 647.8 L915.3 649.3 L918.9 650.8 L922.4 652.3 L925.9 653.7 L929.4 655.1 L932.9 656.5 L936.4 657.9 L939.9 659.3 L943.4 660.6 L946.9 661.9 L950.5 663.2 L954.1 664.5 L957.7 665.7 L961.3 667 L965.2 668.2 L969 669.3 L972.8 670.3 L976.5 671.3 L980.2 672.1 L983.9 672.9 L987.6 673.6 L991.2 674.3 L994.9 675 L998.6 675.6 L1002.3 676.3 L1006.1 676.9 L1009.9 677.6 L1013.7 678.3 L1017.7 679.1 L1021.6 680 L1025.7 680.9 L1029.9 681.9 L1034.1 683.1 L1038.4 684.3 L1042.8 685.7 L1047.4 687.3 L1052.1 688.9 L1056.9 690.8 L1061.8 692.9 L1064.8 694.2 L1068 695.6 L1071.1 697.1 L1074.3 698.6 L1077.6 700.1 L1080.8 701.8 L1084.2 703.4 L1087.5 705.2 L1090.9 706.9 L1094.4 708.7 L1097.8 710.6 L1101.3 712.4 L1104.8 714.4 L1108.4 716.3 L1112 718.3 L1115.6 720.3 L1119.2 722.3 L1122.8 724.4 L1126.5 726.5 L1130.2 728.6 L1133.8 730.7 L1137.5 732.8 L1141.2 734.9 L1145 737.1 L1148.7 739.3 L1152.4 741.4 L1156.1 743.6 L1159.8 745.7 L1163.6 747.9 L1167.3 750.1 L1171 752.2 L1174.7 754.4 L1178.4 756.5 L1182.1 758.6 L1185.7 760.7 L1189.4 762.8 L1193 764.9 L1196.6 766.9 L1200.2 768.9 L1203.8 770.9 L1207.3 772.8" stroke="#f2ece6" stroke-width="0.8" fill="none" stroke-dasharray="1.2 1.8" opacity="0.9"/>
<path d="M366.1 242.3L365.9 239.7M457 234.3L457 231.7M547.8 241.3L548.2 238.7" stroke="#e81010" stroke-width="1.1" fill="none"/>
<path d="M371.1 246.3L370.9 243.7M466 243.3L466 240.7M540 242.3L540 239.7" stroke="#e81010" stroke-width="1.1" fill="none"/>
<path d="M374.9 249.8L375.1 247.2M392.5 251.2L392.7 248.6M443.1 252.8L442.9 250.2M483.2 248.3L482.8 245.7" stroke="#e81010" stroke-width="1.1" fill="none"/>
<path d="M178.6 214.8L177.4 211.2M334.6 154.5L333.4 150.5M529.4 165L530.6 161M1081.1 349L1082.9 344" stroke="#e81010" stroke-width="1.1" fill="none"/>
<path d="M609 207.3L611 204.7M612.4 210.7L614.5 208M892.5 286L893.5 282" stroke="#e81010" stroke-width="1.1" fill="none"/>
<path d="M1081.6 350L1082.4 346M881.3 541.4L878.7 548.6M632 449.2L630 454.8M280.3 349.3L279.7 354.7M157.4 330.6L156.6 335.4" stroke="#e81010" stroke-width="1.3" fill="none"/>
<path d="M957.8 571.5L962.2 564.5M1003.5 598.8L1006.5 591.2M1242.1 579.9L1237.9 574.1" stroke="#e81010" stroke-width="1.6" fill="none"/>
<path d="M140.7 357.5L141.3 352.5M321.9 375.9L322 370.9M369.7 379.5L370.3 374.5M404.6 384.4L405.4 379.6" stroke="#e81010" stroke-width="1.1" fill="none"/>
<path d="M129.7 366.5L130.3 361.5M244.8 380.5L245.2 375.5M367.8 384.5L368.2 379.5" stroke="#e81010" stroke-width="1.1" fill="none"/>
<path d="M121.7 395.7L122.3 390.3M299.8 415.7L300.2 410.3M509.3 412.7L510.7 407.3" stroke="#e81010" stroke-width="1.1" fill="none"/>
<path d="M348.7 264.9L349.3 261.1M886.2 325.5L885.8 320.5" stroke="#e81010" stroke-width="1.1" fill="none"/>
<path d="M971.3 341.4L972.7 336.6M1015.3 353.4L1016.7 348.6" stroke="#e81010" stroke-width="1.1" fill="none"/>
<path d="M583.4 253.8L584.6 250.2M668.3 287.2L670.3 283.6M794.1 343.2L795.7 339M990.3 356.5L989.7 351.5" stroke="#e81010" stroke-width="1.1" fill="none"/>
<path d="M177.3 282.6L178.7 287.4M197.3 470.3L196.7 463.7M420.4 445L419.6 439M569.7 439L570.3 433" stroke="#e81010" stroke-width="1.3" fill="none"/>
<path d="M173.5 295.7L176.5 300.3M320.7 435.4L319.3 429.6M420.4 410.5L419.6 404.5M509.2 412.9L510.8 407.1" stroke="#e81010" stroke-width="1.4" fill="none"/>
<path d="M380.3 452L379.7 446M481.9 445L482.1 439M555.2 454.9L556.8 449.1M893.6 585.9L896.4 578.1M1275.4 504L1268.6 506M1231 435.1L1227 438.9" stroke="#e81010" stroke-width="1.5" fill="none"/>
<path d="M379.9 453L380.1 447M580.7 503L583.3 497M833.6 600.9L836.4 593.1M1273.8 538.5L1266.2 537.5" stroke="#e81010" stroke-width="1.6" fill="none"/>
<path d="M558.5 490.9L561.5 485.1M605.4 514.9L608.6 509.1M661.4 548.2L664.6 541.8M728.6 578.6L731.4 571.4M1038.2 685.6L1041.8 676.4M1207.9 759.8L1212.1 750.2" stroke="#e81010" stroke-width="1.7" fill="none"/>
<path d="M467.9 469.1L470.1 462.9M1202.5 781.6L1207.5 772.4" stroke="#e81010" stroke-width="1.7" fill="none"/>
<rect x="59" y="353" width="2.6" height="2.4" fill="#0c1c9c"/>
<rect x="36" y="401" width="2.6" height="2.4" fill="#0c1c9c"/>
<rect x="78" y="423" width="2.6" height="2.4" fill="#0c1c9c"/>
<rect x="121" y="445" width="2.6" height="2.4" fill="#0c1c9c"/>
<rect x="99" y="371" width="2.6" height="2.4" fill="#0c1c9c"/>
<rect x="155" y="343" width="2.6" height="2.4" fill="#0c1c9c"/>
<rect x="140" y="391" width="2.6" height="2.4" fill="#0c1c9c"/>
<rect x="184" y="411" width="2.6" height="2.4" fill="#0c1c9c"/>
<rect x="230" y="433" width="2.6" height="2.4" fill="#0c1c9c"/>
<rect x="286" y="400" width="2.6" height="2.4" fill="#0c1c9c"/>
<rect x="291" y="350" width="2.6" height="2.4" fill="#0c1c9c"/>
<rect x="169" y="469" width="2.6" height="2.4" fill="#0c1c9c"/>
<rect x="219" y="495" width="2.6" height="2.4" fill="#0c1c9c"/>
<rect x="273" y="521" width="2.6" height="2.4" fill="#0c1c9c"/>
<rect x="240" y="380" width="2.6" height="2.4" fill="#0c1c9c"/>
<rect x="280" y="456" width="2.6" height="2.4" fill="#0c1c9c"/>
<rect x="333" y="480" width="2.6" height="2.4" fill="#0c1c9c"/>
<rect x="335" y="421" width="2.6" height="2.4" fill="#0c1c9c"/>
<rect x="524" y="350" width="2.6" height="2.4" fill="#0c1c9c"/>
<rect x="613" y="340" width="2.6" height="2.4" fill="#0c1c9c"/>
<rect x="575" y="368" width="2.6" height="2.4" fill="#0c1c9c"/>
<rect x="483" y="379" width="2.6" height="2.4" fill="#0c1c9c"/>
<rect x="386" y="389" width="2.6" height="2.4" fill="#0c1c9c"/>
<rect x="338" y="370" width="2.6" height="2.4" fill="#0c1c9c"/>
<rect x="535" y="398" width="2.6" height="2.4" fill="#0c1c9c"/>
<rect x="436" y="410" width="2.6" height="2.4" fill="#0c1c9c"/>
<rect x="591" y="419" width="2.6" height="2.4" fill="#0c1c9c"/>
<rect x="491" y="431" width="2.6" height="2.4" fill="#0c1c9c"/>
<rect x="542" y="458" width="2.6" height="2.4" fill="#0c1c9c"/>
<rect x="610" y="479" width="2.6" height="2.4" fill="#0c1c9c"/>
<rect x="514" y="479" width="2.6" height="2.4" fill="#0c1c9c"/>
<rect x="651" y="442" width="2.6" height="2.4" fill="#0c1c9c"/>
<rect x="715" y="465" width="2.6" height="2.4" fill="#0c1c9c"/>
<rect x="783" y="491" width="2.6" height="2.4" fill="#0c1c9c"/>
<rect x="855" y="518" width="2.6" height="2.4" fill="#0c1c9c"/>
<rect x="933" y="547" width="2.6" height="2.4" fill="#0c1c9c"/>
<rect x="676" y="505" width="2.6" height="2.4" fill="#0c1c9c"/>
<rect x="746" y="533" width="2.6" height="2.4" fill="#0c1c9c"/>
<rect x="821" y="563" width="2.6" height="2.4" fill="#0c1c9c"/>
<rect x="901" y="595" width="2.6" height="2.4" fill="#0c1c9c"/>
<rect x="1041" y="530" width="2.6" height="2.4" fill="#0c1c9c"/>
<rect x="1126" y="561" width="2.6" height="2.4" fill="#0c1c9c"/>
<rect x="989" y="631" width="2.6" height="2.4" fill="#0c1c9c"/>
<rect x="1185" y="708" width="2.6" height="2.4" fill="#0c1c9c"/>
<rect x="1084" y="667" width="2.6" height="2.4" fill="#0c1c9c"/>
<rect x="424" y="278" width="2.6" height="2.4" fill="#0c1c9c"/>
<rect x="468" y="293" width="2.6" height="2.4" fill="#0c1c9c"/>
<rect x="514" y="307" width="2.6" height="2.4" fill="#0c1c9c"/>
<rect x="116" y="327" width="2.6" height="2.4" fill="#0c1c9c"/>
<rect x="987" y="347" width="2.6" height="2.4" fill="#0c1c9c"/>
<line x1="594.5" y1="70" x2="603" y2="409" stroke="#00f000" stroke-width="1.2" stroke-dasharray="2 2"/>
</svg>
<svg width="1280" height="19" viewBox="0 1005 1280 19" style="position:absolute;left:0;top:1005px">
<defs><linearGradient id="gg" x1="0" y1="0" x2="0" y2="1"><stop offset="0" stop-color="#f4f6f6"/><stop offset="1" stop-color="#d8dcdc"/></linearGradient></defs>
<rect x="0" y="1005" width="1280" height="2" fill="#dcd8d2"/>
<rect x="0" y="1007" width="1280" height="1" fill="#808080"/>
<rect x="0" y="1008" width="1280" height="15" fill="#d6d2cc"/>
<rect x="0" y="1023" width="1280" height="1" fill="#f2f2f0"/>
<rect x="0" y="1007" width="1" height="16" fill="#808080"/>
<path d="M1268 1023 L1279 1012 M1271 1023 L1279 1015 M1274 1023 L1279 1018 M1277 1023 L1279 1021" stroke="#8a8782" stroke-width="1"/>
</svg>
<svg width="44" height="44" viewBox="1073 980 44 44" style="position:absolute;left:1073px;top:980px">
<rect x="1074.5" y="982.5" width="40" height="39" rx="3" fill="#b8c4cc" opacity="0.6"/>
<rect x="1076" y="984" width="37" height="36" rx="2" fill="url(#gg)" stroke="#9aa4ac" stroke-width="1"/>
<circle cx="1094.5" cy="1002" r="13" fill="none" stroke="#c0c4c8" stroke-width="0.8"/>
<path d="M1085 1011 L1087 1009 M1083 1003 L1086 1003 M1085 995 L1087 997 M1094.5 990 V992.5 M1104 995 L1102 997 M1106 1003 L1103 1003 M1104 1011 L1102 1009 M1089 991 L1090 993 M1100 991 L1099 993" stroke="#707478" stroke-width="0.8"/>
<circle cx="1094.5" cy="1002" r="4" fill="#d0d8dc"/>
<circle cx="1094.5" cy="1002" r="2.6" fill="#4a6272"/>
<path d="M1094 1002.5 L1103.5 994.5" stroke="#2a3a44" stroke-width="1.3"/>
</svg>
</body></html>
